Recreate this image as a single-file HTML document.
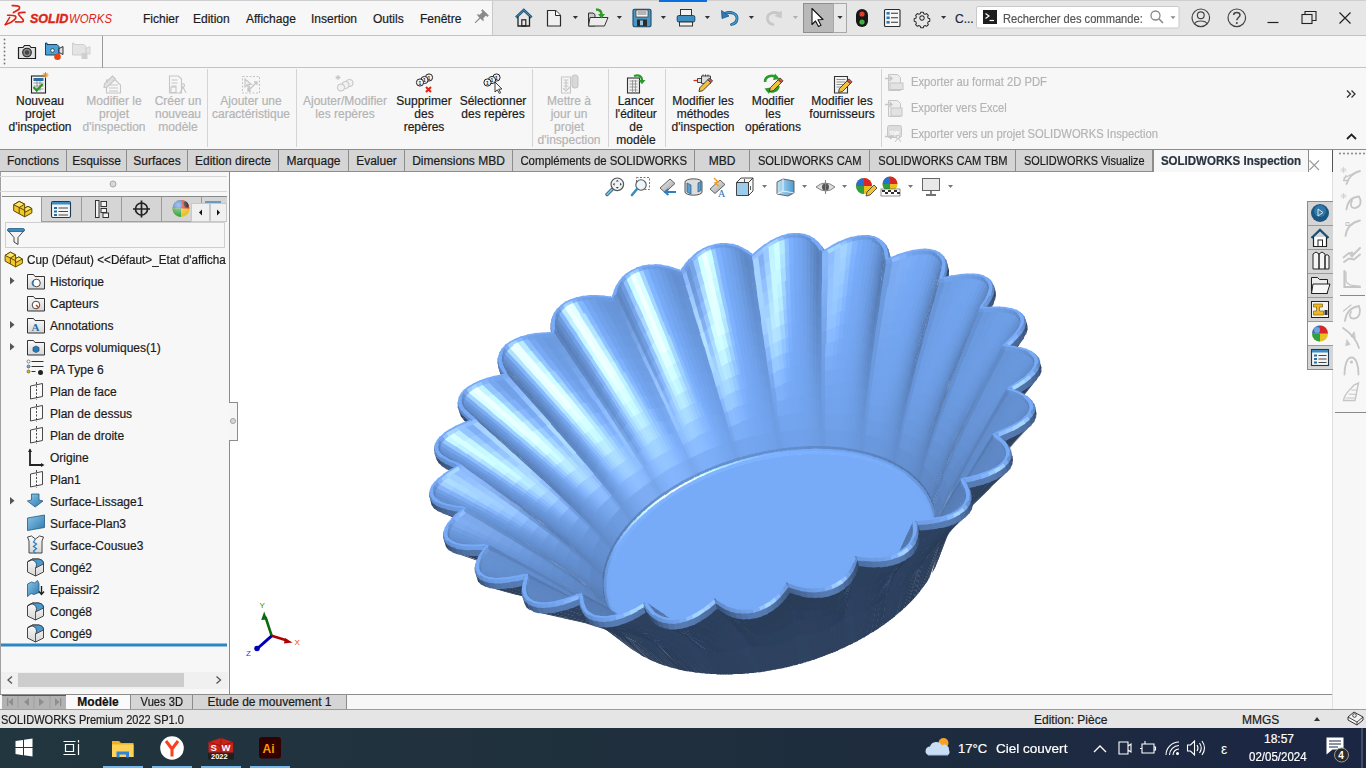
<!DOCTYPE html>
<html><head><meta charset="utf-8">
<style>
*{margin:0;padding:0;box-sizing:border-box}
html,body{width:1366px;height:768px;overflow:hidden;background:#fff;font-family:"Liberation Sans",sans-serif;font-size:12px;color:#1b1b1b;-webkit-text-stroke:0.2px}
.a{position:absolute}
.t{position:absolute;white-space:nowrap;line-height:14px;margin-top:1px}
.c{text-align:center}
.dis{color:#b4b4b4}
svg{position:absolute;overflow:visible}
</style></head><body>

<!-- TITLE BAR -->
<div class="a" style="left:0;top:0;width:1366px;height:36px;background:#f7f7f7;border-top:1px solid #cfcfcf;border-bottom:1px solid #c2c2c2"></div>
<div class="a" style="left:492px;top:1px;width:874px;height:34px;background:#e6e6e6;border-left:1px solid #c8c8c8"></div>


<!-- TITLE ICONS -->
<svg class="a" style="left:0;top:0" width="1366" height="36" viewBox="0 0 1366 36">
 <!-- 3DS logo -->
 <g fill="none" stroke="#dd2418" stroke-linecap="round" stroke-linejoin="round">
  <path d="M12.3 5.6 C15 5.5 17.5 5.6 19 6.4 C20 7.2 19.6 8.6 18.3 9.8 L13.4 12.6" stroke-width="1.7"/>
  <path d="M7.6 15.3 C10 15.2 13.5 15.3 15.2 15.9 C16.4 16.6 16 18.2 14.6 19.6 C12.5 21.8 8.5 23.8 5.3 24.6" stroke-width="1.6"/>
  <path d="M9.7 17.4 L5.3 24.6" stroke-width="1.5"/>
  <path d="M25 12.4 C22.5 12.3 20 12.4 18.9 12.9 C18.2 13.4 18.4 14.3 19.2 15.2 L22.8 19.3 C23.8 20.6 23.4 21.9 21.6 22 L15.6 21.9" stroke-width="1.7"/>
 </g>
 <text x="30" y="23" font-family="Liberation Sans" font-weight="bold" font-style="italic" font-size="12.5" fill="#dd2418" stroke="#dd2418" stroke-width="0.4">SOLID</text>
 <text x="69" y="23" font-family="Liberation Sans" font-style="italic" font-size="12.5" fill="#dd2418" textLength="43" lengthAdjust="spacingAndGlyphs">WORKS</text>
 <!-- pin -->
 <g transform="translate(480,18) rotate(45)" fill="#8a8a8a">
  <rect x="-2.5" y="-7" width="5" height="7"/>
  <rect x="-4.5" y="-8" width="9" height="2"/>
  <path d="M-5 0 L5 0 L3 -2 L-3 -2Z"/>
  <rect x="-0.6" y="0" width="1.2" height="7"/>
 </g>
 <!-- home -->
 <g>
  <path d="M516 17.5 L523.8 10 L531.6 17.5" fill="none" stroke="#1e5275" stroke-width="2.6" stroke-linejoin="miter"/>
  <path d="M516 17.5 L523.8 10 L531.6 17.5" fill="none" stroke="#5d9cc2" stroke-width="0.9"/>
  <path d="M518 16.5 V26 H529.5 V16.5" fill="none" stroke="#222" stroke-width="1.3"/>
  <rect x="521.8" y="19.8" width="4" height="6.2" fill="none" stroke="#222" stroke-width="1.2"/>
 </g>
 <!-- new doc -->
 <path d="M547.5 10.5 H555.5 L560.5 15.5 V26 H547.5 Z" fill="#f0f0f0" stroke="#2a2a2a" stroke-width="1.2" stroke-linejoin="round"/>
 <path d="M555.5 10.5 V15.5 H560.5" fill="#fff" stroke="#2a2a2a" stroke-width="1"/>
 <!-- arrows -->
 <g fill="#333">
  <path d="M572.8 16 h5.2 l-2.6 3z"/>
  <path d="M616.8 16 h5.2 l-2.6 3z"/>
  <path d="M660.8 16 h5.2 l-2.6 3z"/>
  <path d="M704.8 16 h5.2 l-2.6 3z"/>
  <path d="M748.8 16 h5.2 l-2.6 3z"/>
  <path d="M792.8 16 h5.2 l-2.6 3z" fill="#b0b0b0"/>
  <path d="M837.4 16 h5.2 l-2.6 3z"/>
  <path d="M941 16 h5.2 l-2.6 3z"/>
 </g>
 <!-- open folder -->
 <path d="M588.5 13 H593 L595 14.5 V26 H588.5 Z" fill="#c9c9c9" stroke="#333" stroke-width="1"/>
 <path d="M590 17.5 H608 L604.5 26 H588.5 Z" fill="#ececec" stroke="#333" stroke-width="1" stroke-linejoin="round"/>
 <path d="M596 9.5 C600 9.5 601.5 11 601.5 14.5" fill="none" stroke="#2e9a2a" stroke-width="2.4"/>
 <path d="M598 14 L605 14 L601.5 18.5Z" fill="#2e9a2a"/>
 <!-- save -->
 <rect x="633" y="9.3" width="18" height="17.5" rx="1.5" fill="#4a97c6" stroke="#1d4a6b" stroke-width="1.1"/>
 <rect x="636" y="10" width="12" height="7" fill="#f5f5f5" stroke="#333" stroke-width="0.7"/>
 <path d="M637.5 12 h9 M637.5 14 h9" stroke="#555" stroke-width="0.8"/>
 <rect x="637" y="19.5" width="10" height="6.8" fill="#2b2b2b"/>
 <rect x="640" y="20.5" width="3" height="4.8" fill="#9ac6e2"/>
 <!-- printer -->
 <rect x="680.5" y="9.5" width="11" height="6" fill="#f2f2f2" stroke="#333" stroke-width="1"/>
 <rect x="677.2" y="15.5" width="17.6" height="6.5" rx="1.5" fill="#3f8fc0" stroke="#1b4866" stroke-width="1"/>
 <rect x="679.5" y="22" width="13" height="4" fill="#f3f3f3" stroke="#333" stroke-width="1"/>
 <!-- undo -->
 <path d="M724.5 13.5 C731 11 737.5 13.5 737 19 C736.6 22.5 734 24 731.5 24.5" fill="none" stroke="#1c5a88" stroke-width="2.8" stroke-linecap="round"/>
 <path d="M724.5 13.5 C731 11 737.5 13.5 737 19 C736.6 22.5 734 24 731.5 24.5" fill="none" stroke="#4ea6dc" stroke-width="1.2" stroke-linecap="round"/>
 <path d="M721.5 10.5 L722 18.5 L729 16Z" fill="#2e7ab4" stroke="#1c5a88" stroke-width="0.8"/>
 <!-- redo (disabled) -->
 <path d="M779.5 13.5 C773 11 767 13.5 767.5 19 C768 22.5 770.5 24 773 24.5" fill="none" stroke="#c8c8c8" stroke-width="2.8" stroke-linecap="round"/>
 <path d="M782 10.5 L781.5 18.5 L774.5 16Z" fill="#c8c8c8"/>
 <!-- select btn -->
 <rect x="803.5" y="3.5" width="30" height="29" fill="#b9b9b9" stroke="#8e8e8e" stroke-width="1"/>
 <rect x="833.5" y="3.5" width="13" height="29" fill="#e8e8e8" stroke="#a8a8a8" stroke-width="1"/>
 <path d="M812 8.5 V24.5 L815.5 21 L818.5 26.5 L821 25.3 L818 19.8 L823 19.5 Z" fill="#fff" stroke="#111" stroke-width="1.1" stroke-linejoin="round"/>
 <path d="M837.4 16 h5.2 l-2.6 3z" fill="#333"/>
 <!-- traffic light -->
 <rect x="856" y="9" width="12" height="18" rx="6" fill="#161616"/>
 <circle cx="862" cy="14" r="2.6" fill="#e23d2a"/>
 <circle cx="862" cy="22" r="2.6" fill="#3fae3a"/>
 <!-- list -->
 <rect x="884.5" y="9.5" width="15.5" height="17" rx="1" fill="#f7f7f7" stroke="#2b2b2b" stroke-width="1.1"/>
 <g fill="#2a7ab8"><rect x="886.5" y="12" width="3.2" height="2.6"/><rect x="886.5" y="16.5" width="3.2" height="2.6"/><rect x="886.5" y="21" width="3.2" height="2.6"/></g>
 <path d="M891 13.3 h7 M891 17.8 h7 M891 22.3 h7" stroke="#333" stroke-width="1.1"/>
 <!-- gear -->
 <g transform="translate(922,18) scale(0.78)" fill="none" stroke="#2b2b2b" stroke-width="1.3">
  <path d="M-1.6 -7.5 h3.2 l0.6 2 l1.9 0.8 l1.8 -1 l2.3 2.3 l-1 1.8 l0.8 1.9 l2 0.6 v3.2 l-2 0.6 l-0.8 1.9 l1 1.8 l-2.3 2.3 l-1.8 -1 l-1.9 0.8 l-0.6 2 h-3.2 l-0.6 -2 l-1.9 -0.8 l-1.8 1 l-2.3 -2.3 l1 -1.8 l-0.8 -1.9 l-2 -0.6 v-3.2 l2 -0.6 l0.8 -1.9 l-1 -1.8 l2.3 -2.3 l1.8 1 l1.9 -0.8 z" stroke-linejoin="round"/>
  <circle r="2.8"/>
 </g>
 <!-- search box -->
 <rect x="976.5" y="6.5" width="202.5" height="21.5" rx="1.5" fill="#fff" stroke="#c9c9c9"/>
 <rect x="983" y="10" width="14" height="14" fill="#1e1e1e"/>
 <path d="M985.5 13.5 L989 16 L985.5 18.5" fill="none" stroke="#fff" stroke-width="1.2"/>
 <path d="M989.5 20.5 h4.5" stroke="#fff" stroke-width="1.2"/>
 <circle cx="1155.5" cy="15.5" r="4.5" fill="none" stroke="#888" stroke-width="1.3"/>
 <path d="M1158.8 18.8 L1163 23" stroke="#888" stroke-width="1.6"/>
 <path d="M1170.5 16.3 h5 l-2.5 2.8z" fill="#888"/>
 <!-- user -->
 <circle cx="1200.8" cy="17.8" r="8.8" fill="none" stroke="#444" stroke-width="1.2"/>
 <circle cx="1200.8" cy="15.3" r="3.4" fill="none" stroke="#444" stroke-width="1.2"/>
 <path d="M1194.5 24 C1196 20 1205.6 20 1207.1 24" fill="none" stroke="#444" stroke-width="1.2"/>
 <!-- help -->
 <circle cx="1236.8" cy="17.8" r="8.8" fill="none" stroke="#444" stroke-width="1.2"/>
 <path d="M1233.6 15 C1233.6 11.5 1240 11.5 1240 15 C1240 17.5 1236.8 17.5 1236.8 20.3" fill="none" stroke="#444" stroke-width="1.5"/>
 <circle cx="1236.8" cy="23" r="1" fill="#444"/>
 <!-- min / restore / close -->
 <path d="M1267.5 22.5 h11" stroke="#222" stroke-width="1.2"/>
 <rect x="1302" y="14.5" width="10" height="9" fill="none" stroke="#222" stroke-width="1.1"/>
 <path d="M1305 14.5 v-3 h11 v9 h-3.8" fill="none" stroke="#222" stroke-width="1.1"/>
 <path d="M1339.5 12.5 L1350.5 23.5 M1350.5 12.5 L1339.5 23.5" stroke="#222" stroke-width="1.2"/>
</svg>
<div class="t" style="left:955px;top:11px;color:#1c2540">C...</div>
<div class="t" style="left:1003px;top:11px;color:#555;font-size:12.5px;transform:scaleX(0.89);transform-origin:0 0">Rechercher des commande:</div>

<div class="a" style="left:659px;top:0;width:48px;height:2px;background:#0a6fdc"></div>
<div id="menu">
<div class="t" style="left:143px;top:11px">Fichier</div>
<div class="t" style="left:193px;top:11px">Edition</div>
<div class="t" style="left:246px;top:11px">Affichage</div>
<div class="t" style="left:311px;top:11px">Insertion</div>
<div class="t" style="left:373px;top:11px">Outils</div>
<div class="t" style="left:420px;top:11px">Fenêtre</div>
</div>

<!-- SECOND TOOLBAR ROW -->
<div class="a" style="left:0;top:36px;width:1366px;height:32px;background:#f7f7f7;border-bottom:1px solid #c4c4c4"></div>
<div class="a" style="left:102px;top:36px;width:1px;height:32px;background:#9a9a9a"></div>

<!-- COMMAND MANAGER -->
<div class="a" style="left:0;top:68px;width:1366px;height:81px;background:#f7f7f7"></div>
<div id="cmsep">
<div class="a" style="left:207px;top:69px;width:1px;height:78px;background:#d4d4d4"></div>
<div class="a" style="left:296px;top:69px;width:1px;height:78px;background:#d4d4d4"></div>
<div class="a" style="left:532px;top:69px;width:1px;height:78px;background:#d4d4d4"></div>
<div class="a" style="left:608px;top:69px;width:1px;height:78px;background:#d4d4d4"></div>
<div class="a" style="left:665px;top:69px;width:1px;height:78px;background:#d4d4d4"></div>
<div class="a" style="left:881px;top:69px;width:1px;height:78px;background:#d4d4d4"></div>
</div>


<!-- ROW2 ICONS -->
<svg class="a" style="left:0;top:36px" width="110" height="32" viewBox="0 36 110 32">
 <g fill="#777"><circle cx="4.5" cy="39.5" r="0.9"/><circle cx="4.5" cy="43.5" r="0.9"/><circle cx="4.5" cy="47.5" r="0.9"/><circle cx="4.5" cy="51.5" r="0.9"/><circle cx="4.5" cy="55.5" r="0.9"/><circle cx="4.5" cy="59.5" r="0.9"/><circle cx="4.5" cy="63.5" r="0.9"/></g>
 <path d="M18.5 47.5 h4.5 l1.5 -2 h5 l1.5 2 h4.5 v11 h-17 z" fill="#e2e2e2" stroke="#222" stroke-width="1.2" stroke-linejoin="round"/>
 <circle cx="27" cy="52.5" r="4.3" fill="#888" stroke="#222" stroke-width="1.1"/>
 <circle cx="27" cy="52.5" r="2.2" fill="#444"/>
 <path d="M45.5 43 h1.5 v1.5 h10 l2 2 v8.5 h-13.5z" fill="#4aa2d6" stroke="#1c3f5a" stroke-width="1"/>
 <path d="M59 48.5 l4 -2 v8 l-4 -2z" fill="#ddd" stroke="#222" stroke-width="0.9"/>
 <circle cx="52.5" cy="50.5" r="1.8" fill="#fff" stroke="#222" stroke-width="0.7"/>
 <circle cx="57.5" cy="56.8" r="3.3" fill="#e8420e"/>
 <path d="M72.5 43 h1.5 v1.5 h10 l2 2 v8.5 h-13.5z" fill="#e4e4e4" stroke="#cfcfcf" stroke-width="1"/>
 <path d="M86 48.5 l4 -2 v8 l-4 -2z" fill="#e4e4e4" stroke="#cfcfcf" stroke-width="0.9"/>
 <rect x="81.5" y="53" width="6" height="6" fill="#d0d0d0"/>
</svg>

<!-- CM ICONS -->
<svg class="a" style="left:0;top:68px" width="1366" height="82" viewBox="0 68 1366 82">
 <!-- 1 nouveau projet -->
 <rect x="31.5" y="76" width="14" height="17" fill="#f4f4f4" stroke="#222" stroke-width="1.1"/>
 <rect x="33.5" y="78" width="10" height="3" fill="#2f6ea3"/>
 <path d="M33.5 83 h10 M33.5 86 h10 M33.5 89 h10 M37 81 v10 M40 81 v10" stroke="#8a8a8a" stroke-width="0.8"/>
 <path d="M33.5 87 l3.2 3.5 l6 -6.5" fill="none" stroke="#2a9a2a" stroke-width="2.2"/>
 <g stroke="#e58a0a" stroke-width="1"><path d="M45.5 72 v6 M42.5 75 h6 M43.4 72.9 l4.2 4.2 M47.6 72.9 l-4.2 4.2"/></g>
 <!-- 2 modifier projet disabled -->
 <g stroke="#c6c6c6" fill="none" stroke-width="1.1">
  <path d="M106.5 80 h9 l5 5 v8 h-14z"/><path d="M109 85 h9 M109 88 h9 M109 91 h9"/>
  <path d="M104.5 84 l8 -8 l3 3 l-8 8 l-3.5 0.5z" fill="#e0e0e0"/>
 </g>
 <!-- 3 creer nouveau modele disabled -->
 <g stroke="#c6c6c6" fill="none" stroke-width="1.1">
  <path d="M169.5 76 h9 l3 3 v14 h-12z"/><path d="M171.5 80 h6 M171.5 83 h6 M171.5 86 h5"/>
  <rect x="171" y="87" width="5" height="5.5"/>
  <circle cx="183" cy="85.5" r="1.6"/><path d="M180 93 l3 -6 l3 6"/>
 </g>
 <!-- 4 ajouter caracteristique disabled -->
 <g stroke="#c6c6c6" fill="none" stroke-width="1.1">
  <rect x="242.5" y="76.5" width="17" height="16.5" stroke-dasharray="2 1.5"/>
  <path d="M245 79 v8 l2 -2 l2 4 l1.3 -0.6 l-2 -3.8 l3 -0.2z" fill="#eee"/>
  <path d="M248 91 l9 -9 M254 82 h3 v3 M248 88 v3 h3" stroke-width="1.3"/>
 </g>
 <!-- 5 ajouter modifier reperes disabled -->
 <g stroke="#c3c3c3" fill="#f2f2f2" stroke-width="1">
  <circle cx="349.5" cy="83" r="3.6"/><circle cx="345.5" cy="85" r="3.6"/><circle cx="341" cy="87.5" r="3.6"/>
  <path d="M338 75 v5 M335.5 77.5 h5 M336.3 75.8 l3.4 3.4 M339.7 75.8 l-3.4 3.4" fill="none"/>
 </g>
 <!-- 6 supprimer reperes -->
 <g stroke="#222" fill="#f4f4f4" stroke-width="1">
  <circle cx="429" cy="77.5" r="3.6"/><circle cx="424.5" cy="80" r="3.6"/><circle cx="420" cy="82.5" r="3.6"/>
 </g>
 <g font-family="Liberation Sans" font-size="5" font-weight="bold" fill="#222"><text x="418.5" y="84.5">1</text><text x="423" y="82">1</text><text x="427.5" y="79.5">1</text></g>
 <path d="M426 87 l5 5 M431 87 l-5 5" stroke="#e02010" stroke-width="2"/>
 <!-- 7 selectionner reperes -->
 <g stroke="#222" fill="#f4f4f4" stroke-width="1">
  <circle cx="496.5" cy="77.5" r="3.6"/><circle cx="492" cy="80" r="3.6"/><circle cx="487.5" cy="82.5" r="3.6"/>
 </g>
 <g font-family="Liberation Sans" font-size="5" font-weight="bold" fill="#222"><text x="486" y="84.5">1</text><text x="490.5" y="82">1</text><text x="495" y="79.5">1</text></g>
 <path d="M495 82 v10 l2.3 -2.2 l2 3.6 l1.4 -0.7 l-2 -3.5 l3.2 -0.2z" fill="#fff" stroke="#222" stroke-width="0.9"/>
 <!-- 8 mettre a jour disabled -->
 <g stroke="#c6c6c6" fill="none" stroke-width="1.1">
  <path d="M561.5 77 h9 v16 h-9z"/><path d="M563.5 80 h5 M563.5 83 h5 M563.5 86 h5 M566 80 v9"/>
  <rect x="572" y="75" width="6" height="13" rx="3" fill="#d8d8d8"/>
  <path d="M563 88 l3 3 l4 -4"/>
 </g>
 <!-- 9 lancer editeur -->
 <rect x="627.5" y="78" width="12" height="15" fill="#f0f0f0" stroke="#333" stroke-width="1.1"/>
 <path d="M629.5 81 h8 M629.5 84 h8 M629.5 87 h8 M629.5 90 h8 M632.5 80 v12 M635.5 80 v12" stroke="#8a8a8a" stroke-width="0.8"/>
 <path d="M634 76 C639 74.5 642 76 642 80.5" fill="none" stroke="#2a9a2a" stroke-width="2.2"/>
 <path d="M638.5 80 h7 l-3.5 4.2z" fill="#2a9a2a"/>
 <!-- 10 modifier methodes -->
 <g>
  <path d="M693.5 80.5 h4" stroke="#d42a1a" stroke-width="1.2"/>
  <path d="M697.5 78.5 h4 v4 h-4z M701.5 76 h9 v7.5 h-9z" fill="#ddd" stroke="#333" stroke-width="0.9"/>
  <path d="M703 76 v-1.5 M705.5 76 v-1.5 M708 76 v-1.5" stroke="#333"/>
  <path d="M699 91.5 l0.8 -3.8 l8 -8 l3 3 l-8 8z" fill="#f2c33a" stroke="#333" stroke-width="0.9"/>
  <path d="M707.8 79.7 l1.8 -1.8 l3 3 l-1.8 1.8z" fill="#e04a4a" stroke="#333" stroke-width="0.8"/>
 </g>
 <!-- 11 modifier operations -->
 <g>
  <path d="M765 82 C765 76 772 74 777 77.5" fill="none" stroke="#2a9a2a" stroke-width="2.6"/>
  <path d="M775 73.5 l4.5 5.5 l-6.5 1z" fill="#2a9a2a"/>
  <path d="M778.5 86 C778 91 771.5 93 767 90" fill="none" stroke="#2a9a2a" stroke-width="2.6"/>
  <path d="M769 94 l-4.5 -5.5 l6.5 -1z" fill="#2a9a2a"/>
  <path d="M769.5 91.5 l0.8 -3.8 l8 -8 l3 3 l-8 8z" fill="#f2c33a" stroke="#333" stroke-width="0.9"/>
  <path d="M778.3 79.7 l1.8 -1.8 l3 3 l-1.8 1.8z" fill="#e04a4a" stroke="#333" stroke-width="0.8"/>
 </g>
 <!-- 12 modifier fournisseurs -->
 <g>
  <path d="M834.5 76.5 h13 v16.5 h-13z" fill="#f4f4f4" stroke="#333" stroke-width="1.1"/>
  <path d="M836.5 79.5 h9 M836.5 82 h9 M836.5 84.5 h7 M836.5 87 h5" stroke="#777" stroke-width="0.8"/>
  <path d="M838.5 92.5 l0.8 -3.8 l8 -8 l3 3 l-8 8z" fill="#f2c33a" stroke="#333" stroke-width="0.9"/>
  <path d="M847.3 80.7 l1.8 -1.8 l3 3 l-1.8 1.8z" fill="#e04a4a" stroke="#333" stroke-width="0.8"/>
 </g>
 <!-- export icons disabled -->
 <g stroke="#c6c6c6" fill="#ededed" stroke-width="1">
  <path d="M888.5 74.5 h9 l3 3 v13 h-12z"/><rect x="890" y="83" width="13" height="6.5" fill="#e2e2e2"/>
  <path d="M885 78.5 h7 M889.5 76 l2.5 2.5 l-2.5 2.5" fill="none" stroke-width="1.4"/>
  <path d="M888.5 100.5 h9 l3 3 v13 h-12z"/><rect x="891" y="108" width="11" height="8" fill="#e2e2e2"/>
  <path d="M885 104.5 h7 M889.5 102 l2.5 2.5 l-2.5 2.5" fill="none" stroke-width="1.4"/>
  <rect x="887.5" y="125.5" width="14" height="12" rx="2" fill="#dcdcdc"/>
  <path d="M885 136.5 h8 M890 134 l3 2.5 l-3 2.5" fill="none" stroke-width="1.4"/>
  <circle cx="898" cy="137" r="1.8"/><path d="M895 142 l3 -4 l3 4" fill="none"/>
 </g>
 <text x="889.5" y="134.5" font-family="Liberation Sans" font-size="6" font-weight="bold" fill="#fff">SW</text>
 <!-- chevrons -->
 <path d="M1347 90.5 l3.5 3.5 l-3.5 3.5 M1351.5 90.5 l3.5 3.5 l-3.5 3.5" fill="none" stroke="#333" stroke-width="1.3"/>
 <path d="M1347 139 l4.5 -4.5 l4.5 4.5" fill="none" stroke="#222" stroke-width="1.8"/>
</svg>

<div id="cmtext">
<div class="t c" style="left:0px;top:94px;width:80px;line-height:13px">Nouveau<br>projet<br>d'inspection</div>
<div class="t c dis" style="left:74px;top:94px;width:80px;line-height:13px">Modifier le<br>projet<br>d'inspection</div>
<div class="t c dis" style="left:143px;top:94px;width:70px;line-height:13px">Créer un<br>nouveau<br>modèle</div>
<div class="t c dis" style="left:206px;top:94px;width:90px;line-height:13px">Ajouter une<br>caractéristique</div>
<div class="t c dis" style="left:300px;top:94px;width:90px;line-height:13px">Ajouter/Modifier<br>les repères</div>
<div class="t c" style="left:389px;top:94px;width:70px;line-height:13px">Supprimer<br>des<br>repères</div>
<div class="t c" style="left:458px;top:94px;width:70px;line-height:13px">Sélectionner<br>des repères</div>
<div class="t c dis" style="left:529px;top:94px;width:80px;line-height:13px">Mettre à<br>jour un<br>projet<br>d'inspection</div>
<div class="t c" style="left:606px;top:94px;width:60px;line-height:13px">Lancer<br>l'éditeur<br>de<br>modèle</div>
<div class="t c" style="left:663px;top:94px;width:80px;line-height:13px">Modifier les<br>méthodes<br>d'inspection</div>
<div class="t c" style="left:733px;top:94px;width:80px;line-height:13px">Modifier<br>les<br>opérations</div>
<div class="t c" style="left:802px;top:94px;width:80px;line-height:13px">Modifier les<br>fournisseurs</div>
<div class="t dis" style="left:911px;top:74px;transform:scaleX(0.935);transform-origin:0 0">Exporter au format 2D PDF</div>
<div class="t dis" style="left:911px;top:100px;transform:scaleX(0.92);transform-origin:0 0">Exporter vers Excel</div>
<div class="t dis" style="left:911px;top:126px;transform:scaleX(0.935);transform-origin:0 0">Exporter vers un projet SOLIDWORKS Inspection</div>
</div>

<!-- TAB BAR -->
<div class="a" style="left:0;top:149px;width:1366px;height:1px;background:#8c8c8c"></div>
<div class="a" style="left:0;top:150px;width:1153px;height:21px;background:#d5d5d5"></div>
<div class="a" style="left:0;top:171px;width:1153px;height:1px;background:#8c8c8c"></div>


<!-- TABS -->
<div class="a" style="left:0px;top:150px;width:67px;height:21px;border-right:1px solid #8c8c8c;text-align:center;line-height:22px;white-space:nowrap"><span style="display:inline-block;">Fonctions</span></div>
<div class="a" style="left:67px;top:150px;width:60px;height:21px;border-right:1px solid #8c8c8c;text-align:center;line-height:22px;white-space:nowrap"><span style="display:inline-block;">Esquisse</span></div>
<div class="a" style="left:127px;top:150px;width:61px;height:21px;border-right:1px solid #8c8c8c;text-align:center;line-height:22px;white-space:nowrap"><span style="display:inline-block;">Surfaces</span></div>
<div class="a" style="left:188px;top:150px;width:91px;height:21px;border-right:1px solid #8c8c8c;text-align:center;line-height:22px;white-space:nowrap"><span style="display:inline-block;">Edition directe</span></div>
<div class="a" style="left:279px;top:150px;width:70px;height:21px;border-right:1px solid #8c8c8c;text-align:center;line-height:22px;white-space:nowrap"><span style="display:inline-block;">Marquage</span></div>
<div class="a" style="left:349px;top:150px;width:56px;height:21px;border-right:1px solid #8c8c8c;text-align:center;line-height:22px;white-space:nowrap"><span style="display:inline-block;">Evaluer</span></div>
<div class="a" style="left:405px;top:150px;width:108px;height:21px;border-right:1px solid #8c8c8c;text-align:center;line-height:22px;white-space:nowrap"><span style="display:inline-block;">Dimensions MBD</span></div>
<div class="a" style="left:513px;top:150px;width:182px;height:21px;border-right:1px solid #8c8c8c;text-align:center;line-height:22px;white-space:nowrap"><span style="display:inline-block;transform:scaleX(0.95);">Compléments de SOLIDWORKS</span></div>
<div class="a" style="left:695px;top:150px;width:55px;height:21px;border-right:1px solid #8c8c8c;text-align:center;line-height:22px;white-space:nowrap"><span style="display:inline-block;">MBD</span></div>
<div class="a" style="left:750px;top:150px;width:120px;height:21px;border-right:1px solid #8c8c8c;text-align:center;line-height:22px;white-space:nowrap"><span style="display:inline-block;transform:scaleX(0.93);">SOLIDWORKS CAM</span></div>
<div class="a" style="left:870px;top:150px;width:146px;height:21px;border-right:1px solid #8c8c8c;text-align:center;line-height:22px;white-space:nowrap"><span style="display:inline-block;transform:scaleX(0.925);">SOLIDWORKS CAM TBM</span></div>
<div class="a" style="left:1016px;top:150px;width:137px;height:21px;border-right:1px solid #8c8c8c;text-align:center;line-height:22px;white-space:nowrap"><span style="display:inline-block;transform:scaleX(0.91);">SOLIDWORKS Visualize</span></div>
<div class="a" style="left:1153px;top:149px;width:156px;height:23px;background:#f7f7f7;border:1px solid #8c8c8c;border-bottom:none;text-align:center;line-height:22px;font-weight:bold;color:#2a3340;white-space:nowrap"><span style="display:inline-block;transform:scaleX(0.96)">SOLIDWORKS Inspection</span></div>
<div class="a" style="left:1309px;top:150px;width:23px;height:22px;background:#fff"></div>
<svg class="a" style="left:1305px;top:155px" width="20" height="20"><path d="M4.5 5.5 L14 15 M14 5.5 L4.5 15" stroke="#9a9a9a" stroke-width="1.1"/></svg>

<!-- LEFT PANEL -->
<div class="a" style="left:0;top:172px;width:230px;height:522px;background:#f7f7f7;border-right:1px solid #8c8c8c"></div>


<!-- LEFT PANEL CONTENT -->

<div class="a" style="left:0;top:172px;width:1px;height:522px;background:#a0a0a0"></div>
<div class="a" style="left:0;top:176px;width:227px;height:1px;background:#d6d6d6"></div>
<div class="a" style="left:0;top:191px;width:227px;height:1px;background:#d6d6d6"></div>
<svg class="a" style="left:108px;top:179px" width="10" height="10"><circle cx="5" cy="5" r="3" fill="#d8d8d8" stroke="#a8a8a8" stroke-width="1"/></svg>
<div class="a" style="left:2px;top:196px;width:225px;height:1px;background:#8a8a8a"></div>
<div class="a" style="left:41px;top:197px;width:186px;height:25px;background:#d5d5d5"></div>
<div class="a" style="left:41px;top:197px;width:1px;height:25px;background:#9a9a9a"></div>
<div class="a" style="left:81px;top:197px;width:1px;height:25px;background:#9a9a9a"></div>
<div class="a" style="left:121px;top:197px;width:1px;height:25px;background:#9a9a9a"></div>
<div class="a" style="left:161px;top:197px;width:1px;height:25px;background:#9a9a9a"></div>
<div class="a" style="left:201px;top:197px;width:1px;height:25px;background:#9a9a9a"></div>
<div class="a" style="left:2px;top:221px;width:225px;height:1px;background:#a0a0a0"></div>
<div class="a" style="left:2px;top:197px;width:39px;height:25px;background:#f7f7f7"></div>
<div class="a" style="left:5px;top:222px;width:220px;height:26px;background:#f7f7f7;border:1px solid #cfcfcf"></div>
<div class="t" style="left:27px;top:252px;transform:scaleX(0.975);transform-origin:0 0">Cup (Défaut) &lt;&lt;Défaut&gt;_Etat d'afficha</div>
<div class="t" style="left:50px;top:274px">Historique</div>
<div class="t" style="left:50px;top:296px">Capteurs</div>
<div class="t" style="left:50px;top:318px">Annotations</div>
<div class="t" style="left:50px;top:340px">Corps volumiques(1)</div>
<div class="t" style="left:50px;top:362px">PA Type 6</div>
<div class="t" style="left:50px;top:384px">Plan de face</div>
<div class="t" style="left:50px;top:406px">Plan de dessus</div>
<div class="t" style="left:50px;top:428px">Plan de droite</div>
<div class="t" style="left:50px;top:450px">Origine</div>
<div class="t" style="left:50px;top:472px">Plan1</div>
<div class="t" style="left:50px;top:494px">Surface-Lissage1</div>
<div class="t" style="left:50px;top:516px">Surface-Plan3</div>
<div class="t" style="left:50px;top:538px">Surface-Cousue3</div>
<div class="t" style="left:50px;top:560px">Congé2</div>
<div class="t" style="left:50px;top:582px">Epaissir2</div>
<div class="t" style="left:50px;top:604px">Congé8</div>
<div class="t" style="left:50px;top:626px">Congé9</div>
<div class="a" style="left:0;top:230px;width:229px;height:0"></div>


<!-- LEFT PANEL ICONS -->
<svg class="a" style="left:0;top:172px" width="230" height="522" viewBox="0 172 230 522">
 <defs>
  <linearGradient id="gy" x1="0" y1="0" x2="1" y2="1"><stop offset="0" stop-color="#ffe680"/><stop offset="1" stop-color="#e0b000"/></linearGradient>
  <linearGradient id="bl" x1="0" y1="0" x2="1" y2="1"><stop offset="0" stop-color="#8cc8ec"/><stop offset="1" stop-color="#2f78a8"/></linearGradient>
  <linearGradient id="fd" x1="0" y1="0" x2="0" y2="1"><stop offset="0" stop-color="#fafafa"/><stop offset="1" stop-color="#d6d6d6"/></linearGradient>
  <radialGradient id="ball" cx="0.35" cy="0.3" r="0.7"><stop offset="0" stop-color="#fff" stop-opacity="0.6"/><stop offset="1" stop-color="#fff" stop-opacity="0"/></radialGradient>
 </defs>
 <!-- part icon in tab -->
 <g stroke="#5a4600" stroke-width="0.9" stroke-linejoin="round" transform="translate(22.5,208) scale(1.1)">
  <path d="M-8 -3 L-3 -6 L2 -3.5 L2 0 L5 -1.5 L8.5 0.5 L8.5 4.5 L2 8 L-8 2.5 Z" fill="#f2c827"/>
  <path d="M-8 -3 L-3 -6 L2 -3.5 L-3 -0.5 Z" fill="#ffe56a"/>
  <path d="M2 0 L5 -1.5 L8.5 0.5 L2 4 Z" fill="#ffe56a"/>
  <path d="M-3 -0.5 V5 M2 4 V8 M-3 -0.5 L2 2.2 L2 4" fill="none"/>
 </g>
 <!-- property list icon -->
 <rect x="51.5" y="201.5" width="19" height="16" rx="1.5" fill="#f4f4f4" stroke="#1d3a55" stroke-width="1.1"/>
 <rect x="52" y="202" width="18" height="2.5" fill="#3f8cc0"/>
 <g fill="#2a6da0"><rect x="54" y="207" width="3" height="2"/><rect x="54" y="210.5" width="3" height="2"/><rect x="54" y="214" width="3" height="2"/></g>
 <path d="M58.5 208 h9.5 M58.5 211.5 h9.5 M58.5 215 h9.5" stroke="#333" stroke-width="0.9"/>
 <!-- config tree icon -->
 <g fill="#f4f4f4" stroke="#333" stroke-width="1">
  <rect x="95.5" y="200.5" width="3.5" height="17"/>
  <rect x="101" y="201.5" width="5.5" height="5"/><rect x="101" y="208.5" width="5.5" height="4"/><rect x="103" y="213" width="5.5" height="4.5"/>
 </g>
 <!-- crosshair icon -->
 <circle cx="141.5" cy="209" r="6" fill="none" stroke="#222" stroke-width="1.7"/>
 <path d="M141.5 200.5 v17 M133 209 h17" stroke="#222" stroke-width="1.7"/>
 <!-- colour ball -->
 <circle cx="181" cy="208.5" r="8.5" fill="#e8c020"/>
 <path d="M181 208.5 L172.5 208.5 A8.5 8.5 0 0 1 181 200 Z" fill="#2a6fd0"/>
 <path d="M181 208.5 L181 200 A8.5 8.5 0 0 1 189.5 208.5 Z" fill="#d8262a"/>
 <path d="M181 208.5 L172.5 208.5 A8.5 8.5 0 0 0 181 217 Z" fill="#2ea040"/>
 <ellipse cx="186" cy="204.5" rx="2.2" ry="3.2" fill="#222" transform="rotate(-30 186 204.5)"/>
 <circle cx="181" cy="208.5" r="8.5" fill="url(#ball)"/>
 <rect x="205" y="201" width="16" height="6" fill="#3d7fb8" opacity="0.7"/>
 <!-- scroll buttons -->
 <rect x="191.5" y="203.5" width="18" height="18" fill="#f0f0f0" stroke="#c8c8c8"/>
 <rect x="210.5" y="203.5" width="16" height="18" fill="#f0f0f0" stroke="#c8c8c8"/>
 <path d="M202 209.5 v6 l-3 -3z" fill="#111"/>
 <path d="M217 209.5 v6 l3 -3z" fill="#111"/>
 <!-- filter -->
 <path d="M8 230.5 h16 l-6 7 v7 l-4 -2.5 v-4.5z" fill="#f4f4f4" stroke="#333" stroke-width="0.9" stroke-linejoin="round"/>
 <rect x="7.5" y="228.5" width="17" height="3" rx="1.5" fill="#3a8cc4" stroke="#1d4f75" stroke-width="0.7"/>
 <!-- cup part icon -->
 <g stroke="#5a4600" stroke-width="0.9" stroke-linejoin="round" transform="translate(13.5,258.5) scale(1.05)">
  <path d="M-8 -3 L-3 -6 L2 -3.5 L2 0 L5 -1.5 L8.5 0.5 L8.5 4.5 L2 8 L-8 2.5 Z" fill="#f2c827"/>
  <path d="M-8 -3 L-3 -6 L2 -3.5 L-3 -0.5 Z" fill="#ffe56a"/>
  <path d="M2 0 L5 -1.5 L8.5 0.5 L2 4 Z" fill="#ffe56a"/>
  <path d="M-3 -0.5 V5 M2 4 V8 M-3 -0.5 L2 2.2 L2 4" fill="none"/>
 </g>
 <!-- expand arrows -->
 <g fill="#555"><path d="M10 277 l4.5 3.8 l-4.5 3.8z"/><path d="M10 321 l4.5 3.8 l-4.5 3.8z"/><path d="M10 343 l4.5 3.8 l-4.5 3.8z"/><path d="M10 497 l4.5 3.8 l-4.5 3.8z"/></g>
 <!-- folders -->
 <g stroke="#333" stroke-width="1" fill="url(#fd)">
  <path d="M27.5 274.5 h6 l1.5 2 h9.5 v12.5 h-17z"/>
  <path d="M27.5 296.5 h6 l1.5 2 h9.5 v12.5 h-17z"/>
  <path d="M27.5 318.5 h6 l1.5 2 h9.5 v12.5 h-17z"/>
  <path d="M27.5 340.5 h6 l1.5 2 h9.5 v12.5 h-17z"/>
 </g>
 <g><circle cx="36.5" cy="283" r="3.8" fill="#fff" stroke="#333" stroke-width="0.9"/><path d="M33 281 a4 4 0 0 0 1 5" fill="none" stroke="#2a7ab8" stroke-width="1.6"/></g>
 <g><circle cx="36" cy="305" r="3.8" fill="#fff" stroke="#333" stroke-width="0.9"/><path d="M36 305 l2.5 2.5" stroke="#e03010" stroke-width="1.5"/></g>
 <text x="31.5" y="331" font-family="Liberation Serif" font-weight="bold" font-size="11" fill="#2a6da0">A</text>
 <path d="M33 347.5 l3 -1.5 l3 1.5 v3.5 l-3 1.5 l-3 -1.5z" fill="#2a7ab8" stroke="#1a4a70" stroke-width="0.7"/>
 <!-- PA Type -->
 <g><circle cx="28.5" cy="361.5" r="1.5" fill="#fff" stroke="#555" stroke-width="0.7"/><circle cx="28.5" cy="366.5" r="1.5" fill="#5ab0e0" stroke="#555" stroke-width="0.7"/><circle cx="28.5" cy="371.5" r="1.5" fill="#f0b010" stroke="#555" stroke-width="0.7"/>
 <path d="M31.5 361.5 h12 M31.5 366.5 h12 M31.5 371.5 h4" stroke="#333" stroke-width="1.1"/>
 <circle cx="40.5" cy="372.5" r="2.5" fill="#222"/></g>
 <!-- planes -->
 <g fill="#fafafa" stroke="#333" stroke-width="0.9">
  <path d="M30.5 386 l12 -2.5 v13 l-12 2.5z"/><path d="M30.5 408 l12 -2.5 v13 l-12 2.5z"/><path d="M30.5 430 l12 -2.5 v13 l-12 2.5z"/><path d="M30.5 474 l12 -2.5 v13 l-12 2.5z"/>
 </g>
 <g stroke="#333" stroke-width="0.9" stroke-dasharray="2 1.5"><path d="M36.5 382 v18 M36.5 404 v18 M36.5 426 v18 M36.5 470 v18"/></g>
 <!-- origin -->
 <path d="M30 449.5 v15.5 h13" fill="none" stroke="#222" stroke-width="1.8"/>
 <path d="M28 452 l2 -3.5 l2 3.5z M41 463 l3.5 2 l-3.5 2z" fill="#222"/>
 <!-- loft -->
 <path d="M31.5 494 h7.5 v6 l4 1 l-7.8 6 l-7.8 -6 l4 -1z" fill="url(#bl)" stroke="#1f5a84" stroke-width="0.8"/>
 <!-- surface plane -->
 <path d="M27.5 518 l17 -3 v12.5 l-17 3z" fill="url(#bl)" stroke="#1f5a84" stroke-width="0.8"/>
 <!-- knit -->
 <path d="M27.5 537 l4 -1 l4 3 l4 -3 l4 1 l-1.5 4 v12 h-13 v-12z" fill="url(#fd)" stroke="#333" stroke-width="0.9"/>
 <path d="M35.5 539 l-2 3 l3 2 l-3 2.5 l3 2 l-3 2.5 l2 2.5" fill="none" stroke="#2a7ab8" stroke-width="1.2"/>
 <!-- fillets -->
 <g>
  <path d="M27.5 562 l5 -3 h6 a6 5 0 0 1 5 5 v8 l-8 4 l-8 -4z" fill="url(#fd)" stroke="#333" stroke-width="0.9"/>
  <path d="M32.5 559 h6 a6 5 0 0 1 5 5 l-8 4 a5 5 0 0 0 -8 -6z" fill="#4a9ad0" stroke="#333" stroke-width="0.8"/>
  <path d="M35.5 568 v8" stroke="#333" stroke-width="0.8"/>
 </g>
 <g transform="translate(0,44)">
  <path d="M27.5 562 l5 -3 h6 a6 5 0 0 1 5 5 v8 l-8 4 l-8 -4z" fill="url(#fd)" stroke="#333" stroke-width="0.9"/>
  <path d="M32.5 559 h6 a6 5 0 0 1 5 5 l-8 4 a5 5 0 0 0 -8 -6z" fill="#4a9ad0" stroke="#333" stroke-width="0.8"/>
  <path d="M35.5 568 v8" stroke="#333" stroke-width="0.8"/>
 </g>
 <g transform="translate(0,66)">
  <path d="M27.5 562 l5 -3 h6 a6 5 0 0 1 5 5 v8 l-8 4 l-8 -4z" fill="url(#fd)" stroke="#333" stroke-width="0.9"/>
  <path d="M32.5 559 h6 a6 5 0 0 1 5 5 l-8 4 a5 5 0 0 0 -8 -6z" fill="#4a9ad0" stroke="#333" stroke-width="0.8"/>
  <path d="M35.5 568 v8" stroke="#333" stroke-width="0.8"/>
 </g>
 <!-- thicken -->
 <path d="M27.5 584 l4 -2 l3 1 l3 -2.5 l1.5 3 v9 l-5 2 l-3 -1 l-3.5 3z" fill="url(#bl)" stroke="#1f5a84" stroke-width="0.8"/>
 <path d="M41.5 586 v8 M39 591.5 l2.5 3 l2.5 -3" fill="none" stroke="#222" stroke-width="1.4"/>
 <!-- blue line -->
 <rect x="1" y="643.5" width="226" height="3" fill="#2f86c4"/>
 <!-- h scrollbar -->
 <rect x="1" y="672" width="227" height="17" fill="#f0f0f0"/>
 <rect x="18" y="673" width="166" height="14" fill="#cdcdcd"/>
 <path d="M12 676.5 l-4 3.5 l4 3.5 M216.5 676.5 l4 3.5 l-4 3.5" fill="none" stroke="#555" stroke-width="1.3"/>
</svg>

<!-- GRAPHICS -->
<div class="a" style="left:230px;top:172px;width:1103px;height:522px;background:#fff"></div>

<div class="a" style="left:229px;top:402px;width:9px;height:39px;background:#f5f5f5;border:1px solid #8c8c8c;border-left:none"></div>
<svg class="a" style="left:229px;top:415px" width="9" height="12"><circle cx="4" cy="6" r="2.6" fill="#d4d4d4" stroke="#9a9a9a" stroke-width="0.8"/></svg>
<!--BOWL--><svg class="a" style="left:0;top:0" width="1366" height="768" viewBox="0 0 1366 768"><defs><filter id="bb" x="0" y="0" width="1366" height="768" filterUnits="userSpaceOnUse"><feGaussianBlur stdDeviation="0.5"/></filter></defs><g filter="url(#bb)"><g transform="scale(.5)"><path transform="scale(2)" d="M611.9 604.4 L612.4 605.9 L613.0 607.3 L613.6 608.8 L614.2 610.2 L614.9 611.7 L615.7 613.1 L616.5 614.5 L617.3 615.9 L618.1 617.3 L619.0 618.6 L620.0 620.0 L621.0 621.3 L622.0 622.6 L623.1 623.9 L624.2 625.1 L625.3 626.4 L626.5 627.6 L627.7 628.8 L629.0 630.0 L630.3 631.2 L631.6 632.4 L633.0 633.5 L634.4 634.6 L635.8 635.7 L637.3 636.8 L638.8 637.8 L640.4 638.9 L642.0 639.9 L643.6 640.8 L645.2 641.8 L646.9 642.7 L648.6 643.7 L650.4 644.6 L652.2 645.4 L654.0 646.3 L655.9 647.1 L657.7 647.9 L659.6 648.7 L661.6 649.4 L663.5 650.1 L665.5 650.8 L667.6 651.5 L669.6 652.1 L671.7 652.8 L673.8 653.4 L675.9 653.9 L678.1 654.5 L680.3 655.0 L682.5 655.5 L684.7 656.0 L687.0 656.4 L689.2 656.8 L691.5 657.2 L693.9 657.6 L696.2 657.9 L698.5 658.2 L700.9 658.5 L703.3 658.7 L705.7 658.9 L708.2 659.1 L710.6 659.3 L713.1 659.4 L715.6 659.6 L718.0 659.6 L720.6 659.7 L723.1 659.7 L725.6 659.7 L728.2 659.7 L730.7 659.6 L733.3 659.6 L735.9 659.5 L738.4 659.3 L741.0 659.2 L743.6 659.0 L746.3 658.8 L748.9 658.5 L751.5 658.2 L754.1 657.9 L756.7 657.6 L759.4 657.3 L762.0 656.9 L764.7 656.5 L767.3 656.0 L769.9 655.6 L772.6 655.1 L775.2 654.6 L777.9 654.0 L780.5 653.5 L783.2 652.9 L785.8 652.3 L788.4 651.6 L791.0 650.9 L793.7 650.3 L796.3 649.5 L798.9 648.8 L801.5 648.0 L804.1 647.2 L806.6 646.4 L809.2 645.6 L811.8 644.7 L814.3 643.8 L816.9 642.9 L819.4 642.0 L821.9 641.0 L824.4 640.0 L826.9 639.0 L829.3 638.0 L831.8 637.0 L834.2 635.9 L836.7 634.8 L839.1 633.7 L841.4 632.6 L843.8 631.4 L846.1 630.2 L848.5 629.0 L850.8 627.8 L853.1 626.6 L855.3 625.4 L857.6 624.1 L859.8 622.8 L862.0 621.5 L864.1 620.2 L866.3 618.8 L868.4 617.5 L870.5 616.1 L872.5 614.7 L874.6 613.3 L876.6 611.9 L878.5 610.5 L880.5 609.0 L882.4 607.6 L884.3 606.1 L886.2 604.6 L888.0 603.1 L889.8 601.6 L891.5 600.1 L893.3 598.6 L895.0 597.0 L896.6 595.5 L898.3 593.9 L899.9 592.3 L901.4 590.7 L903.0 589.1 L904.5 587.5 L905.9 585.9 L907.3 584.3 L908.7 582.7 L910.1 581.0 L911.4 579.4 L912.6 577.7 L913.9 576.1 L915.1 574.4 L916.2 572.8 L917.3 571.1 L918.4 569.4 L919.5 567.7 L920.5 566.1 L921.4 564.4 L922.3 562.7 L923.2 561.0 L924.0 559.3 L924.8 557.6 L925.6 556.0 L926.3 554.3 L927.0 552.6 L927.6 550.9 L928.2 549.2 L928.7 547.5 L929.2 545.9 L929.7 544.2 L930.1 542.5 L930.5 540.8 L930.8 539.2 L931.1 537.5 L931.3 535.9 L931.5 534.2 L931.7 532.6 L931.8 530.9 L931.9 529.3 L931.9 527.7 L931.9 526.1 L931.8 524.5 L931.7 522.9 L931.6 521.3 L931.4 519.7 L931.2 518.1 L930.9 516.6 L930.6 515.0 L930.2 513.5 L929.8 512.0 L929.4 510.4 L928.9 508.9 L928.4 507.5 L927.8 506.0 L927.2 504.5 L926.5 503.1 L925.8 501.6 L925.1 500.2 L924.3 498.8 L923.5 497.4 L922.6 496.1 L921.7 494.7 L920.8 493.4 L919.8 492.0 L918.8 490.7 L917.7 489.4 L916.6 488.2 L915.5 486.9 L914.3 485.7 L913.0 484.5 L911.8 483.3 L910.5 482.1 L909.2 481.0 L907.8 479.8 L906.4 478.7 L904.9 477.6 L903.5 476.5 L901.9 475.5 L900.4 474.5 L898.8 473.5 L897.2 472.5 L895.5 471.5 L893.8 470.6 L892.1 469.7 L890.4 468.8 L888.6 467.9 L886.8 467.1 L884.9 466.2 L883.0 465.4 L881.1 464.7 L879.2 463.9 L877.2 463.2 L875.2 462.5 L873.2 461.8 L871.1 461.2 L869.1 460.6 L867.0 460.0 L864.8 459.4 L862.7 458.8 L860.5 458.3 L858.3 457.8 L856.1 457.4 L853.8 456.9 L851.5 456.5 L849.2 456.1 L846.9 455.8 L844.6 455.4 L842.2 455.1 L839.8 454.9 L837.4 454.6 L835.0 454.4 L832.6 454.2 L830.2 454.0 L827.7 453.9 L825.2 453.8 L822.7 453.7 L820.2 453.6 L817.7 453.6 L815.2 453.6 L812.6 453.6 L810.1 453.7 L807.5 453.8 L804.9 453.9 L802.3 454.0 L799.7 454.2 L797.1 454.4 L794.5 454.6 L791.9 454.8 L789.3 455.1 L786.6 455.4 L784.0 455.7 L781.4 456.1 L778.7 456.4 L776.1 456.9 L773.5 457.3 L770.8 457.8 L768.2 458.2 L765.5 458.8 L762.9 459.3 L760.2 459.9 L757.6 460.4 L755.0 461.1 L752.4 461.7 L749.7 462.4 L747.1 463.1 L744.5 463.8 L741.9 464.5 L739.3 465.3 L736.7 466.1 L734.1 466.9 L731.6 467.8 L729.0 468.6 L726.4 469.5 L723.9 470.4 L721.4 471.4 L718.9 472.3 L716.4 473.3 L713.9 474.3 L711.4 475.3 L709.0 476.4 L706.5 477.4 L704.1 478.5 L701.7 479.6 L699.3 480.8 L697.0 481.9 L694.6 483.1 L692.3 484.3 L690.0 485.5 L687.7 486.7 L685.4 488.0 L683.2 489.2 L681.0 490.5 L678.8 491.8 L676.6 493.1 L674.5 494.5 L672.4 495.8 L670.3 497.2 L668.2 498.6 L666.2 500.0 L664.2 501.4 L662.2 502.8 L660.3 504.3 L658.4 505.7 L656.5 507.2 L654.6 508.7 L652.8 510.2 L651.0 511.7 L649.2 513.2 L647.5 514.8 L645.8 516.3 L644.1 517.9 L642.5 519.4 L640.9 521.0 L639.3 522.6 L637.8 524.2 L636.3 525.8 L634.9 527.4 L633.4 529.0 L632.1 530.7 L630.7 532.3 L629.4 533.9 L628.1 535.6 L626.9 537.2 L625.7 538.9 L624.5 540.6 L623.4 542.2 L622.3 543.9 L621.3 545.6 L620.3 547.3 L619.4 548.9 L618.4 550.6 L617.6 552.3 L616.7 554.0 L615.9 555.7 L615.2 557.4 L614.5 559.0 L613.8 560.7 L613.2 562.4 L612.6 564.1 L612.0 565.8 L611.5 567.5 L611.1 569.1 L610.7 570.8 L610.3 572.5 L610.0 574.1 L609.7 575.8 L609.4 577.5 L609.2 579.1 L609.1 580.7 L608.9 582.4 L608.9 584.0 L608.8 585.6 L608.9 587.3 L608.9 588.9 L609.0 590.5 L609.2 592.0 L609.4 593.6 L609.6 595.2 L609.9 596.8 L610.2 598.3 L610.5 599.8 L610.9 601.4 L611.4 602.9Z" fill="#77aaf7"/><path d="M1430 488l1 5-12 3-2-4" fill="#77aaf7"/><path d="M1443 486l-2 6-12 1 0-5" fill="#77aaf7"/><path d="M1418 491l3 5-12 5-4-4" fill="#77aaf7"/><path d="M1431 491l1 8-11 3-3-7" fill="#7babf3"/><path d="M1441 490l1 7-12 2-1-8" fill="#70a0e8"/><path d="M1420 494l3 7-11 5-4-7" fill="#95c6ff"/><path d="M1286 531l1 5-12 4-3-5" fill="#77aaf7"/><path d="M1454 486l-3 5-12 1 2-6" fill="#77aaf7"/><path d="M1438 526l-6-29-12 3 7 29" fill="#99cdff"/><path d="M1407 496l4 4-11 6-5-3" fill="#77aaf7"/><path d="M1298 529l-1 5-12 3-1-6" fill="#77aaf7"/><path d="M1448 524l-6-29-12 2 6 29" fill="#7eb2ff"/><path d="M1429 528l-7-29-11 5 7 29" fill="#ceffff"/><path d="M1274 535l3 4-11 5-5-3" fill="#77aaf7"/><path d="M1452 490l0 7-12 0-1-7" fill="#6d9de3"/><path d="M1286 534l2 8-11 3-3-7" fill="#7eaef6"/><path d="M1410 498l3 7-10 7-4-7" fill="#a9d8ff"/><path d="M1297 533l1 7-12 2-2-7" fill="#71a1e9"/><path d="M1311 529l-3 5-13 1 1-6" fill="#77aaf7"/><path d="M1276 537l3 8-11 5-3-7" fill="#9bcbff"/><path d="M1457 524l-5-29-12 0 6 29" fill="#76a9f5"/><path d="M1419 532l-6-29-11 7 7 28" fill="#edffff"/><path d="M1299 567l-11-27-12 4 11 27" fill="#a2d6ff"/><path d="M1308 566l-10-28-12 2 11 28" fill="#80b4ff"/><path d="M1444 553l-6-29-12 3 7 29" fill="#98ccff"/><path d="M1466 488l-4 5-13-2 3-5" fill="#77aaf7"/><path d="M1309 532l0 8-13 0-1-7" fill="#6e9ee5"/><path d="M1263 540l5 3-11 7-5-3" fill="#77aaf7"/><path d="M1289 570l-11-27-11 5 12 27" fill="#dbffff"/><path d="M1453 551l-6-29-11 2 6 29" fill="#7eb2ff"/><path d="M1434 555l-6-29-11 5 7 29" fill="#c9fcff"/><path d="M1396 502l6 3-11 8-6-2" fill="#77aaf7"/><path d="M1462 491l0 8-12-2 0-8" fill="#6b99de"/><path d="M1319 565l-10-27-13 0 10 28" fill="#75a8f4"/><path d="M1266 542l4 7-10 6-4-6" fill="#a8d7ff"/><path d="M1400 504l4 6-10 8-4-6" fill="#9fceff"/><path d="M1462 551l-5-29-12 0 6 30" fill="#76a9f5"/><path d="M1323 529l-3 6-14-1 3-6" fill="#77aaf7"/><path d="M1426 559l-7-29-11 6 7 29" fill="#ebffff"/><path d="M1467 525l-5-28-12-2 5 29" fill="#72a4ed"/><path d="M1309 593l-11-27-11 3 11 28" fill="#a3d7ff"/><path d="M1280 574l-11-27-10 6 12 27" fill="#f4ffff"/><path d="M1410 537l-7-28-10 8 7 27" fill="#d0ffff"/><path d="M1318 591l-10-27-12 2 11 28" fill="#81b5ff"/><path d="M1449 580l-6-29-11 3 7 29" fill="#96caff"/><path d="M1320 533l0 8-13-1 0-8" fill="#6c9be1"/><path d="M1440 583l-6-30-11 5 7 29" fill="#c4f7ff"/><path d="M1458 579l-6-29-11 1 6 30" fill="#7eb2ff"/><path d="M1300 596l-12-28-10 5 12 28" fill="#daffff"/><path d="M1328 591l-10-28-12 1 10 28" fill="#76a9f4"/><path d="M1253 546l6 3-9 7-7-1" fill="#77aaf7"/><path d="M1330 566l-10-27-13-1 10 27" fill="#71a2eb"/><path d="M1432 586l-7-29-10 6 7 28" fill="#e7ffff"/><path d="M1467 579l-5-30-12 1 6 29" fill="#76a9f5"/><path d="M1471 552l-5-29-11-1 5 29" fill="#72a4ee"/><path d="M1258 547l4 7-9 8-5-7" fill="#91bfff"/><path d="M1477 491l-6 5-11-4 4-5" fill="#77aaf7"/><path d="M1417 564l-7-29-10 7 7 28" fill="#d6ffff"/><path d="M1319 619l-11-28-11 4 11 28" fill="#a4d8ff"/><path d="M1291 600l-11-28-10 6 12 28" fill="#f4ffff"/><path d="M1328 617l-10-27-12 2 11 28" fill="#82b6ff"/><path d="M1455 608l-6-30-11 3 7 30" fill="#94c8ff"/><path d="M1387 510l6 2-10 9-7-1" fill="#77aaf7"/><path d="M1472 494l-1 7-11-3 0-7" fill="#6895d9"/><path d="M1272 579l-11-27-9 8 12 26" fill="#cafbff"/><path d="M1446 610l-6-29-10 4 6 29" fill="#bef2ff"/><path d="M1464 606l-6-29-11 2 6 29" fill="#7eb2ff"/><path d="M1310 622l-11-28-10 5 11 27" fill="#d8ffff"/><path d="M1391 511l5 6-10 9-5-6" fill="#89b6fb"/><path d="M1476 528l-5-29-11-3 5 29" fill="#6d9de4"/><path d="M1339 591l-10-27-13-1 10 28" fill="#71a3ec"/><path d="M1338 617l-10-28-12 1 10 28" fill="#77a9f5"/><path d="M1336 532l-4 5-14-3 3-5" fill="#77aaf7"/><path d="M1402 543l-7-28-10 10 7 27" fill="#9bcaff"/><path d="M1438 613l-7-29-10 5 7 29" fill="#e3ffff"/><path d="M1476 579l-5-29-11-1 5 30" fill="#73a4ef"/><path d="M1423 590l-7-28-9 7 7 28" fill="#dcffff"/><path d="M1472 606l-5-29-11 0 6 30" fill="#76a9f5"/><path d="M1332 535l0 8-14-3 0-7" fill="#6a98dd"/><path d="M1329 645l-11-28-10 4 11 28" fill="#a5d9ff"/><path d="M1302 625l-11-27-10 6 12 27" fill="#f4ffff"/><path d="M1338 643l-11-27-11 2 11 28" fill="#84b8ff"/><path d="M1341 567l-10-26-13-3 10 27" fill="#6d9ce2"/><path d="M1461 636l-6-30-11 3 7 29" fill="#93c6ff"/><path d="M1283 604l-11-27-9 8 12 26" fill="#d0ffff"/><path d="M1453 638l-7-30-10 4 7 29" fill="#b8ecff"/><path d="M1469 634l-6-30-10 2 6 30" fill="#7eb2ff"/><path d="M1321 648l-11-28-10 5 11 27" fill="#d6ffff"/><path d="M1480 554l-4-28-12-3 5 29" fill="#6e9ee5"/><path d="M1348 617l-10-28-12 0 10 28" fill="#72a4ed"/><path d="M1409 569l-8-28-9 9 7 27" fill="#a4d3ff"/><path d="M1347 643l-10-28-12 1 11 28" fill="#77aaf6"/><path d="M1245 553l6 2-7 9-7-1" fill="#77aaf7"/><path d="M1430 617l-7-29-10 7 8 28" fill="#e0ffff"/><path d="M1250 554l4 6-7 9-5-6" fill="#77a4e7"/><path d="M1444 641l-6-30-10 5 7 29" fill="#ddffff"/><path d="M1481 607l-5-30-11 0 5 29" fill="#73a5ef"/><path d="M1477 634l-5-30-11 1 6 29" fill="#77aaf6"/><path d="M1349 592l-9-26-13-2 10 27" fill="#6d9de4"/><path d="M1265 585l-12-27-7 9 12 27" fill="#91c0ff"/><path d="M1313 651l-12-27-9 5 12 28" fill="#f3ffff"/><path d="M1340 672l-11-29-11 4 12 28" fill="#a6d9ff"/><path d="M1348 670l-11-28-10 2 11 28" fill="#86b9ff"/><path d="M1467 664l-7-30-10 2 7 30" fill="#91c4ff"/><path d="M1295 630l-12-27-9 7 12 26" fill="#d7ffff"/><path d="M1485 581l-5-29-11-2 5 29" fill="#6f9fe7"/><path d="M1487 496l-6 4-11-5 5-5" fill="#77aaf7"/><path d="M1415 596l-7-29-9 8 7 28" fill="#aeddff"/><path d="M1459 666l-7-30-10 3 7 30" fill="#b2e6ff"/><path d="M1357 642l-10-27-12 0 10 28" fill="#73a4ee"/><path d="M1475 662l-6-30-11 2 7 30" fill="#7eb2ff"/><path d="M1332 674l-12-28-10 4 12 28" fill="#d4ffff"/><path d="M1482 498l-1 8-12-5 1-8" fill="#6592d3"/><path d="M1357 669l-10-28-12 1 11 28" fill="#78abf7"/><path d="M1378 518l6 2-9 10-7-1" fill="#77aaf7"/><path d="M1437 644l-7-29-10 6 7 29" fill="#e2ffff"/><path d="M1485 532l-4-28-12-5 5 28" fill="#6896d9"/><path d="M1451 668l-7-29-10 4 8 30" fill="#d5ffff"/><path d="M1358 618l-10-27-12-2 10 28" fill="#6e9ee5"/><path d="M1486 634l-6-29-10-1 5 30" fill="#73a5f0"/><path d="M1383 519l4 6-8 10-5-6" fill="#78a4e7"/><path d="M1348 535l-5 5-13-4 4-5" fill="#77aaf7"/><path d="M1483 662l-6-30-10 0 6 30" fill="#77aaf6"/><path d="M1276 610l-12-27-7 9 12 26" fill="#98c8ff"/><path d="M1394 550l-8-27-8 11 7 26" fill="#77a4e6"/><path d="M1422 622l-7-28-9 7 7 28" fill="#b8e8ff"/><path d="M1324 678l-12-28-9 5 12 28" fill="#f1ffff"/><path d="M1358 696l-11-28-10 2 11 29" fill="#88bcff"/><path d="M1350 698l-11-28-10 3 12 28" fill="#a7daff"/><path d="M1344 538l-1 8-13-4 0-7" fill="#6895d9"/><path d="M1489 608l-5-29-10-2 5 29" fill="#6fa0e8"/><path d="M1473 692l-7-30-10 2 7 30" fill="#8dc0ff"/><path d="M1366 668l-10-27-11 0 10 28" fill="#73a5ef"/><path d="M1306 656l-12-28-9 7 12 27" fill="#ddffff"/><path d="M1465 694l-7-30-9 3 7 30" fill="#a7daff"/><path d="M1577 467l1 5-13 4-2-5" fill="#77aaf7"/><path d="M1352 570l-9-26-14-4 10 27" fill="#6895d8"/><path d="M1480 691l-6-31-10 2 7 30" fill="#7eb1fe"/><path d="M1366 695l-10-28-11 1 11 29" fill="#7aadf9"/><path d="M1342 701l-11-29-10 5 12 28" fill="#d1ffff"/><path d="M1489 558l-4-28-11-5 4 29" fill="#6997db"/><path d="M1443 672l-7-30-9 6 7 29" fill="#e1ffff"/><path d="M1565 470l2 5-12 5-4-4" fill="#77aaf7"/><path d="M1366 643l-9-27-12-1 10 27" fill="#6f9fe7"/><path d="M1401 576l-8-28-8 10 7 27" fill="#7daaed"/><path d="M1457 696l-7-30-9 5 7 29" fill="#c5f8ff"/><path d="M1589 466l-1 5-12 2-1-6" fill="#77aaf7"/><path d="M1490 662l-5-30-10 0 6 30" fill="#73a6f0"/><path d="M1429 649l-7-29-9 7 7 28" fill="#c3f3ff"/><path d="M1488 690l-6-30-10 1 6 30" fill="#77aaf6"/><path d="M1288 635l-12-27-8 8 12 27" fill="#a1d0ff"/><path d="M1577 470l2 8-12 3-2-7" fill="#77a8f0"/><path d="M1360 595l-9-27-13-3 9 27" fill="#6996da"/><path d="M1375 695l-10-29-11 1 10 28" fill="#74a6f1"/><path d="M1494 635l-5-29-11-2 6 30" fill="#70a1e9"/><path d="M1368 723l-11-28-10 2 12 29" fill="#89bcff"/><path d="M1335 704l-12-28-9 5 12 28" fill="#eeffff"/><path d="M1566 473l3 8-12 4-3-7" fill="#8cbdff"/><path d="M1361 725l-12-29-9 4 11 28" fill="#a3d7ff"/><path d="M1479 720l-7-30-9 2 6 31" fill="#89bcff"/><path d="M1317 681l-12-27-8 6 12 27" fill="#e3ffff"/><path d="M1471 722l-6-30-10 3 7 30" fill="#9cd0ff"/><path d="M1238 562l7 1-7 10-7 0" fill="#77aaf7"/><path d="M1493 584l-4-28-11-4 5 29" fill="#6a98dd"/><path d="M1588 469l1 8-12 1-2-7" fill="#6f9fe7"/><path d="M1408 602l-8-28-8 9 7 27" fill="#85b2f6"/><path d="M1450 699l-7-29-9 5 7 29" fill="#d5ffff"/><path d="M1375 669l-9-28-12-1 10 28" fill="#70a0e9"/><path d="M1553 475l3 4-12 7-5-4" fill="#77aaf7"/><path d="M1376 722l-10-29-11 2 11 29" fill="#7baefa"/><path d="M1486 719l-6-30-10 1 7 31" fill="#7db0fd"/><path d="M1243 562l5 5-6 10-5-5" fill="#6a95d6"/><path d="M1580 506l-1-30-12 3 1 30" fill="#8fc3ff"/><path d="M1353 728l-11-29-10 4 12 28" fill="#c6faff"/><path d="M1259 592l-12-26-6 10 12 25" fill="#709de0"/><path d="M1464 725l-7-31-9 4 7 30" fill="#b4e7ff"/><path d="M1570 508l-1-29-13 4 2 30" fill="#b5e9ff"/><path d="M1436 676l-7-29-9 6 7 29" fill="#ccfdff"/><path d="M1495 690l-5-30-10 0 6 30" fill="#74a6f1"/><path d="M1368 620l-9-27-13-3 10 27" fill="#6a98dc"/><path d="M1601 466l-3 5-12 0 1-5" fill="#77aaf7"/><path d="M1589 505l0-30-12 1 1 30" fill="#7baffc"/><path d="M1299 661l-12-28-8 8 12 27" fill="#aadaff"/><path d="M1493 718l-6-30-9 1 6 30" fill="#77aaf6"/><path d="M1384 721l-10-28-10 1 10 28" fill="#75a7f2"/><path d="M1415 628l-8-28-8 8 7 28" fill="#8ebcff"/><path d="M1555 477l3 8-12 6-3-7" fill="#a3d3ff"/><path d="M1498 663l-5-30-10-1 5 30" fill="#70a1ea"/><path d="M1379 750l-11-29-10 3 11 29" fill="#89bcff"/><path d="M1384 695l-10-28-11 0 10 28" fill="#70a1ea"/><path d="M1497 611l-4-29-11-3 5 29" fill="#6b9adf"/><path d="M1485 749l-7-31-9 3 7 31" fill="#85b8ff"/><path d="M1457 727l-7-30-9 5 7 30" fill="#c4f7ff"/><path d="M1478 751l-7-31-9 3 7 31" fill="#93c6ff"/><path d="M1346 731l-12-29-8 5 12 28" fill="#e1ffff"/><path d="M1371 752l-11-29-9 3 11 29" fill="#9fd3ff"/><path d="M1328 708l-12-28-8 6 12 27" fill="#e7ffff"/><path d="M1386 749l-10-29-10 2 11 29" fill="#7caffb"/><path d="M1598 470l0 7-11 0-1-8" fill="#6d9ce2"/><path d="M1492 748l-6-31-10 2 7 31" fill="#7caffb"/><path d="M1443 703l-8-29-8 6 7 28" fill="#cbfcff"/><path d="M1376 645l-9-27-12-2 9 27" fill="#6b99df"/><path d="M1560 512l-2-29-12 6 2 29" fill="#d0ffff"/><path d="M1471 753l-7-30-9 3 7 30" fill="#a4d7ff"/><path d="M1270 616l-12-26-6 10 12 26" fill="#74a2e5"/><path d="M1364 755l-12-29-8 4 11 28" fill="#bbeeff"/><path d="M1581 534l-1-30-12 3 1 29" fill="#8cc0ff"/><path d="M1496 501l-6 4-11-6 6-4" fill="#77aaf7"/><path d="M1501 718l-6-30-10 0 6 31" fill="#74a6f1"/><path d="M1422 654l-8-28-8 8 7 27" fill="#9ac8ff"/><path d="M1491 504l-2 7-10-6 1-8" fill="#638ecf"/><path d="M1571 536l-1-30-12 5 2 29" fill="#afe2ff"/><path d="M1494 536l-4-27-11-6 4 28" fill="#638ece"/><path d="M1394 748l-10-29-10 1 10 29" fill="#76a8f3"/><path d="M1598 505l0-30-11 0 0 30" fill="#76a9f5"/><path d="M1310 686l-12-27-7 7 12 27" fill="#b5e5ff"/><path d="M1499 747l-6-31-9 1 6 31" fill="#77aaf6"/><path d="M1370 528l7 1-9 11-7-1" fill="#77aaf7"/><path d="M1393 721l-10-28-11 0 10 28" fill="#71a2ec"/><path d="M1503 690l-5-29-10-1 5 30" fill="#71a2ec"/><path d="M1464 756l-7-31-9 5 8 29" fill="#b3e5ff"/><path d="M1541 481l5 4-13 7-5-2" fill="#77aaf7"/><path d="M1502 637l-5-28-10-3 5 29" fill="#6c9be1"/><path d="M1590 533l-1-30-11 1 1 30" fill="#7baffc"/><path d="M1360 539l-5 5-14-5 5-4" fill="#77aaf7"/><path d="M1384 670l-9-27-11-2 9 28" fill="#6c9be1"/><path d="M1484 780l-7-31-9 3 8 31" fill="#8bbeff"/><path d="M1491 779l-7-32-9 3 7 31" fill="#81b4ff"/><path d="M1389 778l-11-29-9 2 11 29" fill="#89bcff"/><path d="M1386 559l-7-27-8 11 7 26" fill="#6994d5"/><path d="M1450 731l-7-30-9 5 8 29" fill="#c4f5ff"/><path d="M1375 528l5 6-8 11-5-6" fill="#709cde"/><path d="M1489 924l-2-8-7 2 2 8" fill="#99cdff"/><path d="M1494 922l-2-7-7 2 2 7" fill="#96caff"/><path d="M1382 780l-12-30-9 4 12 29" fill="#9bceff"/><path d="M1484 925l-3-7-7 2 2 7" fill="#9cd0ff"/><path d="M1500 921l-2-8-8 2 2 8" fill="#93c7ff"/><path d="M1396 776l-11-29-9 2 11 29" fill="#7db0fc"/><path d="M1357 758l-12-29-8 4 12 29" fill="#d1ffff"/><path d="M1339 734l-12-28-8 5 12 28" fill="#e0ffff"/><path d="M1478 927l-2-8-7 3 2 7" fill="#9fd4ff"/><path d="M1478 782l-8-31-8 4 7 30" fill="#96c9ff"/><path d="M1505 920l-2-8-7 2 2 7" fill="#90c4ff"/><path d="M1498 777l-7-31-9 2 7 31" fill="#7baefa"/><path d="M1429 680l-8-28-8 7 8 28" fill="#a7d6ff"/><path d="M1473 928l-2-7-7 2 2 8" fill="#a3d7ff"/><path d="M1281 641l-12-26-6 9 12 26" fill="#7aa7ec"/><path d="M1510 918l-1-7-8 1 2 8" fill="#8dc2ff"/><path d="M1356 542l-1 8-14-5 1-7" fill="#6794d6"/><path d="M1363 574l-8-26-14-5 9 27" fill="#6490d1"/><path d="M1487 918l-2-7-7 2 2 7" fill="#648fcf"/><path d="M1493 917l-2-8-8 2 2 8" fill="#648fcf"/><path d="M1482 920l-2-8-7 3 2 7" fill="#648fcf"/><path d="M1498 915l-2-7-7 2 2 7" fill="#648fcf"/><path d="M1468 930l-3-7-7 2 3 7" fill="#a7dbff"/><path d="M1561 539l-1-29-12 6 2 29" fill="#ccfeff"/><path d="M1516 917l-2-8-7 2 1 8" fill="#8bbfff"/><path d="M1477 921l-2-7-8 2 2 7" fill="#648fcf"/><path d="M1504 914l-2-7-8 1 2 8" fill="#648fcf"/><path d="M1498 562l-5-28-10-5 4 28" fill="#648fd0"/><path d="M1471 923l-2-7-7 2 2 7" fill="#648fd0"/><path d="M1506 747l-6-31-9 1 6 30" fill="#74a7f2"/><path d="M1375 782l-12-29-8 4 12 29" fill="#b0e3ff"/><path d="M1509 913l-2-8-7 2 2 7" fill="#638fcf"/><path d="M1463 932l-3-8-7 3 3 7" fill="#abdfff"/><path d="M1403 775l-10-29-10 1 11 30" fill="#77a9f4"/><path d="M1544 483l4 7-12 8-4-7" fill="#a9d8ff"/><path d="M1521 916l-2-8-7 2 2 8" fill="#89bdff"/><path d="M1401 748l-9-29-10 0 10 29" fill="#72a4ed"/><path d="M1393 584l-7-27-8 10 7 26" fill="#6d99da"/><path d="M1471 785l-7-31-9 4 8 30" fill="#a2d4ff"/><path d="M1466 925l-2-8-7 3 2 7" fill="#648fd0"/><path d="M1611 468l-4 5-11-2 3-5" fill="#77aaf7"/><path d="M1392 696l-8-28-12-1 10 28" fill="#6d9de3"/><path d="M1514 911l-1-7-8 2 2 7" fill="#638fcf"/><path d="M1504 777l-6-32-9 1 7 32" fill="#77aaf5"/><path d="M1457 759l-7-30-9 5 8 29" fill="#b8eaff"/><path d="M1457 934l-2-8-7 3 2 7" fill="#afe3ff"/><path d="M1508 719l-5-30-10-1 6 30" fill="#72a3ed"/><path d="M1526 915l-1-8-8 2 2 7" fill="#87bbff"/><path d="M1322 712l-13-28-7 7 12 27" fill="#c0f1ff"/><path d="M1582 562l-1-30-12 2 2 30" fill="#89bdff"/><path d="M1506 664l-5-29-10-2 5 29" fill="#6d9ce3"/><path d="M1461 926l-2-7-8 2 3 8" fill="#648fd0"/><path d="M1491 810l-7-32-9 3 8 31" fill="#83b6ff"/><path d="M1520 910l-2-7-7 1 1 8" fill="#638ecf"/><path d="M1497 809l-6-32-9 2 7 32" fill="#7eb0fc"/><path d="M1572 564l-1-30-12 4 2 29" fill="#a8dcff"/><path d="M1436 707l-8-28-8 6 8 28" fill="#aedeff"/><path d="M1550 517l-3-29-12 8 3 28" fill="#c1f2ff"/><path d="M1485 812l-8-32-8 3 8 32" fill="#8abdff"/><path d="M1452 935l-2-7-8 3 3 7" fill="#b3e7ff"/><path d="M1399 806l-11-30-9 3 12 29" fill="#88bbff"/><path d="M1455 928l-2-7-7 2 2 8" fill="#648fd0"/><path d="M1532 914l-2-8-7 1 1 8" fill="#85b9ff"/><path d="M1525 909l-2-7-7 1 2 8" fill="#638ecf"/><path d="M1406 804l-11-29-9 2 11 29" fill="#7eb1fd"/><path d="M1504 807l-7-31-8 1 6 32" fill="#79acf8"/><path d="M1599 533l-1-30-11 0 1 30" fill="#76a9f5"/><path d="M1490 928l-2-6-7 2 2 6" fill="#7db3ff"/><path d="M1495 927l-1-7-7 2 1 7" fill="#7db3ff"/><path d="M1393 808l-12-30-9 3 12 30" fill="#96c9ff"/><path d="M1485 930l-2-7-7 3 2 6" fill="#7db3ff"/><path d="M1501 925l-2-6-7 2 2 6" fill="#7db3ff"/><path d="M1401 609l-8-27-8 9 7 27" fill="#729ee0"/><path d="M1608 471l-1 8-11-2 0-8" fill="#6a98dc"/><path d="M1480 931l-2-6-7 2 2 6" fill="#7db3ff"/><path d="M1450 930l-2-7-7 2 2 7" fill="#6490d0"/><path d="M1447 937l-3-7-7 2 3 8" fill="#b7ecff"/><path d="M1506 924l-2-6-7 2 2 6" fill="#7db3ff"/><path d="M1369 785l-12-29-9 4 13 29" fill="#c2f5ff"/><path d="M1478 814l-7-31-9 3 8 31" fill="#92c4ff"/><path d="M1501 588l-4-28-10-5 4 28" fill="#6591d3"/><path d="M1351 761l-12-29-8 5 12 29" fill="#d5ffff"/><path d="M1531 908l-2-8-8 2 2 7" fill="#638ece"/><path d="M1537 913l-1-8-8 1 2 8" fill="#83b7ff"/><path d="M1497 910l-9-35-8 2 9 35" fill="#74a6ef"/><path d="M1293 666l-12-27-7 9 12 26" fill="#81aff4"/><path d="M1502 908l-9-35-7 3 9 34" fill="#74a6ef"/><path d="M1411 775l-10-29-10 0 10 30" fill="#73a5ef"/><path d="M1401 721l-9-27-11-1 10 28" fill="#6e9ee6"/><path d="M1475 933l-2-6-8 2 3 6" fill="#7db3ff"/><path d="M1465 787l-8-30-8 4 8 30" fill="#a9daff"/><path d="M1491 911l-9-34-8 2 10 34" fill="#74a5ee"/><path d="M1511 923l-1-7-7 2 1 7" fill="#7db2ff"/><path d="M1413 803l-10-30-10 2 11 30" fill="#78aaf6"/><path d="M1508 907l-9-35-8 2 9 35" fill="#74a5ef"/><path d="M1590 561l0-30-11 1 1 30" fill="#7aaefb"/><path d="M1154 594l1 5-12 4-3-4" fill="#77aaf7"/><path d="M1167 591l-1 6-13 3-1-5" fill="#77aaf7"/><path d="M1486 913l-10-34-7 2 10 34" fill="#74a5ed"/><path d="M1511 776l-6-31-9 0 6 32" fill="#74a7f2"/><path d="M1498 841l-7-33-9 3 8 32" fill="#7db0fb"/><path d="M1443 734l-7-29-9 6 8 29" fill="#b2e2ff"/><path d="M1470 934l-3-6-7 3 3 6" fill="#7db3ff"/><path d="M1513 906l-8-36-8 2 9 36" fill="#74a5ef"/><path d="M1516 922l-1-7-7 2 1 6" fill="#7db2ff"/><path d="M1378 622l-8-26-13-3 9 26" fill="#6693d6"/><path d="M1492 842l-8-32-8 3 8 32" fill="#81b3ff"/><path d="M1445 932l-2-8-7 3 2 7" fill="#6590d0"/><path d="M1442 939l-3-7-7 2 3 8" fill="#bcf0ff"/><path d="M1480 914l-9-34-8 3 10 33" fill="#72a2e9"/><path d="M1510 806l-6-31-9 1 7 32" fill="#77a9f5"/><path d="M1504 839l-7-32-8 2 7 32" fill="#7aadf8"/><path d="M1536 907l-2-8-7 2 2 7" fill="#638ece"/><path d="M1386 810l-12-30-8 4 12 29" fill="#a5d8ff"/><path d="M1542 912l-1-8-7 1 1 8" fill="#82b6ff"/><path d="M1563 567l-2-30-11 6 2 29" fill="#c6f9ff"/><path d="M1475 916l-10-34-7 2 10 34" fill="#71a1e8"/><path d="M1464 936l-2-6-7 2 2 6" fill="#7db3ff"/><path d="M1518 905l-7-36-8 2 8 35" fill="#73a5ef"/><path d="M1470 917l-11-33-7 2 11 34" fill="#73a4ec"/><path d="M1522 920l-1-6-8 2 1 6" fill="#7db2ff"/><path d="M1513 747l-6-30-9-1 6 31" fill="#72a4ee"/><path d="M1464 919l-10-34-8 2 11 35" fill="#74a5ee"/><path d="M1510 692l-4-30-10-2 5 30" fill="#6e9ee5"/><path d="M1486 844l-8-32-8 3 8 32" fill="#85b7ff"/><path d="M1607 507l0-30-11-2 0 30" fill="#73a4ef"/><path d="M1499 874l-8-34-7 3 8 33" fill="#7aacf6"/><path d="M1408 634l-8-27-8 9 8 27" fill="#79a6e8"/><path d="M1505 872l-7-33-8 2 8 33" fill="#78abf5"/><path d="M1494 875l-9-33-7 3 8 32" fill="#7badf7"/><path d="M1459 921l-11-34-8 2 12 34" fill="#76a7f0"/><path d="M1472 816l-8-31-8 4 8 30" fill="#98caff"/><path d="M1510 838l-7-33-8 2 7 33" fill="#78aaf6"/><path d="M1416 833l-11-31-8 3 11 30" fill="#7fb2fd"/><path d="M1440 934l-3-8-7 3 3 7" fill="#6590d0"/><path d="M1459 938l-2-6-7 2 2 6" fill="#7db3ff"/><path d="M1410 834l-11-30-9 3 12 30" fill="#87b9ff"/><path d="M1333 738l-12-28-8 6 13 28" fill="#c4f5ff"/><path d="M1524 904l-8-36-7 2 7 35" fill="#73a4ee"/><path d="M1527 919l-1-6-7 1 1 7" fill="#7db2ff"/><path d="M1542 906l-2-8-8 2 2 7" fill="#638ece"/><path d="M1437 941l-3-7-7 2 3 8" fill="#c0f4ff"/><path d="M1511 871l-7-34-8 2 7 34" fill="#77a9f4"/><path d="M1409 748l-9-29-10 0 9 29" fill="#6fa0e8"/><path d="M1488 877l-8-33-8 3 9 32" fill="#7caef8"/><path d="M1420 802l-10-29-9 1 10 29" fill="#74a6f0"/><path d="M1454 923l-12-34-7 2 12 34" fill="#77a8f2"/><path d="M1548 911l-1-8-8 1 1 8" fill="#81b5ff"/><path d="M1451 762l-8-30-8 6 8 29" fill="#b0e1ff"/><path d="M1423 831l-11-30-9 2 11 30" fill="#79acf7"/><path d="M1552 544l-3-29-11 7 2 29" fill="#c5f5ff"/><path d="M1480 846l-8-32-8 3 8 32" fill="#88baff"/><path d="M1386 647l-9-27-12-3 9 27" fill="#6895d8"/><path d="M1404 836l-12-30-8 3 12 30" fill="#90c3ff"/><path d="M1454 940l-2-6-8 2 3 6" fill="#7db3ff"/><path d="M1505 614l-4-28-10-5 5 29" fill="#6693d5"/><path d="M1532 918l-1-6-7 1 1 7" fill="#7cb2ff"/><path d="M1449 924l-12-34-8 3 12 34" fill="#79aaf3"/><path d="M1529 902l-7-35-8 1 8 36" fill="#73a4ed"/><path d="M1517 870l-7-34-8 2 7 34" fill="#76a8f3"/><path d="M1482 879l-8-33-8 3 9 32" fill="#7daef8"/><path d="M1435 936l-3-8-7 3 3 7" fill="#6590d0"/><path d="M1516 837l-6-32-9 1 7 33" fill="#76a8f3"/><path d="M1574 592l-2-30-11 3 2 30" fill="#a2d5ff"/><path d="M1517 806l-6-32-9 1 6 32" fill="#74a7f2"/><path d="M1583 590l-1-30-12 2 2 30" fill="#87baff"/><path d="M1547 905l-2-8-7 2 2 7" fill="#638ece"/><path d="M1415 660l-8-28-8 9 8 27" fill="#82aff3"/><path d="M1142 598l3 5-11 5-5-4" fill="#77aaf7"/><path d="M1432 943l-3-7-7 3 3 7" fill="#c5f9ff"/><path d="M1380 813l-12-30-8 4 12 29" fill="#b3e5ff"/><path d="M1304 691l-12-27-7 8 13 27" fill="#8ab8fd"/><path d="M1362 788l-12-29-8 5 13 28" fill="#c8fbff"/><path d="M1458 790l-8-30-8 5 9 29" fill="#a8d9ff"/><path d="M1155 597l2 8-12 4-3-7" fill="#82b3fb"/><path d="M1553 910l-1-8-7 1 1 8" fill="#7fb3ff"/><path d="M1449 941l-3-6-7 3 3 6" fill="#7db3ff"/><path d="M1427 862l-11-31-9 2 12 31" fill="#7fb1fc"/><path d="M1429 830l-10-30-9 1 11 31" fill="#75a7f2"/><path d="M1180 590l-2 6-14 1 1-5" fill="#77aaf7"/><path d="M1166 595l2 8-13 2-2-7" fill="#73a4ec"/><path d="M1443 926l-12-34-7 3 12 34" fill="#7aabf5"/><path d="M1433 860l-11-31-8 2 11 31" fill="#7aacf7"/><path d="M1537 917l0-6-8 1 1 7" fill="#7cb2ff"/><path d="M1418 774l-9-28-10 0 10 29" fill="#70a1ea"/><path d="M1449 889l-11-32-8 2 11 32" fill="#77a9f3"/><path d="M1443 890l-11-32-8 3 11 32" fill="#7aacf6"/><path d="M1518 776l-6-31-9 0 6 31" fill="#73a4ef"/><path d="M1535 901l-7-35-8 1 7 36" fill="#72a3ed"/><path d="M1421 864l-12-31-8 2 12 31" fill="#84b7ff"/><path d="M1522 869l-6-34-8 2 7 33" fill="#75a7f1"/><path d="M1477 880l-9-32-8 3 9 32" fill="#7daef7"/><path d="M1397 839l-12-31-8 4 13 30" fill="#9bcdff"/><path d="M1232 571l7 0-5 11-7 0" fill="#77aaf7"/><path d="M1474 848l-8-31-8 3 8 31" fill="#8abcff"/><path d="M1515 719l-5-29-9-2 5 30" fill="#6f9fe7"/><path d="M1254 600l-12-26-5 11 12 25" fill="#638ecd"/><path d="M1466 819l-8-31-8 4 8 30" fill="#9acbff"/><path d="M1238 570l5 6-5 11-5-5" fill="#638ecd"/><path d="M1454 887l-10-31-8 1 11 32" fill="#75a6f0"/><path d="M1437 892l-11-32-8 2 12 33" fill="#7daffa"/><path d="M1393 672l-8-27-12-3 9 28" fill="#6997db"/><path d="M1429 938l-2-8-7 3 2 7" fill="#6590d0"/><path d="M1439 859l-11-31-8 2 11 31" fill="#77a9f3"/><path d="M1552 904l-1-7-8 1 2 7" fill="#638ece"/><path d="M1599 561l0-30-11 0 0 30" fill="#76a9f5"/><path d="M1444 943l-3-6-7 3 3 6" fill="#7db3ff"/><path d="M1422 686l-8-28-8 8 8 27" fill="#8dbbff"/><path d="M1438 928l-13-34-7 3 13 34" fill="#7bacf6"/><path d="M1427 945l-3-7-7 3 3 7" fill="#c9fdff"/><path d="M1460 886l-10-32-8 2 10 32" fill="#73a4ee"/><path d="M1543 916l-1-6-7 1 0 7" fill="#7cb2ff"/><path d="M1415 866l-12-31-8 2 12 32" fill="#8abdff"/><path d="M1432 894l-12-32-8 2 12 33" fill="#80b2fd"/><path d="M1522 836l-6-32-8 1 6 32" fill="#74a6f1"/><path d="M1529 488l6 3-12 10-6-3" fill="#77aaf7"/><path d="M1427 801l-10-29-9 1 10 29" fill="#72a3ec"/><path d="M1559 909l-1-8-8 1 1 8" fill="#7eb2ff"/><path d="M1471 882l-9-31-8 3 10 31" fill="#77a7ee"/><path d="M1565 594l-2-29-11 5 2 29" fill="#bff2ff"/><path d="M1591 589l-1-30-10 1 1 30" fill="#7aadfa"/><path d="M1509 640l-4-28-10-4 5 29" fill="#6895d8"/><path d="M1345 765l-13-29-7 6 12 28" fill="#c3f5ff"/><path d="M1540 900l-6-35-8 1 7 36" fill="#71a3ec"/><path d="M1466 884l-10-31-8 2 10 31" fill="#71a1e9"/><path d="M1445 858l-10-31-8 1 10 31" fill="#74a6ef"/><path d="M1528 868l-6-34-8 1 7 34" fill="#74a6f0"/><path d="M1436 829l-10-30-9 1 10 30" fill="#73a4ee"/><path d="M1171 628l-15-25-12 4 16 25" fill="#abdfff"/><path d="M1182 626l-15-25-13 2 15 26" fill="#83b7ff"/><path d="M1401 697l-8-27-11-2 8 27" fill="#6a99de"/><path d="M1424 940l-2-8-7 3 2 8" fill="#6590d0"/><path d="M1439 945l-3-6-7 3 3 6" fill="#7db3ff"/><path d="M1426 896l-12-32-8 3 13 32" fill="#83b5ff"/><path d="M1430 712l-8-28-8 7 8 27" fill="#97c6ff"/><path d="M1433 930l-13-34-7 3 13 34" fill="#7cadf7"/><path d="M1558 903l-2-7-7 1 2 7" fill="#638ece"/><path d="M1523 805l-6-31-8 0 6 32" fill="#73a5ef"/><path d="M1548 915l0-6-8 1 1 7" fill="#7cb2ff"/><path d="M1363 537l7 1-8 8-1-5" fill="#77aaf7"/><path d="M1554 571l-3-29-11 7 3 28" fill="#c7f7ff"/><path d="M1468 850l-8-31-8 4 9 30" fill="#8abbff"/><path d="M1391 841l-12-30-8 4 13 30" fill="#a4d6ff"/><path d="M1362 541l2 5-11-2 5-5" fill="#77aaf7"/><path d="M1409 868l-12-31-8 3 12 31" fill="#90c3ff"/><path d="M1422 947l-3-7-7 3 3 7" fill="#ceffff"/><path d="M1144 601l3 7-11 5-3-7" fill="#9fcfff"/><path d="M1607 534l0-29-11-2 1 30" fill="#73a5ef"/><path d="M1520 747l-5-30-10-1 6 31" fill="#70a1e9"/><path d="M1374 816l-12-30-8 5 12 29" fill="#baecff"/><path d="M1564 908l-1-8-7 1 1 8" fill="#7db1ff"/><path d="M1316 717l-13-27-6 7 12 27" fill="#95c4ff"/><path d="M1546 899l-7-35-7 1 6 36" fill="#71a2eb"/><path d="M1179 594l0 7-13 2-2-8" fill="#6f9fe7"/><path d="M1437 739l-8-29-8 6 8 28" fill="#9fceff"/><path d="M1451 856l-9-30-9 1 10 31" fill="#72a3ed"/><path d="M1409 722l-8-27-11-2 9 28" fill="#6c9be1"/><path d="M1265 624l-12-26-5 10 12 26" fill="#6590d0"/><path d="M1434 947l-3-6-7 3 3 6" fill="#7eb3ff"/><path d="M1421 898l-13-32-7 3 12 32" fill="#86b8ff"/><path d="M1460 821l-8-30-8 5 9 29" fill="#98c9ff"/><path d="M1528 836l-5-33-9 1 6 33" fill="#73a5ef"/><path d="M1534 867l-6-33-8 1 6 33" fill="#73a4ee"/><path d="M1533 490l4 7-12 9-4-7" fill="#9fceff"/><path d="M1419 942l-2-7-7 3 2 7" fill="#6590d0"/><path d="M1553 915l0-7-7 1 0 7" fill="#7cb2ff"/><path d="M1428 932l-14-34-7 3 14 34" fill="#7daef8"/><path d="M1445 766l-9-29-7 5 8 29" fill="#a3d3ff"/><path d="M1575 620l-1-30-11 3 2 30" fill="#9bceff"/><path d="M1452 793l-8-29-8 5 9 29" fill="#a1d1ff"/><path d="M1563 902l-1-7-8 1 2 7" fill="#638ecd"/><path d="M1514 667l-5-29-10-3 5 29" fill="#6997db"/><path d="M1417 748l-8-28-11-1 9 29" fill="#6d9de4"/><path d="M1584 618l-1-30-11 2 1 30" fill="#84b8ff"/><path d="M1463 853l-9-31-8 4 9 30" fill="#7faff6"/><path d="M1539 523l-2-28-12 9 3 28" fill="#9ccaff"/><path d="M1417 949l-4-7-6 3 3 7" fill="#d2ffff"/><path d="M1442 828l-9-29-9 1 10 29" fill="#71a2eb"/><path d="M1380 568l-8-26-9 8 8 25" fill="#8ebafb"/><path d="M1403 870l-12-31-8 4 13 30" fill="#96c8ff"/><path d="M1457 855l-9-30-8 2 9 30" fill="#70a0e8"/><path d="M1356 791l-12-28-8 5 13 28" fill="#bff1ff"/><path d="M1569 908l-1-8-7 1 1 8" fill="#7cb0fe"/><path d="M1368 538l5 5-9 9-2-8" fill="#7daaed"/><path d="M1162 631l-16-25-11 5 16 26" fill="#e4ffff"/><path d="M1425 774l-8-28-10 0 9 28" fill="#6f9fe6"/><path d="M1524 776l-5-30-9-1 6 31" fill="#71a2eb"/><path d="M1193 625l-14-26-14 2 15 25" fill="#75a7f2"/><path d="M1373 575l-8-26-12-1 8 25" fill="#6591d2"/><path d="M1434 801l-9-29-10 0 10 29" fill="#70a0e9"/><path d="M1551 899l-6-35-8 1 7 35" fill="#70a1e9"/><path d="M1429 949l-3-6-7 3 3 6" fill="#7eb3ff"/><path d="M1363 544l2 7-12-2 1-7" fill="#6895d8"/><path d="M1558 914l0-7-7 1 0 7" fill="#7cb2ff"/><path d="M1415 900l-13-32-7 3 13 32" fill="#89bbff"/><path d="M1386 844l-13-30-7 4 12 29" fill="#aadcff"/><path d="M1414 944l-2-7-7 3 2 7" fill="#6590d0"/><path d="M1423 934l-14-33-7 3 14 33" fill="#7eaff8"/><path d="M1621 472l-6 4-10-3 5-5" fill="#77aaf7"/><path d="M1567 622l-2-30-11 5 2 30" fill="#b7e9ff"/><path d="M1387 592l-8-26-9 7 8 26" fill="#96c2ff"/><path d="M1569 902l-2-8-7 1 1 8" fill="#638dcd"/><path d="M1540 866l-6-33-8 1 6 33" fill="#72a3ed"/><path d="M1327 743l-12-28-7 7 12 27" fill="#9ecdff"/><path d="M1556 598l-2-29-12 6 3 29" fill="#c6f8ff"/><path d="M1599 589l0-30-11 0 1 30" fill="#76a9f5"/><path d="M1131 603l5 4-10 6-6-2" fill="#77aaf7"/><path d="M1380 599l-8-26-12-2 8 27" fill="#6692d4"/><path d="M1370 598l-8-26-13-4 9 26" fill="#6591d3"/><path d="M1529 805l-5-31-9 0 6 31" fill="#71a3ec"/><path d="M1518 694l-5-29-9-3 4 29" fill="#6b99de"/><path d="M1412 951l-4-7-6 3 3 7" fill="#d6ffff"/><path d="M1276 648l-12-26-5 10 12 25" fill="#6893d4"/><path d="M1454 824l-8-29-8 3 9 29" fill="#89b9ff"/><path d="M1194 590l-3 5-15 1 2-6" fill="#77aaf7"/><path d="M1534 835l-5-32-8 0 5 33" fill="#72a3ed"/><path d="M1592 617l-1-30-10 1 1 31" fill="#79adfa"/><path d="M1424 951l-3-6-7 3 4 6" fill="#7eb3ff"/><path d="M1575 907l-1-8-8 1 1 8" fill="#7baffd"/><path d="M1449 827l-9-29-9 1 9 29" fill="#6f9fe6"/><path d="M1195 650l-14-26-13 3 16 25" fill="#86b9ff"/><path d="M1394 617l-8-27-9 7 8 26" fill="#9ecaff"/><path d="M1616 475l-1 7-10-4 1-7" fill="#6693d6"/><path d="M1557 898l-6-35-8 1 6 35" fill="#6fa0e8"/><path d="M1564 913l0-7-8 1 1 7" fill="#7cb2ff"/><path d="M1398 873l-13-31-8 4 13 30" fill="#9accff"/><path d="M1185 652l-15-26-11 4 15 26" fill="#afe3ff"/><path d="M1387 623l-8-26-11-1 8 26" fill="#6794d6"/><path d="M1368 819l-13-29-7 4 13 29" fill="#b7e9ff"/><path d="M1542 549l-3-28-12 9 3 27" fill="#a3d2ff"/><path d="M1410 902l-13-31-7 3 13 32" fill="#8bbdff"/><path d="M1417 936l-13-33-7 3 14 33" fill="#7eaff8"/><path d="M1409 946l-2-7-7 3 2 7" fill="#6590d0"/><path d="M1502 542l-4-27-10-7 4 27" fill="#5f88c6"/><path d="M1401 641l-8-26-8 6 8 27" fill="#a6d3ff"/><path d="M1574 901l-1-7-8 0 2 8" fill="#628dcd"/><path d="M1446 797l-8-29-8 4 8 28" fill="#95c4ff"/><path d="M1607 562l0-30-10-1 0 30" fill="#73a5ef"/><path d="M1615 509l0-29-10-4 0 30" fill="#6e9ee6"/><path d="M1522 721l-5-29-9-3 5 30" fill="#6c9be1"/><path d="M1440 800l-8-29-9 1 9 29" fill="#6e9de4"/><path d="M1394 647l-8-26-11-1 9 27" fill="#6895d8"/><path d="M1505 508l-6 3-11-7 7-4" fill="#77aaf7"/><path d="M1500 510l-2 7-10-7 1-7" fill="#628ccc"/><path d="M1577 648l-2-30-10 3 2 30" fill="#94c7ff"/><path d="M1407 954l-4-8-6 4 3 7" fill="#daffff"/><path d="M1419 953l-3-6-7 3 4 6" fill="#7eb3ff"/><path d="M1408 666l-7-27-9 7 8 26" fill="#aedbff"/><path d="M1545 866l-5-33-8 0 6 33" fill="#71a2eb"/><path d="M1439 770l-9-29-8 5 9 28" fill="#a1d0ff"/><path d="M1339 769l-13-28-6 6 12 27" fill="#a5d5ff"/><path d="M1569 912l0-6-7 1 0 6" fill="#7cb2ff"/><path d="M1580 906l-1-8-7 1 1 8" fill="#7baffc"/><path d="M1134 605l4 7-9 7-4-7" fill="#a5d4ff"/><path d="M1402 672l-8-27-11 0 8 26" fill="#6996da"/><path d="M1416 692l-8-28-9 6 8 27" fill="#b4e2ff"/><path d="M1562 897l-5-35-8 1 6 35" fill="#6e9de4"/><path d="M1432 773l-8-28-9 1 8 28" fill="#6d9ce2"/><path d="M1585 647l-1-31-11 2 2 31" fill="#82b5ff"/><path d="M1287 673l-12-27-5 10 12 25" fill="#6b98d9"/><path d="M1431 743l-8-28-9 5 9 28" fill="#aad9ff"/><path d="M1423 717l-8-27-8 5 8 27" fill="#b1dfff"/><path d="M1380 846l-13-29-7 4 13 30" fill="#abddff"/><path d="M1206 648l-14-25-13 2 15 25" fill="#76a8f3"/><path d="M1409 696l-8-26-10 0 8 27" fill="#6a98dc"/><path d="M1558 626l-2-30-11 6 3 29" fill="#c4f5ff"/><path d="M1425 747l-9-27-9 0 8 28" fill="#6c9ae0"/><path d="M1569 651l-2-31-11 5 3 29" fill="#ade0ff"/><path d="M1526 748l-4-29-9-2 5 30" fill="#6d9de4"/><path d="M1417 722l-8-28-10 1 8 27" fill="#6b99de"/><path d="M1404 948l-2-7-7 3 2 7" fill="#6590d0"/><path d="M1412 939l-13-34-7 4 14 33" fill="#7eaff7"/><path d="M1506 567l-4-27-10-7 4 28" fill="#608ac8"/><path d="M1192 593l0 8-15 0 0-7" fill="#6d9de4"/><path d="M1405 905l-14-32-7 4 13 31" fill="#8cbeff"/><path d="M1580 900l-2-7-7 1 1 7" fill="#628dcd"/><path d="M1176 655l-16-25-10 5 16 25" fill="#e6ffff"/><path d="M1540 835l-5-32-8 0 5 32" fill="#70a1ea"/><path d="M1392 875l-13-30-7 4 13 30" fill="#9cceff"/><path d="M1544 576l-2-29-12 8 3 28" fill="#abdaff"/><path d="M1415 955l-4-5-7 3 4 5" fill="#7eb3ff"/><path d="M1531 777l-5-31-9-1 5 31" fill="#6f9fe6"/><path d="M1402 956l-4-7-6 3 3 7" fill="#deffff"/><path d="M1153 636l-16-26-9 7 16 25" fill="#f0ffff"/><path d="M1574 912l1-7-8 1 0 7" fill="#7cb2ff"/><path d="M1535 805l-5-30-8-1 5 31" fill="#70a0e9"/><path d="M1568 896l-6-35-7 2 5 34" fill="#6e9ee5"/><path d="M1205 624l-13-25-15 1 14 25" fill="#70a0e9"/><path d="M1351 795l-13-28-7 6 13 27" fill="#aadbff"/><path d="M1585 906l0-8-8 1 1 8" fill="#7aaefb"/><path d="M1600 617l-1-30-10 0 1 31" fill="#75a8f4"/><path d="M1551 865l-5-32-8 0 6 33" fill="#70a0e9"/><path d="M1593 646l-1-31-10 2 1 30" fill="#79acf9"/><path d="M1509 592l-4-27-10-6 5 28" fill="#618ccb"/><path d="M1299 697l-12-26-6 8 12 26" fill="#709de0"/><path d="M1209 673l-15-25-12 3 16 25" fill="#8abdff"/><path d="M1399 951l-2-8-7 4 3 7" fill="#6590d0"/><path d="M1407 941l-14-33-7 3 15 33" fill="#7daef6"/><path d="M1585 900l-1-8-8 1 2 8" fill="#628dcd"/><path d="M1200 676l-16-26-11 4 16 26" fill="#b4e7ff"/><path d="M1579 677l-2-31-10 3 2 31" fill="#8cbfff"/><path d="M1410 957l-4-5-7 3 4 6" fill="#7eb3ff"/><path d="M1560 654l-2-30-11 5 3 29" fill="#bef0ff"/><path d="M1573 896l-5-36-8 2 6 34" fill="#70a0e8"/><path d="M1362 822l-12-29-7 6 13 28" fill="#abdcff"/><path d="M1399 907l-13-31-7 4 13 31" fill="#8dbeff"/><path d="M1579 911l1-7-7 1-1 7" fill="#7cb1ff"/><path d="M1607 590l0-30-10-1 0 30" fill="#73a5ef"/><path d="M1547 603l-3-29-11 7 3 29" fill="#b1e1ff"/><path d="M1615 537l0-30-10-3 0 30" fill="#6f9fe6"/><path d="M1397 958l-3-7-7 3 4 7" fill="#e2ffff"/><path d="M1571 679l-2-30-11 3 3 30" fill="#9fd2ff"/><path d="M1513 618l-4-28-10-5 5 28" fill="#638ece"/><path d="M1591 905l-1-8-7 1 0 8" fill="#7aadfa"/><path d="M1586 676l-1-31-10 2 2 31" fill="#7eb2fe"/><path d="M1220 672l-15-26-12 2 14 26" fill="#78aaf5"/><path d="M1374 850l-12-30-7 5 13 29" fill="#a6d7ff"/><path d="M1310 722l-12-27-6 9 12 26" fill="#78a5e8"/><path d="M1387 878l-13-30-7 4 13 30" fill="#9bccff"/><path d="M1546 835l-5-31-8-1 5 32" fill="#6fa0e8"/><path d="M1394 953l-2-7-7 3 3 7" fill="#6690d0"/><path d="M1557 864l-5-32-8 1 5 32" fill="#6d9de4"/><path d="M1402 943l-14-33-7 4 15 32" fill="#7cadf4"/><path d="M1578 895l-4-36-8 2 5 35" fill="#70a1e9"/><path d="M1517 643l-4-27-10-5 5 28" fill="#6490d1"/><path d="M1518 497l6 2-12 10-6-2" fill="#77aaf7"/><path d="M1590 899l-1-7-7 1 1 7" fill="#628dcc"/><path d="M1218 648l-14-26-14 1 14 25" fill="#70a1ea"/><path d="M1405 960l-4-6-7 3 4 6" fill="#7eb3ff"/><path d="M1585 911l0-7-7 1-1 6" fill="#7cb1ff"/><path d="M1549 630l-2-29-11 7 3 28" fill="#b7e7ff"/><path d="M1563 682l-3-30-10 4 3 30" fill="#b0e2ff"/><path d="M1191 679l-16-26-10 5 16 26" fill="#e7ffff"/><path d="M1392 960l-3-7-7 4 4 7" fill="#e5ffff"/><path d="M1521 669l-4-28-10-4 5 29" fill="#6692d5"/><path d="M1322 748l-13-28-6 8 13 26" fill="#7fadf2"/><path d="M1601 646l-1-31-10 1 1 30" fill="#75a8f4"/><path d="M1596 905l0-8-8 1 1 7" fill="#79adfa"/><path d="M1542 806l-5-31-9-1 5 31" fill="#6e9ee5"/><path d="M1394 910l-13-31-7 4 13 30" fill="#8bbcff"/><path d="M1168 659l-16-25-9 6 16 25" fill="#f1ffff"/><path d="M1227 585l2-5-4 11-2 6" fill="#4f71a5"/><path d="M1507 514l-1-4-4-4 5 4" fill="#4b6c9d"/><path d="M1594 675l-1-31-10 1 1 31" fill="#78abf7"/><path d="M1580 706l-2-31-9 3 2 30" fill="#85b8ff"/><path d="M1122 610l6 2-8 8-7-2" fill="#77aaf7"/><path d="M1223 697l-15-25-11 3 15 25" fill="#8ec1ff"/><path d="M1573 708l-2-31-10 3 2 31" fill="#92c5ff"/><path d="M1563 863l-5-32-8 1 5 33" fill="#6f9fe6"/><path d="M1584 894l-4-35-8 1 4 35" fill="#70a1ea"/><path d="M1525 696l-5-29-9-3 5 29" fill="#6895d8"/><path d="M1389 955l-2-7-7 4 3 7" fill="#6690d0"/><path d="M1209 591l-4 5-16-1 3-5" fill="#77aaf7"/><path d="M1537 777l-4-29-9-2 5 30" fill="#6d9ce2"/><path d="M1529 530l-3-27-11 10 3 27" fill="#83b0f3"/><path d="M1523 498l4 7-12 10-4-7" fill="#95c3ff"/><path d="M1400 962l-4-6-6 4 4 5" fill="#7eb3ff"/><path d="M1529 722l-5-28-9-3 5 29" fill="#6997dc"/><path d="M1214 700l-15-26-11 4 16 26" fill="#b8ecff"/><path d="M1397 945l-14-32-7 4 15 32" fill="#7aa9f0"/><path d="M1596 899l-2-8-7 1 1 8" fill="#628ccc"/><path d="M1533 750l-5-30-8-2 4 30" fill="#6b9adf"/><path d="M1333 773l-12-27-6 7 12 26" fill="#89b7fd"/><path d="M1590 910l1-7-8 1 0 7" fill="#7cb1ff"/><path d="M1588 705l-2-31-10 2 2 31" fill="#7caffb"/><path d="M1552 657l-3-29-10 6 3 29" fill="#baeaff"/><path d="M1568 862l-4-33-8 2 5 33" fill="#73a4ed"/><path d="M1608 618l-1-30-10-1 1 30" fill="#73a5ef"/><path d="M1615 564l0-29-10-3 0 30" fill="#6f9fe7"/><path d="M1233 696l-14-26-13 2 15 26" fill="#7aacf7"/><path d="M1565 710l-2-30-10 4 3 30" fill="#a0d2ff"/><path d="M1552 834l-4-31-9 1 5 31" fill="#6d9ce2"/><path d="M1382 881l-14-30-6 5 13 29" fill="#97c8ff"/><path d="M1388 963l-4-7-7 3 4 7" fill="#e8ffff"/><path d="M1231 671l-14-25-14 1 15 25" fill="#71a2eb"/><path d="M1126 611l4 6-7 8-5-6" fill="#87b4f8"/><path d="M1345 799l-12-28-7 7 13 27" fill="#92c1ff"/><path d="M1601 904l0-7-7 0 0 8" fill="#79acf9"/><path d="M1574 861l-4-33-8 2 4 33" fill="#73a4ee"/><path d="M1532 556l-3-28-11 10 3 27" fill="#8ab7fb"/><path d="M1589 894l-4-36-7 1 4 36" fill="#71a1ea"/><path d="M1575 737l-2-31-10 3 3 31" fill="#87baff"/><path d="M1369 853l-13-29-6 5 12 28" fill="#9cccff"/><path d="M1357 826l-13-29-6 6 13 28" fill="#9ac9ff"/><path d="M1555 685l-3-30-10 6 3 29" fill="#b2e3ff"/><path d="M1582 736l-2-32-9 2 2 32" fill="#7fb2fe"/><path d="M1385 958l-3-7-7 3 3 7" fill="#6690d0"/><path d="M1389 912l-13-30-7 4 13 30" fill="#89b9ff"/><path d="M1395 964l-4-5-6 3 4 5" fill="#7eb3ff"/><path d="M1206 594l0 8-16-1 0-8" fill="#6c9be1"/><path d="M1392 948l-14-32-7 3 15 32" fill="#79a8ef"/><path d="M1146 640l-17-24-7 7 16 25" fill="#bdeeff"/><path d="M1568 739l-3-31-9 4 3 30" fill="#92c4ff"/><path d="M1601 899l-1-8-8 1 2 7" fill="#628ccc"/><path d="M1595 910l1-7-7 0-1 7" fill="#7cb1ff"/><path d="M1249 608l-11-25-4 12 11 24" fill="#5e86c3"/><path d="M1595 704l-1-31-10 1 2 31" fill="#77aaf6"/><path d="M1580 861l-4-34-8 1 4 34" fill="#73a5ef"/><path d="M1558 833l-4-31-8 2 4 30" fill="#71a1e8"/><path d="M1218 625l-13-25-15-1 13 25" fill="#6c9ae0"/><path d="M1601 675l-1-31-9 0 1 31" fill="#75a8f4"/><path d="M1206 703l-16-26-10 5 17 26" fill="#e8ffff"/><path d="M1535 582l-3-28-11 9 3 27" fill="#92c0ff"/><path d="M1237 722l-15-26-11 3 16 26" fill="#93c6ff"/><path d="M1564 831l-4-32-8 3 4 31" fill="#78a9f3"/><path d="M1558 713l-3-30-10 5 3 29" fill="#a7d8ff"/><path d="M1548 805l-5-30-8 0 5 31" fill="#6c9be1"/><path d="M1570 830l-3-32-9 2 4 32" fill="#78a9f3"/><path d="M1233 580l6 5-4 11-5-5" fill="#618bc9"/><path d="M1589 735l-1-32-10 2 2 31" fill="#79acf8"/><path d="M1383 965l-4-7-7 4 4 7" fill="#ebffff"/><path d="M1183 683l-16-26-9 6 17 26" fill="#f2ffff"/><path d="M1577 767l-2-32-9 3 3 31" fill="#7fb2fd"/><path d="M1228 581l7-1-4 12-7 0" fill="#77aaf7"/><path d="M1571 768l-3-31-9 3 3 31" fill="#85b8ff"/><path d="M1629 477l-6 4-10-6 6-4" fill="#77aaf7"/><path d="M1595 893l-4-36-8 1 4 36" fill="#71a1ea"/><path d="M1606 904l0-8-7 1 0 8" fill="#78acf9"/><path d="M1246 720l-14-26-12 2 15 26" fill="#7caffa"/><path d="M1243 695l-13-26-13 1 14 26" fill="#72a4ed"/><path d="M1576 829l-3-33-8 2 3 32" fill="#77a9f3"/><path d="M1624 479l-2 8-9-6 1-7" fill="#638ecf"/><path d="M1261 632l-12-25-5 11 12 24" fill="#5f89c6"/><path d="M1561 741l-4-30-9 4 4 30" fill="#99caff"/><path d="M1229 724l-16-26-10 4 16 26" fill="#bdf0ff"/><path d="M1538 608l-3-28-11 8 3 28" fill="#9ac8ff"/><path d="M1573 798l-3-32-8 3 3 31" fill="#7caff9"/><path d="M1586 860l-4-34-8 1 4 34" fill="#73a5ef"/><path d="M1567 800l-4-32-8 3 4 31" fill="#7fb1fb"/><path d="M1584 765l-2-31-9 2 2 31" fill="#7badf9"/><path d="M1388 950l-15-32-7 3 15 32" fill="#7babf3"/><path d="M1608 647l0-31-10-1 1 31" fill="#73a5ef"/><path d="M1615 592l0-30-10-2 0 30" fill="#6fa0e8"/><path d="M1622 514l0-29-9-6 0 30" fill="#6997db"/><path d="M1391 967l-4-6-7 4 4 5" fill="#7eb3ff"/><path d="M1564 770l-4-31-9 4 4 30" fill="#8bbcff"/><path d="M1380 960l-3-7-6 3 2 8" fill="#6690cf"/><path d="M1580 797l-3-32-9 2 3 32" fill="#7aacf7"/><path d="M1600 909l1-7-7 1-1 7" fill="#7cb1ff"/><path d="M1560 801l-3-31-9 4 4 30" fill="#80b2fb"/><path d="M1376 884l-13-30-6 5 13 29" fill="#91c1ff"/><path d="M1606 898l-1-7-7 0 1 8" fill="#628ccb"/><path d="M1544 777l-5-29-8-1 4 30" fill="#6b99df"/><path d="M1583 828l-3-33-9 2 4 32" fill="#76a8f3"/><path d="M1230 648l-13-25-15-1 14 26" fill="#6c9ce2"/><path d="M1384 915l-13-30-7 4 13 29" fill="#83b3f9"/><path d="M1541 635l-3-29-11 8 4 27" fill="#a2d1ff"/><path d="M1554 804l-4-31-9 2 5 31" fill="#74a4eb"/><path d="M1272 656l-12-26-5 10 12 25" fill="#618bc9"/><path d="M1506 509l0 6-9-5 6-4" fill="#77aaf7"/><path d="M1596 734l-1-32-9 1 1 32" fill="#76a9f5"/><path d="M1586 796l-2-33-9 2 3 32" fill="#77aaf5"/><path d="M1591 765l-2-32-9 1 2 32" fill="#77aaf6"/><path d="M1544 662l-3-29-11 6 4 29" fill="#aad9ff"/><path d="M1378 968l-4-7-6 3 4 7" fill="#eeffff"/><path d="M1557 772l-4-30-9 4 4 30" fill="#8cbdff"/><path d="M1600 893l-3-36-8 1 4 36" fill="#71a1ea"/><path d="M1591 859l-3-34-8 1 4 34" fill="#73a5ef"/><path d="M1602 704l-1-31-9 0 1 31" fill="#75a7f3"/><path d="M1540 750l-5-29-8-1 4 29" fill="#6a98dd"/><path d="M1612 904l0-8-8 0 0 8" fill="#78abf8"/><path d="M1510 545l-3-27-11-4 4 27" fill="#618bca"/><path d="M1383 952l-15-32-8 4 16 32" fill="#7daef6"/><path d="M1547 689l-3-29-10 6 3 28" fill="#a9d9ff"/><path d="M1256 719l-14-26-12 1 14 26" fill="#73a5ef"/><path d="M1283 680l-12-26-5 9 12 26" fill="#648ecd"/><path d="M1251 746l-15-26-10 3 15 26" fill="#99ccff"/><path d="M1553 744l-3-30-9 5 4 29" fill="#98c9ff"/><path d="M1161 664l-17-25-7 7 16 25" fill="#c1f3ff"/><path d="M1589 827l-3-33-8 1 3 33" fill="#75a7f2"/><path d="M1550 716l-3-29-10 5 4 29" fill="#a3d3ff"/><path d="M1364 856l-13-28-6 5 13 28" fill="#92c2ff"/><path d="M1508 506l6 2-10 7 1-6" fill="#77aaf7"/><path d="M1386 969l-4-5-7 3 5 5" fill="#7eb3ff"/><path d="M1260 744l-15-26-11 2 15 27" fill="#80b3fe"/><path d="M1221 727l-16-26-10 5 17 26" fill="#e8ffff"/><path d="M1506 513l1 7-11-4 2-7" fill="#638ecf"/><path d="M1550 775l-4-30-9 3 5 29" fill="#7aa9f0"/><path d="M1514 569l-4-26-10-4 4 27" fill="#628dcc"/><path d="M1375 963l-3-7-6 3 3 7" fill="#6690cf"/><path d="M1536 723l-4-28-9-2 4 29" fill="#6996da"/><path d="M1605 909l2-7-8 1-1 6" fill="#7cb1ff"/><path d="M1242 671l-13-25-14 0 14 25" fill="#6d9de4"/><path d="M1379 918l-13-30-8 3 14 30" fill="#7dacf3"/><path d="M1294 704l-12-26-5 9 12 25" fill="#6792d2"/><path d="M1612 898l-1-8-8 1 1 7" fill="#618ccb"/><path d="M1517 594l-3-27-10-3 3 28" fill="#638ecf"/><path d="M1198 707l-16-26-9 6 17 25" fill="#f2ffff"/><path d="M1593 795l-2-32-9 1 2 32" fill="#76a8f4"/><path d="M1532 697l-4-28-9-2 4 28" fill="#6895d8"/><path d="M1243 749l-15-27-10 4 16 27" fill="#c2f5ff"/><path d="M1608 676l0-31-10-1 1 31" fill="#73a5f0"/><path d="M1521 619l-4-27-10-2 4 27" fill="#6490d1"/><path d="M1352 830l-13-28-6 6 13 27" fill="#8cbbff"/><path d="M1622 541l0-29-9-5 0 29" fill="#6a98dc"/><path d="M1615 620l0-30-10-2 1 30" fill="#70a0e9"/><path d="M1528 671l-4-28-9-2 4 28" fill="#6793d6"/><path d="M1524 645l-3-28-10-2 4 28" fill="#6591d3"/><path d="M1305 728l-12-26-5 8 12 26" fill="#6c97d9"/><path d="M1597 764l-1-32-9 1 2 32" fill="#75a8f4"/><path d="M1597 859l-2-35-8 1 2 34" fill="#73a4ee"/><path d="M1546 747l-3-29-10 3 5 29" fill="#81b0f7"/><path d="M1605 893l-2-37-8 1 3 36" fill="#70a1ea"/><path d="M1340 804l-12-28-6 7 12 26" fill="#82b1f5"/><path d="M1374 970l-4-7-7 4 4 7" fill="#f0ffff"/><path d="M1317 753l-12-27-6 8 12 26" fill="#719ee1"/><path d="M1595 826l-2-33-9 1 3 33" fill="#74a6f1"/><path d="M1378 955l-16-32-7 3 16 32" fill="#7fb0f8"/><path d="M1329 778l-13-27-6 7 13 27" fill="#79a7ea"/><path d="M1371 887l-13-29-6 4 13 29" fill="#8dbcff"/><path d="M1269 743l-14-26-11 1 14 27" fill="#75a7f1"/><path d="M1374 920l-14-30-8 3 15 30" fill="#7eaff8"/><path d="M1617 904l0-8-7 0 0 8" fill="#77abf8"/><path d="M1520 539l-4-27-11 6 4 27" fill="#a5d2ff"/><path d="M1603 734l-1-32-9 0 1 32" fill="#74a7f2"/><path d="M1254 694l-13-25-13 0 13 26" fill="#6e9ee5"/><path d="M1382 971l-5-5-6 4 4 5" fill="#7eb3ff"/><path d="M1543 720l-4-29-9 4 4 28" fill="#8ab9ff"/><path d="M1513 507l4 6-12 7-1-7" fill="#93c2ff"/><path d="M1274 769l-15-27-11 3 16 27" fill="#83b6ff"/><path d="M1265 771l-15-27-10 4 16 26" fill="#9ccfff"/><path d="M1523 564l-4-27-11 6 4 27" fill="#a7d4ff"/><path d="M1611 909l1-7-7 0-2 7" fill="#7bb1ff"/><path d="M1370 965l-2-7-7 4 3 7" fill="#6690cf"/><path d="M1539 693l-3-28-10 4 4 28" fill="#95c4ff"/><path d="M1526 589l-4-27-10 6 3 26" fill="#a8d5ff"/><path d="M1599 795l-2-33-8 1 2 32" fill="#75a7f2"/><path d="M1617 898l-1-8-7 1 1 7" fill="#618ccb"/><path d="M1536 667l-4-28-10 4 4 28" fill="#9fceff"/><path d="M1529 615l-3-28-11 6 4 27" fill="#a7d5ff"/><path d="M1368 922l-14-30-8 3 15 30" fill="#82b3fd"/><path d="M1532 641l-3-28-10 5 4 27" fill="#a4d2ff"/><path d="M1176 687l-16-25-8 7 17 25" fill="#c6f7ff"/><path d="M1236 752l-16-27-9 5 16 26" fill="#e9ffff"/><path d="M1222 593l-3 5-16-2 4-5" fill="#77aaf7"/><path d="M1282 767l-14-26-11 2 15 26" fill="#77a9f4"/><path d="M1603 858l-2-34-8 1 2 34" fill="#72a4ee"/><path d="M1266 718l-13-25-13 0 14 26" fill="#6f9fe7"/><path d="M1609 705l-1-31-9-1 1 31" fill="#73a5ef"/><path d="M1373 957l-16-32-7 4 17 32" fill="#81b2fa"/><path d="M1601 826l-2-33-8 0 2 34" fill="#74a6f0"/><path d="M1114 617l7 1-6 9-8 0" fill="#77aaf7"/><path d="M1223 595l3-6-1 5 0 5" fill="#4d6ea0"/><path d="M1366 890l-13-29-8 3 14 29" fill="#7dadf4"/><path d="M1611 892l-3-36-7 1 2 36" fill="#70a1ea"/><path d="M1258 773l-16-26-9 4 16 26" fill="#c0f3ff"/><path d="M1615 648l0-30-9-2 0 31" fill="#70a1ea"/><path d="M1622 568l0-29-9-5 0 30" fill="#6a99de"/><path d="M1369 973l-4-7-7 4 5 6" fill="#f2ffff"/><path d="M1359 860l-13-28-6 5 12 27" fill="#95c4ff"/><path d="M1604 764l-1-32-9 0 1 32" fill="#74a6f2"/><path d="M1213 731l-16-26-8 6 16 25" fill="#f2ffff"/><path d="M1622 904l0-8-7 0 0 8" fill="#77abf7"/><path d="M1287 794l-14-27-10 3 15 27" fill="#87baff"/><path d="M1377 974l-5-5-6 3 5 5" fill="#7eb3ff"/><path d="M1119 617l5 6-6 9-5-6" fill="#6e9adb"/><path d="M1361 892l-14-28-8 2 14 29" fill="#7cadf7"/><path d="M1363 925l-15-30-7 3 15 30" fill="#87b8ff"/><path d="M1279 742l-14-26-12 1 14 26" fill="#70a1e9"/><path d="M1280 796l-16-27-9 3 16 27" fill="#9ed1ff"/><path d="M1616 908l1-6-7 0-1 7" fill="#7bb1ff"/><path d="M1295 792l-14-26-10 2 14 26" fill="#7aacf7"/><path d="M1366 968l-3-7-6 3 2 7" fill="#6690cf"/><path d="M1139 646l-16-24-6 8 16 24" fill="#86b6fd"/><path d="M1355 894l-14-28-8 2 14 29" fill="#81b3fd"/><path d="M1231 626l-12-24-16-2 13 25" fill="#6896da"/><path d="M1622 898l-1-8-7 0 1 8" fill="#618bca"/><path d="M1219 596l0 8-15-2 0-8" fill="#6b9adf"/><path d="M1605 795l-1-33-9 0 2 33" fill="#74a6f1"/><path d="M1291 766l-13-26-12 1 14 27" fill="#72a3ec"/><path d="M1609 734l0-31-9-1 1 32" fill="#73a5ef"/><path d="M1347 834l-12-28-7 5 13 27" fill="#99c8ff"/><path d="M1608 858l-2-34-7 0 2 35" fill="#72a3ed"/><path d="M1368 960l-16-32-7 3 17 32" fill="#82b3fc"/><path d="M1301 819l-15-27-9 3 15 27" fill="#8bbeff"/><path d="M1308 817l-14-27-10 3 15 27" fill="#7db0fa"/><path d="M1354 863l-13-27-8 2 13 28" fill="#7cacf3"/><path d="M1349 896l-15-28-8 2 16 30" fill="#88baff"/><path d="M1616 892l-2-36-8 0 3 37" fill="#70a0e9"/><path d="M1607 826l-2-33-8 0 2 33" fill="#73a5ef"/><path d="M1251 776l-16-26-9 5 16 26" fill="#dfffff"/><path d="M1272 799l-15-27-9 4 16 26" fill="#bcefff"/><path d="M1342 867l-14-28-9 3 14 28" fill="#7daff9"/><path d="M1348 865l-13-27-9 2 14 28" fill="#78a9f3"/><path d="M1242 649l-12-25-15-1 13 25" fill="#6997dc"/><path d="M1364 975l-4-6-6 3 4 7" fill="#f3ffff"/><path d="M1615 677l0-31-9-1 0 30" fill="#70a1ea"/><path d="M1358 927l-16-30-7 3 16 31" fill="#8bbdff"/><path d="M1303 791l-13-27-11 2 14 27" fill="#73a5ee"/><path d="M1622 595l0-29-9-4 0 30" fill="#6b9adf"/><path d="M1191 711l-16-25-7 6 16 26" fill="#cbfcff"/><path d="M1322 843l-15-27-9 2 15 28" fill="#82b4ff"/><path d="M1335 869l-14-28-9 3 15 28" fill="#86b8ff"/><path d="M1294 822l-15-28-9 4 15 27" fill="#a0d3ff"/><path d="M1372 976l-4-5-7 4 5 5" fill="#7eb3ff"/><path d="M1627 903l1-8-8 1 0 8" fill="#77aaf7"/><path d="M1329 841l-14-27-9 2 14 28" fill="#79abf5"/><path d="M1316 816l-14-27-10 2 14 27" fill="#76a7f1"/><path d="M1315 845l-15-27-9 2 16 28" fill="#8fc1ff"/><path d="M1621 908l1-6-7 0-1 7" fill="#7bb1ff"/><path d="M1336 808l-13-27-7 6 13 26" fill="#9ac8ff"/><path d="M1229 755l-17-26-8 6 17 25" fill="#f2ffff"/><path d="M1254 672l-13-25-14-1 13 25" fill="#6a99de"/><path d="M1361 970l-3-7-6 4 3 7" fill="#6590cf"/><path d="M1640 487l-5-3-9-8 5 4" fill="#4f72a5"/><path d="M1343 899l-15-29-8 3 16 29" fill="#90c2ff"/><path d="M1610 764l-1-32-8 0 1 32" fill="#73a5ef"/><path d="M1336 840l-13-27-10 1 14 28" fill="#74a6ef"/><path d="M1329 872l-15-29-8 3 15 29" fill="#91c3ff"/><path d="M1628 897l-2-7-7 0 1 8" fill="#618bca"/><path d="M1265 695l-12-25-14-1 13 25" fill="#6b9ae0"/><path d="M1342 837l-12-26-9 2 13 27" fill="#79a9f0"/><path d="M1324 783l-12-26-7 6 12 26" fill="#97c4ff"/><path d="M1308 847l-15-27-9 3 16 28" fill="#9fd2ff"/><path d="M1155 669l-17-24-6 8 17 24" fill="#8bbbff"/><path d="M1364 962l-17-32-7 4 17 32" fill="#83b4fd"/><path d="M1324 814l-13-26-11 1 14 27" fill="#72a3ec"/><path d="M1287 824l-16-27-8 4 16 27" fill="#b7eaff"/><path d="M1353 930l-16-31-7 4 16 30" fill="#8fc0ff"/><path d="M1277 718l-13-25-13 0 13 25" fill="#6d9ce2"/><path d="M1614 858l-2-34-8 0 2 34" fill="#71a3ec"/><path d="M1615 706l0-31-9-2 1 32" fill="#71a2eb"/><path d="M1611 795l-1-33-8 0 1 33" fill="#73a4ef"/><path d="M1621 892l-2-36-7 0 2 36" fill="#6fa0e8"/><path d="M1266 802l-16-27-9 4 17 27" fill="#d4ffff"/><path d="M1312 790l-13-26-11 1 13 26" fill="#70a1e9"/><path d="M1288 742l-12-26-13 0 14 26" fill="#6e9de4"/><path d="M1360 978l-4-7-7 4 5 7" fill="#f4ffff"/><path d="M1622 623l0-30-9-3 0 30" fill="#6c9be1"/><path d="M1224 590l8 0-5 8-3-4" fill="#77aaf7"/><path d="M1313 759l-13-26-6 6 12 26" fill="#92beff"/><path d="M1300 765l-13-25-11 0 13 26" fill="#6f9fe7"/><path d="M1323 874l-16-28-8 3 16 28" fill="#9dcfff"/><path d="M1612 826l-1-33-8 0 2 33" fill="#72a4ee"/><path d="M1368 979l-5-5-6 3 5 5" fill="#7eb3ff"/><path d="M1338 901l-16-29-8 4 17 29" fill="#98caff"/><path d="M1632 903l1-8-7 1-1 7" fill="#77aaf6"/><path d="M1246 618l-11-25-6 9 11 24" fill="#6993d1"/><path d="M1331 812l-13-26-9 2 13 27" fill="#76a5ec"/><path d="M1301 734l-12-25-6 7 12 25" fill="#8bb7f9"/><path d="M1207 735l-17-26-7 7 17 25" fill="#cfffff"/><path d="M1626 908l2-7-8 1-1 6" fill="#7bb1ff"/><path d="M1257 641l-12-25-6 8 12 25" fill="#6d98d6"/><path d="M1290 711l-12-26-6 7 12 25" fill="#81adee"/><path d="M1268 664l-12-25-6 8 12 24" fill="#739ddd"/><path d="M1279 687l-12-25-6 7 12 25" fill="#79a4e5"/><path d="M1244 780l-16-26-8 5 16 26" fill="#e7ffff"/><path d="M1357 973l-3-7-7 4 3 7" fill="#658fce"/><path d="M1302 850l-16-28-8 4 16 28" fill="#b0e3ff"/><path d="M1230 589l6 6-7 9-3-7" fill="#6690d0"/><path d="M1616 735l-1-31-8-1 1 31" fill="#71a2ec"/><path d="M1633 897l-1-7-8 0 2 7" fill="#618bca"/><path d="M1225 594l4 4-12 0 3-6" fill="#77aaf7"/><path d="M1319 788l-12-26-10 2 13 26" fill="#73a2e8"/><path d="M1629 519l0-28-8-7-1 29" fill="#638ece"/><path d="M1348 932l-17-30-7 4 17 30" fill="#92c3ff"/><path d="M1359 965l-17-32-7 4 18 32" fill="#84b5fd"/><path d="M1281 827l-16-27-8 4 16 27" fill="#c8fbff"/><path d="M1631 486l-2 7-8-7 1-8" fill="#608ac8"/><path d="M1622 651l0-30-9-3 0 30" fill="#6d9ce2"/><path d="M1317 877l-16-29-8 4 17 28" fill="#a8daff"/><path d="M1170 693l-16-25-6 8 16 24" fill="#90c0ff"/><path d="M1636 484l-7 3-8-7 7-4" fill="#77aaf7"/><path d="M1308 764l-12-26-11 2 13 26" fill="#709fe5"/><path d="M1619 858l-1-34-8 0 2 34" fill="#71a2eb"/><path d="M1332 904l-16-29-7 4 16 29" fill="#9ed0ff"/><path d="M1627 892l-2-36-8 0 2 36" fill="#6f9fe7"/><path d="M1355 980l-4-6-6 4 4 6" fill="#f5ffff"/><path d="M1616 765l0-32-9-1 1 32" fill="#71a3ec"/><path d="M1364 981l-5-5-6 4 4 5" fill="#7db3ff"/><path d="M1296 740l-12-25-10 1 12 26" fill="#6e9de2"/><path d="M1638 903l0-8-7 0-1 8" fill="#76aaf6"/><path d="M1631 908l2-7-7 0-2 7" fill="#7bb1ff"/><path d="M1222 759l-16-26-7 7 16 25" fill="#d4ffff"/><path d="M1259 805l-16-27-8 5 17 27" fill="#daffff"/><path d="M1242 625l-12-24-13 1 12 24" fill="#6895d8"/><path d="M1285 716l-12-25-11 2 13 25" fill="#6c9be0"/><path d="M1617 795l-1-32-8-1 1 33" fill="#71a3ec"/><path d="M1618 826l-1-33-8 0 1 33" fill="#71a2ec"/><path d="M1252 648l-11-25-13 1 12 25" fill="#6996da"/><path d="M1274 693l-12-24-11 1 12 25" fill="#6b99de"/><path d="M1296 853l-16-28-8 5 17 27" fill="#bceeff"/><path d="M1352 976l-3-7-6 3 3 7" fill="#658fce"/><path d="M1263 670l-11-24-13 1 13 25" fill="#6a97dc"/><path d="M1228 596l3 7-14 1 0-8" fill="#6b9adf"/><path d="M1628 546l1-29-9-6 0 29" fill="#6490d0"/><path d="M1622 679l0-30-9-3 0 31" fill="#6d9de4"/><path d="M1638 897l-1-7-7 0 1 7" fill="#618bc9"/><path d="M1343 935l-17-30-7 4 17 30" fill="#93c5ff"/><path d="M1355 968l-18-32-6 4 17 31" fill="#84b5fd"/><path d="M1311 879l-16-28-7 4 16 28" fill="#afe1ff"/><path d="M1186 716l-17-25-6 7 16 25" fill="#97c7ff"/><path d="M1327 907l-17-29-7 4 17 28" fill="#a2d4ff"/><path d="M1632 892l-2-36-7 0 2 36" fill="#6e9ee6"/><path d="M1359 984l-5-5-6 4 5 4" fill="#7db3ff"/><path d="M1351 983l-4-6-6 3 4 7" fill="#f5ffff"/><path d="M1275 830l-17-27-7 5 16 27" fill="#cdffff"/><path d="M1622 707l0-30-9-2 0 30" fill="#6e9ee5"/><path d="M1625 858l-1-34-8 0 1 34" fill="#70a1e9"/><path d="M1636 908l2-7-7 0-2 7" fill="#7bb1ff"/><path d="M1238 784l-17-26-7 5 17 26" fill="#d0ffff"/><path d="M1643 903l0-7-7-1 0 8" fill="#76a9f6"/><path d="M1628 572l0-28-8-6 0 29" fill="#6591d3"/><path d="M1348 978l-3-7-6 4 2 7" fill="#658fce"/><path d="M1622 736l0-31-9-2 1 32" fill="#6f9fe7"/><path d="M1290 856l-16-27-8 4 17 27" fill="#bff1ff"/><path d="M1643 898l-1-8-7 0 1 7" fill="#608ac9"/><path d="M1108 625l8 0-5 10-7 0" fill="#77aaf7"/><path d="M1338 938l-17-30-7 4 18 30" fill="#94c5ff"/><path d="M1134 653l-16-25-4 10 16 24" fill="#6c9add"/><path d="M1624 826l-1-32-8-1 1 33" fill="#70a1ea"/><path d="M1114 624l5 6-4 9-5-5" fill="#638ecd"/><path d="M1350 970l-18-31-6 4 18 31" fill="#84b4fc"/><path d="M1622 766l0-32-8-1 0 32" fill="#6fa0e8"/><path d="M1201 740l-17-26-6 8 17 25" fill="#9eceff"/><path d="M1623 796l-1-32-8-1 1 32" fill="#70a1e9"/><path d="M1628 599l0-29-8-5 0 29" fill="#6693d5"/><path d="M1306 882l-17-28-7 5 17 28" fill="#b1e3ff"/><path d="M1253 809l-16-27-7 6 17 26" fill="#c9fbff"/><path d="M1322 909l-17-28-7 4 17 29" fill="#a3d4ff"/><path d="M1355 986l-5-4-6 3 5 5" fill="#7db3ff"/><path d="M1347 986l-5-7-6 4 5 7" fill="#f4ffff"/><path d="M1637 892l-1-35-8-1 2 36" fill="#6e9de4"/><path d="M1641 908l2-6-7-1-2 7" fill="#7bb0ff"/><path d="M1648 904l0-8-7-1 0 8" fill="#76a9f5"/><path d="M1630 858l-1-33-7-1 1 34" fill="#6f9fe7"/><path d="M1628 626l0-29-8-5 0 30" fill="#6794d7"/><path d="M1343 981l-3-7-6 4 3 7" fill="#658fcd"/><path d="M1269 834l-17-27-7 5 17 27" fill="#c1f3ff"/><path d="M1150 675l-17-24-4 9 16 24" fill="#6f9ce0"/><path d="M1217 764l-17-26-6 7 16 25" fill="#a6d6ff"/><path d="M1648 898l-1-8-7 0 1 7" fill="#608ac8"/><path d="M1333 940l-17-29-7 4 18 29" fill="#93c4ff"/><path d="M1346 973l-18-31-7 4 18 31" fill="#83b3fb"/><path d="M1628 654l0-30-8-4 0 30" fill="#6996da"/><path d="M1285 859l-17-27-7 5 17 27" fill="#b8eaff"/><path d="M1351 989l-6-5-6 4 6 5" fill="#7db3ff"/><path d="M1342 989l-4-7-6 4 5 6" fill="#f4ffff"/><path d="M1629 827l0-32-8-2 1 33" fill="#6f9fe7"/><path d="M1646 908l2-6-7-1-2 7" fill="#7bb0ff"/><path d="M1317 912l-17-28-7 4 17 29" fill="#a1d2ff"/><path d="M1301 886l-17-28-7 4 17 28" fill="#addfff"/><path d="M1642 892l-1-35-7 0 1 35" fill="#6d9ce3"/><path d="M1653 904l1-8-8 0 0 8" fill="#76a9f5"/><path d="M1232 788l-16-26-7 7 17 25" fill="#a9daff"/><path d="M1628 682l0-30-8-4 0 30" fill="#6a98dc"/><path d="M1165 698l-16-24-5 9 16 24" fill="#72a0e4"/><path d="M1339 984l-3-7-6 4 3 7" fill="#658ecd"/><path d="M1629 797l-1-32-8-2 1 32" fill="#6e9ee5"/><path d="M1628 710l0-30-8-4 0 31" fill="#6b99df"/><path d="M1636 859l-1-33-8-1 1 33" fill="#6e9ee5"/><path d="M1654 898l-1-8-8 0 1 8" fill="#608ac8"/><path d="M1628 767l0-31-8-2 1 31" fill="#6d9de3"/><path d="M1628 738l0-30-8-3 0 31" fill="#6c9be1"/><path d="M1341 976l-18-31-6 4 18 31" fill="#81b1f9"/><path d="M1248 813l-17-27-6 6 17 26" fill="#abdcff"/><path d="M1329 943l-18-29-6 4 17 30" fill="#91c2ff"/><path d="M1346 992l-5-5-6 4 6 5" fill="#7db3ff"/><path d="M1181 722l-17-25-5 8 17 24" fill="#76a4e9"/><path d="M1338 991l-4-6-6 4 4 6" fill="#f2ffff"/><path d="M1651 909l2-7-7 0-2 6" fill="#7bb0ff"/><path d="M1264 838l-17-27-6 6 17 26" fill="#abdcff"/><path d="M1648 892l-2-35-7 0 1 35" fill="#6b9adf"/><path d="M1658 904l1-8-7 0-1 8" fill="#75a9f5"/><path d="M1646 495l-5-4-8-9 5 4" fill="#5276ab"/><path d="M1312 916l-17-29-6 5 17 28" fill="#9ccdff"/><path d="M1335 987l-3-7-6 4 3 7" fill="#648ecc"/><path d="M1280 863l-17-27-6 5 16 27" fill="#a9daff"/><path d="M1296 889l-17-28-7 5 18 28" fill="#a4d5ff"/><path d="M1635 828l-1-32-7-2 0 33" fill="#6d9de4"/><path d="M1659 898l-1-7-7-1 1 8" fill="#6089c8"/><path d="M1196 745l-16-25-5 8 16 24" fill="#7ba9ef"/><path d="M1634 526l1-28-7-9-1 29" fill="#5d86c2"/><path d="M1337 979l-18-31-6 4 18 31" fill="#80aff6"/><path d="M1641 859l-1-33-7-1 1 34" fill="#6d9ce3"/><path d="M1342 994l-5-4-6 4 5 4" fill="#7db3ff"/><path d="M1324 946l-18-29-6 5 18 29" fill="#8dbeff"/><path d="M1656 909l2-7-7 0-2 6" fill="#7bb0ff"/><path d="M1334 994l-5-6-6 4 5 6" fill="#f1ffff"/><path d="M1636 493l-2 7-7-9 2-7" fill="#5d86c3"/><path d="M1212 769l-17-26-5 8 17 25" fill="#81b0f6"/><path d="M1634 552l0-28-7-8 0 28" fill="#5e87c4"/><path d="M1634 798l0-31-8-2 1 31" fill="#6c9be1"/><path d="M1653 892l-1-35-8 0 2 35" fill="#6c9ae0"/><path d="M1663 904l1-8-7 0-1 8" fill="#75a8f4"/><path d="M1103 638l3-6-3 11-2 7" fill="#5174a8"/><path d="M1642 491l-7 3-7-8 7-4" fill="#77aaf7"/><path d="M1330 989l-3-6-6 4 3 7" fill="#648ecc"/><path d="M1634 578l0-28-7-8-1 29" fill="#6089c7"/><path d="M1227 793l-16-26-6 7 17 25" fill="#87b6fc"/><path d="M1664 898l-1-7-7-1 1 8" fill="#6089c7"/><path d="M1634 769l0-31-8-3 0 32" fill="#6b99de"/><path d="M1307 919l-17-28-6 5 17 27" fill="#95c5ff"/><path d="M1634 604l0-28-7-7-1 29" fill="#618bca"/><path d="M1338 997l-5-4-6 4 5 4" fill="#7db2ff"/><path d="M1243 817l-17-26-5 7 17 25" fill="#8dbcff"/><path d="M1332 982l-18-31-6 4 18 30" fill="#7dadf3"/><path d="M1634 740l-1-30-7-3 0 30" fill="#6997db"/><path d="M1633 631l1-29-8-6 0 29" fill="#638dcd"/><path d="M1291 892l-17-27-6 5 17 27" fill="#97c7ff"/><path d="M1131 660l-17-24-2 10 16 24" fill="#628dcc"/><path d="M1661 909l2-7-7 0-2 7" fill="#7bb0ff"/><path d="M1640 828l0-31-8-2 1 32" fill="#6c9be1"/><path d="M1646 859l0-32-8-1 1 33" fill="#6b99de"/><path d="M1633 712l0-29-7-4 0 30" fill="#6794d7"/><path d="M1633 658l0-29-7-6 0 30" fill="#6490d1"/><path d="M1259 842l-17-27-5 6 16 26" fill="#92c2ff"/><path d="M1330 997l-5-6-6 4 5 6" fill="#efffff"/><path d="M1633 685l0-29-7-5 0 30" fill="#6692d4"/><path d="M1275 867l-17-27-6 6 17 26" fill="#96c6ff"/><path d="M1658 893l0-36-8 0 1 35" fill="#6d9de4"/><path d="M1320 949l-18-29-6 5 18 29" fill="#89b9ff"/><path d="M1110 632l6 6-3 10-5-5" fill="#5f88c5"/><path d="M1668 905l1-8-7-1-1 8" fill="#75a8f4"/><path d="M1105 633l7 0-2 10-8 2" fill="#77aaf7"/><path d="M1326 992l-3-7-6 5 3 6" fill="#648dcb"/><path d="M1146 682l-16-24-3 10 16 24" fill="#648fcf"/><path d="M1669 899l-1-8-7 0 1 7" fill="#5f89c7"/><path d="M1334 1000l-6-4-5 4 5 4" fill="#7db2ff"/><path d="M1640 799l-1-30-7-3 0 31" fill="#6a99de"/><path d="M1161 705l-16-24-3 9 16 24" fill="#6591d1"/><path d="M1328 984l-18-30-6 4 18 30" fill="#7baaf0"/><path d="M1666 909l2-6-7-1-2 7" fill="#7bb0ff"/><path d="M1303 922l-17-28-6 6 17 27" fill="#8cbcff"/><path d="M1652 859l0-32-8 0 0 32" fill="#6c9be2"/><path d="M1663 893l0-36-7 0 0 35" fill="#6e9de4"/><path d="M1326 1000l-5-6-6 4 5 6" fill="#ecffff"/><path d="M1673 905l1-8-7 0-1 8" fill="#75a8f3"/><path d="M1177 728l-17-25-3 9 16 24" fill="#6793d5"/><path d="M1646 829l-1-31-7-1 0 31" fill="#6a98dc"/><path d="M1315 953l-17-29-6 5 17 28" fill="#84b3fa"/><path d="M1322 995l-3-7-6 5 3 6" fill="#638dca"/><path d="M1287 896l-17-27-6 6 17 26" fill="#89b9ff"/><path d="M1639 771l0-30-7-4 0 31" fill="#6896da"/><path d="M1674 899l-1-7-7-1 1 8" fill="#5f89c6"/><path d="M1192 751l-16-25-4 9 16 24" fill="#6a96d9"/><path d="M1658 859l0-33-8 1 0 32" fill="#6fa0e8"/><path d="M1330 1003l-6-5-5 5 5 4" fill="#7db2ff"/><path d="M1208 774l-17-25-4 8 16 25" fill="#6d9add"/><path d="M1271 871l-17-27-5 6 16 26" fill="#84b3f9"/><path d="M1671 910l2-7-7 0-2 6" fill="#7bb0ff"/><path d="M1668 893l1-36-8 0 0 36" fill="#6e9ee5"/><path d="M1324 987l-18-30-6 5 18 29" fill="#78a6eb"/><path d="M1223 798l-17-26-4 8 17 25" fill="#729fe3"/><path d="M1255 846l-17-26-5 6 17 26" fill="#7dacf1"/><path d="M1322 1003l-5-6-6 4 5 6" fill="#e9ffff"/><path d="M1239 822l-17-26-4 7 16 25" fill="#77a5ea"/><path d="M1639 743l0-30-7-4 0 30" fill="#6793d6"/><path d="M1678 906l1-8-7-1-1 8" fill="#75a7f3"/><path d="M1652 829l0-32-9 1 1 31" fill="#6d9ce3"/><path d="M1299 926l-18-28-5 5 17 27" fill="#83b2f8"/><path d="M1318 998l-3-7-6 5 3 6" fill="#638cca"/><path d="M1645 800l0-30-8-2 1 31" fill="#6996da"/><path d="M1663 859l1-33-8 0 0 33" fill="#70a1e9"/><path d="M1639 715l0-29-7-4 0 29" fill="#6590d1"/><path d="M1679 900l-1-8-7 0 1 7" fill="#5f88c6"/><path d="M1311 956l-17-29-6 5 17 28" fill="#7faef4"/><path d="M1326 1006l-6-5-5 5 6 4" fill="#7db2ff"/><path d="M1673 894l1-36-7-1-1 36" fill="#6e9ee5"/><path d="M1675 910l3-6-7-1-2 7" fill="#7ab0ff"/><path d="M1639 688l0-28-7-6 0 30" fill="#638dcd"/><path d="M1320 990l-18-30-6 5 18 29" fill="#79a8ed"/><path d="M1658 828l0-32-8 1 0 32" fill="#71a2eb"/><path d="M1318 1006l-5-7-6 5 5 6" fill="#e6ffff"/><path d="M1283 900l-17-27-5 6 16 26" fill="#7dabf1"/><path d="M1639 662l0-29-7-6 0 29" fill="#618bc9"/><path d="M1683 906l1-8-7-1-1 8" fill="#75a7f3"/><path d="M1669 859l1-33-8 0-1 33" fill="#70a1ea"/><path d="M1645 772l0-30-8-2 0 30" fill="#6895d8"/><path d="M1639 635l0-28-7-6 0 28" fill="#5f88c6"/><path d="M1314 1001l-3-7-6 5 3 6" fill="#638cc9"/><path d="M1652 799l0-31-9 1 0 31" fill="#6d9de4"/><path d="M1704 473l1 6-14 4-2-5" fill="#77aaf7"/><path d="M1717 471l-1 5-13 3-1-5" fill="#77aaf7"/><path d="M1639 609l0-27-7-8 0 29" fill="#5d86c2"/><path d="M1651 503l-5-4-7-9 6 4" fill="#5478ae"/><path d="M1664 828l1-33-9 1 0 32" fill="#72a3ec"/><path d="M1639 584l0-28-6-8-1 28" fill="#5c83bf"/><path d="M1684 900l-1-7-7-1 1 7" fill="#5f88c5"/><path d="M1639 533l1-27-7-10 0 28" fill="#597fb9"/><path d="M1639 558l0-27-6-9 0 28" fill="#5a81bc"/><path d="M1267 875l-17-26-5 6 17 26" fill="#76a4e8"/><path d="M1322 1009l-6-5-5 5 6 4" fill="#7db2ff"/><path d="M1307 959l-17-28-6 5 17 27" fill="#7dabf0"/><path d="M1295 929l-17-27-5 6 16 26" fill="#7caaef"/><path d="M1678 894l1-36-7 0-1 35" fill="#6e9ee5"/><path d="M1680 911l3-7-7-1-2 7" fill="#7ab0ff"/><path d="M1316 993l-19-30-6 5 19 29" fill="#7cacf2"/><path d="M1658 798l1-31-9 2 0 30" fill="#73a4ee"/><path d="M1314 1009l-5-7-6 5 5 6" fill="#e3ffff"/><path d="M1641 501l-2 7-6-10 2-7" fill="#5c84bf"/><path d="M1251 850l-17-25-4 7 16 25" fill="#6f9de0"/><path d="M1645 744l0-29-8-3 0 30" fill="#6693d5"/><path d="M1690 478l3 4-14 6-4-4" fill="#77aaf7"/><path d="M1674 860l2-34-8 0-1 33" fill="#70a1ea"/><path d="M1729 470l-2 5-13 1 1-5" fill="#77aaf7"/><path d="M1687 907l2-8-7-1-1 8" fill="#74a7f2"/><path d="M1670 828l1-33-8 1-1 32" fill="#72a3ed"/><path d="M1101 648l3-7-1 12-2 6" fill="#5378ae"/><path d="M1705 477l2 7-14 5-2-8" fill="#81b2fa"/><path d="M1716 474l2 8-13 3-2-8" fill="#74a4ec"/><path d="M1665 797l1-31-9 1-1 31" fill="#73a5ef"/><path d="M1652 770l0-30-9 2 0 29" fill="#6e9ee4"/><path d="M1128 668l-16-24 0 11 16 23" fill="#5c83bf"/><path d="M1235 826l-16-25-4 8 16 24" fill="#6b97d9"/><path d="M1703 511l4-29-14 5-3 28" fill="#95c8ff"/><path d="M1647 499l-7 3-6-9 7-3" fill="#77aaf7"/><path d="M1310 1004l-3-7-6 5 3 6" fill="#628bc8"/><path d="M1714 509l4-29-13 3-4 29" fill="#82b6ff"/><path d="M1143 690l-16-24-1 11 16 23" fill="#5d85c2"/><path d="M1220 803l-17-25-3 8 16 24" fill="#6793d4"/><path d="M1689 901l-1-8-7-1 1 8" fill="#5e87c5"/><path d="M1159 712l-17-24-1 10 16 23" fill="#5e87c4"/><path d="M1318 1011l-6-4-5 5 6 4" fill="#7db2ff"/><path d="M1204 780l-16-25-3 9 16 24" fill="#648fcf"/><path d="M1659 769l1-31-10 3 0 30" fill="#76a7f1"/><path d="M1174 734l-17-24-1 10 15 23" fill="#608ac8"/><path d="M1189 757l-16-24-3 9 16 23" fill="#628ccb"/><path d="M1645 717l0-29-8-3 0 29" fill="#6591d2"/><path d="M1108 641l6 5-1 11-5-5" fill="#5c84c0"/><path d="M1303 962l-17-27-7 4 18 27" fill="#84b3f9"/><path d="M1279 904l-17-27-5 6 17 26" fill="#75a3e7"/><path d="M1312 996l-19-30-6 5 19 29" fill="#7dadf3"/><path d="M1683 895l2-36-8-1-1 36" fill="#6e9ee5"/><path d="M1700 539l4-30-14 4-2 29" fill="#91c3ff"/><path d="M1685 911l3-6-7-1-3 7" fill="#7ab0ff"/><path d="M1671 797l2-32-9 1-1 32" fill="#73a5ef"/><path d="M1692 481l3 7-14 6-3-7" fill="#94c5ff"/><path d="M1727 473l1 8-12 1-2-8" fill="#6f9fe6"/><path d="M1692 515l3-29-14 6-2 28" fill="#a3d4ff"/><path d="M1666 768l1-31-9 2-1 30" fill="#76a8f2"/><path d="M1710 537l4-30-12 3-4 29" fill="#80b3ff"/><path d="M1675 828l2-33-8 0-1 33" fill="#72a3ed"/><path d="M1310 1012l-5-6-5 4 5 6" fill="#dfffff"/><path d="M1102 643l8-1 0 11-8 1" fill="#77aaf7"/><path d="M1724 508l4-29-12 1-4 30" fill="#79acf9"/><path d="M1679 860l2-34-7 0-2 34" fill="#70a1ea"/><path d="M1652 742l0-29-9 2 0 29" fill="#6f9fe5"/><path d="M1291 933l-17-27-5 5 16 27" fill="#7fadf1"/><path d="M1697 566l4-29-13 3-3 30" fill="#8cbeff"/><path d="M1692 907l2-8-7-1-2 8" fill="#74a7f2"/><path d="M1690 542l2-29-13 5-2 29" fill="#9fd0ff"/><path d="M1645 690l0-28-8-3 0 28" fill="#648fd0"/><path d="M1659 740l1-30-10 3 0 30" fill="#7bacf6"/><path d="M1673 767l2-32-10 2-1 31" fill="#75a7f2"/><path d="M1667 739l2-31-11 3 0 30" fill="#7aacf6"/><path d="M1677 483l4 5-15 7-4-4" fill="#77aaf7"/><path d="M1306 1007l-3-7-6 5 4 6" fill="#628bc8"/><path d="M1707 565l4-30-12 2-4 30" fill="#7eb1fd"/><path d="M1687 569l3-29-13 5-2 28" fill="#9accff"/><path d="M1695 594l3-30-12 4-3 29" fill="#87baff"/><path d="M1677 797l2-33-8 1-2 32" fill="#73a5ef"/><path d="M1740 470l-3 5-12 0 2-5" fill="#77aaf7"/><path d="M1263 879l-17-26-4 7 16 25" fill="#6e9bde"/><path d="M1298 965l-17-27-7 4 18 27" fill="#89b9ff"/><path d="M1693 901l0-7-7-1 1 7" fill="#5e87c4"/><path d="M1674 737l2-30-9 2-2 30" fill="#78aaf5"/><path d="M1720 536l4-30-12 2-4 29" fill="#78abf8"/><path d="M1315 1014l-6-4-6 5 6 4" fill="#7db2ff"/><path d="M1685 596l2-29-12 5-2 28" fill="#95c7ff"/><path d="M1668 710l2-30-11 3-1 30" fill="#81b2fc"/><path d="M1308 999l-20-30-6 5 20 29" fill="#7eadf4"/><path d="M1645 664l0-28-8-4 0 29" fill="#628dcd"/><path d="M1692 622l3-30-12 3-2 30" fill="#83b6ff"/><path d="M1676 709l2-31-10 3-2 30" fill="#7caef9"/><path d="M1652 715l1-29-10 2 0 29" fill="#71a0e7"/><path d="M1683 624l2-30-12 4-2 30" fill="#8fc1ff"/><path d="M1688 895l2-36-7-1-2 36" fill="#6e9de4"/><path d="M1690 912l3-7-7-1-3 7" fill="#7aafff"/><path d="M1660 712l1-29-10 3-1 29" fill="#82b3fc"/><path d="M1704 593l3-30-11 2-3 29" fill="#7caffb"/><path d="M1681 828l3-33-9 0-2 33" fill="#72a3ed"/><path d="M1679 766l3-31-9 1-2 31" fill="#74a6f1"/><path d="M1680 652l3-30-12 4-1 29" fill="#89bbff"/><path d="M1678 680l3-30-11 3-2 30" fill="#82b4ff"/><path d="M1670 682l2-30-12 4-1 29" fill="#89baff"/><path d="M1689 650l3-30-11 3-2 29" fill="#7fb2fd"/><path d="M1685 861l2-35-8 0-2 34" fill="#70a1e9"/><path d="M1680 519l2-28-14 8-1 27" fill="#9dcdff"/><path d="M1306 1015l-5-6-5 4 5 6" fill="#dbffff"/><path d="M1682 737l2-31-10 1-2 31" fill="#76a8f3"/><path d="M1687 679l2-31-10 2-3 30" fill="#7baef9"/><path d="M1680 486l3 7-15 8-3-7" fill="#a3d3ff"/><path d="M1671 654l2-29-11 4-2 29" fill="#91c2ff"/><path d="M1716 564l4-30-11 1-4 30" fill="#77abf7"/><path d="M1684 708l3-31-10 1-3 31" fill="#78aaf6"/><path d="M1679 546l2-29-14 7-2 28" fill="#9dcdff"/><path d="M1737 474l0 7-11 0-1-8" fill="#6c9be2"/><path d="M1287 936l-17-26-7 4 17 26" fill="#8dbcff"/><path d="M1701 621l3-30-11 1-3 30" fill="#7aadf9"/><path d="M1673 627l2-29-12 5-1 28" fill="#97c7ff"/><path d="M1697 908l1-8-6-1-2 8" fill="#74a6f2"/><path d="M1247 855l-16-25-4 7 16 25" fill="#6995d7"/><path d="M1645 638l0-27-8-5 0 28" fill="#618bca"/><path d="M1677 573l2-29-14 6-1 28" fill="#9dcdff"/><path d="M1675 600l2-29-13 5-1 29" fill="#9acbff"/><path d="M1661 685l1-29-11 4 0 28" fill="#8abaff"/><path d="M1733 509l4-30-11 0-4 29" fill="#75a8f4"/><path d="M1275 908l-16-26-6 5 17 26" fill="#7dabee"/><path d="M1683 797l3-33-8 0-3 33" fill="#73a4ef"/><path d="M1294 968l-18-27-7 4 19 27" fill="#8cbcff"/><path d="M1653 688l0-29-10 3 0 28" fill="#74a3e9"/><path d="M1302 1010l-3-7-5 5 3 7" fill="#618ac7"/><path d="M1697 649l4-30-11 1-3 31" fill="#79abf7"/><path d="M1649 505l-3-3-1-5 6 4" fill="#5276ab"/><path d="M1712 592l4-30-11 1-3 30" fill="#77aaf6"/><path d="M1698 902l0-7-7-1 0 7" fill="#5e87c4"/><path d="M1645 613l0-28-8-5 0 28" fill="#6089c7"/><path d="M1686 766l3-32-9 1-3 31" fill="#74a6f1"/><path d="M1662 658l1-29-11 5-1 28" fill="#91c1ff"/><path d="M1311 1017l-6-4-6 5 7 4" fill="#7cb2ff"/><path d="M1694 678l4-31-11 2-2 30" fill="#77aaf5"/><path d="M1304 1002l-20-29-6 4 20 29" fill="#7eadf4"/><path d="M1689 736l3-31-10 1-2 31" fill="#75a7f2"/><path d="M1691 707l4-31-10 1-3 31" fill="#76a8f4"/><path d="M1232 832l-16-25-3 8 16 24" fill="#6590d1"/><path d="M1687 828l3-33-8 0-3 33" fill="#71a2ec"/><path d="M1694 913l4-7-7-1-3 7" fill="#7aaffe"/><path d="M1693 896l2-36-7-1-2 36" fill="#6d9de4"/><path d="M1728 537l5-30-11-1-4 30" fill="#75a8f4"/><path d="M1282 939l-17-26-8 4 18 26" fill="#8fc0ff"/><path d="M1653 661l1-28-11 3 0 28" fill="#78a7ed"/><path d="M1663 631l2-29-13 6 0 28" fill="#94c4ff"/><path d="M1645 587l0-27-7-5-1 27" fill="#5e88c5"/><path d="M1709 621l4-31-11 1-3 30" fill="#76a9f5"/><path d="M1690 861l2-34-7-1-2 34" fill="#6fa0e8"/><path d="M1303 1018l-6-6-5 4 5 6" fill="#d7ffff"/><path d="M1663 491l5 3-15 9-4-4" fill="#77aaf7"/><path d="M1665 604l1-28-13 6-1 28" fill="#95c4ff"/><path d="M1217 809l-16-25-3 8 16 24" fill="#628ccb"/><path d="M1645 562l1-27-8-5 0 27" fill="#5d86c2"/><path d="M1702 909l1-8-7-1-1 8" fill="#74a6f1"/><path d="M1289 971l-19-27-6 4 19 27" fill="#8ebeff"/><path d="M1689 797l3-32-8-1-3 33" fill="#72a4ee"/><path d="M1705 649l4-30-10 0-4 30" fill="#76a8f4"/><path d="M1260 884l-16-26-6 6 16 25" fill="#7aa6e9"/><path d="M1724 565l5-30-11-1-4 30" fill="#75a8f3"/><path d="M1271 912l-16-26-8 4 17 26" fill="#93c2ff"/><path d="M1666 578l1-29-13 7-1 28" fill="#94c3ff"/><path d="M1654 635l0-28-11 3 0 28" fill="#7baaef"/><path d="M1298 1013l-3-6-5 4 3 7" fill="#618ac6"/><path d="M1702 678l3-31-9 0-4 31" fill="#75a8f3"/><path d="M1646 537l0-27-8-6 0 28" fill="#5c84c0"/><path d="M1692 767l4-32-9-1-3 32" fill="#73a5f0"/><path d="M1667 551l1-28-14 8 0 27" fill="#92c1ff"/><path d="M1277 942l-18-26-8 4 19 26" fill="#95c7ff"/><path d="M1750 473l-5 4-10-2 3-5" fill="#77aaf7"/><path d="M1698 707l4-31-9 0-4 31" fill="#74a7f2"/><path d="M1202 786l-16-24-2 8 15 24" fill="#6089c7"/><path d="M1695 737l4-32-9 0-3 31" fill="#74a6f1"/><path d="M1668 525l2-27-15 8-1 27" fill="#8fbeff"/><path d="M1703 903l-1-8-6-1 0 8" fill="#5e86c3"/><path d="M1307 1020l-6-4-5 5 6 4" fill="#7cb1ff"/><path d="M1300 1005l-21-29-5 4 21 30" fill="#7eadf4"/><path d="M1720 593l5-30-11-1-4 30" fill="#75a7f3"/><path d="M1648 502l-3 5-6-6 7-3" fill="#77aaf7"/><path d="M1654 609l1-28-12 4 0 27" fill="#7fadf2"/><path d="M1699 913l3-6-6-1-4 6" fill="#7aaffe"/><path d="M1667 493l3 7-14 8-4-7" fill="#a9d8ff"/><path d="M1692 829l3-33-7-1-3 33" fill="#71a2eb"/><path d="M1698 897l2-36-7-1-2 36" fill="#6d9ce3"/><path d="M1646 505l0 7-8-6 2-7" fill="#5e86c3"/><path d="M1266 915l-17-26-8 4 17 25" fill="#8ebfff"/><path d="M1187 763l-16-23-2 9 16 23" fill="#5e86c3"/><path d="M1746 476l-1 7-10-2 0-8" fill="#6997db"/><path d="M1741 511l4-30-10-2-4 30" fill="#73a5ef"/><path d="M1716 621l5-30-10-1-4 31" fill="#74a7f2"/><path d="M1299 1021l-5-6-6 4 6 6" fill="#d3ffff"/><path d="M1695 862l3-34-8-1-2 34" fill="#6f9fe7"/><path d="M1245 860l-16-25-5 7 16 24" fill="#75a1e2"/><path d="M1285 974l-20-27-6 4 20 28" fill="#8fbfff"/><path d="M1655 583l1-27-12 4-1 27" fill="#82b0f5"/><path d="M1172 741l-16-23-1 9 16 23" fill="#5c84bf"/><path d="M1706 909l2-7-7-1-1 7" fill="#74a6f1"/><path d="M1695 798l4-33-9-1-3 33" fill="#71a3ec"/><path d="M1272 945l-19-26-7 4 19 26" fill="#9bccff"/><path d="M1256 888l-16-25-8 4 16 25" fill="#94c4ff"/><path d="M1713 650l4-31-10 0-4 30" fill="#74a6f2"/><path d="M1650 498l5 4-11 4 2-5" fill="#77aaf7"/><path d="M1157 719l-16-23 0 10 15 23" fill="#5a81bc"/><path d="M1260 918l-18-26-8 4 18 25" fill="#97c9ff"/><path d="M1655 558l1-28-12 5 0 27" fill="#85b3f7"/><path d="M1736 538l5-29-10-2-5 29" fill="#73a4ef"/><path d="M1295 1016l-4-6-5 4 4 7" fill="#6089c6"/><path d="M1698 767l4-32-8-1-4 32" fill="#72a4ee"/><path d="M1709 679l4-31-10-1-3 31" fill="#74a6f1"/><path d="M1142 698l-15-23 0 10 15 23" fill="#597fb9"/><path d="M1304 1023l-7-4-5 5 7 4" fill="#7cb1ff"/><path d="M1708 904l-1-8-7-1 1 7" fill="#5d86c3"/><path d="M1705 708l4-31-9-1-4 31" fill="#73a5f0"/><path d="M1702 737l3-31-8-1-4 31" fill="#73a5ef"/><path d="M1296 1008l-21-29-5 4 21 30" fill="#7dacf3"/><path d="M1128 676l-16-23 1 11 15 23" fill="#577db6"/><path d="M1656 532l1-27-13 5 0 27" fill="#88b5f9"/><path d="M1704 914l3-6-7-2-3 7" fill="#7aaffe"/><path d="M1250 891l-16-25-10 3 18 25" fill="#87b9ff"/><path d="M1230 837l-16-24-5 6 16 24" fill="#709bdc"/><path d="M1698 830l3-33-8-2-3 34" fill="#70a1e9"/><path d="M1732 566l5-30-10-2-5 30" fill="#72a4ee"/><path d="M1702 897l3-35-7-2-2 36" fill="#6c9be2"/><path d="M1101 657l2-6 1 11-2 7" fill="#557ab1"/><path d="M1654 500l3 7-13 5 0-7" fill="#84b3f9"/><path d="M1254 920l-18-25-8 4 19 25" fill="#a3d4ff"/><path d="M1281 977l-20-27-7 4 21 28" fill="#8ebeff"/><path d="M1267 948l-20-26-7 4 20 27" fill="#9ecfff"/><path d="M1295 1024l-5-6-5 4 5 6" fill="#ceffff"/><path d="M1244 894l-18-25-9 3 18 25" fill="#93c4ff"/><path d="M1700 863l3-34-7-2-3 35" fill="#6e9ee6"/><path d="M1241 865l-16-25-9 4 17 25" fill="#93c2ff"/><path d="M1728 594l4-30-9-2-5 31" fill="#72a4ee"/><path d="M1108 650l5 5 1 11-5-5" fill="#5a82bc"/><path d="M1711 910l2-7-7-2-2 8" fill="#73a5f0"/><path d="M1701 799l3-33-7-1-4 32" fill="#71a1ea"/><path d="M1291 1020l-3-7-5 4 3 7" fill="#6088c5"/><path d="M1235 868l-17-25-10 3 17 25" fill="#80b1fa"/><path d="M1724 623l4-31-9-1-5 30" fill="#72a4ee"/><path d="M1215 814l-16-23-4 7 15 23" fill="#6b96d6"/><path d="M1102 652l8-1 0 11-7 1" fill="#77aaf7"/><path d="M1300 1026l-6-3-5 4 6 4" fill="#7cb1ff"/><path d="M1237 896l-18-25-9 4 19 25" fill="#a4d6ff"/><path d="M1712 904l0-7-7-1 1 7" fill="#5d86c2"/><path d="M1704 768l4-32-8-1-4 32" fill="#71a2eb"/><path d="M1227 870l-17-24-10 3 18 25" fill="#8cbdff"/><path d="M1292 1011l-21-29-5 5 21 29" fill="#7cabf1"/><path d="M1719 651l5-30-9-2-4 30" fill="#72a4ee"/><path d="M1708 915l4-7-7-1-3 7" fill="#7aaffe"/><path d="M1249 923l-19-25-8 4 20 26" fill="#abddff"/><path d="M1056 669l1 5-14 4-2-5" fill="#77aaf7"/><path d="M1715 680l5-31-9-2-4 31" fill="#72a3ed"/><path d="M1708 738l4-31-9-2-3 32" fill="#71a3ec"/><path d="M1712 709l4-31-9-2-4 31" fill="#72a3ed"/><path d="M1707 898l3-35-7-2-3 36" fill="#6c9ae0"/><path d="M1226 842l-15-24-10 4 17 24" fill="#8fbeff"/><path d="M1262 951l-20-26-7 5 21 26" fill="#9ecfff"/><path d="M1703 831l3-33-7-2-3 33" fill="#6f9fe7"/><path d="M1759 477l-6 4-10-4 5-5" fill="#77aaf7"/><path d="M1277 981l-21-28-6 5 21 27" fill="#8cbcff"/><path d="M1043 672l2 5-13 5-3-4" fill="#77aaf7"/><path d="M1220 873l-18-25-9 4 18 25" fill="#a1d3ff"/><path d="M1292 1027l-6-6-5 5 6 5" fill="#cafcff"/><path d="M1200 792l-16-23-4 7 16 23" fill="#6792d1"/><path d="M1219 845l-16-24-11 3 17 24" fill="#7aabf4"/><path d="M1748 514l4-29-9-4-4 29" fill="#6f9fe7"/><path d="M1071 666l-1 6-15 3-1-6" fill="#77aaf7"/><path d="M1211 847l-17-24-11 4 18 24" fill="#84b6ff"/><path d="M1754 479l-2 8-9-4 1-8" fill="#6591d3"/><path d="M1231 899l-19-25-8 5 19 25" fill="#b3e5ff"/><path d="M1716 911l1-8-6-1-2 8" fill="#73a5f0"/><path d="M1705 864l3-34-7-2-3 34" fill="#6d9de4"/><path d="M1203 850l-18-24-10 4 19 24" fill="#9accff"/><path d="M1287 1023l-3-7-5 5 3 6" fill="#5f88c4"/><path d="M1743 541l5-29-9-4-5 30" fill="#6f9fe7"/><path d="M1057 672l1 8-13 3-3-7" fill="#78a9f1"/><path d="M1076 700l-19-22-13 4 18 22" fill="#89bcff"/><path d="M1195 825l-17-24-11 3 18 24" fill="#7eaff9"/><path d="M1297 1029l-7-3-5 4 7 4" fill="#7cb1ff"/><path d="M1706 800l4-33-8-1-3 32" fill="#6fa0e8"/><path d="M1243 927l-19-26-7 5 20 25" fill="#aedfff"/><path d="M1213 876l-18-25-9 5 19 24" fill="#b7eaff"/><path d="M1186 770l-16-23-4 8 15 23" fill="#648dcb"/><path d="M1212 820l-16-24-10 4 16 23" fill="#89b8fe"/><path d="M1717 905l-1-7-6-1 0 7" fill="#5d85c1"/><path d="M1187 828l-18-24-11 3 19 24" fill="#93c5ff"/><path d="M1204 823l-16-24-12 3 17 24" fill="#75a6ef"/><path d="M1289 1015l-22-30-5 5 22 29" fill="#7aa9ef"/><path d="M1044 675l2 8-12 4-3-7" fill="#8bbbff"/><path d="M1713 916l3-7-6-1-4 7" fill="#7aaffe"/><path d="M1093 722l-19-23-13 4 19 22" fill="#8fc1ff"/><path d="M1064 704l-18-23-13 5 20 22" fill="#b8ebff"/><path d="M1739 569l4-30-8-3-5 30" fill="#6f9fe7"/><path d="M1088 698l-17-22-15 2 18 23" fill="#76a7f0"/><path d="M1170 805l-18-23-11 3 18 24" fill="#8cbeff"/><path d="M1070 670l2 7-16 3-1-7" fill="#71a2ea"/><path d="M1196 853l-19-24-9 4 19 24" fill="#b8eaff"/><path d="M1179 803l-16-23-13 2 18 24" fill="#79aaf4"/><path d="M1031 677l3 4-11 6-5-3" fill="#77aaf7"/><path d="M1104 719l-17-23-15 3 19 23" fill="#78a9f3"/><path d="M1110 743l-19-23-12 4 19 23" fill="#95c7ff"/><path d="M1257 955l-20-27-6 5 20 26" fill="#9bccff"/><path d="M1153 783l-17-23-12 3 18 24" fill="#84b6ff"/><path d="M1121 740l-18-23-14 4 19 22" fill="#7bacf6"/><path d="M1137 762l-18-23-13 3 19 23" fill="#7fb1fb"/><path d="M1712 899l3-35-7-2-3 36" fill="#6b99df"/><path d="M1710 769l4-31-8-2-4 32" fill="#6fa0e8"/><path d="M1178 830l-18-23-10 4 19 23" fill="#b5e7ff"/><path d="M1127 764l-19-23-11 4 18 23" fill="#9ccfff"/><path d="M1225 903l-19-25-8 4 20 25" fill="#bceeff"/><path d="M1734 597l5-30-9-3-4 30" fill="#6f9fe8"/><path d="M1272 984l-20-28-6 5 21 27" fill="#89b9ff"/><path d="M1082 725l-19-23-12 5 20 22" fill="#bef1ff"/><path d="M1086 665l-1 5-17 2 1-6" fill="#77aaf7"/><path d="M1161 808l-18-23-11 4 19 23" fill="#b0e2ff"/><path d="M1144 786l-19-23-11 4 19 23" fill="#a5d8ff"/><path d="M1164 781l-17-23-13 3 18 23" fill="#75a6ef"/><path d="M1171 749l-15-24-4 9 15 22" fill="#618ac7"/><path d="M1288 1030l-5-6-5 5 5 6" fill="#c5f7ff"/><path d="M1189 801l-16-23-12 2 16 23" fill="#72a3eb"/><path d="M1708 832l4-33-8-2-3 33" fill="#6e9ee5"/><path d="M1730 625l5-30-9-3-4 30" fill="#6fa0e8"/><path d="M1714 740l4-31-8-3-4 32" fill="#70a0e8"/><path d="M1197 798l-15-23-11 3 16 23" fill="#84b2f8"/><path d="M1720 912l2-8-7-1-1 8" fill="#73a5ef"/><path d="M1100 746l-19-23-12 5 20 23" fill="#c5f8ff"/><path d="M1148 760l-17-23-14 2 18 23" fill="#73a3ec"/><path d="M1207 879l-19-24-9 4 20 25" fill="#c7faff"/><path d="M1726 653l4-30-8-3-5 31" fill="#6fa0e8"/><path d="M1717 711l5-31-8-3-4 31" fill="#70a0e8"/><path d="M1710 865l3-34-7-2-3 34" fill="#6c9ce2"/><path d="M1722 682l4-31-8-2-5 30" fill="#6fa0e8"/><path d="M1133 738l-17-22-15 2 18 23" fill="#71a1e9"/><path d="M1117 768l-19-24-10 5 19 23" fill="#ccffff"/><path d="M1033 680l3 7-11 5-3-7" fill="#a4d4ff"/><path d="M1284 1026l-3-7-5 5 3 6" fill="#5f87c3"/><path d="M1117 717l-16-22-16 2 17 22" fill="#70a0e7"/><path d="M1238 930l-20-26-6 5 20 26" fill="#aadcff"/><path d="M1054 707l-19-22-11 6 20 22" fill="#ecffff"/><path d="M1189 856l-19-24-9 5 20 24" fill="#d1ffff"/><path d="M1157 727l-16-23-3 9 15 22" fill="#5f87c4"/><path d="M1174 779l-16-23-13 2 17 24" fill="#70a0e8"/><path d="M1293 1032l-6-3-5 4 6 4" fill="#7cb1ff"/><path d="M1102 696l-17-22-16 2 17 22" fill="#6f9ee6"/><path d="M1135 789l-19-23-10 5 19 23" fill="#d4ffff"/><path d="M1101 667l3-7 1 5-1 4" fill="#5378ae"/><path d="M1171 834l-19-24-9 4 19 24" fill="#d7ffff"/><path d="M1153 811l-19-23-10 4 20 24" fill="#daffff"/><path d="M1722 906l-1-7-7-1 1 7" fill="#5d85c1"/><path d="M1085 668l1 8-16 2-2-8" fill="#6f9fe7"/><path d="M1717 917l4-7-7-1-3 6" fill="#7aaffe"/><path d="M1285 1018l-21-29-5 5 21 28" fill="#78a7ed"/><path d="M1183 776l-15-23-12 4 16 23" fill="#7dabf1"/><path d="M1073 729l-20-23-10 5 20 23" fill="#eeffff"/><path d="M1711 801l4-32-7-2-4 32" fill="#6e9ee5"/><path d="M1160 758l-16-23-15 2 17 23" fill="#6e9ee5"/><path d="M1142 706l-15-23-3 9 15 22" fill="#5d85c1"/><path d="M1253 958l-21-26-6 5 21 26" fill="#95c6ff"/><path d="M1220 906l-20-25-7 5 20 25" fill="#baecff"/><path d="M1716 900l3-35-6-2-3 36" fill="#6a98dd"/><path d="M1091 750l-20-23-10 5 20 23" fill="#f0ffff"/><path d="M1269 987l-21-27-6 5 21 27" fill="#85b5fc"/><path d="M1285 1033l-6-6-4 5 5 6" fill="#c0f2ff"/><path d="M1145 737l-16-23-15 2 17 23" fill="#6d9de3"/><path d="M1201 883l-20-25-7 5 20 24" fill="#c9fbff"/><path d="M1020 683l5 3-10 7-6-3" fill="#77aaf7"/><path d="M1725 913l1-8-6-1-2 8" fill="#73a5ef"/><path d="M1109 771l-20-23-9 6 20 23" fill="#f1ffff"/><path d="M1128 685l-15-23-3 10 15 22" fill="#5b83be"/><path d="M1169 755l-16-23-11 4 16 22" fill="#77a6eb"/><path d="M1101 664l-1 5-17 1 1-5" fill="#77aaf7"/><path d="M1715 771l4-31-7-3-4 32" fill="#6e9de4"/><path d="M1127 793l-19-23-9 5 20 23" fill="#f2ffff"/><path d="M1182 860l-19-24-8 5 20 24" fill="#d8ffff"/><path d="M1713 833l4-32-7-2-4 32" fill="#6c9ce2"/><path d="M1146 815l-20-24-9 6 20 23" fill="#f2ffff"/><path d="M1164 837l-20-24-8 6 20 23" fill="#e6ffff"/><path d="M1281 1029l-4-7-5 5 4 7" fill="#5e87c2"/><path d="M1130 716l-15-22-16 1 16 23" fill="#6c9be1"/><path d="M1290 1036l-7-4-4 5 6 3" fill="#7cb1ff"/><path d="M1714 866l4-33-7-2-3 33" fill="#6b9ae0"/><path d="M1234 933l-21-25-6 5 21 25" fill="#a2d3ff"/><path d="M1753 518l5-29-7-5-5 29" fill="#6a98dc"/><path d="M1102 661l9-1-2 8-5-3" fill="#77aaf7"/><path d="M1726 907l0-7-7-1 1 7" fill="#5c84c0"/><path d="M1721 918l4-7-6-1-4 6" fill="#7aaffd"/><path d="M1719 742l4-31-7-3-4 31" fill="#6d9de4"/><path d="M1046 712l-20-22-9 6 20 22" fill="#eaffff"/><path d="M1109 659l5 5-3 9-3-6" fill="#5c84c0"/><path d="M1116 695l-16-22-17 1 17 23" fill="#6b9ae0"/><path d="M1023 684l4 7-9 7-4-7" fill="#a2d1ff"/><path d="M1155 734l-16-22-12 3 16 22" fill="#73a1e6"/><path d="M1282 1021l-22-29-5 5 22 28" fill="#76a5eb"/><path d="M1760 484l-2 7-8-5 2-8" fill="#618bcb"/><path d="M1765 482l-6 4-8-6 6-4" fill="#77aaf7"/><path d="M1749 546l5-30-8-5-5 29" fill="#6a98dd"/><path d="M1723 713l4-31-7-3-4 31" fill="#6d9ce3"/><path d="M1100 667l1 8-17 1-1-8" fill="#6e9ee5"/><path d="M1214 910l-20-25-6 5 20 25" fill="#afe0ff"/><path d="M1249 961l-21-26-6 6 21 25" fill="#8ebeff"/><path d="M1744 573l5-29-7-5-5 29" fill="#6b99de"/><path d="M1064 733l-20-23-8 7 20 22" fill="#e9ffff"/><path d="M1721 901l3-35-7-1-3 35" fill="#6997db"/><path d="M1727 684l5-30-8-4-4 31" fill="#6c9ce2"/><path d="M1282 1036l-6-5-5 4 6 6" fill="#bbedff"/><path d="M1740 600l5-29-8-5-5 30" fill="#6b9adf"/><path d="M1265 990l-21-27-5 5 21 27" fill="#81b0f7"/><path d="M1141 713l-15-22-13 3 15 22" fill="#709ee2"/><path d="M1731 656l5-30-8-4-4 30" fill="#6c9be1"/><path d="M1736 628l4-30-7-4-5 30" fill="#6b9ae0"/><path d="M1716 803l4-32-7-3-4 33" fill="#6c9be1"/><path d="M1083 754l-20-23-8 7 20 22" fill="#e8ffff"/><path d="M1729 914l2-7-7-2-1 8" fill="#72a4ee"/><path d="M1195 886l-20-24-6 5 20 25" fill="#bceeff"/><path d="M1105 664l5 3-12 2 1-5" fill="#77aaf7"/><path d="M1102 775l-20-22-8 6 20 22" fill="#e6ffff"/><path d="M1177 863l-21-23-7 5 21 24" fill="#c9fbff"/><path d="M1277 1032l-3-6-5 4 3 7" fill="#5e86c2"/><path d="M1287 1039l-7-4-5 5 7 3" fill="#7cb1ff"/><path d="M1120 797l-20-23-8 6 21 23" fill="#e4ffff"/><path d="M1127 693l-15-22-14 2 16 23" fill="#6e9bdf"/><path d="M1158 841l-20-24-8 6 21 24" fill="#d6ffff"/><path d="M1139 819l-20-23-8 5 21 24" fill="#e2ffff"/><path d="M1731 908l-1-7-6-1 0 7" fill="#5c84c0"/><path d="M1229 937l-20-25-6 5 21 25" fill="#97c7ff"/><path d="M1726 919l4-7-7-1-4 6" fill="#7aaefd"/><path d="M1718 835l3-32-6-3-4 33" fill="#6b99df"/><path d="M1719 867l3-33-6-2-4 33" fill="#6a98dd"/><path d="M1278 1024l-22-28-4 5 21 28" fill="#74a3e8"/><path d="M1720 773l4-31-7-3-4 31" fill="#6b9ae0"/><path d="M1109 666l4 6-14 3-1-8" fill="#6e9ee4"/><path d="M1278 1040l-5-6-5 5 6 5" fill="#b7e8ff"/><path d="M1245 965l-21-26-5 5 21 26" fill="#86b6fd"/><path d="M1726 902l2-34-6-2-3 34" fill="#6895d8"/><path d="M1011 689l6 2-7 8-7-1" fill="#77aaf7"/><path d="M1210 913l-21-24-6 5 21 25" fill="#9ecfff"/><path d="M1261 994l-21-27-5 5 21 27" fill="#7cabf2"/><path d="M1733 915l2-7-6-2-2 8" fill="#72a4ee"/><path d="M1724 744l4-30-7-4-4 31" fill="#6b99de"/><path d="M1039 717l-20-22-8 7 21 22" fill="#b0e2ff"/><path d="M1015 690l5 6-7 8-5-6" fill="#80adf1"/><path d="M1191 890l-21-24-6 6 21 24" fill="#a5d6ff"/><path d="M1283 1042l-6-4-5 5 7 3" fill="#7cb0ff"/><path d="M1274 1036l-4-7-4 5 3 6" fill="#5d85c1"/><path d="M1057 738l-20-23-7 8 21 22" fill="#b2e3ff"/><path d="M1721 805l4-31-7-4-4 32" fill="#6a98dd"/><path d="M1730 920l4-6-6-2-4 6" fill="#7aaefd"/><path d="M1735 910l0-8-7-1 1 7" fill="#5c83bf"/><path d="M1728 716l4-31-6-4-5 31" fill="#6a98dc"/><path d="M1171 868l-20-24-6 6 20 23" fill="#acddff"/><path d="M1076 759l-20-23-7 7 21 23" fill="#b3e5ff"/><path d="M1275 1027l-22-28-4 5 21 28" fill="#72a0e5"/><path d="M1225 941l-21-25-5 5 21 25" fill="#8abaff"/><path d="M1095 780l-20-23-7 7 21 23" fill="#b5e6ff"/><path d="M1152 845l-20-23-6 6 20 23" fill="#b2e3ff"/><path d="M1724 868l3-32-7-2-3 33" fill="#6996da"/><path d="M1114 802l-20-23-7 6 21 23" fill="#b6e7ff"/><path d="M1133 823l-20-23-7 6 21 23" fill="#b7e8ff"/><path d="M1732 687l4-29-6-5-5 30" fill="#6996da"/><path d="M1722 836l4-31-7-3-3 32" fill="#6997db"/><path d="M1275 1043l-6-6-4 5 6 5" fill="#b2e4ff"/><path d="M1730 903l3-34-6-2-3 35" fill="#6895d9"/><path d="M1736 660l5-30-7-5-4 30" fill="#6895d8"/><path d="M1774 493l-5-4-7-8 6 4" fill="#5275aa"/><path d="M1738 917l2-8-7-2-2 8" fill="#72a4ee"/><path d="M1241 969l-21-26-5 5 21 26" fill="#7eaef4"/><path d="M1740 632l5-29-6-6-5 30" fill="#6794d7"/><path d="M1258 997l-22-26-4 5 21 26" fill="#78a6ec"/><path d="M1725 776l4-31-7-4-4 31" fill="#6996da"/><path d="M1206 917l-21-24-5 6 20 24" fill="#8dbdff"/><path d="M1758 524l5-28-6-8-5 29" fill="#648fd0"/><path d="M1745 605l4-29-6-6-5 29" fill="#6693d5"/><path d="M1280 1045l-6-3-5 4 7 4" fill="#7bb0ff"/><path d="M1754 551l4-29-6-7-5 29" fill="#6490d1"/><path d="M1749 578l5-29-6-7-5 30" fill="#6591d3"/><path d="M1271 1039l-4-7-4 5 3 7" fill="#5d85c0"/><path d="M1734 921l4-6-6-2-4 6" fill="#79aefd"/><path d="M1740 911l-1-8-6-1 0 7" fill="#5b83be"/><path d="M1765 491l-2 6-6-7 1-7" fill="#5d86c3"/><path d="M1186 894l-21-24-5 6 21 24" fill="#8ebeff"/><path d="M1272 1031l-22-28-4 5 21 27" fill="#709de1"/><path d="M1771 489l-8 3-6-8 7-3" fill="#77aaf7"/><path d="M1728 747l5-30-7-4-4 30" fill="#6794d7"/><path d="M1728 870l3-32-6-2-3 32" fill="#6794d6"/><path d="M1725 807l4-31-6-3-4 31" fill="#6795d8"/><path d="M1735 904l3-35-7-1-3 35" fill="#6a98dd"/><path d="M1272 1046l-6-6-4 5 6 6" fill="#addfff"/><path d="M1221 945l-21-25-4 6 21 24" fill="#7faef4"/><path d="M1167 872l-21-24-5 7 21 23" fill="#8ebeff"/><path d="M1742 918l2-8-6-2-2 8" fill="#72a3ed"/><path d="M1727 838l3-31-6-3-4 32" fill="#6794d7"/><path d="M1147 850l-20-24-5 7 20 23" fill="#8ebeff"/><path d="M1033 723l-20-22-5 8 20 22" fill="#7faff6"/><path d="M1004 696l7 1-5 9-8 0" fill="#77aaf7"/><path d="M1277 1048l-7-3-4 5 7 3" fill="#7bb0ff"/><path d="M1052 743l-20-22-5 8 20 22" fill="#81b1f8"/><path d="M1254 1001l-21-27-4 6 21 26" fill="#73a1e6"/><path d="M1267 1042l-3-7-4 5 3 7" fill="#5c84bf"/><path d="M1128 828l-20-23-5 7 20 23" fill="#8dbdff"/><path d="M1238 972l-21-25-5 6 21 25" fill="#77a6ec"/><path d="M1009 696l5 6-5 8-5-5" fill="#6994d5"/><path d="M1732 719l5-30-6-5-5 31" fill="#6692d5"/><path d="M1071 764l-20-22-5 7 20 23" fill="#84b4fb"/><path d="M1109 806l-20-22-5 7 20 22" fill="#8abaff"/><path d="M1090 785l-20-22-5 7 20 22" fill="#87b7fe"/><path d="M1739 922l4-6-6-2-5 6" fill="#79aefd"/><path d="M1744 912l-1-7-6-2 1 7" fill="#5b83be"/><path d="M1202 921l-21-24-4 6 20 24" fill="#7dadf3"/><path d="M1268 1034l-21-28-4 5 21 28" fill="#6d9bde"/><path d="M1736 691l5-29-6-6-5 30" fill="#6590d2"/><path d="M1729 778l4-30-6-4-4 31" fill="#6692d4"/><path d="M1739 905l4-35-7-1-3 35" fill="#6a98dd"/><path d="M1733 871l4-33-8-1-3 32" fill="#6997db"/><path d="M1269 1049l-6-5-4 5 6 5" fill="#a9daff"/><path d="M1746 919l2-8-6-1-2 7" fill="#72a3ed"/><path d="M1182 899l-20-24-5 6 21 24" fill="#7baaf1"/><path d="M1740 664l5-29-6-6-4 29" fill="#638ecf"/><path d="M1274 1051l-7-3-4 5 7 3" fill="#7bb0fe"/><path d="M1218 948l-21-24-4 6 21 24" fill="#75a4e9"/><path d="M1264 1045l-3-6-4 5 3 6" fill="#5c83be"/><path d="M1730 809l3-30-6-4-3 31" fill="#6592d3"/><path d="M1743 923l4-6-6-2-4 7" fill="#79aefd"/><path d="M1731 840l4-31-7-3-3 32" fill="#6692d4"/><path d="M1251 1004l-21-26-4 6 21 25" fill="#6f9de1"/><path d="M1748 913l0-7-7-2 1 7" fill="#5b82bd"/><path d="M1163 876l-21-23-4 7 21 23" fill="#79a8ee"/><path d="M1744 637l5-29-5-7-5 30" fill="#628dcc"/><path d="M1234 976l-20-25-4 6 20 24" fill="#719fe4"/><path d="M1732 750l4-29-5-5-4 30" fill="#648fd0"/><path d="M1749 610l4-29-5-7-5 29" fill="#618bc9"/><path d="M1738 871l4-32-7-1-4 32" fill="#6c9ce2"/><path d="M1265 1037l-21-27-4 5 21 27" fill="#6b98da"/><path d="M1144 854l-21-23-4 7 20 23" fill="#77a5eb"/><path d="M1743 907l5-36-7-1-4 35" fill="#6a98dd"/><path d="M1266 1053l-6-6-4 5 6 5" fill="#a5d6ff"/><path d="M1753 583l5-28-5-8-5 29" fill="#5f89c7"/><path d="M1198 925l-20-24-4 7 20 23" fill="#72a0e5"/><path d="M998 709l2-6-3 10-2 6" fill="#4f72a5"/><path d="M1124 833l-20-23-4 7 20 23" fill="#74a3e8"/><path d="M1750 920l3-7-7-2-2 7" fill="#71a3ec"/><path d="M1757 557l5-28-5-9-5 29" fill="#5e87c5"/><path d="M1271 1054l-7-3-4 5 7 3" fill="#7bb0fe"/><path d="M1105 812l-20-23-4 8 20 22" fill="#72a0e5"/><path d="M1762 531l4-28-4-9-5 28" fill="#5d86c2"/><path d="M1736 723l4-29-5-6-4 30" fill="#628dcc"/><path d="M1261 1049l-3-7-4 5 3 7" fill="#5c83be"/><path d="M1747 925l4-6-6-2-4 6" fill="#79aefc"/><path d="M1086 791l-20-23-4 8 20 22" fill="#6f9ee2"/><path d="M1737 840l3-31-7 0-4 30" fill="#6a98dd"/><path d="M1067 770l-20-22-4 8 21 22" fill="#6e9ce0"/><path d="M1752 915l0-8-6-2 0 8" fill="#5a82bc"/><path d="M1733 781l4-29-6-5-4 30" fill="#638fcf"/><path d="M1029 729l-20-22-3 9 20 21" fill="#6b98dc"/><path d="M1048 749l-20-22-3 9 20 21" fill="#6c9ade"/><path d="M1778 501l-6-4-4-10 5 4" fill="#557ab2"/><path d="M1215 952l-21-24-3 6 20 24" fill="#6e9bdf"/><path d="M1248 1008l-21-26-3 6 20 25" fill="#6c99dc"/><path d="M1179 903l-21-24-3 7 20 23" fill="#6f9de1"/><path d="M1743 872l5-33-8 0-4 32" fill="#6d9ce3"/><path d="M1768 498l-2 7-5-9 3-7" fill="#5a81bc"/><path d="M1005 703l5 6-3 8-5-5" fill="#608ac8"/><path d="M1734 811l4-30-7-3-3 30" fill="#6490d1"/><path d="M1262 1040l-21-27-5 5 22 27" fill="#6d9add"/><path d="M1748 908l5-35-7-2-5 35" fill="#6a98dd"/><path d="M999 704l7 0-2 9-8 1" fill="#77aaf7"/><path d="M1231 980l-20-25-3 6 20 24" fill="#6c99dd"/><path d="M1263 1056l-6-6-4 5 6 6" fill="#a0d2ff"/><path d="M1740 696l4-29-5-7-4 30" fill="#608ac8"/><path d="M1774 497l-7 2-5-9 8-3" fill="#77aaf7"/><path d="M1754 922l3-8-6-2-3 8" fill="#71a2ec"/><path d="M1160 881l-21-23-3 7 20 23" fill="#6d9ade"/><path d="M1268 1058l-7-3-4 5 7 2" fill="#7baffe"/><path d="M1742 841l5-32-9 0-3 31" fill="#6e9ee6"/><path d="M1258 1052l-3-7-4 5 3 7" fill="#5b82bd"/><path d="M1751 926l4-6-6-2-4 6" fill="#79aefc"/><path d="M1736 754l4-29-5-6-4 30" fill="#618bca"/><path d="M1757 916l-1-7-6-2 0 7" fill="#5a81bc"/><path d="M1744 669l4-29-4-7-5 29" fill="#5e87c5"/><path d="M1195 930l-20-24-3 7 20 23" fill="#6b98db"/><path d="M1748 873l5-33-7-1-5 33" fill="#6d9ce3"/><path d="M1140 859l-20-22-3 7 20 22" fill="#6b98db"/><path d="M1245 1011l-20-25-4 5 20 25" fill="#6b98d9"/><path d="M1259 1044l-21-27-5 5 22 27" fill="#709de1"/><path d="M1752 909l5-35-6-2-5 35" fill="#6a98dd"/><path d="M1740 811l4-30-8 0-4 30" fill="#6b99de"/><path d="M1260 1059l-6-5-4 5 6 5" fill="#9ccdff"/><path d="M1748 642l4-28-4-8-5 29" fill="#5d85c1"/><path d="M1121 838l-20-22-2 7 20 22" fill="#6995d8"/><path d="M1738 783l3-29-6-4-4 30" fill="#638ece"/><path d="M1212 957l-20-24-3 6 20 23" fill="#6995d7"/><path d="M1758 923l3-7-6-3-2 8" fill="#71a2eb"/><path d="M1748 841l5-31-8-1-5 32" fill="#6f9fe7"/><path d="M1229 984l-21-25-2 6 19 24" fill="#6995d7"/><path d="M1266 1061l-7-3-4 5 7 3" fill="#7baffe"/><path d="M1176 908l-20-24-3 7 20 23" fill="#6894d7"/><path d="M1102 817l-20-22-2 8 20 22" fill="#6793d5"/><path d="M1740 727l3-29-4-6-4 29" fill="#5f88c6"/><path d="M1256 1055l-4-6-4 5 4 6" fill="#5b82bc"/><path d="M1755 928l4-7-6-2-4 6" fill="#79aefc"/><path d="M1752 616l4-28-4-8-4 28" fill="#5b83be"/><path d="M1761 918l-1-8-6-2 1 7" fill="#5a81bb"/><path d="M1783 522l-4-13-3-11 4 13" fill="#25364e"/><path d="M1753 875l6-34-8-1-5 33" fill="#6d9ce3"/><path d="M1083 796l-20-22-2 9 20 21" fill="#6691d3"/><path d="M1746 811l5-30-9 0-4 30" fill="#6fa0e8"/><path d="M1256 1047l-22-27-5 5 23 27" fill="#709de2"/><path d="M1064 776l-20-22-1 9 20 21" fill="#6490d1"/><path d="M1242 1015l-20-25-5 5 21 25" fill="#76a3e7"/><path d="M1756 911l6-36-6-2-6 36" fill="#6a98dc"/><path d="M1756 590l4-28-3-9-5 29" fill="#5a81bb"/><path d="M1258 1062l-6-5-4 5 6 5" fill="#98c9ff"/><path d="M1753 842l6-32-8 0-5 31" fill="#6f9fe7"/><path d="M1157 886l-20-23-2 7 20 23" fill="#6692d3"/><path d="M1045 756l-20-22-1 9 20 21" fill="#638fcf"/><path d="M1762 925l3-8-6-2-2 8" fill="#71a2eb"/><path d="M1193 934l-20-23-2 6 19 23" fill="#6691d2"/><path d="M1026 735l-20-21 0 9 20 21" fill="#638dcd"/><path d="M1744 783l4-29-9 0-3 29" fill="#6b9adf"/><path d="M1743 700l4-28-4-7-4 29" fill="#5d85c1"/><path d="M1741 756l4-29-7-4-3 29" fill="#628ccb"/><path d="M995 717l3-6-1 10-2 7" fill="#5378ae"/><path d="M1263 1064l-7-3-4 5 7 3" fill="#7aaffd"/><path d="M1760 564l4-27-3-10-5 28" fill="#587fb8"/><path d="M1752 812l6-31-9 0-5 30" fill="#70a1e9"/><path d="M1759 929l4-6-6-2-4 6" fill="#79adfc"/><path d="M1253 1059l-4-7-4 5 4 7" fill="#5a81bb"/><path d="M1226 988l-19-25-4 6 19 24" fill="#6a95d7"/><path d="M1765 919l-1-7-6-3 1 8" fill="#5980ba"/><path d="M1757 876l7-33-7-2-6 33" fill="#6d9ce2"/><path d="M1002 710l6 5-1 10-5-5" fill="#5c84c0"/><path d="M1210 961l-20-24-2 6 19 24" fill="#6591d2"/><path d="M1764 539l4-28-2-10-5 28" fill="#577db5"/><path d="M1138 865l-20-23-1 8 19 22" fill="#648fcf"/><path d="M1239 1018l-21-25-5 5 21 25" fill="#7dacf1"/><path d="M1253 1050l-22-26-5 5 23 26" fill="#6f9de1"/><path d="M996 712l8-1 0 10-8 1" fill="#77aaf7"/><path d="M1751 783l5-30-10 1-4 29" fill="#70a1ea"/><path d="M1760 912l6-35-6-2-6 35" fill="#6997dc"/><path d="M1758 843l6-32-7-1-6 32" fill="#6f9fe6"/><path d="M1747 674l4-28-4-7-4 28" fill="#5b82bd"/><path d="M1255 1066l-6-5-4 5 6 5" fill="#95c6ff"/><path d="M1174 912l-20-23-1 7 19 23" fill="#638ece"/><path d="M1119 844l-20-23-1 8 20 22" fill="#628dcc"/><path d="M1766 926l3-7-6-3-2 8" fill="#70a1ea"/><path d="M1770 507l-2 6-3-10 2-7" fill="#577db6"/><path d="M1758 812l6-31-8 0-6 30" fill="#70a1ea"/><path d="M1780 510l-5-4-3-11 5 4" fill="#587eb7"/><path d="M1744 729l4-28-6-4-4 28" fill="#608ac8"/><path d="M1260 1067l-7-2-4 5 8 2" fill="#7aaffd"/><path d="M1748 756l4-29-9 0-4 29" fill="#6b9adf"/><path d="M1763 930l4-6-5-2-5 6" fill="#79adfc"/><path d="M1250 1062l-3-6-4 5 3 6" fill="#5a80ba"/><path d="M1758 783l5-31-9 1-5 30" fill="#71a2eb"/><path d="M1224 991l-20-23-6 4 20 24" fill="#81aff3"/><path d="M1769 921l-1-8-6-2 1 7" fill="#5980ba"/><path d="M1762 877l6-33-6-2-7 33" fill="#6c9be1"/><path d="M1776 506l-7 2-3-11 8-2" fill="#77aaf7"/><path d="M1100 823l-20-22 0 8 20 22" fill="#618bc9"/><path d="M1750 648l4-28-3-8-4 28" fill="#597fb9"/><path d="M1235 1022l-21-25-5 5 22 25" fill="#7dacf2"/><path d="M1191 939l-20-24-1 7 19 23" fill="#628dcd"/><path d="M1250 1054l-23-27-4 5 23 27" fill="#6f9ce1"/><path d="M1763 845l7-33-7-1-7 32" fill="#6e9ee6"/><path d="M1755 755l5-30-10 2-4 29" fill="#71a2eb"/><path d="M1155 891l-20-23 0 8 19 22" fill="#618bca"/><path d="M1764 914l7-35-6-3-7 35" fill="#6997db"/><path d="M1208 965l-20-23-3 6 19 23" fill="#6792d3"/><path d="M1252 1069l-6-5-4 5 7 5" fill="#91c2ff"/><path d="M1082 802l-21-21 1 9 19 21" fill="#5f89c7"/><path d="M1764 813l7-31-9-1-6 31" fill="#70a1e9"/><path d="M1770 928l3-8-6-2-2 7" fill="#70a1ea"/><path d="M1748 703l3-28-5-5-4 29" fill="#5f88c5"/><path d="M1764 783l6-31-9 0-5 31" fill="#71a2ec"/><path d="M1258 1071l-7-3-4 5 7 3" fill="#7aaffd"/><path d="M1754 622l4-27-3-9-4 28" fill="#577db5"/><path d="M1752 729l4-29-10 1-4 28" fill="#6b9ae0"/><path d="M1766 932l5-6-6-2-4 6" fill="#79adfb"/><path d="M1063 782l-20-21 1 9 19 21" fill="#5e87c4"/><path d="M1247 1065l-3-6-4 5 4 6" fill="#5980b9"/><path d="M1220 995l-20-24-7 5 21 24" fill="#8dbcff"/><path d="M1763 754l5-30-10 2-5 29" fill="#72a3ec"/><path d="M1773 922l-1-7-6-3 1 8" fill="#597fb9"/><path d="M1766 879l7-33-7-3-6 34" fill="#6c9ae0"/><path d="M1232 1025l-22-25-5 5 22 25" fill="#7baaf0"/><path d="M1137 870l-20-22 0 8 19 21" fill="#5f88c6"/><path d="M1044 762l-20-21 2 9 19 21" fill="#5d85c2"/><path d="M1248 1057l-24-26-4 5 24 26" fill="#6e9ce0"/><path d="M1758 597l4-27-3-10-4 28" fill="#557ab2"/><path d="M1173 917l-20-23-1 8 19 22" fill="#608ac8"/><path d="M1760 727l5-29-11 2-4 29" fill="#72a3eb"/><path d="M1768 846l7-32-7-2-7 32" fill="#6e9de4"/><path d="M1768 915l7-35-6-2-7 35" fill="#6996da"/><path d="M1770 814l7-31-8-2-7 32" fill="#70a0e8"/><path d="M1770 784l7-31-9-1-6 31" fill="#71a2eb"/><path d="M1250 1072l-6-5-4 5 6 5" fill="#8ebeff"/><path d="M1026 743l-20-22 2 10 19 21" fill="#5c84bf"/><path d="M1205 969l-19-23-6 5 19 23" fill="#8ebcff"/><path d="M1751 677l4-27-6-6-4 28" fill="#5d86c2"/><path d="M1770 754l6-30-10 1-5 29" fill="#72a3ed"/><path d="M1774 929l3-7-6-3-3 8" fill="#70a1e9"/><path d="M1255 1074l-7-3-4 5 8 3" fill="#7aaffd"/><path d="M1784 531l-4-13-1-11 3 13" fill="#293b55"/><path d="M1216 998l-21-23-7 5 22 23" fill="#8ebeff"/><path d="M1190 943l-20-23-3 7 19 22" fill="#648fce"/><path d="M1768 726l6-29-11 2-5 29" fill="#72a4ed"/><path d="M1756 702l4-28-10 1-4 28" fill="#6c9ae0"/><path d="M1118 849l-20-22 1 9 19 21" fill="#5d85c2"/><path d="M1770 934l5-6-6-3-4 6" fill="#79adfb"/><path d="M1761 572l4-27-1-10-5 27" fill="#5478ae"/><path d="M1245 1069l-4-7-3 5 3 7" fill="#597fb9"/><path d="M995 726l2-7 2 10-2 7" fill="#577cb5"/><path d="M1002 718l5 5 2 10-5-5" fill="#597fb8"/><path d="M1776 924l0-8-6-2 1 7" fill="#587fb8"/><path d="M1229 1029l-23-25-5 5 23 25" fill="#79a8ee"/><path d="M1770 881l7-34-6-2-7 33" fill="#6b99df"/><path d="M1765 700l5-28-12 2-4 28" fill="#73a4ed"/><path d="M1245 1061l-24-27-4 5 24 27" fill="#6d9bdf"/><path d="M1777 755l7-31-10 0-6 30" fill="#72a3ed"/><path d="M1201 973l-20-23-7 4 20 23" fill="#9acaff"/><path d="M1154 896l-19-22 0 7 18 22" fill="#5e86c3"/><path d="M1776 726l6-30-10 1-6 30" fill="#73a4ee"/><path d="M1755 652l4-27-6-6-4 27" fill="#5c84bf"/><path d="M1776 785l7-31-8-1-7 30" fill="#71a2ea"/><path d="M996 720l7-1 3 9-8 3" fill="#77aaf7"/><path d="M1765 547l4-27-1-11-5 28" fill="#5276ab"/><path d="M1773 848l7-33-7-2-7 32" fill="#6d9ce3"/><path d="M1775 816l7-32-7-2-7 32" fill="#6f9fe7"/><path d="M1100 829l-20-22 1 9 19 21" fill="#5b83be"/><path d="M1772 917l7-35-6-2-7 34" fill="#6895d8"/><path d="M1247 1076l-6-5-3 5 6 5" fill="#8bbbff"/><path d="M1773 699l6-29-11 2-5 29" fill="#74a5ee"/><path d="M1211 1002l-21-24-6 5 22 24" fill="#8cbbff"/><path d="M1778 931l3-7-6-3-3 8" fill="#70a0e8"/><path d="M1253 1077l-7-2-4 5 7 2" fill="#7aaefc"/><path d="M1760 676l4-28-11 1-4 28" fill="#6c9ae0"/><path d="M1774 935l5-6-6-2-5 6" fill="#79adfb"/><path d="M1188 948l-19-23-7 5 19 23" fill="#9ac8ff"/><path d="M1242 1072l-3-6-4 5 4 6" fill="#587fb8"/><path d="M1172 922l-19-22-3 6 19 22" fill="#628cca"/><path d="M1081 809l-19-21 2 8 19 21" fill="#5a81bb"/><path d="M1783 726l7-30-10 0-6 30" fill="#72a4ee"/><path d="M1782 698l6-29-11 1-6 29" fill="#73a5ef"/><path d="M1769 674l6-29-13 3-4 28" fill="#75a6ee"/><path d="M1780 926l0-8-6-2 1 7" fill="#587eb7"/><path d="M1771 516l-2 6-2-11 3-6" fill="#567bb2"/><path d="M1226 1032l-23-24-5 5 23 24" fill="#77a6eb"/><path d="M1196 976l-20-23-8 5 22 23" fill="#9ecfff"/><path d="M1758 627l4-27-5-7-4 28" fill="#5a82bc"/><path d="M1783 756l7-31-8-1-7 31" fill="#71a3ec"/><path d="M1774 882l8-33-6-2-8 33" fill="#6a98dd"/><path d="M1781 519l-5-4-2-11 6 4" fill="#5a81bb"/><path d="M1136 875l-19-21 1 7 18 22" fill="#5b83be"/><path d="M1779 672l6-29-12 3-6 28" fill="#75a7f0"/><path d="M1242 1064l-24-26-3 5 24 26" fill="#6c99dd"/><path d="M1782 786l7-31-8-2-7 31" fill="#70a0e9"/><path d="M1245 1079l-6-5-4 5 7 5" fill="#88b8ff"/><path d="M1776 918l7-34-6-3-7 35" fill="#6794d7"/><path d="M1777 849l8-32-7-2-7 32" fill="#6c9be1"/><path d="M1780 817l7-31-7-2-7 31" fill="#6e9ee5"/><path d="M1777 515l-7 2-2-11 8-2" fill="#77aaf7"/><path d="M1208 1005l-23-23-5 5 23 24" fill="#87b7fe"/><path d="M1063 789l-20-21 3 9 19 21" fill="#587eb8"/><path d="M1764 650l4-28-11 2-4 27" fill="#6c9ae0"/><path d="M1183 951l-20-22-8 5 20 22" fill="#a0d1ff"/><path d="M1781 933l3-8-5-2-3 7" fill="#6fa0e8"/><path d="M1251 1081l-8-3-3 5 7 3" fill="#7aaefc"/><path d="M1788 671l7-29-12 1-6 29" fill="#74a6f0"/><path d="M1790 698l7-29-11 0-6 29" fill="#73a5ef"/><path d="M1777 937l6-6-6-2-5 5" fill="#78adfb"/><path d="M1000 746l-4-14 5 11 4 13" fill="#283a54"/><path d="M1774 647l6-28-14 4-4 27" fill="#77a7ef"/><path d="M1762 602l4-27-5-7-4 27" fill="#5980ba"/><path d="M1790 727l8-30-10-1-7 30" fill="#72a4ee"/><path d="M1191 980l-21-23-7 5 22 23" fill="#9eceff"/><path d="M1240 1076l-4-7-3 5 4 7" fill="#587eb7"/><path d="M1785 645l6-29-13 4-6 28" fill="#77a8f1"/><path d="M1045 769l-20-20 4 9 19 21" fill="#577cb5"/><path d="M1784 927l0-7-6-3 0 8" fill="#587eb7"/><path d="M1154 901l-19-22-2 7 18 22" fill="#6089c7"/><path d="M1118 855l-19-21 1 8 19 21" fill="#5980ba"/><path d="M1223 1036l-24-25-4 6 24 24" fill="#74a3e8"/><path d="M1170 927l-19-22-7 5 19 22" fill="#a4d3ff"/><path d="M1789 757l8-31-9-1-7 30" fill="#71a1ea"/><path d="M1794 644l7-29-12 2-6 28" fill="#76a7f1"/><path d="M1177 955l-20-22-8 4 21 23" fill="#a9daff"/><path d="M1796 671l8-30-11 1-7 29" fill="#74a6f0"/><path d="M1778 884l8-33-6-3-7 33" fill="#6997db"/><path d="M1240 1067l-24-26-4 6 24 26" fill="#6b98dc"/><path d="M1768 624l4-27-11 2-4 27" fill="#6c9bdf"/><path d="M1787 788l8-31-8-2-7 30" fill="#6f9fe6"/><path d="M1243 1083l-7-5-3 5 6 5" fill="#85b5fd"/><path d="M1204 1009l-23-23-5 5 23 23" fill="#82b2f8"/><path d="M1797 699l8-30-10 0-7 29" fill="#73a5ef"/><path d="M1027 750l-20-21 4 10 19 20" fill="#557bb2"/><path d="M1780 920l6-34-5-3-7 35" fill="#6693d5"/><path d="M1779 621l5-28-14 5-4 27" fill="#79a9f0"/><path d="M1790 618l6-28-13 4-6 28" fill="#79aaf2"/><path d="M1765 577l4-26-4-8-4 27" fill="#587eb7"/><path d="M1781 851l8-32-6-3-8 33" fill="#6b99de"/><path d="M1248 1084l-7-2-3 5 7 2" fill="#7aaefc"/><path d="M1784 819l8-31-7-3-7 32" fill="#6d9ce2"/><path d="M1785 935l3-8-6-2-2 7" fill="#6f9fe7"/><path d="M1165 931l-20-22-9 4 20 22" fill="#9fcfff"/><path d="M1187 983l-22-22-6 5 22 23" fill="#98c8ff"/><path d="M1781 939l5-6-5-3-5 6" fill="#78adfb"/><path d="M1801 617l6-29-13 3-6 28" fill="#77a9f3"/><path d="M1803 643l8-29-12 1-7 29" fill="#74a6f1"/><path d="M1100 835l-19-21 2 8 19 21" fill="#577db6"/><path d="M1796 728l8-30-8-1-8 30" fill="#71a2ec"/><path d="M1238 1079l-4-6-3 5 3 6" fill="#587eb6"/><path d="M1171 958l-21-22-7 5 22 22" fill="#aedfff"/><path d="M1788 929l-1-7-5-3 0 7" fill="#577db6"/><path d="M1804 671l8-30-10 0-8 30" fill="#73a5f0"/><path d="M1220 1039l-24-24-4 6 24 24" fill="#72a0e5"/><path d="M1136 881l-18-22-2 8 18 21" fill="#5e87c3"/><path d="M1796 592l6-28-14 4-6 28" fill="#7babf4"/><path d="M1003 726l6 5 4 9-5-4" fill="#567bb3"/><path d="M1772 599l5-27-13 3-4 26" fill="#6d9be0"/><path d="M1153 906l-19-21-8 5 19 21" fill="#abdaff"/><path d="M1784 595l5-27-14 5-5 27" fill="#7aaaf1"/><path d="M1769 553l4-27-4-7-5 26" fill="#577cb4"/><path d="M1779 521l-4-3 1-5 6 5" fill="#587fb8"/><path d="M1794 759l8-31-7-2-8 30" fill="#6fa0e8"/><path d="M1807 590l7-28-14 3-6 28" fill="#78aaf4"/><path d="M1810 616l8-29-13 1-6 29" fill="#75a7f2"/><path d="M996 734l3-6 4 10-2 7" fill="#5a80bb"/><path d="M1238 1071l-25-26-3 5 24 26" fill="#6a97da"/><path d="M1158 934l-20-22-9 5 21 22" fill="#aedfff"/><path d="M1782 886l8-32-6-4-7 33" fill="#6895d8"/><path d="M1241 1086l-7-5-3 5 6 5" fill="#82b2fa"/><path d="M1804 700l8-30-9-1-8 30" fill="#72a3ed"/><path d="M1201 1013l-24-23-4 5 23 23" fill="#7cacf2"/><path d="M1784 922l6-34-5-3-7 34" fill="#6591d3"/><path d="M1812 643l7-29-10 0-8 29" fill="#74a6f1"/><path d="M997 729l8-2 4 10-7 2" fill="#77aaf7"/><path d="M1246 1087l-7-2-3 5 7 2" fill="#79aefc"/><path d="M1082 815l-19-21 3 9 19 21" fill="#557bb2"/><path d="M1792 790l8-31-7-3-8 31" fill="#6d9ce3"/><path d="M1789 936l3-7-6-3-3 8" fill="#6f9fe7"/><path d="M1802 566l6-28-15 5-6 27" fill="#7cadf5"/><path d="M1817 589l8-29-13 2-7 28" fill="#76a8f3"/><path d="M1183 987l-23-22-6 5 23 22" fill="#8fbfff"/><path d="M1813 563l7-28-14 4-6 27" fill="#7aabf5"/><path d="M1785 853l8-31-6-4-8 32" fill="#6997db"/><path d="M1784 941l6-6-6-3-5 6" fill="#78adfa"/><path d="M1789 821l8-31-7-3-8 31" fill="#6b9adf"/><path d="M1147 910l-19-21-11 4 20 22" fill="#98c9ff"/><path d="M1166 962l-22-22-7 5 23 22" fill="#aadbff"/><path d="M1773 521l0 7-5-8 3-6" fill="#577eb6"/><path d="M1789 570l5-28-15 6-5 27" fill="#7baaf1"/><path d="M1776 574l5-27-13 3-4 26" fill="#6d9be0"/><path d="M1825 500l0 5-15 4-1-5" fill="#77aaf7"/><path d="M1235 1083l-3-7-3 5 3 7" fill="#577db5"/><path d="M1777 518l-4 5-4-8 8-2" fill="#77aaf7"/><path d="M1810 504l2 5-16 5-3-5" fill="#77aaf7"/><path d="M1802 730l8-30-8-2-8 30" fill="#70a0e9"/><path d="M1152 938l-21-22-9 5 22 22" fill="#bbecff"/><path d="M1819 616l8-29-11 0-8 29" fill="#74a6f1"/><path d="M1791 931l0-7-5-3 0 7" fill="#577db5"/><path d="M1811 672l9-29-10-2-8 30" fill="#72a4ee"/><path d="M1119 861l-19-21-1 7 18 21" fill="#5c84c0"/><path d="M1824 562l8-28-14 2-7 28" fill="#77a9f4"/><path d="M1820 537l7-28-15 4-7 28" fill="#7cadf7"/><path d="M1217 1043l-24-24-4 5 25 24" fill="#6f9de2"/><path d="M1807 540l7-28-16 6-6 27" fill="#7eaef6"/><path d="M1839 498l-1 5-15 3 0-6" fill="#77aaf7"/><path d="M1135 886l-18-21-9 5 19 21" fill="#afddff"/><path d="M1065 796l-19-21 4 9 18 21" fill="#5478af"/><path d="M1139 914l-20-22-10 5 21 21" fill="#abdcff"/><path d="M1795 509l3 4-16 7-3-5" fill="#77aaf7"/><path d="M1235 1074l-24-25-3 5 24 25" fill="#6995d8"/><path d="M1825 503l2 8-15 4-2-8" fill="#77a7f0"/><path d="M1826 589l8-29-11 0-8 29" fill="#74a7f2"/><path d="M1831 536l8-29-14 3-7 28" fill="#78aaf5"/><path d="M1238 1089l-6-4-3 5 6 4" fill="#80b0f8"/><path d="M1799 761l9-30-7-3-9 30" fill="#6d9de4"/><path d="M1794 544l6-27-17 6-4 27" fill="#7babf1"/><path d="M1812 507l2 7-16 6-3-8" fill="#81b2fa"/><path d="M1786 888l7-32-5-3-8 32" fill="#6793d6"/><path d="M1197 1017l-23-24-4 6 23 23" fill="#77a6ec"/><path d="M1819 645l8-30-10-1-7 29" fill="#73a5ef"/><path d="M1244 1091l-7-3-3 6 7 2" fill="#79aefb"/><path d="M1780 549l5-26-13 3-4 26" fill="#6e9ce0"/><path d="M1787 924l6-34-5-3-6 34" fill="#6490d1"/><path d="M1792 938l3-7-5-3-3 8" fill="#6f9fe6"/><path d="M1781 514l2 5-12 3 5-5" fill="#77aaf7"/><path d="M1810 702l8-30-8-2-8 30" fill="#70a1ea"/><path d="M1838 501l1 8-14 2-2-7" fill="#71a1e9"/><path d="M1788 942l5-5-5-3-5 6" fill="#78acfa"/><path d="M1179 991l-23-22-5 5 23 22" fill="#85b5fc"/><path d="M1834 562l8-29-12 1-8 28" fill="#75a7f3"/><path d="M1161 966l-22-22-6 6 23 21" fill="#9fcfff"/><path d="M1129 890l-19-21-11 5 20 21" fill="#90c0ff"/><path d="M1146 941l-22-21-8 5 23 22" fill="#bcedff"/><path d="M1796 792l8-30-6-4-8 31" fill="#6b9adf"/><path d="M1797 512l3 7-17 6-2-7" fill="#8abaff"/><path d="M1851 497l-2 6-13 1 1-6" fill="#77aaf7"/><path d="M1233 1086l-3-6-3 5 3 6" fill="#577cb5"/><path d="M1789 856l8-32-6-3-7 31" fill="#6895d8"/><path d="M1132 917l-21-21-9 5 22 21" fill="#c3f4ff"/><path d="M1047 777l-19-21 5 10 18 20" fill="#5276ab"/><path d="M1827 617l8-29-10-1-8 29" fill="#73a5f0"/><path d="M1102 841l-19-21 0 8 18 21" fill="#5b82bd"/><path d="M1793 824l8-31-6-4-8 31" fill="#6997db"/><path d="M1783 517l2 8-14 3 1-8" fill="#71a0e7"/><path d="M1795 933l0-7-6-3 0 7" fill="#577cb4"/><path d="M1842 535l8-28-13 0-8 29" fill="#75a8f3"/><path d="M1004 754l-4-13 6 10 4 13" fill="#2c3f5b"/><path d="M1215 1046l-24-23-4 5 24 24" fill="#6d9ade"/><path d="M1121 894l-20-21-11 4 21 21" fill="#a5d6ff"/><path d="M1818 674l8-29-8-3-9 30" fill="#71a2eb"/><path d="M1807 732l9-29-8-4-8 30" fill="#6e9de5"/><path d="M1118 867l-18-21-9 5 18 21" fill="#aedcff"/><path d="M1849 501l0 8-12 0-1-7" fill="#6e9ee5"/><path d="M1233 1078l-24-26-3 6 24 25" fill="#6794d6"/><path d="M1835 590l8-29-11-1-8 29" fill="#73a6f0"/><path d="M1236 1093l-6-5-3 5 6 5" fill="#7eaef5"/><path d="M1242 1094l-7-2-3 5 7 2" fill="#79adfb"/><path d="M1029 758l-18-21 5 10 18 20" fill="#5174a8"/><path d="M1796 940l3-7-6-3-3 7" fill="#6e9ee6"/><path d="M1790 890l6-31-5-4-7 32" fill="#6591d3"/><path d="M1791 926l6-33-5-4-7 34" fill="#638ece"/><path d="M1195 1020l-24-23-4 6 24 23" fill="#72a1e6"/><path d="M1791 944l6-5-6-3-5 5" fill="#78acfa"/><path d="M1125 921l-21-21-8 5 22 22" fill="#ccfeff"/><path d="M1111 871l-19-21-12 4 20 21" fill="#87b8ff"/><path d="M1140 945l-22-21-7 6 23 21" fill="#b0e1ff"/><path d="M1826 646l8-29-9-2-8 29" fill="#71a2eb"/><path d="M1804 763l8-30-6-3-8 30" fill="#6b9adf"/><path d="M1843 563l8-29-11-1-8 29" fill="#74a6f1"/><path d="M1112 898l-20-21-10 5 21 20" fill="#c5f6ff"/><path d="M1175 995l-23-22-5 5 24 22" fill="#7cacf2"/><path d="M1157 970l-23-22-5 6 23 22" fill="#90c0ff"/><path d="M1231 1089l-3-6-3 5 3 7" fill="#567cb4"/><path d="M1085 822l-19-21 0 8 18 21" fill="#5980ba"/><path d="M1815 704l9-29-8-4-8 30" fill="#6e9ee5"/><path d="M1862 498l-3 5-12 0 2-6" fill="#77aaf7"/><path d="M1798 935l0-7-5-3 0 7" fill="#567cb4"/><path d="M1102 874l-20-21-11 5 20 21" fill="#9ccdff"/><path d="M1851 536l8-29-11 0-8 28" fill="#74a7f2"/><path d="M1800 795l8-30-5-5-9 31" fill="#6997db"/><path d="M1793 858l7-31-5-4-8 32" fill="#6692d4"/><path d="M1834 619l8-29-9-2-8 29" fill="#71a3ec"/><path d="M1102 847l-18-20-11 5 19 20" fill="#a6d4ff"/><path d="M1796 826l8-30-5-4-8 31" fill="#6794d7"/><path d="M1212 1050l-24-23-3 5 24 24" fill="#6a98db"/><path d="M1007 734l5 5 6 9-6-4" fill="#5479af"/><path d="M1859 502l0 7-12 0 0-8" fill="#6c9be1"/><path d="M1231 1081l-24-25-3 5 24 25" fill="#6692d4"/><path d="M1234 1096l-6-5-3 6 7 4" fill="#7babf3"/><path d="M1105 901l-21-20-9 5 22 21" fill="#d9ffff"/><path d="M1240 1097l-7-2-3 5 7 2" fill="#79adfb"/><path d="M1823 677l9-30-8-3-8 29" fill="#6e9ee5"/><path d="M1000 743l2-7 6 10-2 7" fill="#5b83be"/><path d="M1093 878l-21-21-10 5 21 21" fill="#c2f3ff"/><path d="M1812 735l8-29-6-4-9 30" fill="#6b9adf"/><path d="M1799 942l3-7-5-3-3 7" fill="#6e9ee5"/><path d="M1120 925l-23-21-7 6 23 21" fill="#c2f3ff"/><path d="M1094 851l-19-20-13 4 20 21" fill="#7faff7"/><path d="M1794 928l7-34-6-2-6 33" fill="#638fcf"/><path d="M1842 592l9-29-10-2-8 29" fill="#72a3ed"/><path d="M1795 946l5-5-5-3-6 5" fill="#78acfa"/><path d="M1067 803l-18-21 0 9 18 20" fill="#587eb7"/><path d="M1793 892l7-31-5-4-7 32" fill="#648fd0"/><path d="M1192 1024l-24-23-3 6 24 23" fill="#6e9ce0"/><path d="M1136 950l-23-22-6 6 23 21" fill="#9cccff"/><path d="M1001 737l7-2 6 10-7 2" fill="#77aaf7"/><path d="M1084 855l-20-21-13 5 21 20" fill="#91c2ff"/><path d="M1229 1093l-3-6-3 5 3 6" fill="#567bb3"/><path d="M1153 974l-23-22-5 6 24 22" fill="#82b1f8"/><path d="M1172 999l-23-22-4 6 24 22" fill="#74a3e9"/><path d="M1850 565l9-29-10-2-8 28" fill="#72a3ed"/><path d="M1802 937l0-7-6-3 1 7" fill="#567bb3"/><path d="M1831 649l9-29-8-4-8 30" fill="#6e9ee6"/><path d="M1808 766l8-29-5-5-9 30" fill="#6996da"/><path d="M1085 828l-18-20-11 5 19 20" fill="#9dcbff"/><path d="M1085 882l-21-21-10 6 22 20" fill="#e2ffff"/><path d="M1074 859l-21-21-11 5 21 21" fill="#b6e8ff"/><path d="M1820 707l8-29-6-4-9 29" fill="#6b9adf"/><path d="M1796 861l7-31-4-4-8 31" fill="#648fd0"/><path d="M1858 538l9-28-10-3-8 29" fill="#72a4ee"/><path d="M1210 1054l-24-24-2 6 23 23" fill="#6895d8"/><path d="M1099 906l-23-21-7 6 23 20" fill="#d3ffff"/><path d="M1872 501l-5 5-10-3 4-5" fill="#77aaf7"/><path d="M1229 1085l-24-25-3 5 24 25" fill="#6590d1"/><path d="M1232 1100l-6-5-3 5 7 5" fill="#7aa9f1"/><path d="M1076 832l-18-20-14 4 19 21" fill="#79a9f0"/><path d="M1804 798l8-30-5-5-9 31" fill="#6693d5"/><path d="M1238 1101l-7-2-3 5 8 2" fill="#79adfb"/><path d="M1051 784l-19-20 1 8 18 20" fill="#567cb4"/><path d="M1800 829l7-30-4-4-8 30" fill="#6591d2"/><path d="M1802 944l3-7-5-3-3 7" fill="#6e9de5"/><path d="M1065 836l-19-20-14 4 21 20" fill="#88b8ff"/><path d="M1798 930l7-34-6-3-6 34" fill="#6591d3"/><path d="M1114 930l-22-21-7 6 24 20" fill="#a9d9ff"/><path d="M1839 622l9-29-7-4-9 29" fill="#6e9fe6"/><path d="M1798 948l5-5-5-3-5 5" fill="#78acfa"/><path d="M1868 504l-1 7-10-2 0-8" fill="#6996da"/><path d="M1797 895l6-31-5-4-7 31" fill="#628ccc"/><path d="M1227 1096l-3-6-3 5 4 7" fill="#567bb2"/><path d="M1132 954l-24-21-5 6 24 21" fill="#88b8ff"/><path d="M1190 1028l-24-23-3 6 24 23" fill="#6b98db"/><path d="M1065 863l-21-21-11 6 23 20" fill="#deffff"/><path d="M1055 840l-21-21-12 5 21 21" fill="#abddff"/><path d="M1068 809l-18-20-11 5 18 20" fill="#95c3ff"/><path d="M1828 680l9-29-7-5-9 30" fill="#6b99df"/><path d="M1816 739l8-30-5-5-9 30" fill="#6895d9"/><path d="M1805 939l0-7-5-3 0 7" fill="#557bb2"/><path d="M1150 978l-23-21-4 6 23 21" fill="#77a6ec"/><path d="M1170 1003l-24-22-3 6 23 22" fill="#6f9de1"/><path d="M1848 595l9-29-8-4-9 29" fill="#6f9fe6"/><path d="M1078 886l-22-20-8 6 22 20" fill="#e4ffff"/><path d="M1059 814l-18-20-15 4 19 20" fill="#75a4ec"/><path d="M1047 817l-20-20-14 5 21 20" fill="#81b1fa"/><path d="M1034 765l-18-20 1 9 17 20" fill="#557ab2"/><path d="M1093 910l-23-21-6 6 23 21" fill="#b6e7ff"/><path d="M1231 1103l-7-5-2 6 6 4" fill="#78a7ee"/><path d="M1227 1088l-24-25-2 6 23 24" fill="#648fcf"/><path d="M1237 1104l-8-2-3 5 8 2" fill="#79adfa"/><path d="M1208 1057l-24-23-2 6 23 23" fill="#6692d4"/><path d="M1004 752l3-8 3 4-1 5" fill="#5a81bb"/><path d="M1856 568l9-28-8-4-9 28" fill="#6f9fe7"/><path d="M1045 844l-21-20-11 5 22 20" fill="#d8ffff"/><path d="M1811 770l8-30-4-5-9 30" fill="#6592d3"/><path d="M1805 946l4-7-5-3-3 7" fill="#6d9de4"/><path d="M1799 863l7-30-4-4-8 30" fill="#628dcc"/><path d="M1801 932l8-34-6-3-7 34" fill="#6591d3"/><path d="M1035 821l-20-20-13 5 21 20" fill="#a1d3ff"/><path d="M1801 950l6-5-5-3-6 5" fill="#78acf9"/><path d="M1836 653l9-29-7-5-8 29" fill="#6b99df"/><path d="M1110 934l-23-21-5 6 23 21" fill="#8ebeff"/><path d="M1057 867l-22-20-9 6 23 20" fill="#e9ffff"/><path d="M1052 791l-18-20-12 5 18 20" fill="#8dbbff"/><path d="M1823 711l9-29-5-5-9 29" fill="#6895d8"/><path d="M1807 801l7-29-4-6-8 30" fill="#638fcf"/><path d="M1226 1100l-4-6-3 5 4 6" fill="#557ab1"/><path d="M1801 896l7-31-7-2-6 31" fill="#6591d2"/><path d="M1803 832l7-29-4-5-8 30" fill="#628dcc"/><path d="M1865 541l9-28-9-4-9 28" fill="#6f9fe7"/><path d="M1012 742l5 5 1 9-5-7" fill="#567bb3"/><path d="M1029 798l-20-19-15 4 21 20" fill="#7cacf4"/><path d="M1042 795l-18-20-17 4 20 20" fill="#72a1e8"/><path d="M1808 941l0-7-5-3 0 7" fill="#557ab1"/><path d="M1188 1032l-24-22-2 6 23 21" fill="#6894d7"/><path d="M1128 958l-23-21-4 6 23 21" fill="#78a7ee"/><path d="M1006 746l7-3 2 8-6-2" fill="#77aaf7"/><path d="M1072 891l-23-21-7 7 23 20" fill="#c4f6ff"/><path d="M1025 825l-21-20-12 6 22 20" fill="#d1ffff"/><path d="M1016 802l-20-20-14 6 21 19" fill="#99caff"/><path d="M1880 505l-6 4-9-4 5-5" fill="#77aaf7"/><path d="M1844 626l9-29-6-5-9 29" fill="#6b99de"/><path d="M1147 982l-23-21-3 6 23 21" fill="#6f9de2"/><path d="M1167 1007l-23-22-3 6 24 22" fill="#6a97db"/><path d="M1875 508l-2 7-8-4 1-8" fill="#6490d1"/><path d="M1037 848l-22-20-10 6 23 20" fill="#ecffff"/><path d="M1229 1106l-7-4-2 5 7 5" fill="#76a6ed"/><path d="M1235 1107l-8-1-2 5 7 1" fill="#78adfa"/><path d="M990 751l1 5-17 5-1-5" fill="#77aaf7"/><path d="M1225 1092l-23-25-3 6 23 24" fill="#628ccc"/><path d="M1819 742l8-29-4-5-9 29" fill="#6490d1"/><path d="M1809 948l3-7-5-3-3 7" fill="#6d9de3"/><path d="M1088 914l-23-20-5 6 23 21" fill="#94c5ff"/><path d="M1805 934l8-34-6-3-7 33" fill="#6592d3"/><path d="M1206 1061l-23-23-2 6 23 23" fill="#6490d0"/><path d="M975 755l1 5-14 5-3-4" fill="#77aaf7"/><path d="M1011 780l-20-20-16 5 21 19" fill="#78a8f0"/><path d="M1804 952l6-5-5-3-6 5" fill="#78acf9"/><path d="M1831 684l9-29-5-5-9 29" fill="#6794d7"/><path d="M1005 748l1 5-17 4-1-5" fill="#77aaf7"/><path d="M1035 772l-17-19-13 5 18 19" fill="#86b4f8"/><path d="M1005 806l-21-19-12 5 22 20" fill="#cafcff"/><path d="M1025 777l-18-20-18 4 20 20" fill="#709fe5"/><path d="M997 784l-20-20-15 5 22 20" fill="#91c3ff"/><path d="M1853 599l9-29-7-5-9 29" fill="#6a99de"/><path d="M1009 748l7 1-12 5-1-6" fill="#77aaf7"/><path d="M1803 866l6-30-5-4-6 30" fill="#618bc9"/><path d="M1051 872l-23-20-7 6 23 20" fill="#cbfcff"/><path d="M1805 898l7-31-6-2-7 30" fill="#6896d9"/><path d="M1224 1103l-4-6-2 5 3 7" fill="#557ab1"/><path d="M1016 830l-22-20-10 6 23 20" fill="#eeffff"/><path d="M990 755l2 7-16 4-2-7" fill="#78a9f1"/><path d="M1106 938l-23-20-4 6 23 21" fill="#7aa9f0"/><path d="M1811 943l0-7-5-3 1 7" fill="#5579b0"/><path d="M961 760l2 5-13 5-4-3" fill="#77aaf7"/><path d="M1814 774l8-29-4-6-8 29" fill="#628dcc"/><path d="M976 758l2 8-15 5-2-7" fill="#84b4fc"/><path d="M1006 751l2 8-18 4-1-8" fill="#74a5ed"/><path d="M1014 748l5 6-13 5-2-7" fill="#7cabf1"/><path d="M985 788l-21-19-13 5 22 20" fill="#c2f4ff"/><path d="M1805 835l7-29-3-5-8 30" fill="#608ac8"/><path d="M1186 1036l-24-22-1 6 23 21" fill="#6591d2"/><path d="M1861 572l9-28-6-6-9 29" fill="#6a99dd"/><path d="M1809 805l8-29-4-6-8 30" fill="#608ac8"/><path d="M1067 895l-23-20-6 7 23 20" fill="#9acbff"/><path d="M1840 657l8-29-5-6-9 29" fill="#6693d6"/><path d="M1125 962l-23-20-3 6 23 21" fill="#6f9de2"/><path d="M1227 1110l-6-5-3 6 7 4" fill="#75a4eb"/><path d="M1029 853l-22-20-8 7 23 19" fill="#d1ffff"/><path d="M1233 1111l-7-2-3 5 8 2" fill="#78acfa"/><path d="M996 811l-22-20-11 7 23 19" fill="#eeffff"/><path d="M1826 715l9-28-4-7-9 30" fill="#638fcf"/><path d="M1223 1095l-23-24-3 5 23 24" fill="#638ecd"/><path d="M963 763l2 7-13 6-3-7" fill="#97c8ff"/><path d="M1165 1011l-23-22-2 7 23 21" fill="#6793d5"/><path d="M1145 987l-24-21-2 6 24 21" fill="#6997da"/><path d="M1812 951l3-8-5-3-3 7" fill="#6d9ce3"/><path d="M1808 936l9-34-6-3-8 34" fill="#6591d3"/><path d="M1807 954l6-5-5-3-6 5" fill="#78acf9"/><path d="M1890 515l-6-4-7-7 5 4" fill="#4f72a5"/><path d="M1870 546l9-28-7-6-9 28" fill="#6a98dd"/><path d="M1205 1065l-23-23-2 6 22 22" fill="#638dcd"/><path d="M1809 900l8-32-6-2-8 31" fill="#6996da"/><path d="M1807 867l7-30-7-2-6 30" fill="#6693d5"/><path d="M1222 1107l-4-7-2 6 4 6" fill="#5479b0"/><path d="M1084 919l-23-20-4 7 23 20" fill="#7babf1"/><path d="M948 766l4 4-11 6-5-3" fill="#77aaf7"/><path d="M975 793l-22-20-11 7 23 19" fill="#edffff"/><path d="M1008 834l-22-19-8 6 23 20" fill="#d6ffff"/><path d="M1848 630l9-28-5-6-9 28" fill="#6692d4"/><path d="M1045 876l-23-19-6 6 23 20" fill="#9dceff"/><path d="M1815 945l-1-7-4-3 0 7" fill="#5479b0"/><path d="M1821 747l8-29-3-6-8 29" fill="#608ac9"/><path d="M1880 513l-2 7-6-6 1-7" fill="#6089c8"/><path d="M1886 511l-7 3-7-6 7-4" fill="#77aaf7"/><path d="M951 768l3 7-11 6-3-6" fill="#a8d8ff"/><path d="M1834 688l9-28-4-6-9 28" fill="#638dcd"/><path d="M1103 943l-23-20-3 6 23 20" fill="#6e9ce1"/><path d="M1226 1113l-7-4-2 5 7 4" fill="#73a3e9"/><path d="M1232 1114l-8-2-2 6 8 1" fill="#78acfa"/><path d="M1184 1040l-23-22-1 6 22 21" fill="#638ecd"/><path d="M1221 1099l-23-25-3 6 24 24" fill="#6590d1"/><path d="M987 816l-22-19-9 6 23 20" fill="#dbffff"/><path d="M1809 838l6-29-4-4-7 29" fill="#5f89c7"/><path d="M1815 953l3-7-5-4-3 7" fill="#6d9ce2"/><path d="M1810 956l6-5-5-3-6 5" fill="#77abf9"/><path d="M1811 938l9-34-5-3-9 34" fill="#6591d3"/><path d="M1856 604l9-28-5-7-9 29" fill="#6592d3"/><path d="M1816 778l8-29-3-6-8 29" fill="#5e87c4"/><path d="M1024 858l-23-20-6 7 23 20" fill="#9fd0ff"/><path d="M1062 900l-23-20-4 7 23 20" fill="#7cacf3"/><path d="M1123 967l-24-21-1 7 23 20" fill="#6996d9"/><path d="M1812 902l9-32-6-2-8 31" fill="#6996da"/><path d="M1812 808l7-28-3-6-8 29" fill="#5e86c3"/><path d="M1812 869l8-31-8-1-7 29" fill="#6b99de"/><path d="M1203 1068l-22-22-2 6 22 22" fill="#618bca"/><path d="M1164 1015l-23-21-1 6 22 21" fill="#648fcf"/><path d="M1221 1110l-4-6-2 5 3 6" fill="#5478af"/><path d="M1143 991l-23-21-1 7 23 20" fill="#6692d3"/><path d="M966 798l-22-19-9 7 23 19" fill="#dfffff"/><path d="M1818 948l0-8-5-3 0 7" fill="#5478af"/><path d="M937 772l6 3-10 7-6-2" fill="#77aaf7"/><path d="M1842 662l9-28-4-7-9 28" fill="#628ccb"/><path d="M1864 578l9-28-4-7-9 28" fill="#6591d2"/><path d="M1829 720l8-28-3-7-9 29" fill="#5f88c6"/><path d="M1002 840l-23-20-6 7 23 19" fill="#a1d3ff"/><path d="M1081 924l-23-20-3 7 23 20" fill="#6e9ce1"/><path d="M941 773l4 7-9 7-4-6" fill="#9dcbff"/><path d="M1230 1117l-7-1-3 5 8 2" fill="#78acf9"/><path d="M1224 1117l-6-5-2 6 6 4" fill="#72a1e8"/><path d="M1041 881l-24-19-4 7 24 19" fill="#7cacf2"/><path d="M1220 1102l-24-24-3 5 24 24" fill="#6591d1"/><path d="M1813 959l6-6-5-3-6 5" fill="#77abf9"/><path d="M1818 955l3-7-5-4-3 8" fill="#6c9be2"/><path d="M1814 940l10-34-5-3-10 34" fill="#6591d2"/><path d="M1814 839l7-29-7-2-7 29" fill="#6794d7"/><path d="M1183 1043l-23-21 0 6 22 21" fill="#618bc9"/><path d="M1817 870l8-30-7-2-8 30" fill="#6b99df"/><path d="M1873 552l9-28-4-8-10 28" fill="#6490d1"/><path d="M1816 904l10-32-6-3-9 32" fill="#6896d9"/><path d="M1101 948l-24-21-1 7 23 20" fill="#6895d7"/><path d="M981 821l-23-19-7 7 23 20" fill="#a4d5ff"/><path d="M1823 751l8-28-3-7-8 29" fill="#5c84c0"/><path d="M1202 1072l-22-22-4 5 22 23" fill="#6692d2"/><path d="M1219 1114l-4-7-2 6 4 6" fill="#5478ae"/><path d="M1850 636l9-28-3-8-9 29" fill="#618bc9"/><path d="M1821 950l0-7-5-4 0 7" fill="#5378ae"/><path d="M1893 522l-5-4-5-9 5 4" fill="#5478af"/><path d="M1019 863l-23-19-5 7 24 19" fill="#7cabf2"/><path d="M1059 905l-23-20-3 8 24 19" fill="#6d9be0"/><path d="M1121 971l-23-20-1 7 23 20" fill="#6490d1"/><path d="M1163 1019l-23-21 0 6 22 21" fill="#618bca"/><path d="M1815 811l7-28-5-5-7 29" fill="#5e87c3"/><path d="M1836 694l8-28-2-8-9 29" fill="#5e86c3"/><path d="M1818 782l7-28-2-7-8 29" fill="#5b83be"/><path d="M1142 995l-23-20 0 6 22 20" fill="#628dcc"/><path d="M1884 519l-3 7-4-8 2-7" fill="#5b83be"/><path d="M959 803l-23-19-6 8 23 19" fill="#a5d7ff"/><path d="M1229 1121l-8-2-2 6 8 1" fill="#78acf9"/><path d="M1223 1120l-7-4-2 5 7 4" fill="#71a0e6"/><path d="M1218 1106l-24-24-3 5 25 24" fill="#6590d1"/><path d="M1890 518l-8 2-4-7 7-4" fill="#77aaf7"/><path d="M1816 961l6-5-5-4-6 5" fill="#77abf8"/><path d="M928 779l7 2-7 7-7-1" fill="#77aaf7"/><path d="M1820 957l4-7-5-3-3 7" fill="#6c9be1"/><path d="M1819 840l8-29-8-1-7 29" fill="#6c9be1"/><path d="M1817 942l10-33-5-4-9 34" fill="#6490d1"/><path d="M1858 610l9-28-3-8-9 28" fill="#6089c7"/><path d="M1821 872l9-30-7-3-8 31" fill="#6b99de"/><path d="M997 845l-23-19-4 7 23 19" fill="#7babf2"/><path d="M933 779l5 7-7 7-5-6" fill="#7ba8eb"/><path d="M1079 929l-23-20-1 7 23 20" fill="#6794d6"/><path d="M1820 906l10-32-6-3-10 32" fill="#6895d9"/><path d="M1199 1076l-22-22-4 5 23 22" fill="#6b98db"/><path d="M1218 1117l-4-6-2 5 4 6" fill="#5377ad"/><path d="M1182 1047l-22-21-1 6 21 21" fill="#6089c7"/><path d="M1037 887l-23-20-2 8 23 19" fill="#6d9bdf"/><path d="M1830 725l8-28-2-7-8 28" fill="#5a81bc"/><path d="M1823 952l0-7-4-4 0 8" fill="#5377ad"/><path d="M1844 668l8-28-2-8-9 28" fill="#5c84c0"/><path d="M1099 952l-23-20 0 7 23 20" fill="#638ecf"/><path d="M1821 812l7-28-8-2-7 28" fill="#6895d8"/><path d="M1898 542l-4-14-2-10 3 14" fill="#25364e"/><path d="M1866 584l9-28-2-8-9 28" fill="#5f88c6"/><path d="M976 827l-24-19-4 8 23 18" fill="#7babf2"/><path d="M1228 1124l-8-1-2 5 8 1" fill="#78acf9"/><path d="M1222 1123l-7-4-2 6 7 4" fill="#709fe5"/><path d="M1825 842l9-30-9-1-8 29" fill="#6d9ce2"/><path d="M1162 1023l-22-21 0 7 21 20" fill="#5e88c5"/><path d="M1217 1109l-25-24-3 6 25 23" fill="#6590d1"/><path d="M1818 963l6-5-4-4-6 6" fill="#77abf8"/><path d="M1823 960l4-7-5-4-3 7" fill="#6c9be0"/><path d="M1825 756l7-28-2-7-8 28" fill="#597fb9"/><path d="M1120 976l-23-20 1 7 22 19" fill="#618bc9"/><path d="M1820 944l10-33-5-3-9 33" fill="#648fd0"/><path d="M1825 874l10-31-7-2-9 30" fill="#6a99de"/><path d="M1016 868l-24-19-2 8 23 19" fill="#6c9ade"/><path d="M1141 999l-22-20 0 7 22 20" fill="#5f88c5"/><path d="M1057 910l-23-19-1 7 23 19" fill="#6693d5"/><path d="M1821 785l7-27-4-6-7 28" fill="#5c84c0"/><path d="M1823 908l10-31-5-4-10 32" fill="#6794d8"/><path d="M1197 1079l-23-21-4 5 24 22" fill="#6b98db"/><path d="M1216 1121l-3-7-2 6 4 6" fill="#5377ac"/><path d="M954 809l-23-19-5 8 24 19" fill="#7baaf1"/><path d="M1181 1051l-21-21-5 6 22 21" fill="#6b97d8"/><path d="M1875 558l8-27-2-9-9 28" fill="#5e87c4"/><path d="M1851 642l9-28-2-8-8 28" fill="#5b82bd"/><path d="M1826 954l0-7-4-3 0 7" fill="#5377ac"/><path d="M1837 699l8-27-1-8-8 28" fill="#587fb8"/><path d="M1827 813l8-29-9 0-7 28" fill="#6d9de4"/><path d="M922 786l7 1-5 8-7 0" fill="#77aaf7"/><path d="M1226 1127l-7-1-2 5 8 2" fill="#78abf9"/><path d="M1830 843l9-29-7-2-9 29" fill="#6c9ce2"/><path d="M927 786l5 6-4 8-5-6" fill="#6691d2"/><path d="M994 850l-23-19-3 8 24 19" fill="#6b99de"/><path d="M1078 934l-23-20 0 7 23 20" fill="#628dcd"/><path d="M1220 1127l-6-4-2 5 7 4" fill="#6f9ee4"/><path d="M1821 966l6-6-4-3-6 5" fill="#77abf8"/><path d="M1215 1112l-25-23-2 6 25 23" fill="#6490d1"/><path d="M1826 962l3-7-4-4-3 7" fill="#6b9ae0"/><path d="M1035 892l-23-19 0 7 23 19" fill="#6692d3"/><path d="M1885 526l-2 7-2-9 2-7" fill="#577db6"/><path d="M1823 947l10-33-5-4-9 33" fill="#638fcf"/><path d="M1895 530l-5-5-3-9 6 4" fill="#587eb7"/><path d="M1829 876l10-30-6-3-10 30" fill="#6a98dd"/><path d="M1162 1027l-22-20-1 6 21 20" fill="#5e87c4"/><path d="M1859 616l9-27-1-9-9 28" fill="#5a81bb"/><path d="M1195 1083l-24-22-3 6 24 22" fill="#6a97da"/><path d="M1831 730l7-27-1-8-7 28" fill="#577cb4"/><path d="M1826 911l11-32-5-3-11 31" fill="#6793d6"/><path d="M1215 1124l-4-6-1 5 3 6" fill="#5276ac"/><path d="M1828 786l7-28-9-1-6 27" fill="#6895d9"/><path d="M1099 957l-23-20 1 7 22 20" fill="#5f88c6"/><path d="M1179 1055l-22-21-5 6 22 21" fill="#74a2e7"/><path d="M1891 526l-7 1-2-9 7-2" fill="#77aaf7"/><path d="M1829 957l0-7-4-4 0 7" fill="#5276ab"/><path d="M1833 814l9-29-9-1-8 29" fill="#6e9de5"/><path d="M972 833l-23-19-2 8 23 19" fill="#6b99dd"/><path d="M1141 1004l-22-20 1 6 21 20" fill="#5c84c0"/><path d="M1120 980l-22-19 1 6 22 20" fill="#5d85c1"/><path d="M1844 674l8-27 0-9-9 28" fill="#577cb4"/><path d="M1827 760l7-27-3-6-7 27" fill="#5b82bd"/><path d="M1225 1131l-8-1-1 5 8 1" fill="#77abf8"/><path d="M1834 845l10-30-7-2-9 30" fill="#6c9be1"/><path d="M1219 1130l-6-4-2 5 7 5" fill="#6e9de2"/><path d="M1056 915l-23-19 1 8 23 19" fill="#618ccb"/><path d="M1014 874l-24-19 0 8 23 19" fill="#6591d2"/><path d="M1824 968l6-5-4-4-7 5" fill="#77abf8"/><path d="M1214 1116l-26-23-2 5 26 23" fill="#648fd0"/><path d="M1828 964l4-7-4-3-4 7" fill="#6b9adf"/><path d="M1867 591l8-27 0-10-9 28" fill="#587fb8"/><path d="M950 815l-23-19-2 9 23 18" fill="#6a98dc"/><path d="M1826 949l10-33-5-4-9 34" fill="#638ece"/><path d="M1835 786l8-28-10 0-7 28" fill="#6e9ee5"/><path d="M1833 879l10-31-5-3-11 30" fill="#6997db"/><path d="M917 798l2-6-2 10-2 6" fill="#5174a8"/><path d="M1193 1087l-24-22-3 6 25 21" fill="#6996d9"/><path d="M1161 1032l-21-21-5 6 22 20" fill="#719ee0"/><path d="M1176 1059l-23-21-5 6 24 20" fill="#73a1e6"/><path d="M1214 1127l-4-6-1 6 3 6" fill="#5276ab"/><path d="M1829 913l11-31-5-4-10 31" fill="#6692d4"/><path d="M1839 816l9-30-8-1-9 29" fill="#6e9de5"/><path d="M1832 959l0-7-5-4 0 8" fill="#5275ab"/><path d="M1078 939l-23-20 2 8 22 19" fill="#5e86c3"/><path d="M1838 705l7-27 0-8-8 27" fill="#5479b0"/><path d="M1898 551l-4-14 0-11 4 14" fill="#2c405d"/><path d="M1852 649l7-27 1-10-9 28" fill="#557ab1"/><path d="M992 856l-23-19 0 9 23 18" fill="#6490d1"/><path d="M923 792l6 6-2 8-5-5" fill="#5f88c5"/><path d="M1224 1134l-8-1-1 5 8 1" fill="#77abf8"/><path d="M918 793l7 0-2 9-7 1" fill="#77aaf7"/><path d="M1834 760l8-27-9-1-7 27" fill="#6896da"/><path d="M1875 566l8-27 0-10-9 27" fill="#577db6"/><path d="M1035 897l-23-19 1 8 23 19" fill="#608ac9"/><path d="M1218 1134l-6-4-2 5 7 4" fill="#6e9ce1"/><path d="M1839 847l10-29-6-3-11 30" fill="#6b9ae0"/><path d="M1826 970l6-5-4-4-6 6" fill="#77aaf7"/><path d="M1142 1008l-22-20 0 6 21 20" fill="#5d85c1"/><path d="M1099 962l-22-20 2 7 22 20" fill="#5b82bd"/><path d="M1213 1119l-26-23-2 6 26 23" fill="#638fcf"/><path d="M1841 787l10-28-10-1-8 28" fill="#6e9fe6"/><path d="M1831 967l4-7-4-4-4 7" fill="#6b99df"/><path d="M1834 734l7-26-3-7-8 28" fill="#5980ba"/><path d="M1121 985l-22-20 2 7 21 19" fill="#5a81bb"/><path d="M1829 952l9-33-4-4-10 33" fill="#628ccc"/><path d="M1158 1036l-22-21-6 6 23 20" fill="#82b1f6"/><path d="M1836 881l11-31-5-3-11 30" fill="#6896d9"/><path d="M1191 1090l-25-21-2 6 25 21" fill="#6895d7"/><path d="M1173 1063l-24-21-4 6 24 20" fill="#719fe4"/><path d="M1213 1131l-4-6-1 5 4 6" fill="#5275aa"/><path d="M1844 817l10-29-8-2-9 29" fill="#6d9de4"/><path d="M970 839l-23-19 1 8 23 19" fill="#648fd0"/><path d="M1832 916l11-32-5-4-10 32" fill="#6591d2"/><path d="M1834 962l0-7-4-4 0 7" fill="#5175aa"/><path d="M1859 624l8-27 1-10-9 27" fill="#5378ae"/><path d="M1885 535l-2 6 0-10 2-7" fill="#5478af"/><path d="M1842 760l9-28-11 0-8 28" fill="#6e9ee6"/><path d="M1056 921l-22-19 2 7 22 19" fill="#5c84c0"/><path d="M1844 680l7-26 1-9-8 27" fill="#5376ac"/><path d="M1223 1137l-8-1-1 6 8 1" fill="#77abf8"/><path d="M1013 880l-23-19 2 8 23 18" fill="#5f89c7"/><path d="M1217 1137l-6-4-2 5 7 4" fill="#6d9be0"/><path d="M1895 539l-5-5-1-11 6 5" fill="#5b83be"/><path d="M1848 788l10-28-9-2-10 29" fill="#6f9fe7"/><path d="M1828 973l7-5-4-4-6 5" fill="#77aaf7"/><path d="M1843 850l11-30-7-3-10 30" fill="#6a99de"/><path d="M1833 969l4-7-4-4-3 7" fill="#6b99de"/><path d="M1212 1123l-26-23-2 6 26 22" fill="#638ece"/><path d="M1891 535l-7 1 0-10 7-2" fill="#77aaf7"/><path d="M1141 1013l-20-20-6 5 22 20" fill="#7ba7ea"/><path d="M949 821l-24-18 1 8 23 19" fill="#638ecf"/><path d="M1154 1039l-22-20-6 6 24 20" fill="#80aff5"/><path d="M1831 954l10-32-4-4-10 32" fill="#618bca"/><path d="M1841 735l8-27-10-1-7 26" fill="#6996da"/><path d="M1078 944l-22-19 3 7 22 19" fill="#597fb9"/><path d="M1170 1067l-24-21-4 6 25 20" fill="#6e9ce1"/><path d="M1212 1134l-4-6-1 6 4 6" fill="#5174a9"/><path d="M1190 1094l-26-21-2 6 26 21" fill="#6794d6"/><path d="M1840 710l7-27-3-7-7 27" fill="#587eb7"/><path d="M1839 884l11-31-5-4-10 31" fill="#6794d7"/><path d="M1850 760l9-28-10 0-9 28" fill="#6f9fe7"/><path d="M1849 819l10-29-7-3-10 30" fill="#6d9ce2"/><path d="M1866 599l8-27 1-10-8 27" fill="#5276ab"/><path d="M1837 964l0-7-4-4 0 7" fill="#5174a9"/><path d="M1835 918l11-31-4-4-11 31" fill="#648fd0"/><path d="M915 806l2-6 1 9-2 7" fill="#557bb2"/><path d="M1122 989l-21-19 0 7 20 19" fill="#5b82bd"/><path d="M992 862l-23-18 2 8 23 18" fill="#5e87c5"/><path d="M1100 967l-22-20 4 7 21 19" fill="#577db6"/><path d="M1035 903l-23-19 4 8 22 18" fill="#5b82bd"/><path d="M1223 1141l-8-1-2 5 8 1" fill="#77abf7"/><path d="M922 799l5 5 1 9-5-5" fill="#5a81bb"/><path d="M1216 1140l-6-4-1 6 6 4" fill="#6c9adf"/><path d="M1853 790l11-29-8-2-10 29" fill="#6e9ee6"/><path d="M1851 656l7-27 1-9-7 27" fill="#5174a8"/><path d="M1831 975l6-5-4-4-6 5" fill="#77aaf7"/><path d="M1836 972l4-7-4-4-4 7" fill="#6a98dd"/><path d="M1850 734l9-27-12 0-8 27" fill="#6e9ee6"/><path d="M1846 852l12-29-6-4-11 30" fill="#6997db"/><path d="M1210 1126l-26-22-1 5 26 23" fill="#628dcc"/><path d="M1138 1017l-21-20-7 6 22 19" fill="#91c0ff"/><path d="M916 801l7-1 1 9-7 2" fill="#77aaf7"/><path d="M1151 1043l-23-19-6 5 25 20" fill="#7baaf0"/><path d="M1834 957l9-32-4-5-9 33" fill="#6089c8"/><path d="M1857 762l10-29-10-1-9 28" fill="#6fa0e8"/><path d="M1211 1138l-4-6-1 5 4 6" fill="#5174a8"/><path d="M1168 1070l-25-20-3 6 25 20" fill="#6c9ade"/><path d="M1873 574l8-26 2-11-8 27" fill="#5174a8"/><path d="M1188 1098l-25-21-2 6 25 20" fill="#6692d4"/><path d="M1896 560l-4-13 2-12 4 14" fill="#324868"/><path d="M970 845l-23-19 3 9 23 18" fill="#5d86c3"/><path d="M1842 886l11-30-4-4-11 30" fill="#6692d4"/><path d="M1839 967l0-7-4-4 0 7" fill="#5174a8"/><path d="M1853 822l11-29-6-4-11 30" fill="#6c9ae0"/><path d="M1058 926l-23-19 5 7 21 19" fill="#577db5"/><path d="M1848 709l8-26-10-1-7 27" fill="#6996da"/><path d="M1838 921l10-31-4-4-10 31" fill="#638dcd"/><path d="M1847 685l6-26-2-7-7 26" fill="#567cb3"/><path d="M1222 1144l-8-1-1 6 8 0" fill="#77aaf7"/><path d="M1859 734l9-27-11 0-9 27" fill="#6fa0e8"/><path d="M1014 885l-23-18 4 8 22 18" fill="#5980ba"/><path d="M1122 994l-20-19-7 6 22 19" fill="#86b3f5"/><path d="M1216 1144l-7-4-1 5 7 4" fill="#6c9ade"/><path d="M1833 978l6-5-3-4-7 5" fill="#76aaf7"/><path d="M919 825l-4-13 4 10 4 13" fill="#283a54"/><path d="M1859 792l11-29-8-2-10 28" fill="#6e9de4"/><path d="M1858 631l7-26 2-10-8 27" fill="#4f71a5"/><path d="M1133 1021l-22-20-6 6 23 19" fill="#90c0ff"/><path d="M1838 974l4-6-4-4-4 6" fill="#6a98dd"/><path d="M1080 949l-22-19 5 7 20 18" fill="#557ab1"/><path d="M1209 1130l-25-23-2 6 26 22" fill="#618ccb"/><path d="M1850 855l11-29-5-5-11 30" fill="#6895d8"/><path d="M1148 1047l-24-19-5 6 25 19" fill="#76a4ea"/><path d="M1863 763l11-28-9-2-10 28" fill="#6fa0e8"/><path d="M1102 971l-21-19 1 7 20 19" fill="#5980ba"/><path d="M1883 544l-2 6 2-11 2-6" fill="#5174a9"/><path d="M1836 959l9-31-3-5-9 32" fill="#5f88c5"/><path d="M949 828l-23-19 4 9 22 18" fill="#5d85c1"/><path d="M1210 1141l-3-6-2 6 4 6" fill="#5073a7"/><path d="M1858 709l9-27-13 1-8 26" fill="#6e9ee6"/><path d="M1166 1074l-25-20-3 6 26 20" fill="#6a97db"/><path d="M1187 1101l-26-20-1 5 25 21" fill="#6591d2"/><path d="M1841 969l1-7-4-4 0 7" fill="#5073a7"/><path d="M1866 735l10-28-10 0-9 27" fill="#70a1e9"/><path d="M1845 889l11-30-4-4-11 30" fill="#6490d1"/><path d="M1857 824l11-29-6-3-11 29" fill="#6a98dd"/><path d="M1893 549l-5-5 2-12 5 5" fill="#5e87c4"/><path d="M1221 1147l-8 0-1 5 8 1" fill="#77aaf7"/><path d="M1037 908l-22-18 5 7 21 19" fill="#557ab1"/><path d="M1118 998l-21-19-8 6 22 19" fill="#9fceff"/><path d="M1840 924l10-30-3-5-11 30" fill="#618bca"/><path d="M993 868l-23-18 5 8 22 18" fill="#587fb8"/><path d="M1889 544l-7 1 2-11 7-1" fill="#77aaf7"/><path d="M1215 1147l-7-4-1 6 7 4" fill="#6b99dd"/><path d="M1835 980l7-4-4-5-6 5" fill="#76aaf7"/><path d="M1853 661l7-26-2-7-7 26" fill="#557ab1"/><path d="M1129 1025l-23-19-6 6 24 19" fill="#89b9ff"/><path d="M1855 685l8-27-11 0-7 26" fill="#6996da"/><path d="M1840 977l4-7-3-4-4 7" fill="#6a98dc"/><path d="M1863 794l12-28-7-4-11 29" fill="#6c9ce2"/><path d="M1864 607l8-26 2-11-8 27" fill="#4d6fa1"/><path d="M1867 709l10-28-12 1-9 27" fill="#6fa0e8"/><path d="M922 806l6 5 3 8-5-4" fill="#567bb3"/><path d="M1209 1133l-26-22-1 6 25 22" fill="#608ac9"/><path d="M915 814l3-6 4 9-3 7" fill="#5980ba"/><path d="M1145 1051l-25-19-3 6 25 19" fill="#719fe4"/><path d="M1869 765l11-29-8-2-11 28" fill="#6e9fe6"/><path d="M1839 962l9-32-4-4-9 32" fill="#5d86c2"/><path d="M1210 1145l-4-6-1 5 4 6" fill="#5073a6"/><path d="M1853 858l11-29-4-5-12 30" fill="#6692d5"/><path d="M1060 931l-21-18 5 6 20 19" fill="#5377ad"/><path d="M1103 976l-20-19-7 6 21 19" fill="#92bfff"/><path d="M916 809l8-2 4 8-8 3" fill="#77aaf7"/><path d="M1873 736l11-28-10-1-10 28" fill="#70a1e9"/><path d="M1844 972l0-7-4-4 0 7" fill="#5073a6"/><path d="M1164 1078l-25-20-2 6 25 20" fill="#6895d8"/><path d="M1186 1105l-26-20-1 5 26 21" fill="#648fd0"/><path d="M1113 1003l-22-19-8 6 23 18" fill="#a1d1ff"/><path d="M1866 684l9-27-14 1-8 27" fill="#6e9ee6"/><path d="M1220 1151l-7-1-1 5 8 1" fill="#77aaf7"/><path d="M972 851l-22-18 5 8 22 18" fill="#577db5"/><path d="M1083 954l-21-19 1 7 21 18" fill="#587eb7"/><path d="M1847 892l11-29-3-5-11 30" fill="#628dcd"/><path d="M1876 709l10-28-11 0-10 28" fill="#70a1ea"/><path d="M1214 1151l-6-4-1 5 7 4" fill="#6a98dd"/><path d="M1837 983l7-5-4-4-6 5" fill="#76aaf6"/><path d="M1842 927l10-30-3-5-10 30" fill="#5f89c7"/><path d="M1016 891l-22-18 6 7 21 18" fill="#5478ae"/><path d="M1860 827l12-29-5-4-12 29" fill="#6896d9"/><path d="M1125 1029l-23-19-6 6 25 19" fill="#80aff5"/><path d="M1843 980l3-7-3-4-4 6" fill="#6997db"/><path d="M1871 583l7-25 4-12-8 26" fill="#4c6d9e"/><path d="M1859 637l7-26-1-8-8 26" fill="#5378ae"/><path d="M1208 1137l-26-22 0 5 25 22" fill="#5f89c7"/><path d="M1868 797l11-29-6-3-11 28" fill="#6b99de"/><path d="M1863 660l7-26-11 0-7 26" fill="#6896da"/><path d="M1876 683l9-27-12 1-9 27" fill="#70a0e8"/><path d="M1893 570l-4-13 3-12 4 13" fill="#354d6f"/><path d="M1098 981l-21-19-8 6 22 18" fill="#a7d7ff"/><path d="M1143 1055l-25-19-3 6 25 19" fill="#6d9bdf"/><path d="M1841 964l9-31-4-4-8 31" fill="#5e87c4"/><path d="M1209 1148l-4-6-1 5 4 6" fill="#4f72a6"/><path d="M1874 767l12-28-8-3-11 28" fill="#6d9de4"/><path d="M1108 1007l-23-19-7 6 24 19" fill="#9acaff"/><path d="M1846 975l0-7-3-5-1 8" fill="#4f72a5"/><path d="M922 833l-4-13 7 9 4 13" fill="#304463"/><path d="M1880 738l11-28-9-2-11 28" fill="#6fa0e8"/><path d="M1855 861l11-29-3-5-12 30" fill="#648fd0"/><path d="M951 834l-22-18 6 8 22 18" fill="#567bb3"/><path d="M1163 1082l-26-20-1 6 25 20" fill="#6693d5"/><path d="M1185 1109l-26-21 0 6 25 20" fill="#638dcd"/><path d="M1220 1154l-8-1-1 6 8 0" fill="#76aaf6"/><path d="M1040 914l-21-18 6 7 20 18" fill="#5174a9"/><path d="M1883 710l11-28-10-1-10 28" fill="#70a1ea"/><path d="M1839 985l7-4-3-4-7 4" fill="#76a9f6"/><path d="M1214 1154l-7-4-1 6 7 3" fill="#6a98dc"/><path d="M1874 659l9-27-15 2-7 26" fill="#6e9ee5"/><path d="M1880 554l-2 6 3-12 3-6" fill="#5072a6"/><path d="M996 874l-22-18 7 8 21 18" fill="#5276ab"/><path d="M1845 929l9-29-3-5-10 30" fill="#5e87c4"/><path d="M1084 959l-20-19-8 6 21 18" fill="#9eccff"/><path d="M1122 1033l-24-18-5 6 25 18" fill="#77a6eb"/><path d="M1849 895l11-29-3-5-11 30" fill="#608ac9"/><path d="M1845 982l3-6-3-5-4 7" fill="#6997db"/><path d="M1885 683l11-27-13 0-9 27" fill="#70a1ea"/><path d="M1863 831l12-29-5-5-11 29" fill="#6693d5"/><path d="M1092 985l-22-18-8 5 23 19" fill="#afdfff"/><path d="M1207 1140l-25-22 0 6 24 22" fill="#5e87c5"/><path d="M1063 936l-20-18 2 7 20 18" fill="#567cb4"/><path d="M1866 613l7-25-1-9-8 26" fill="#5276ab"/><path d="M1843 967l10-32-4-4-9 32" fill="#6089c7"/><path d="M1209 1151l-4-6-1 6 4 6" fill="#4f71a5"/><path d="M1871 800l12-28-5-5-12 29" fill="#6996da"/><path d="M925 813l5 4 6 9-5-4" fill="#5276ac"/><path d="M1870 636l7-26-12 1-7 25" fill="#6896d9"/><path d="M1885 658l9-27-13 1-9 27" fill="#70a0e8"/><path d="M1141 1060l-26-19-2 6 25 18" fill="#6a97da"/><path d="M1890 559l-5-6 3-11 5 5" fill="#608ac8"/><path d="M1103 1011l-24-18-5 6 24 18" fill="#8cbcff"/><path d="M1848 977l0-7-3-4 0 7" fill="#4f71a5"/><path d="M1886 554l-7 1 3-12 8-1" fill="#77aaf7"/><path d="M1878 770l12-28-6-4-12 28" fill="#6b9ae0"/><path d="M1220 1157l-8 0-1 5 8 1" fill="#76aaf6"/><path d="M1885 741l12-28-8-3-11 28" fill="#6e9ee5"/><path d="M1184 1112l-25-20 0 6 25 20" fill="#618ccb"/><path d="M1162 1086l-26-20-1 6 26 20" fill="#6590d1"/><path d="M918 822l3-7 6 9-2 7" fill="#5d85c2"/><path d="M1857 865l11-29-3-5-11 29" fill="#628ccb"/><path d="M1841 988l7-4-3-5-7 5" fill="#76a9f6"/><path d="M1890 712l11-28-9-2-11 28" fill="#70a0e9"/><path d="M1079 963l-21-18-10 6 22 18" fill="#aadaff"/><path d="M1213 1157l-6-3-1 5 7 4" fill="#6997db"/><path d="M1893 684l11-27-10-1-11 27" fill="#71a2eb"/><path d="M919 816l8-2 6 8-7 3" fill="#77aaf7"/><path d="M1847 985l3-7-3-4-4 7" fill="#6996da"/><path d="M1020 897l-21-18 7 7 20 18" fill="#4f72a5"/><path d="M976 857l-22-18 7 8 21 18" fill="#5174a8"/><path d="M1847 932l9-29-3-5-10 30" fill="#5c84c0"/><path d="M1086 990l-23-19-7 6 24 19" fill="#abdcff"/><path d="M1882 634l9-26-16 2-7 26" fill="#6e9ee5"/><path d="M1119 1038l-25-19-3 6 25 19" fill="#709ee3"/><path d="M1851 899l10-29-2-5-11 29" fill="#5e87c4"/><path d="M1895 658l10-27-13 0-9 27" fill="#71a2eb"/><path d="M1206 1144l-24-22 0 5 24 22" fill="#5d86c2"/><path d="M1866 834l11-28-4-6-11 29" fill="#648fd0"/><path d="M1846 970l10-32-4-4-10 31" fill="#608ac8"/><path d="M1208 1155l-4-6 0 5 4 6" fill="#4f71a4"/><path d="M1872 590l7-25 0-9-8 25" fill="#5174a8"/><path d="M1065 941l-20-18-8 6 21 18" fill="#a9d6ff"/><path d="M1850 980l0-7-3-4 0 7" fill="#4f71a4"/><path d="M1044 919l-20-18 2 7 20 18" fill="#557ab1"/><path d="M1894 633l9-27-14 2-9 26" fill="#70a0e8"/><path d="M1099 1016l-24-18-5 6 25 18" fill="#7faef4"/><path d="M1139 1064l-25-19-2 6 25 19" fill="#6794d6"/><path d="M1072 968l-22-18-9 6 22 18" fill="#b8e8ff"/><path d="M1219 1161l-8-1 0 5 8 1" fill="#76a9f6"/><path d="M1877 612l7-26-12 1-7 25" fill="#6895d9"/><path d="M1874 804l12-28-5-6-11 29" fill="#6693d5"/><path d="M1843 991l7-5-3-4-7 4" fill="#76a9f6"/><path d="M1184 1116l-25-20 0 6 24 19" fill="#6089c7"/><path d="M1213 1161l-7-4 0 5 7 4" fill="#6996da"/><path d="M1882 774l12-29-5-4-12 28" fill="#6997db"/><path d="M1161 1090l-25-20-1 6 25 19" fill="#638ece"/><path d="M1890 744l11-28-6-4-12 28" fill="#6c9be1"/><path d="M1896 715l12-28-8-3-12 27" fill="#6e9fe6"/><path d="M1848 988l4-7-3-4-4 6" fill="#6896d9"/><path d="M1901 686l11-28-10-2-11 28" fill="#70a1ea"/><path d="M1859 868l10-28-2-6-11 29" fill="#5f88c6"/><path d="M955 841l-21-18 8 8 21 17" fill="#4f72a5"/><path d="M1081 994l-24-18-6 6 24 18" fill="#9cccff"/><path d="M1904 659l11-28-12 0-10 27" fill="#71a2ec"/><path d="M1887 560l-4-3 2-5 6 5" fill="#6089c6"/><path d="M1850 935l9-30-5-3-8 29" fill="#6089c7"/><path d="M1001 880l-22-18 8 7 21 18" fill="#4e6fa2"/><path d="M1890 610l9-26-17 3-7 25" fill="#6e9ee4"/><path d="M1206 1147l-24-22-1 6 24 21" fill="#5c84bf"/><path d="M1117 1042l-25-19-3 7 26 18" fill="#6b99dd"/><path d="M1880 559l-1 8-1-9 2-6" fill="#5174a9"/><path d="M1060 946l-21-18-11 6 22 18" fill="#a8d7ff"/><path d="M1904 632l11-26-14 0-9 27" fill="#71a2eb"/><path d="M928 841l-4-14 9 9 4 13" fill="#354c6f"/><path d="M1853 902l9-28-2-6-10 29" fill="#5c84c0"/><path d="M1208 1158l-4-6-1 6 4 6" fill="#4e70a3"/><path d="M1848 972l11-31-4-4-11 31" fill="#608ac8"/><path d="M1885 557l-6 4 0-8 8-1" fill="#77aaf7"/><path d="M1065 973l-23-18-8 6 23 18" fill="#bcedff"/><path d="M1852 983l0-7-3-5 0 8" fill="#4e70a3"/><path d="M1219 1164l-8-1 0 6 8 0" fill="#76a9f6"/><path d="M1867 838l11-28-2-6-12 28" fill="#618bca"/><path d="M1903 608l9-26-15 2-9 26" fill="#70a0e8"/><path d="M1096 1020l-25-18-3 7 25 17" fill="#74a2e8"/><path d="M1845 994l7-5-3-4-7 4" fill="#76a9f5"/><path d="M1138 1068l-26-19 0 6 25 19" fill="#6591d2"/><path d="M1884 588l8-25-14 1-7 25" fill="#6895d8"/><path d="M1213 1164l-7-4 0 6 7 3" fill="#6996d9"/><path d="M1047 925l-20-19-9 7 21 18" fill="#acd9ff"/><path d="M1183 1119l-24-19 0 5 24 20" fill="#5e87c4"/><path d="M1025 902l-20-18 3 8 20 17" fill="#5378ae"/><path d="M930 820l5 4 9 8-6-4" fill="#5072a6"/><path d="M1850 990l4-6-3-5-4 7" fill="#6895d9"/><path d="M1876 808l12-28-3-6-12 28" fill="#638ecf"/><path d="M1160 1093l-25-19 1 6 24 19" fill="#618bca"/><path d="M1051 951l-21-18-11 6 23 18" fill="#bcecff"/><path d="M1853 937l10-29-5-4-10 29" fill="#638ecf"/><path d="M1911 660l12-27-10-2-11 27" fill="#71a2eb"/><path d="M1077 999l-25-18-5 6 25 18" fill="#88b8ff"/><path d="M1914 633l11-27-12 0-11 26" fill="#71a3ec"/><path d="M1907 689l12-28-9-3-11 27" fill="#6f9fe7"/><path d="M1885 777l12-28-4-5-12 28" fill="#6693d5"/><path d="M1890 554l0 5-12 1 6-4" fill="#77aaf7"/><path d="M1901 718l12-28-7-4-12 28" fill="#6c9ce2"/><path d="M1205 1150l-23-21-1 5 24 22" fill="#5d85c1"/><path d="M1893 747l12-28-5-4-12 28" fill="#6997db"/><path d="M1860 872l10-28-1-6-11 28" fill="#5c84c0"/><path d="M1898 585l9-25-17 3-8 26" fill="#6e9de4"/><path d="M1914 607l11-26-15 1-9 26" fill="#71a2eb"/><path d="M1207 1162l-3-6-1 5 4 6" fill="#4e70a2"/><path d="M1850 975l11-32-4-4-10 32" fill="#6089c7"/><path d="M981 863l-21-17 9 7 20 18" fill="#4c6d9e"/><path d="M1115 1046l-25-18-2 6 26 18" fill="#6895d8"/><path d="M924 829l2-7 9 9-2 7" fill="#6089c7"/><path d="M1855 905l9-28-3-5-9 28" fill="#5b83be"/><path d="M1890 557l1 8-13 1 1-8" fill="#6c9be1"/><path d="M1905 550l0 6-17 3 0-5" fill="#77aaf7"/><path d="M1059 977l-24-18-7 7 25 17" fill="#adddff"/><path d="M1854 986l0-7-3-5 0 7" fill="#4e70a2"/><path d="M925 824l7-4 8 8-6 4" fill="#77aaf7"/><path d="M1219 1167l-8 0 0 5 8 0" fill="#76a9f5"/><path d="M1040 929l-20-17-12 6 22 17" fill="#9eceff"/><path d="M1847 996l6-4-2-5-7 5" fill="#76a9f5"/><path d="M1912 583l9-26-16 3-9 26" fill="#70a0e7"/><path d="M1213 1167l-7-3 0 5 7 4" fill="#6895d9"/><path d="M1044 956l-23-18-9 6 24 18" fill="#cafaff"/><path d="M1093 1025l-25-18-2 6 25 18" fill="#6d9bdf"/><path d="M1921 548l-1 5-17 3 0-5" fill="#77aaf7"/><path d="M1852 993l4-6-3-5-4 7" fill="#6895d8"/><path d="M1869 842l10-28-1-6-11 28" fill="#5e86c3"/><path d="M1905 554l2 7-17 4-2-7" fill="#73a3ec"/><path d="M1137 1072l-25-19 0 6 25 19" fill="#638ece"/><path d="M1183 1123l-24-20 1 6 23 20" fill="#5c85c1"/><path d="M1855 940l11-30-5-3-10 29" fill="#638fcf"/><path d="M1160 1097l-25-19 1 6 24 19" fill="#5f88c6"/><path d="M1924 608l12-27-13 0-11 26" fill="#72a3ed"/><path d="M1922 635l12-28-11-1-11 27" fill="#71a2ec"/><path d="M1205 1154l-24-22-1 6 25 21" fill="#5e87c4"/><path d="M1006 886l-20-18 4 7 20 18" fill="#5276ab"/><path d="M1028 908l-19-18-10 6 21 18" fill="#addaff"/><path d="M1073 1003l-25-17-4 6 25 18" fill="#78a7ed"/><path d="M1918 663l12-28-9-3-11 28" fill="#6fa0e8"/><path d="M1207 1165l-4-6 0 5 4 6" fill="#4d6fa1"/><path d="M1920 551l1 8-16 3-2-8" fill="#71a1e9"/><path d="M1878 812l11-28-2-6-12 28" fill="#608ac8"/><path d="M1852 978l11-32-3-4-11 31" fill="#6089c7"/><path d="M1924 583l10-27-15 1-9 27" fill="#71a2eb"/><path d="M1031 934l-21-17-12 6 23 17" fill="#b6e6ff"/><path d="M1912 692l12-28-7-4-12 28" fill="#6d9ce3"/><path d="M1855 989l1-7-3-5 0 7" fill="#4d6fa1"/><path d="M1862 876l9-28-1-6-10 28" fill="#5a81bb"/><path d="M1219 1170l-8 0 0 5 8 1" fill="#76a9f5"/><path d="M1935 547l-2 5-15 2 1-6" fill="#77aaf7"/><path d="M1859 907l9-28-5-3-9 28" fill="#618bca"/><path d="M1054 982l-24-18-6 7 25 17" fill="#93c3ff"/><path d="M1887 781l12-27-3-6-12 28" fill="#638ece"/><path d="M1904 721l13-27-6-5-12 27" fill="#6997dc"/><path d="M1114 1050l-25-18-1 7 25 17" fill="#6591d2"/><path d="M1896 751l12-27-4-6-12 28" fill="#6692d5"/><path d="M1848 999l7-4-3-5-6 5" fill="#76a9f5"/><path d="M1213 1171l-7-4 0 5 7 4" fill="#6895d8"/><path d="M1037 961l-23-18-8 7 24 17" fill="#beeeff"/><path d="M1854 996l4-6-3-5-4 7" fill="#6794d8"/><path d="M1933 550l1 8-15 1-1-7" fill="#6f9fe6"/><path d="M935 848l-4-13 10 7 4 13" fill="#385175"/><path d="M1021 913l-20-18-13 6 21 18" fill="#95c4ff"/><path d="M1183 1127l-23-20 0 5 23 20" fill="#5b82bd"/><path d="M1092 1029l-26-18-1 7 25 17" fill="#6895d9"/><path d="M1858 943l11-30-4-4-11 29" fill="#638ecf"/><path d="M1137 1076l-25-19 1 6 24 18" fill="#608ac9"/><path d="M1935 583l11-27-14 0-10 27" fill="#72a3ed"/><path d="M1205 1157l-25-21-1 6 26 21" fill="#5e88c5"/><path d="M1023 939l-23-17-10 6 24 18" fill="#ccfdff"/><path d="M1933 609l12-27-11-1-12 27" fill="#72a3ed"/><path d="M1870 846l10-27-1-7-11 28" fill="#5a82bc"/><path d="M1207 1168l-4-6 0 6 4 6" fill="#4d6ea0"/><path d="M1160 1101l-24-19 2 6 23 19" fill="#5d85c1"/><path d="M1854 981l11-32-3-4-11 31" fill="#5f89c6"/><path d="M1929 637l12-27-9-3-12 27" fill="#70a1e9"/><path d="M1948 547l-3 5-14 0 2-5" fill="#77aaf7"/><path d="M1857 991l0-7-2-4-1 7" fill="#4d6ea0"/><path d="M1070 1008l-25-18-3 7 25 17" fill="#6e9de1"/><path d="M1219 1174l-8-1 0 6 8 0" fill="#76a9f5"/><path d="M937 827l5 4 10 7-5-3" fill="#4e70a3"/><path d="M988 869l-20-17 4 7 20 18" fill="#5174a8"/><path d="M1862 910l11-29-7-3-9 28" fill="#6692d4"/><path d="M1010 891l-20-17-10 6 21 18" fill="#acd9ff"/><path d="M1923 666l13-27-8-4-12 27" fill="#6d9de3"/><path d="M1850 1002l7-4-3-5-7 4" fill="#75a8f5"/><path d="M1011 918l-21-17-13 6 23 17" fill="#addeff"/><path d="M1213 1174l-7-4 0 6 7 3" fill="#6794d7"/><path d="M1863 879l9-27-2-6-9 28" fill="#5a81bb"/><path d="M1879 816l10-27-1-7-11 28" fill="#5c84c0"/><path d="M1050 987l-25-17-4 6 25 17" fill="#7dadf3"/><path d="M1946 550l0 8-14 0-1-8" fill="#6d9de3"/><path d="M1916 696l12-28-5-5-13 28" fill="#6a98dc"/><path d="M1113 1054l-25-17 1 6 25 18" fill="#628dcd"/><path d="M1855 999l4-6-2-5-4 6" fill="#6794d7"/><path d="M1031 966l-24-18-6 7 25 17" fill="#a0d0ff"/><path d="M1888 786l11-27-1-7-12 28" fill="#5f88c6"/><path d="M1907 726l12-28-4-6-12 28" fill="#6692d4"/><path d="M1898 756l12-28-3-6-12 28" fill="#628dcd"/><path d="M931 836l2-7 10 8-2 7" fill="#618bca"/><path d="M1183 1130l-23-19-1 5 23 20" fill="#5e88c5"/><path d="M932 831l7-4 9 8-6 3" fill="#77aaf7"/><path d="M1860 945l12-29-4-4-11 29" fill="#638ece"/><path d="M1015 944l-23-17-9 7 25 17" fill="#c7f8ff"/><path d="M1205 1161l-25-21-1 5 26 21" fill="#5e88c5"/><path d="M1944 584l12-27-12-1-11 27" fill="#72a3ed"/><path d="M1207 1172l-4-6 1 5 3 6" fill="#4c6e9f"/><path d="M1002 897l-20-18-14 6 21 18" fill="#8dbcff"/><path d="M1137 1079l-25-18 2 6 24 18" fill="#5e86c3"/><path d="M1855 983l12-31-3-4-12 31" fill="#5f88c5"/><path d="M1090 1033l-25-17 0 7 25 17" fill="#6591d2"/><path d="M1219 1177l-8 0 0 5 8 0" fill="#76a9f5"/><path d="M1859 994l0-7-3-4 0 7" fill="#4c6e9f"/><path d="M1940 612l13-27-10-3-12 27" fill="#70a1ea"/><path d="M1161 1105l-24-19 2 5 23 19" fill="#5b82bd"/><path d="M1002 923l-23-17-11 7 24 17" fill="#cbfcff"/><path d="M1960 548l-5 5-12-1 3-5" fill="#77aaf7"/><path d="M1866 912l11-28-6-4-10 29" fill="#6692d5"/><path d="M1870 850l9-27 0-6-10 27" fill="#587eb6"/><path d="M1851 1005l7-4-2-5-7 4" fill="#75a8f4"/><path d="M1213 1177l-7-3 0 5 7 3" fill="#6794d7"/><path d="M1068 1013l-25-18-2 7 26 17" fill="#6996d9"/><path d="M1935 641l12-28-8-4-12 27" fill="#6d9de4"/><path d="M969 853l-20-17 5 7 19 17" fill="#4f72a6"/><path d="M1868 881l9-27-6-3-9 27" fill="#628dcd"/><path d="M1956 552l-1 7-11-1 0-8" fill="#6b99df"/><path d="M1857 1002l4-7-3-4-4 6" fill="#6794d6"/><path d="M992 875l-20-17-11 6 21 17" fill="#a9d6ff"/><path d="M991 902l-21-17-13 6 22 17" fill="#a5d5ff"/><path d="M1047 992l-25-17-3 6 25 17" fill="#709ee4"/><path d="M1927 670l13-27-6-5-12 27" fill="#6a98dc"/><path d="M1183 1134l-24-20-2 6 24 19" fill="#628dcc"/><path d="M1113 1059l-24-18 1 6 24 18" fill="#5f89c7"/><path d="M1879 821l10-27 0-7-11 27" fill="#587fb8"/><path d="M1027 971l-25-17-4 7 25 16" fill="#83b2f9"/><path d="M1863 948l12-29-4-5-12 30" fill="#638dcd"/><path d="M1205 1164l-26-21 0 6 26 20" fill="#5e87c5"/><path d="M1207 1175l-4-6 1 5 4 6" fill="#4c6d9e"/><path d="M1009 950l-24-17-7 7 25 16" fill="#a9d9ff"/><path d="M1918 700l13-27-4-6-12 27" fill="#6692d4"/><path d="M1857 986l12-31-3-4-12 31" fill="#5e87c4"/><path d="M1219 1180l-8 0 0 5 8 0" fill="#75a8f4"/><path d="M1860 997l0-7-2-4 0 7" fill="#4c6d9e"/><path d="M1889 791l10-27 0-7-11 27" fill="#5b82bd"/><path d="M993 928l-23-17-9 7 24 17" fill="#cfffff"/><path d="M1952 587l12-27-10-3-12 27" fill="#71a2eb"/><path d="M1909 730l12-27-3-7-12 28" fill="#628ccb"/><path d="M1853 1008l6-5-2-4-7 4" fill="#75a8f4"/><path d="M1899 761l11-27-1-7-12 27" fill="#5e87c4"/><path d="M1138 1083l-25-18 3 6 23 18" fill="#5b82bd"/><path d="M984 881l-21-18-15 7 22 17" fill="#86b5fb"/><path d="M1161 1108l-23-18 1 5 23 19" fill="#5a81bb"/><path d="M1869 915l12-29-6-3-11 28" fill="#6692d4"/><path d="M940 843l1-7 5 2-2 6" fill="#5f89c7"/><path d="M1213 1180l-7-3 0 5 7 4" fill="#6793d6"/><path d="M945 833l6 4 4 8-5-6" fill="#5072a6"/><path d="M1090 1038l-25-17 1 6 25 17" fill="#628dcc"/><path d="M981 907l-23-17-11 7 23 17" fill="#c8f9ff"/><path d="M1858 1005l4-7-2-4-4 6" fill="#6693d6"/><path d="M1946 615l13-27-8-4-12 27" fill="#6e9ee5"/><path d="M1872 883l11-27-8-3-9 27" fill="#6895d8"/><path d="M1872 854l9-27-2-6-9 27" fill="#587eb8"/><path d="M1969 551l-5 5-11-3 5-5" fill="#77aaf7"/><path d="M940 837l7-4 5 7-7-1" fill="#77aaf7"/><path d="M1067 1017l-25-17 0 7 25 17" fill="#6591d2"/><path d="M1182 1137l-24-19-2 6 25 19" fill="#628dcc"/><path d="M1965 554l-1 8-10-3 0-8" fill="#6895d8"/><path d="M974 859l-20-17-11 6 20 18" fill="#a5d2ff"/><path d="M971 886l-21-17-14 6 22 17" fill="#9dcdff"/><path d="M1865 951l12-29-3-5-13 30" fill="#628dcc"/><path d="M1205 1167l-26-20 0 5 26 21" fill="#5e87c4"/><path d="M1939 645l12-27-5-6-13 27" fill="#6a98dd"/><path d="M1207 1178l-3-6 0 6 4 6" fill="#4c6d9e"/><path d="M1045 996l-26-16-1 7 25 16" fill="#6996da"/><path d="M1219 1183l-8 0 1 5 8 0" fill="#75a8f4"/><path d="M1859 989l11-30-2-5-12 31" fill="#5e86c3"/><path d="M1862 1000l0-7-2-5-1 8" fill="#4c6c9d"/><path d="M1114 1063l-25-18 3 6 24 18" fill="#5c84c0"/><path d="M1023 976l-24-17-4 7 26 17" fill="#72a0e6"/><path d="M1004 955l-25-17-5 7 25 17" fill="#87b7fe"/><path d="M1854 1010l7-4-2-4-7 4" fill="#75a8f4"/><path d="M1879 825l9-26 1-7-10 27" fill="#557ab1"/><path d="M987 934l-24-17-8 7 25 17" fill="#b1e2ff"/><path d="M1930 675l12-27-4-7-12 28" fill="#6692d4"/><path d="M1213 1184l-7-4 1 6 7 3" fill="#6693d5"/><path d="M1872 918l12-29-5-4-12 29" fill="#6591d3"/><path d="M1162 1112l-22-19-3 6 23 19" fill="#608ac8"/><path d="M945 839l7 0-10 6-3-5" fill="#77aaf7"/><path d="M972 913l-24-17-9 7 24 16" fill="#d4ffff"/><path d="M1138 1087l-23-18 3 6 22 18" fill="#587fb8"/><path d="M1859 1008l5-7-3-4-4 6" fill="#6693d5"/><path d="M965 865l-20-17-17 6 22 17" fill="#80aff5"/><path d="M1876 886l11-28-6-3-11 27" fill="#6895d9"/><path d="M1920 705l12-27-2-7-12 27" fill="#618bca"/><path d="M1958 590l12-27-8-4-12 27" fill="#6e9ee5"/><path d="M951 838l5 5-12 7-3-7" fill="#92c0ff"/><path d="M1888 796l10-27 2-7-12 27" fill="#567cb4"/><path d="M960 891l-22-16-13 7 23 16" fill="#c3f4ff"/><path d="M1877 856l9-27-6-3-9 26" fill="#638ecf"/><path d="M1090 1042l-25-17 3 6 24 17" fill="#5f88c5"/><path d="M941 839l3 5-16 6-4-4" fill="#77aaf7"/><path d="M1909 736l12-27-1-8-12 27" fill="#5d85c2"/><path d="M1899 766l11-27 0-7-12 27" fill="#5980ba"/><path d="M1181 1141l-24-19-2 6 25 19" fill="#628dcc"/><path d="M1205 1171l-26-21 0 6 26 20" fill="#5e87c3"/><path d="M1208 1182l-4-6 0 5 4 6" fill="#4b6c9d"/><path d="M1866 954l13-29-3-5-13 30" fill="#618ccb"/><path d="M1220 1186l-8 0 0 6 8-1" fill="#75a8f4"/><path d="M1950 620l13-27-6-6-12 27" fill="#6a98dd"/><path d="M1863 1003l0-7-2-5 0 7" fill="#4b6c9d"/><path d="M1860 992l12-30-2-5-12 31" fill="#5d85c1"/><path d="M952 870l-22-17-15 7 22 17" fill="#95c5ff"/><path d="M1066 1022l-25-17 2 6 25 17" fill="#618ccb"/><path d="M1855 1013l7-4-2-4-7 4" fill="#75a8f4"/><path d="M943 842l3 7-16 7-3-8" fill="#8ebeff"/><path d="M1977 556l-7 4-8-5 5-4" fill="#77aaf7"/><path d="M1214 1187l-7-3 0 5 7 3" fill="#6692d4"/><path d="M1971 558l-1 7-8-4 1-8" fill="#648fd0"/><path d="M926 845l3 4-15 7-4-4" fill="#77aaf7"/><path d="M1043 1001l-25-16 0 6 25 17" fill="#6591d2"/><path d="M1115 1067l-24-18 4 6 23 17" fill="#5980b9"/><path d="M1161 1116l-23-19-3 6 24 18" fill="#6691d3"/><path d="M1874 921l13-29-5-4-12 28" fill="#6591d2"/><path d="M1861 1011l4-7-2-4-4 6" fill="#6692d4"/><path d="M1021 981l-25-17-1 7 25 17" fill="#6997da"/><path d="M981 939l-24-16-6 7 25 16" fill="#8bbbff"/><path d="M1000 960l-25-17-3 8 25 16" fill="#73a1e7"/><path d="M964 918l-24-16-8 7 25 16" fill="#b9eaff"/><path d="M1941 650l13-27-4-7-12 27" fill="#6592d3"/><path d="M1880 829l9-26-1-6-9 26" fill="#577cb4"/><path d="M1880 888l12-27-6-4-12 28" fill="#6895d8"/><path d="M950 897l-23-17-11 8 24 16" fill="#d8ffff"/><path d="M1140 1091l-23-18 2 6 22 18" fill="#587fb8"/><path d="M1882 858l10-27-8-2-9 26" fill="#6997db"/><path d="M929 848l2 7-15 7-3-8" fill="#98c8ff"/><path d="M939 876l-22-17-13 7 23 17" fill="#bdeeff"/><path d="M1181 1145l-25-19-2 6 26 18" fill="#628ccc"/><path d="M1208 1185l-4-6 1 5 4 6" fill="#4b6b9c"/><path d="M1205 1174l-26-20 0 5 26 20" fill="#5d86c3"/><path d="M1931 680l12-26-2-8-12 27" fill="#618bc9"/><path d="M1220 1189l-8 1 1 5 8-1" fill="#75a8f4"/><path d="M1868 957l13-29-3-5-13 29" fill="#608ac9"/><path d="M1864 1006l0-7-2-5 0 7" fill="#4b6b9c"/><path d="M1091 1046l-24-17 3 6 24 17" fill="#5b82bd"/><path d="M1861 995l12-30-2-5-12 30" fill="#5c84c0"/><path d="M1856 1016l7-4-2-4-7 4" fill="#75a8f3"/><path d="M912 851l4 4-13 7-5-3" fill="#77aaf7"/><path d="M1888 801l9-26 2-8-11 27" fill="#5377ad"/><path d="M1962 595l13-27-6-6-13 27" fill="#6a98dd"/><path d="M1920 711l12-27 0-8-13 27" fill="#5c84c0"/><path d="M1214 1190l-7-3 1 5 7 3" fill="#6692d4"/><path d="M1898 771l10-26 2-8-11 27" fill="#5479b0"/><path d="M1909 741l11-26 1-8-12 27" fill="#587eb7"/><path d="M1862 1014l4-6-2-5-4 6" fill="#6692d4"/><path d="M1159 1120l-23-18-3 6 25 17" fill="#6692d3"/><path d="M1876 924l14-29-4-4-13 28" fill="#648fd0"/><path d="M1986 565l-6-4-6-6 5 3" fill="#5073a7"/><path d="M915 854l3 7-13 7-4-7" fill="#a5d5ff"/><path d="M1067 1026l-25-16 3 6 24 16" fill="#5e86c3"/><path d="M1883 891l13-28-6-3-12 27" fill="#6794d7"/><path d="M1117 1071l-23-18 4 6 22 17" fill="#567cb3"/><path d="M1953 625l12-26-3-8-13 27" fill="#6591d3"/><path d="M942 903l-24-17-8 8 24 16" fill="#c1f2ff"/><path d="M1887 860l11-27-7-3-11 27" fill="#6a97dc"/><path d="M1886 831l9-26-7-3-9 26" fill="#648fd0"/><path d="M1043 1006l-25-16 2 6 25 17" fill="#618bca"/><path d="M958 924l-24-17-6 8 25 16" fill="#8fbfff"/><path d="M928 882l-23-17-11 8 24 16" fill="#daffff"/><path d="M1141 1095l-22-18-3 6 23 18" fill="#628ccb"/><path d="M977 945l-25-17-3 8 25 16" fill="#74a3e9"/><path d="M1209 1188l-4-6 1 5 3 6" fill="#4a6b9b"/><path d="M1180 1148l-25-18-1 6 26 18" fill="#618ccb"/><path d="M1020 986l-25-17 0 7 25 17" fill="#6591d2"/><path d="M1205 1177l-26-20 1 6 26 19" fill="#5d85c1"/><path d="M1221 1192l-8 1 1 5 8 0" fill="#75a8f3"/><path d="M998 965l-25-16-2 7 25 16" fill="#6a97db"/><path d="M1976 563l-2 7-6-6 2-7" fill="#5f88c5"/><path d="M1865 1009l1-7-2-5-1 7" fill="#4a6b9b"/><path d="M1982 562l-7 3-6-7 6-3" fill="#77aaf7"/><path d="M1870 960l12-28-2-6-13 29" fill="#5f89c7"/><path d="M1857 1019l7-4-2-4-6 3" fill="#75a7f3"/><path d="M1863 998l11-30-2-5-11 30" fill="#5b82bd"/><path d="M899 858l5 3-11 8-6-3" fill="#77aaf7"/><path d="M1214 1193l-6-3 1 5 7 3" fill="#6591d3"/><path d="M1942 656l12-27-1-8-12 27" fill="#608ac8"/><path d="M1863 1017l4-6-2-5-4 6" fill="#6591d3"/><path d="M1093 1051l-24-17 5 5 22 17" fill="#577db5"/><path d="M903 860l4 7-11 7-5-7" fill="#a8d7ff"/><path d="M1158 1123l-24-17-2 6 25 17" fill="#6591d2"/><path d="M1889 805l9-25-1-7-9 26" fill="#557ab1"/><path d="M1878 927l14-28-4-5-13 28" fill="#638ece"/><path d="M1931 686l12-26 0-8-12 26" fill="#5b83be"/><path d="M1886 894l13-28-5-4-12 28" fill="#6693d5"/><path d="M1891 862l12-27-7-3-11 27" fill="#6997db"/><path d="M1892 833l11-27-9-2-10 26" fill="#6a98dd"/><path d="M1209 1191l-4-6 1 6 4 5" fill="#4a6a9a"/><path d="M1140 1099l-23-18-4 6 24 18" fill="#6b97da"/><path d="M1221 1196l-8 0 1 5 8 0" fill="#75a7f3"/><path d="M1964 600l13-26-3-7-13 26" fill="#6591d3"/><path d="M1206 1180l-27-19 1 5 26 20" fill="#5c84c0"/><path d="M920 888l-24-17-9 8 24 16" fill="#c7f9ff"/><path d="M1180 1152l-26-18 0 5 26 18" fill="#618bc9"/><path d="M1919 717l11-26 2-9-12 27" fill="#567cb4"/><path d="M1068 1031l-24-17 4 6 24 17" fill="#5980ba"/><path d="M1896 777l10-26 3-8-11 26" fill="#5174a8"/><path d="M1119 1074l-22-17 2 6 22 17" fill="#577cb5"/><path d="M1866 1012l1-7-2-5 0 7" fill="#4a6a9a"/><path d="M1858 1022l7-3-1-5-7 3" fill="#75a7f3"/><path d="M935 909l-24-17-6 8 25 16" fill="#93c4ff"/><path d="M1907 747l11-26 2-8-11 26" fill="#5276ac"/><path d="M1864 1001l11-29-2-6-11 30" fill="#5a81bb"/><path d="M1871 964l13-29-2-5-13 29" fill="#5e87c4"/><path d="M954 929l-25-16-4 8 25 16" fill="#75a4ea"/><path d="M1215 1196l-7-3 1 5 7 3" fill="#6591d2"/><path d="M1044 1011l-25-17 4 7 24 16" fill="#5d85c1"/><path d="M974 950l-25-16-1 7 25 16" fill="#6a97db"/><path d="M889 865l5 3-9 7-6-1" fill="#77aaf7"/><path d="M1864 1020l4-6-2-5-4 6" fill="#6591d2"/><path d="M1020 991l-25-17 2 7 25 16" fill="#608ac9"/><path d="M996 970l-25-16 1 8 25 15" fill="#6590d1"/><path d="M1954 631l12-26-1-8-13 26" fill="#6089c7"/><path d="M1157 1127l-25-17-1 6 25 17" fill="#6490d1"/><path d="M1988 573l-5-5-4-8 5 4" fill="#557bb2"/><path d="M893 866l4 7-9 7-4-6" fill="#94c2ff"/><path d="M1880 930l13-28-2-5-14 28" fill="#628ccb"/><path d="M1979 569l-3 7-3-7 2-7" fill="#5a81bb"/><path d="M1895 807l10-26-8-2-9 25" fill="#6490d1"/><path d="M1095 1055l-23-17 5 5 22 17" fill="#5478ae"/><path d="M1210 1194l-4-5 1 5 4 6" fill="#496999"/><path d="M1222 1199l-8 0 1 5 8 0" fill="#75a7f3"/><path d="M1897 835l12-27-8-2-11 26" fill="#6b99de"/><path d="M1889 897l13-27-4-5-13 28" fill="#6591d3"/><path d="M1138 1103l-24-17-3 6 24 17" fill="#6a97d9"/><path d="M1895 865l13-27-6-4-13 27" fill="#6996da"/><path d="M1206 1184l-26-20 1 6 26 19" fill="#5b83be"/><path d="M1859 1025l7-3-1-5-7 3" fill="#74a7f3"/><path d="M1867 1016l1-7-2-5 0 7" fill="#496999"/><path d="M1180 1155l-26-18 1 6 26 18" fill="#608ac8"/><path d="M1985 569l-8 2-3-8 7-3" fill="#77aaf7"/><path d="M1942 662l12-26 0-9-12 27" fill="#5a81bc"/><path d="M1865 1004l11-29-2-5-11 29" fill="#597fb9"/><path d="M1121 1078l-22-17-3 6 22 17" fill="#658fcf"/><path d="M1872 967l12-28-1-6-13 29" fill="#5d85c1"/><path d="M1216 1199l-7-3 1 5 7 3" fill="#6590d2"/><path d="M913 894l-25-16-6 8 25 15" fill="#97c8ff"/><path d="M1865 1023l4-6-2-5-4 6" fill="#6590d2"/><path d="M1071 1035l-24-17 6 6 22 16" fill="#557ab1"/><path d="M1929 693l12-26 2-9-12 26" fill="#557ab1"/><path d="M931 914l-25-15-4 7 25 16" fill="#75a5eb"/><path d="M1897 782l9-25 0-7-9 25" fill="#5378ae"/><path d="M1156 1131l-25-17-1 6 26 17" fill="#648fcf"/><path d="M1992 592l-4-13-1-10 4 13" fill="#2a3c57"/><path d="M951 935l-25-16-1 8 25 16" fill="#6a97db"/><path d="M1917 723l10-25 4-9-12 26" fill="#5174a8"/><path d="M1905 753l10-25 3-8-10 25" fill="#4f71a4"/><path d="M1965 607l12-26-1-9-12 26" fill="#5f88c6"/><path d="M1046 1015l-24-16 5 6 23 16" fill="#587eb7"/><path d="M1223 1202l-8 0 1 5 8 0" fill="#74a7f3"/><path d="M1882 933l13-27-2-6-14 28" fill="#608ac8"/><path d="M1210 1198l-3-6 1 5 4 6" fill="#496998"/><path d="M880 872l7 2-7 8-7-1" fill="#77aaf7"/><path d="M1902 808l11-26-10-1-10 25" fill="#6b99df"/><path d="M973 955l-25-16 1 8 25 16" fill="#6490d1"/><path d="M1903 837l12-26-8-3-11 26" fill="#6b99de"/><path d="M1207 1187l-26-19 1 5 26 19" fill="#5a82bc"/><path d="M1860 1028l7-3-1-5-7 3" fill="#74a7f2"/><path d="M1868 1019l1-7-2-5 0 7" fill="#496998"/><path d="M1021 995l-25-16 5 7 24 16" fill="#5c83bf"/><path d="M1136 1107l-24-17-3 6 24 17" fill="#6895d8"/><path d="M997 976l-25-16 3 7 24 15" fill="#6089c8"/><path d="M885 873l5 6-7 8-5-6" fill="#76a2e5"/><path d="M1891 900l13-27-3-5-14 28" fill="#648fd0"/><path d="M1898 868l14-27-6-4-13 27" fill="#6895d8"/><path d="M1180 1159l-26-18 1 6 26 17" fill="#5f88c6"/><path d="M1866 1007l10-29-1-5-10 29" fill="#577db5"/><path d="M1217 1203l-7-3 1 5 7 3" fill="#6490d1"/><path d="M1098 1058l-22-16 3 5 22 17" fill="#557ab1"/><path d="M1119 1082l-22-16-5 6 23 17" fill="#729fe2"/><path d="M1873 970l12-28-1-5-12 28" fill="#5b83be"/><path d="M1865 1026l5-6-2-5-4 6" fill="#6490d1"/><path d="M1953 638l12-26 1-9-12 26" fill="#5980ba"/><path d="M1979 576l-3 7 0-9 2-7" fill="#557ab1"/><path d="M1156 1135l-26-17 0 6 26 17" fill="#638ecd"/><path d="M908 900l-25-16-4 8 25 15" fill="#76a6ec"/><path d="M1223 1205l-7 0 1 5 8 0" fill="#74a7f2"/><path d="M1904 783l10-25-9-3-9 25" fill="#6591d2"/><path d="M1211 1201l-4-6 2 5 4 6" fill="#496897"/><path d="M1989 581l-6-5 0-10 5 5" fill="#5a81bc"/><path d="M1908 810l12-26-9-2-11 26" fill="#6b9ae0"/><path d="M1074 1039l-23-16 6 5 22 16" fill="#5175aa"/><path d="M1861 1031l7-3-2-5-7 3" fill="#74a7f2"/><path d="M1883 937l13-28-2-5-13 28" fill="#5e88c5"/><path d="M1869 1022l0-7-1-5 0 7" fill="#496897"/><path d="M1207 1190l-26-19 2 5 25 19" fill="#5980ba"/><path d="M928 920l-25-15-1 7 25 16" fill="#6a98dc"/><path d="M1907 840l13-27-7-3-12 26" fill="#6a98dd"/><path d="M1134 1111l-25-16-2 6 25 16" fill="#6793d5"/><path d="M1867 1011l11-30-2-5-10 30" fill="#587eb7"/><path d="M1985 576l-7 1-1-8 7-2" fill="#77aaf7"/><path d="M1181 1162l-26-17 1 5 26 17" fill="#5e87c4"/><path d="M1217 1206l-6-3 1 5 7 3" fill="#6490d0"/><path d="M1893 904l13-27-3-6-13 28" fill="#628dcd"/><path d="M1901 871l14-26-5-5-13 27" fill="#6793d6"/><path d="M1116 1087l-23-17-5 7 24 16" fill="#709de1"/><path d="M1866 1029l4-6-1-5-4 6" fill="#648fd0"/><path d="M1874 973l11-27 0-6-12 28" fill="#5980ba"/><path d="M950 941l-25-16 1 8 25 15" fill="#6490d1"/><path d="M1049 1020l-24-16 7 5 22 16" fill="#5377ad"/><path d="M1906 759l9-25 0-8-9 25" fill="#5276ab"/><path d="M1101 1062l-22-16-4 6 22 16" fill="#6893d3"/><path d="M874 880l7 0-4 9-8 0" fill="#77aaf7"/><path d="M973 961l-24-16 3 7 24 16" fill="#5f89c7"/><path d="M879 880l5 5-3 8-6-5" fill="#658fcf"/><path d="M1023 1000l-24-16 6 6 23 16" fill="#567cb4"/><path d="M998 981l-24-16 4 6 24 16" fill="#5b82bd"/><path d="M1224 1208l-7 0 1 5 8 0" fill="#74a7f2"/><path d="M1964 614l12-26 1-9-12 26" fill="#587fb8"/><path d="M1212 1204l-4-6 2 5 4 6" fill="#486896"/><path d="M1912 784l11-25-11-1-10 25" fill="#6b9adf"/><path d="M1156 1139l-26-17 0 6 26 16" fill="#628ccb"/><path d="M1861 1035l7-4-1-5-7 4" fill="#74a7f2"/><path d="M1870 1025l0-7-1-5 0 7" fill="#486796"/><path d="M1208 1193l-25-19 2 5 24 19" fill="#587fb8"/><path d="M1914 812l13-26-9-2-12 26" fill="#6b9ae0"/><path d="M1884 940l12-27-1-5-13 27" fill="#5d85c1"/><path d="M1990 601l-4-13 2-11 4 13" fill="#324868"/><path d="M1218 1209l-6-3 1 5 7 3" fill="#648fd0"/><path d="M1868 1014l11-29-2-5-10 29" fill="#5a81bb"/><path d="M1181 1165l-26-17 2 6 26 17" fill="#5d85c1"/><path d="M1133 1115l-25-16-2 6 26 16" fill="#6692d3"/><path d="M1911 843l13-27-6-4-13 27" fill="#6997db"/><path d="M1867 1032l4-6-1-5-4 6" fill="#648fd0"/><path d="M1078 1043l-22-17 4 6 21 17" fill="#5478ae"/><path d="M904 906l-24-16-2 8 25 16" fill="#6a98dc"/><path d="M1894 908l13-27-2-6-13 27" fill="#618ac9"/><path d="M1875 977l10-27 0-6-11 28" fill="#587eb7"/><path d="M1113 1091l-24-16-3 7 24 15" fill="#6d9ade"/><path d="M1904 875l13-27-3-5-14 27" fill="#6591d2"/><path d="M1098 1067l-22-17-6 7 23 16" fill="#7ba9ed"/><path d="M1225 1211l-7 0 1 5 8 0" fill="#74a7f2"/><path d="M1913 760l10-25-9-3-9 25" fill="#6591d3"/><path d="M927 926l-25-15 1 7 25 16" fill="#6490d0"/><path d="M1213 1207l-4-6 2 5 4 6" fill="#486795"/><path d="M1977 584l-2 6 2-9 2-7" fill="#5174a9"/><path d="M1862 1038l7-4-1-5-7 4" fill="#74a6f2"/><path d="M1919 786l12-26-10-1-11 25" fill="#6c9be1"/><path d="M869 892l2-6-1 10-2 6" fill="#5275aa"/><path d="M1053 1024l-23-16 7 5 22 16" fill="#4f72a5"/><path d="M1156 1142l-26-16 1 6 26 16" fill="#608ac9"/><path d="M1209 1196l-25-19 2 5 24 20" fill="#577db6"/><path d="M950 946l-24-15 3 7 25 15" fill="#5f88c5"/><path d="M1219 1212l-6-3 2 5 6 3" fill="#638fcf"/><path d="M1869 1017l12-29-2-5-11 29" fill="#5a81bb"/><path d="M1919 815l13-26-7-3-13 26" fill="#6b9adf"/><path d="M1884 944l12-27 0-6-13 27" fill="#5a82bc"/><path d="M1914 736l9-25 1-8-9 25" fill="#5073a8"/><path d="M1987 589l-5-5 2-10 5 5" fill="#5e87c4"/><path d="M1027 1005l-23-16 7 5 22 16" fill="#5174a9"/><path d="M1867 1035l5-5-1-6-5 6" fill="#638fcf"/><path d="M1182 1169l-25-17 2 5 25 17" fill="#5b83be"/><path d="M975 966l-24-16 5 7 24 15" fill="#5a81bb"/><path d="M876 886l5 5-1 8-5-4" fill="#5d86c3"/><path d="M1983 585l-7 0 2-10 7-1" fill="#77aaf7"/><path d="M1001 985l-24-15 7 6 23 15" fill="#557ab1"/><path d="M1132 1119l-25-16-1 6 26 16" fill="#6490d1"/><path d="M870 887l8 0-2 8-7 2" fill="#77aaf7"/><path d="M1876 980l10-27-1-5-11 27" fill="#567cb4"/><path d="M1914 846l14-26-5-5-14 27" fill="#6895d8"/><path d="M1111 1096l-25-16-2 6 25 16" fill="#6a97da"/><path d="M1081 1047l-21-17-5 7 22 16" fill="#6d98d8"/><path d="M1095 1072l-23-17-6 7 24 16" fill="#79a6eb"/><path d="M1895 911l13-26-1-6-14 27" fill="#5e87c5"/><path d="M1227 1214l-8 0 2 5 8-1" fill="#74a6f2"/><path d="M1905 879l14-27-3-6-14 27" fill="#638ece"/><path d="M1214 1210l-4-6 2 5 4 6" fill="#476695"/><path d="M1922 761l11-26-12 0-10 24" fill="#6b9ae0"/><path d="M1862 1041l7-4-1-5-7 4" fill="#74a6f1"/><path d="M1961 622l11-25 4-11-12 26" fill="#5275aa"/><path d="M1871 1031l0-6-1-6 0 7" fill="#476694"/><path d="M1210 1200l-25-19 3 5 23 19" fill="#567bb2"/><path d="M1926 788l12-26-9-2-12 25" fill="#6c9be1"/><path d="M1221 1215l-7-3 2 5 7 3" fill="#638ece"/><path d="M1156 1146l-25-16 1 5 26 16" fill="#5f88c5"/><path d="M903 912l-25-16 2 8 25 15" fill="#648fd0"/><path d="M1870 1020l12-29-2-5-12 29" fill="#5a81bb"/><path d="M1868 1039l4-6-1-5-4 6" fill="#638ece"/><path d="M1954 671l26-53 7-12-27 55" fill="#283953"/><path d="M1884 948l12-27 0-6-12 27" fill="#587fb8"/><path d="M1183 1172l-25-17 3 5 24 17" fill="#5a81bb"/><path d="M1923 818l14-26-6-4-14 26" fill="#6a98dd"/><path d="M1058 1028l-22-16 4 5 21 16" fill="#5276ab"/><path d="M1986 610l-4-13 5-11 3 13" fill="#395276"/><path d="M1877 983l11-27-3-5-10 27" fill="#5a81bb"/><path d="M1132 1123l-26-16 0 6 26 16" fill="#638ece"/><path d="M927 932l-25-16 5 8 24 15" fill="#5e87c4"/><path d="M1922 737l10-25-10-2-9 24" fill="#6591d3"/><path d="M1228 1217l-8 0 2 5 8-1" fill="#74a6f1"/><path d="M1078 1052l-22-16-7 6 23 16" fill="#86b4f8"/><path d="M1916 850l14-26-4-6-13 27" fill="#6692d4"/><path d="M1109 1100l-25-16-2 7 26 15" fill="#6794d7"/><path d="M1091 1076l-24-16-4 7 24 16" fill="#73a1e5"/><path d="M1215 1213l-4-6 2 5 4 6" fill="#476694"/><path d="M1895 915l13-26 0-6-14 26" fill="#5c84c0"/><path d="M1930 762l12-25-11-2-11 25" fill="#6c9be2"/><path d="M1906 882l14-26-2-6-14 27" fill="#618bc9"/><path d="M1211 1203l-24-19 1 5 24 19" fill="#567cb4"/><path d="M1923 713l9-24 1-8-9 24" fill="#4f71a5"/><path d="M1222 1218l-7-3 2 5 7 2" fill="#638ece"/><path d="M868 900l2-6 2 9-2 6" fill="#577db5"/><path d="M875 893l5 4 2 8-6-4" fill="#587fb8"/><path d="M1870 1023l13-29-2-5-12 29" fill="#5a81bb"/><path d="M1931 791l14-26-8-3-13 25" fill="#6c9be1"/><path d="M1868 1042l4-6 0-5-5 6" fill="#638ece"/><path d="M1157 1149l-26-16 3 6 25 16" fill="#5d86c2"/><path d="M1184 1175l-24-16 3 4 23 18" fill="#587eb7"/><path d="M869 895l7-2 2 8-7 3" fill="#77aaf7"/><path d="M1885 951l10-26 1-6-12 27" fill="#567cb3"/><path d="M1229 1219l-8 1 3 5 7-1" fill="#74a6f1"/><path d="M1879 986l11-27-3-4-11 26" fill="#5d86c2"/><path d="M1983 599l-5-6 4-11 6 5" fill="#638dcc"/><path d="M1980 594l-8 0 4-11 8 0" fill="#77aaf7"/><path d="M1927 822l14-26-5-5-14 26" fill="#6896da"/><path d="M1932 737l11-25-13 0-10 24" fill="#6b9ae0"/><path d="M1061 1032l-21-16-5 7 21 15" fill="#739edf"/><path d="M1132 1127l-26-16 1 6 26 16" fill="#618bca"/><path d="M1217 1216l-4-6 2 5 4 6" fill="#466593"/><path d="M1073 1057l-22-16-7 7 24 15" fill="#83b2f7"/><path d="M1872 1038l0-7-1-5 0 7" fill="#466593"/><path d="M1088 1081l-24-16-4 7 25 15" fill="#6d9bdf"/><path d="M1108 1104l-25-15-1 6 26 15" fill="#6692d3"/><path d="M1938 764l12-25-10-3-12 26" fill="#6d9ce3"/><path d="M1895 919l13-26 0-6-13 26" fill="#5980ba"/><path d="M1918 854l14-26-3-6-14 26" fill="#638fcf"/><path d="M904 917l-25-15 5 8 24 15" fill="#5e86c3"/><path d="M1212 1206l-24-19 1 5 25 19" fill="#587eb8"/><path d="M1907 886l13-26 0-6-14 27" fill="#5e87c4"/><path d="M873 919l-4-13 5 8 4 13" fill="#2d405e"/><path d="M1871 1026l13-28-2-6-12 29" fill="#5a81bb"/><path d="M1158 1153l-25-16 3 5 24 16" fill="#5b83be"/><path d="M1932 714l10-24-11-2-9 24" fill="#6591d3"/><path d="M1936 794l14-26-7-4-13 26" fill="#6b99df"/><path d="M1037 1013l-21-16 5 6 21 16" fill="#5174a8"/><path d="M1186 1179l-25-17 4 4 23 18" fill="#567cb4"/><path d="M1230 1222l-7 1 2 5 8-1" fill="#74a6f1"/><path d="M1885 955l10-26 0-6-11 26" fill="#557ab2"/><path d="M1880 990l12-27-3-5-11 27" fill="#5e86c3"/><path d="M1941 738l12-25-12-1-11 25" fill="#6c9ce2"/><path d="M1931 691l9-24 3-9-10 24" fill="#4e70a2"/><path d="M1058 1037l-22-16-8 7 23 15" fill="#90bfff"/><path d="M1132 1131l-26-16 2 6 26 15" fill="#5f89c6"/><path d="M1980 620l-4-13 7-12 4 13" fill="#3e5981"/><path d="M1929 825l15-26-4-5-14 26" fill="#6693d5"/><path d="M1069 1062l-24-16-5 7 24 15" fill="#7ba9ee"/><path d="M1213 1209l-24-19 1 6 25 18" fill="#587fb8"/><path d="M876 899l5 5 5 7-6-4" fill="#5478ae"/><path d="M1086 1085l-25-15-2 7 25 15" fill="#6a97da"/><path d="M1108 1108l-26-15 0 7 26 14" fill="#648fd0"/><path d="M1895 923l12-25 1-7-13 26" fill="#567cb4"/><path d="M1944 767l13-26-9-3-12 25" fill="#6d9ce2"/><path d="M1871 1030l13-29-1-5-13 28" fill="#5980ba"/><path d="M1919 858l14-26-1-6-15 26" fill="#618bca"/><path d="M869 907l2-6 5 8-2 7" fill="#5c83bf"/><path d="M1907 891l13-26 0-7-13 26" fill="#5b83be"/><path d="M1160 1156l-25-15 3 4 24 16" fill="#5980ba"/><path d="M1942 714l11-24-13-1-10 25" fill="#6b9ae0"/><path d="M870 902l7-2 5 7-7 3" fill="#77aaf7"/><path d="M1187 1182l-23-17 3 5 22 17" fill="#557ab1"/><path d="M1887 958l11-26-3-5-10 26" fill="#5c83bf"/><path d="M1881 993l13-27-3-5-12 27" fill="#5d86c3"/><path d="M1940 797l14-25-6-5-13 26" fill="#6997db"/><path d="M1042 1017l-21-16-6 7 21 16" fill="#7aa5e6"/><path d="M1949 740l13-25-11-2-12 25" fill="#6d9de3"/><path d="M1974 604l-7-1 6-11 7 0" fill="#77aaf7"/><path d="M907 923l-24-15 7 7 24 15" fill="#577db5"/><path d="M1052 1042l-22-15-8 7 24 15" fill="#8fbeff"/><path d="M1977 609l-5-6 7-12 5 6" fill="#6894d4"/><path d="M1214 1212l-25-18 2 5 25 18" fill="#587fb8"/><path d="M1133 1134l-25-15 2 6 25 15" fill="#5d86c2"/><path d="M1065 1066l-24-14-4 6 25 15" fill="#72a0e5"/><path d="M1872 1033l13-28-1-6-13 29" fill="#597fb9"/><path d="M1941 691l10-24-11-2-10 24" fill="#6591d3"/><path d="M1931 829l14-25-2-6-15 26" fill="#648fd0"/><path d="M1894 927l11-25 2-6-12 25" fill="#5479af"/><path d="M1108 1112l-26-14 1 6 26 14" fill="#628ccb"/><path d="M1085 1090l-26-15-1 7 26 14" fill="#6793d6"/><path d="M1949 770l14-26-8-4-13 26" fill="#6c9ae0"/><path d="M1017 998l-21-15 6 5 20 16" fill="#4f72a5"/><path d="M877 926l-4-13 8 7 4 13" fill="#354c6f"/><path d="M1940 668l9-23 3-9-10 24" fill="#4c6e9f"/><path d="M1952 715l12-25-13-1-11 25" fill="#6d9ce2"/><path d="M1189 1185l-23-17 1 5 23 17" fill="#587fb8"/><path d="M1161 1160l-24-16 4 5 23 16" fill="#577db5"/><path d="M1920 862l13-25 0-7-14 26" fill="#5e86c3"/><path d="M1907 895l12-25 1-7-13 26" fill="#587eb7"/><path d="M1890 961l11-26-4-4-11 25" fill="#608ac9"/><path d="M1882 996l13-27-2-5-13 27" fill="#5d86c2"/><path d="M1038 1022l-22-15-9 7 23 15" fill="#99c7ff"/><path d="M1215 1215l-25-18 2 5 26 18" fill="#587fb8"/><path d="M1943 801l14-25-4-6-14 26" fill="#6794d6"/><path d="M1956 743l14-25-10-3-13 25" fill="#6d9de3"/><path d="M879 905l5 4 8 7-5-4" fill="#5072a6"/><path d="M1047 1047l-23-15-7 7 25 15" fill="#85b4f9"/><path d="M1872 1036l13-28-1-5-13 28" fill="#587fb8"/><path d="M1973 630l-4-14 8-11 4 13" fill="#415d87"/><path d="M1135 1138l-26-15 4 5 24 15" fill="#5b82bd"/><path d="M1953 691l11-24-15 0-10 24" fill="#6b9adf"/><path d="M1063 1071l-25-14-3 7 25 14" fill="#6c9add"/><path d="M1895 931l10-25 1-6-11 25" fill="#5478af"/><path d="M1108 1116l-25-14 2 6 25 14" fill="#5f89c7"/><path d="M1932 834l14-26-1-6-14 26" fill="#618bca"/><path d="M873 914l2-7 8 8-2 7" fill="#6089c7"/><path d="M1084 1094l-26-14 0 6 26 15" fill="#6590d1"/><path d="M1189 1188l-22-17 0 6 24 17" fill="#5c84bf"/><path d="M874 909l7-3 7 7-6 3" fill="#77aaf7"/><path d="M1163 1163l-23-16 4 5 22 16" fill="#557ab1"/><path d="M1961 717l13-25-12-2-12 25" fill="#6d9de4"/><path d="M1953 773l14-25-6-5-14 26" fill="#6a98dd"/><path d="M1883 1000l13-27-1-6-14 27" fill="#5d85c1"/><path d="M1022 1002l-20-15-7 7 21 15" fill="#7fabec"/><path d="M1891 964l13-25-4-5-12 26" fill="#608ac9"/><path d="M1906 899l11-25 3-6-13 25" fill="#5579b0"/><path d="M1919 867l13-26 1-6-14 25" fill="#5a82bc"/><path d="M1950 669l10-24-12-1-9 23" fill="#6591d3"/><path d="M1217 1218l-26-18 3 5 25 18" fill="#587eb8"/><path d="M1031 1028l-22-15-9 7 24 15" fill="#9bc9ff"/><path d="M1967 613l-7 0 8-12 7 1" fill="#77aaf7"/><path d="M1872 1040l13-28 0-6-13 28" fill="#587eb7"/><path d="M1948 646l10-23 3-9-10 24" fill="#4b6c9d"/><path d="M943 967l-52-31 13 6 50 31" fill="#283a54"/><path d="M1970 618l-5-6 8-11 5 6" fill="#6d99db"/><path d="M1964 692l12-25-14 0-11 24" fill="#6d9ce2"/><path d="M1962 746l14-25-8-4-14 25" fill="#6c9be1"/><path d="M1043 1053l-24-15-5 7 25 14" fill="#78a7ec"/><path d="M998 984l-22-15 7 5 20 16" fill="#4e70a2"/><path d="M1136 1142l-24-15 4 4 24 16" fill="#587eb7"/><path d="M1944 806l15-26-3-6-14 26" fill="#6490d1"/><path d="M1898 934l11-25-4-5-11 25" fill="#5d85c2"/><path d="M1190 1192l-23-17 0 6 25 16" fill="#5c84c0"/><path d="M1061 1076l-25-14-2 6 26 15" fill="#6895d8"/><path d="M1165 1166l-22-16 3 5 22 16" fill="#5478af"/><path d="M883 932l-3-13 10 7 4 13" fill="#3c567c"/><path d="M1109 1120l-25-14 3 5 25 15" fill="#5d85c1"/><path d="M1084 1099l-26-15 1 6 26 15" fill="#628dcc"/><path d="M1883 1003l14-27-1-5-14 27" fill="#5c84c0"/><path d="M1932 838l14-25 0-7-14 26" fill="#5d86c2"/><path d="M1969 719l13-25-10-3-13 25" fill="#6e9de4"/><path d="M1893 968l13-26-3-5-13 26" fill="#608ac9"/><path d="M1018 1008l-22-15-10 7 23 15" fill="#9ac9ff"/><path d="M1963 669l11-24-16 0-10 24" fill="#6b9adf"/><path d="M1904 904l11-25 3-7-12 25" fill="#5275aa"/><path d="M1956 777l15-25-5-6-14 26" fill="#6794d8"/><path d="M1918 871l13-25 2-7-14 26" fill="#577cb4"/><path d="M1872 1043l13-28 0-5-13 28" fill="#577db5"/><path d="M1025 1033l-23-14-7 7 24 15" fill="#90bfff"/><path d="M1973 694l13-25-12-2-12 25" fill="#6e9de4"/><path d="M1139 1145l-25-15 5 4 24 16" fill="#557ab1"/><path d="M1968 619l-5-4 4-4 5 6" fill="#6e99d9"/><path d="M1040 1058l-25-15-3 7 25 15" fill="#6f9de1"/><path d="M1191 1195l-24-16 1 5 25 16" fill="#5c84c0"/><path d="M1959 647l10-24-12-1-9 23" fill="#6591d3"/><path d="M1966 750l15-26-7-4-14 25" fill="#6a99de"/><path d="M1901 937l12-25-6-4-11 25" fill="#628dcd"/><path d="M1003 988l-20-15-8 7 22 15" fill="#84b0f1"/><path d="M1945 810l14-25-1-7-14 26" fill="#618bc9"/><path d="M1964 616l-6 3 3-8 7 1" fill="#77aaf7"/><path d="M880 915l7-4 10 6-6 5" fill="#77aaf7"/><path d="M1168 1169l-23-16 1 6 22 16" fill="#5a81bc"/><path d="M880 921l1-7 11 6-2 7" fill="#638ece"/><path d="M1884 1006l14-26-1-6-14 27" fill="#5c83bf"/><path d="M1060 1081l-26-14 0 6 26 14" fill="#6591d3"/><path d="M1111 1124l-25-14 4 5 25 14" fill="#5a81bb"/><path d="M1894 971l14-26-3-5-13 26" fill="#6089c8"/><path d="M1010 1014l-22-15-9 8 23 14" fill="#a0cfff"/><path d="M1975 669l12-24-15 0-11 24" fill="#6c9ce2"/><path d="M1084 1103l-25-14 2 5 25 15" fill="#5f89c7"/><path d="M1872 1046l12-27 1-6-13 28" fill="#567bb3"/><path d="M1975 722l14-25-8-3-14 25" fill="#6d9ce3"/><path d="M1904 908l11-24 1-7-11 25" fill="#5276ac"/><path d="M1931 843l14-25 1-7-14 25" fill="#5980ba"/><path d="M978 970l-21-15 7 6 20 15" fill="#4c6e9f"/><path d="M1917 876l11-24 3-7-12 24" fill="#5376ac"/><path d="M1020 1039l-24-14-5 7 25 14" fill="#80aef4"/><path d="M1958 782l14-25-3-7-14 26" fill="#6490d1"/><path d="M1970 614l-2 5-11-1 7-3" fill="#77aaf7"/><path d="M1141 1148l-23-15 5 4 23 16" fill="#5377ac"/><path d="M1968 617l1 8-13-1 2-7" fill="#6997db"/><path d="M1981 696l14-25-11-3-13 25" fill="#6e9ee5"/><path d="M1192 1198l-25-15 2 5 25 15" fill="#5c84bf"/><path d="M1973 646l11-24-17 1-10 24" fill="#6b99df"/><path d="M1903 940l13-25-5-4-12 25" fill="#638ece"/><path d="M1168 1173l-22-16-1 6 23 15" fill="#5f88c6"/><path d="M1884 1010l14-26-1-6-13 26" fill="#5b82bd"/><path d="M998 994l-21-15-11 8 22 14" fill="#9ac8ff"/><path d="M1037 1063l-25-14-2 7 26 13" fill="#6997da"/><path d="M892 938l-4-13 13 5 4 14" fill="#415d87"/><path d="M1872 1050l12-28 1-5-13 27" fill="#557ab1"/><path d="M1970 754l14-25-5-6-14 25" fill="#6895d9"/><path d="M1895 975l15-26-3-5-13 25" fill="#5f89c6"/><path d="M1945 815l14-25 0-7-14 25" fill="#5d85c1"/><path d="M1113 1128l-24-15 5 5 24 14" fill="#577cb4"/><path d="M1985 671l13-25-13-1-12 24" fill="#6e9ee5"/><path d="M1060 1085l-26-14 2 7 25 13" fill="#638dcd"/><path d="M1004 1020l-24-15-8 8 25 14" fill="#99c8ff"/><path d="M1985 613l-2 5-17 1 2-5" fill="#77aaf7"/><path d="M1086 1107l-26-14 4 5 25 14" fill="#5c85c1"/><path d="M1908 911l11-24-5-5-10 24" fill="#5e87c4"/><path d="M1930 848l12-24 3-8-13 25" fill="#557ab1"/><path d="M1980 726l14-25-7-5-14 25" fill="#6b9adf"/><path d="M1914 881l11-24 4-7-12 24" fill="#4f72a6"/><path d="M1983 616l1 8-17 1-1-8" fill="#6e9ee5"/><path d="M984 974l-20-15-8 8 21 15" fill="#89b5f6"/><path d="M1144 1151l-22-15 4 5 22 15" fill="#5276ac"/><path d="M1193 1201l-25-15 2 5 25 15" fill="#5b83bf"/><path d="M1017 1044l-25-14-4 8 25 13" fill="#72a1e6"/><path d="M1986 647l12-25-16 0-11 24" fill="#6c9ce2"/><path d="M1958 787l15-25-1-7-15 25" fill="#618bc9"/><path d="M1884 1013l14-26 0-5-14 26" fill="#5a81bb"/><path d="M889 921l6-4 12 5-6 4" fill="#77aaf7"/><path d="M1905 944l14-25-4-5-13 25" fill="#628dcd"/><path d="M1168 1176l-23-15 0 6 24 15" fill="#5f88c6"/><path d="M1872 1053l11-27 1-6-12 28" fill="#5478ae"/><path d="M990 1000l-23-14-10 8 23 14" fill="#a3d2ff"/><path d="M1988 699l14-25-9-4-13 25" fill="#6d9de4"/><path d="M889 927l1-8 12 6-1 7" fill="#6591d3"/><path d="M958 956l-21-15 8 6 20 15" fill="#4b6c9d"/><path d="M1896 978l14-25-1-6-14 26" fill="#5e87c4"/><path d="M1036 1067l-25-13 0 7 25 13" fill="#6692d4"/><path d="M1116 1131l-24-14 6 4 23 14" fill="#5377ad"/><path d="M2000 613l-3 5-16 0 2-5" fill="#77aaf7"/><path d="M1994 673l14-25-12-2-13 24" fill="#6e9ee6"/><path d="M998 1026l-24-14-6 7 25 14" fill="#86b5fb"/><path d="M1912 914l12-25-7-4-11 25" fill="#6490d1"/><path d="M1971 758l15-24-3-7-14 25" fill="#6590d2"/><path d="M1060 1090l-25-14 3 6 25 13" fill="#5f89c7"/><path d="M1944 820l13-24 2-8-14 25" fill="#587fb8"/><path d="M1088 1111l-25-14 5 5 24 14" fill="#5980b9"/><path d="M1998 616l0 8-16 0-1-7" fill="#6d9de3"/><path d="M1195 1205l-26-15 3 5 25 15" fill="#5b82bd"/><path d="M978 980l-21-14-12 8 22 14" fill="#97c6ff"/><path d="M1147 1154l-22-15 0 6 22 15" fill="#5c83bf"/><path d="M1914 886l11-24 1-7-11 24" fill="#5174a9"/><path d="M1997 648l13-25-14-1-12 24" fill="#6e9ee5"/><path d="M1884 1017l13-26 1-6-14 26" fill="#587fb8"/><path d="M1983 730l15-24-5-6-15 25" fill="#6896d9"/><path d="M1169 1180l-24-15 0 6 25 15" fill="#5f88c6"/><path d="M1014 1050l-25-14-2 7 25 14" fill="#6b98dc"/><path d="M1907 947l14-25-3-5-14 25" fill="#628ccc"/><path d="M903 943l-4-13 14 5 3 13" fill="#43618c"/><path d="M982 1006l-23-14-9 8 24 14" fill="#a0d0ff"/><path d="M1897 982l14-25-1-6-14 25" fill="#5d86c2"/><path d="M1958 792l14-25 1-7-15 25" fill="#5c84c0"/><path d="M1993 703l15-25-7-5-15 25" fill="#6c9ae0"/><path d="M1120 1134l-23-14 6 4 22 14" fill="#5073a8"/><path d="M965 960l-20-14-9 7 21 15" fill="#8db8f9"/><path d="M2013 614l-3 5-15-1 3-5" fill="#77aaf7"/><path d="M1036 1072l-26-13 2 6 25 14" fill="#638ece"/><path d="M1915 917l13-24-6-5-12 25" fill="#6490d1"/><path d="M2001 676l15-25-10-3-14 24" fill="#6e9de5"/><path d="M1091 1114l-25-14 6 5 24 14" fill="#557ab2"/><path d="M994 1031l-25-14-4 8 25 14" fill="#75a4ea"/><path d="M1062 1094l-25-14 4 6 25 13" fill="#5c84c0"/><path d="M2010 618l0 7-14-1 0-8" fill="#6c9be0"/><path d="M939 942l-21-14 8 5 20 15" fill="#4a6a9a"/><path d="M1884 1021l12-26 1-6-13 26" fill="#577db5"/><path d="M969 987l-22-15-11 9 23 14" fill="#a4d3ff"/><path d="M1147 1158l-22-15-2 7 24 14" fill="#618ccb"/><path d="M1972 764l14-25-1-7-14 25" fill="#608ac9"/><path d="M900 926l5-5 13 5-5 5" fill="#77aaf7"/><path d="M1918 888l11-23-5-5-11 24" fill="#5f88c6"/><path d="M1169 1184l-24-15 1 6 25 14" fill="#5e87c5"/><path d="M2007 650l14-25-13-2-13 24" fill="#6e9fe6"/><path d="M899 932l2-8 13 5-1 7" fill="#6693d5"/><path d="M1909 951l14-25-3-6-14 25" fill="#618bca"/><path d="M1897 985l14-25 0-5-15 25" fill="#5c84c0"/><path d="M1012 1055l-25-14 0 7 25 13" fill="#6793d5"/><path d="M1985 735l15-24-3-7-15 25" fill="#6591d2"/><path d="M976 1013l-25-14-6 8 25 13" fill="#8dbdff"/><path d="M1123 1137l-22-15 5 5 22 15" fill="#5174a9"/><path d="M959 967l-21-15-14 8 23 15" fill="#94c2ff"/><path d="M1918 920l14-24-6-5-12 25" fill="#6490d1"/><path d="M1037 1077l-26-14 3 6 26 14" fill="#5f89c7"/><path d="M2025 617l-5 4-12-2 3-5" fill="#77aaf7"/><path d="M1883 1024l12-25 2-6-13 26" fill="#557ab2"/><path d="M1997 707l15-24-6-6-14 25" fill="#6996da"/><path d="M1094 1118l-24-14 7 4 23 14" fill="#5175a9"/><path d="M1147 1162l-23-14-1 6 23 14" fill="#618ccb"/><path d="M1065 1098l-25-14 5 5 24 14" fill="#587eb7"/><path d="M2021 620l-1 7-12-2 0-8" fill="#6a98dc"/><path d="M960 993l-23-14-9 8 24 14" fill="#a6d6ff"/><path d="M991 1037l-26-14-2 8 25 13" fill="#6c9ade"/><path d="M1170 1187l-25-14 2 6 25 13" fill="#5e87c3"/><path d="M1923 891l12-24-7-4-11 24" fill="#6592d3"/><path d="M2007 680l15-25-8-5-14 25" fill="#6c9be1"/><path d="M1909 954l15-24-2-6-14 25" fill="#608ac8"/><path d="M946 947l-20-15-9 8 21 14" fill="#8fbbfc"/><path d="M1897 989l14-25 0-6-14 25" fill="#5a82bc"/><path d="M911 936l1-8 6 2-3 6" fill="#648fd0"/><path d="M1924 864l10-24 3-7-12 24" fill="#4f72a5"/><path d="M911 930l5-5 8 5-7 1" fill="#77aaf7"/><path d="M2015 653l14-25-10-3-14 24" fill="#6e9ee5"/><path d="M1127 1140l-21-15-2 7 23 14" fill="#5d85c1"/><path d="M1012 1060l-25-14 1 7 26 13" fill="#638ece"/><path d="M948 973l-22-14-12 9 23 14" fill="#a4d3ff"/><path d="M971 1018l-25-13-5 8 25 13" fill="#79a8ee"/><path d="M1882 1028l12-25 2-6-13 25" fill="#5478ae"/><path d="M1920 924l14-24-4-6-13 25" fill="#638fcf"/><path d="M1146 1166l-23-14-1 6 25 14" fill="#618bca"/><path d="M1038 1081l-25-13 5 5 25 14" fill="#5b83bf"/><path d="M1171 1191l-25-14 2 5 25 14" fill="#5d85c2"/><path d="M916 930l8-1-8 7-5-3" fill="#77aaf7"/><path d="M2034 620l-5 4-11-3 5-5" fill="#77aaf7"/><path d="M1896 993l14-25 1-6-14 25" fill="#597fb9"/><path d="M1927 894l13-24-7-4-12 24" fill="#6692d4"/><path d="M922 929l6 4-10 8-4-6" fill="#88b5f9"/><path d="M1998 712l15-24-3-7-14 25" fill="#6591d2"/><path d="M1910 958l15-24-1-6-15 24" fill="#5e88c5"/><path d="M953 1000l-24-14-7 8 25 13" fill="#94c4ff"/><path d="M939 953l-21-14-14 8 22 14" fill="#90beff"/><path d="M2030 623l-2 7-10-3 1-8" fill="#6793d6"/><path d="M989 1042l-26-13 0 7 26 13" fill="#6794d6"/><path d="M1929 866l11-23-6-4-11 23" fill="#6089c7"/><path d="M2010 684l15-24-5-6-15 24" fill="#6997db"/><path d="M1882 1031l11-24 2-6-12 25" fill="#5276ab"/><path d="M1127 1144l-22-14-3 7 23 14" fill="#648fcf"/><path d="M2020 657l15-24-8-5-14 24" fill="#6c9ce2"/><path d="M939 980l-23-14-10 9 24 13" fill="#abdaff"/><path d="M912 932l5 3-14 9-5-4" fill="#77aaf7"/><path d="M1922 928l15-25-4-5-14 24" fill="#628dcd"/><path d="M1013 1064l-25-13 3 6 25 13" fill="#5f89c7"/><path d="M967 1024l-25-13-3 8 26 13" fill="#6d9be0"/><path d="M1173 1194l-26-14 3 5 25 14" fill="#5c84bf"/><path d="M1147 1170l-25-14 1 7 24 13" fill="#608ac9"/><path d="M1103 1124l-22-15 5 5 22 14" fill="#5072a6"/><path d="M1895 997l14-25 1-6-14 25" fill="#577db5"/><path d="M916 933l4 7-15 9-3-7" fill="#a9d9ff"/><path d="M1910 962l15-24-1-6-14 24" fill="#5d85c1"/><path d="M1931 898l13-24-5-5-13 24" fill="#6692d4"/><path d="M928 960l-22-14-13 9 23 14" fill="#a2d1ff"/><path d="M1881 1035l11-25 1-5-11 24" fill="#5074a8"/><path d="M948 1006l-25-13-5 8 25 13" fill="#7dacf2"/><path d="M1934 869l12-24-8-3-11 23" fill="#6693d5"/><path d="M1933 842l11-23 3-7-11 23" fill="#4e70a2"/><path d="M988 1047l-25-13 2 7 25 13" fill="#638fcf"/><path d="M2042 625l-7 4-8-5 6-5" fill="#77aaf7"/><path d="M1126 1149l-23-14-2 7 23 13" fill="#648fcf"/><path d="M2036 627l-2 7-7-5 1-7" fill="#638ece"/><path d="M900 939l5 3-14 9-5-3" fill="#77aaf7"/><path d="M2012 690l15-24-3-8-15 25" fill="#6591d3"/><path d="M1923 931l15-24-2-5-15 24" fill="#618bca"/><path d="M1174 1197l-25-13 4 5 24 13" fill="#5b82bd"/><path d="M931 987l-24-13-8 8 25 13" fill="#9bcaff"/><path d="M1894 1001l13-24 2-6-13 24" fill="#557ab1"/><path d="M1147 1174l-25-13 2 5 25 14" fill="#6089c7"/><path d="M1107 1126l-21-14-2 7 22 14" fill="#5e87c3"/><path d="M2024 662l15-25-5-6-15 25" fill="#6997dc"/><path d="M1910 966l14-24 1-6-15 24" fill="#5b83be"/><path d="M903 941l4 7-13 8-4-6" fill="#a8d7ff"/><path d="M965 1030l-25-13-1 7 26 13" fill="#6894d7"/><path d="M1933 901l15-24-5-5-14 24" fill="#6591d2"/><path d="M917 968l-23-14-11 9 24 13" fill="#aedeff"/><path d="M1939 872l13-24-7-3-13 23" fill="#6793d6"/><path d="M1939 845l11-23-6-5-11 23" fill="#608ac8"/><path d="M1125 1153l-24-13-1 6 24 13" fill="#638ece"/><path d="M944 1012l-25-13-3 8 25 13" fill="#6e9de2"/><path d="M2050 635l-5-4-7-7 6 3" fill="#5174a9"/><path d="M1893 1005l12-24 3-6-13 24" fill="#5276ac"/><path d="M1924 935l15-23-2-6-14 24" fill="#5f89c7"/><path d="M1148 1178l-25-13 2 5 25 13" fill="#5e88c5"/><path d="M888 947l5 3-11 9-6-2" fill="#77aaf7"/><path d="M2041 632l-3 7-5-6 2-7" fill="#5e87c4"/><path d="M1909 970l14-24 1-6-14 24" fill="#597fb9"/><path d="M1107 1131l-22-14-4 7 23 14" fill="#6692d3"/><path d="M925 993l-25-13-5 9 25 13" fill="#81b0f6"/><path d="M2047 631l-8 3-5-7 6-3" fill="#77aaf7"/><path d="M892 949l4 6-11 9-5-6" fill="#9ccbff"/><path d="M2012 696l15-24 0-8-15 24" fill="#608ac8"/><path d="M1935 905l15-24-3-5-15 24" fill="#648fd0"/><path d="M1083 1110l-22-13 6 4 21 14" fill="#4e70a3"/><path d="M965 1035l-26-13 2 7 25 13" fill="#648fcf"/><path d="M2026 667l15-24-3-7-15 24" fill="#6591d3"/><path d="M909 975l-24-14-9 9 25 13" fill="#a1d1ff"/><path d="M1943 875l14-23-6-5-13 24" fill="#6793d6"/><path d="M1943 821l11-23 3-8-11 23" fill="#4c6e9f"/><path d="M1945 847l13-23-10-3-11 23" fill="#6794d6"/><path d="M1124 1157l-24-13 0 7 25 12" fill="#628dcd"/><path d="M1924 940l14-24 0-6-15 23" fill="#5d86c3"/><path d="M1149 1181l-25-13 3 6 25 12" fill="#5d86c2"/><path d="M942 1018l-26-13 0 8 25 12" fill="#6895d8"/><path d="M1908 974l13-23 3-7-15 24" fill="#567cb4"/><path d="M1105 1136l-23-14-3 7 24 14" fill="#6692d3"/><path d="M877 955l6 2-8 9-7-1" fill="#77aaf7"/><path d="M921 1000l-25-13-4 8 26 13" fill="#709ee3"/><path d="M1937 909l15-23-3-6-14 23" fill="#628dcd"/><path d="M1088 1113l-21-13-3 6 22 14" fill="#5f88c5"/><path d="M882 956l4 7-8 8-5-6" fill="#85b3f7"/><path d="M2052 642l-5-5-3-8 5 4" fill="#567cb4"/><path d="M1891 1012l10-23 3-6-12 24" fill="#5072a6"/><path d="M2042 638l-2 7-3-7 3-7" fill="#597fb9"/><path d="M1947 879l14-23-5-5-14 23" fill="#6692d4"/><path d="M1124 1161l-24-12 1 6 24 12" fill="#618bca"/><path d="M1949 823l12-22-8-4-10 22" fill="#608ac9"/><path d="M2049 638l-8 2-3-8 8-3" fill="#77aaf7"/><path d="M1951 850l14-23-9-4-12 23" fill="#6795d8"/><path d="M902 981l-24-13-7 9 25 13" fill="#85b4fb"/><path d="M1151 1185l-25-13 4 5 24 13" fill="#5c83bf"/><path d="M1923 944l15-24 1-6-15 24" fill="#5b83be"/><path d="M1906 978l13-23 3-6-14 23" fill="#5478af"/><path d="M2026 673l15-23 0-9-15 24" fill="#608ac8"/><path d="M1103 1141l-23-13-2 7 24 12" fill="#6590d1"/><path d="M2055 661l-4-13 0-10 4 14" fill="#2d405e"/><path d="M1891 1016l12-23-1-6-11 23" fill="#567bb3"/><path d="M1937 913l16-23-2-6-15 23" fill="#608ac9"/><path d="M1087 1118l-22-13-5 7 23 13" fill="#6995d7"/><path d="M869 963l7 2-6 8-8 0" fill="#77aaf7"/><path d="M1063 1098l-22-14 7 5 21 13" fill="#4d6ea0"/><path d="M1125 1165l-25-12 2 6 25 12" fill="#6089c8"/><path d="M918 1006l-25-13-1 8 26 12" fill="#6896d9"/><path d="M874 964l5 6-6 8-5-5" fill="#6f9bdd"/><path d="M1904 982l12-23 4-6-13 23" fill="#5174a9"/><path d="M1153 1188l-25-12 5 4 24 13" fill="#5a81bb"/><path d="M1949 883l15-23-4-6-15 24" fill="#6591d2"/><path d="M1957 826l12-23-10-3-11 23" fill="#6794d7"/><path d="M1922 948l14-23 2-7-15 24" fill="#597fb9"/><path d="M1956 854l14-24-7-4-13 23" fill="#6795d8"/><path d="M2042 645l-2 6 0-8 2-6" fill="#5478ae"/><path d="M897 988l-25-13-3 9 25 12" fill="#71a0e5"/><path d="M2052 650l-5-5 0-10 5 5" fill="#5c83bf"/><path d="M1102 1145l-24-12-1 6 25 13" fill="#648fd0"/><path d="M2024 680l14-24 3-8-15 23" fill="#5a81bb"/><path d="M2048 645l-7 1 0-8 7-2" fill="#77aaf7"/><path d="M1937 918l15-24 0-6-15 23" fill="#5e87c4"/><path d="M1084 1123l-23-13-3 8 23 12" fill="#6995d7"/><path d="M1156 1191l-25-12 5 4 24 12" fill="#587eb6"/><path d="M1126 1169l-25-12 3 6 25 12" fill="#5e87c4"/><path d="M1068 1101l-21-14-3 7 22 14" fill="#6089c7"/><path d="M1960 802l11-22-8-4-11 22" fill="#618bca"/><path d="M1951 887l15-23-3-6-15 23" fill="#638ecf"/><path d="M1964 829l13-23-10-4-12 23" fill="#6895d9"/><path d="M1960 857l15-23-6-5-14 23" fill="#6794d6"/><path d="M2052 670l-4-14 3-10 4 13" fill="#364e71"/><path d="M917 1011l-25-12 2 8 25 12" fill="#648fd0"/><path d="M863 971l8 1-4 8-8 1" fill="#77aaf7"/><path d="M869 971l5 5-4 9-5-5" fill="#638dcc"/><path d="M1102 1150l-25-13 1 7 24 12" fill="#628dcd"/><path d="M895 994l-26-12 0 8 25 12" fill="#6996da"/><path d="M1901 991l10-23 3-6-11 23" fill="#4e70a3"/><path d="M1876 1121l32-83 3-6-34 84" fill="#273952"/><path d="M2039 652l-2 6 3-9 2-6" fill="#4f71a5"/><path d="M2008 735l31-49 9-11-33 50" fill="#293a55"/><path d="M1128 1173l-25-12 4 5 24 12" fill="#5c84c0"/><path d="M1082 1129l-24-13-2 7 24 13" fill="#6793d5"/><path d="M1067 1106l-22-13-5 7 22 13" fill="#6d9adc"/><path d="M1968 805l13-23-12-3-11 23" fill="#6895d8"/><path d="M1951 892l16-23-2-7-15 23" fill="#618bca"/><path d="M2049 658l-5-5 3-10 5 5" fill="#618bc9"/><path d="M2045 653l-7 0 3-9 8-1" fill="#77aaf7"/><path d="M1969 832l14-23-8-4-13 23" fill="#6896d9"/><path d="M1963 861l15-23-5-5-14 23" fill="#6692d4"/><path d="M859 984l2-6-1 9-2 7" fill="#5376ac"/><path d="M1874 1125l31-82 4-6-33 82" fill="#283a54"/><path d="M1902 995l11-23-2-6-10 23" fill="#577db6"/><path d="M1102 1154l-25-12 2 6 25 12" fill="#618bca"/><path d="M919 1017l-26-12 5 6 25 12" fill="#5f88c5"/><path d="M866 978l5 5-1 8-5-5" fill="#5d85c1"/><path d="M860 979l7-1 0 9-8 1" fill="#77aaf7"/><path d="M1080 1134l-24-13-1 8 24 11" fill="#6591d2"/><path d="M2046 678l-3-13 6-10 3 13" fill="#3e5981"/><path d="M894 1000l-26-12 3 7 25 12" fill="#648fd0"/><path d="M1970 782l12-22-9-4-11 22" fill="#618bca"/><path d="M1063 1111l-22-12-5 7 23 13" fill="#6c99db"/><path d="M1049 1088l-21-13-3 7 21 13" fill="#628bc9"/><path d="M862 1003l-4-13 3 9 3 13" fill="#25354e"/><path d="M1873 1128l28-81 5-6-31 82" fill="#293b55"/><path d="M1976 808l13-23-10-3-13 22" fill="#6896da"/><path d="M2001 743l29-48 11-11-31 49" fill="#2a3d58"/><path d="M1974 836l14-23-6-5-14 23" fill="#6895d8"/><path d="M1965 866l15-23-3-6-15 23" fill="#6490d0"/><path d="M1903 998l12-22-3-6-11 23" fill="#5d85c1"/><path d="M1103 1158l-25-12 3 6 25 12" fill="#5f88c6"/><path d="M2040 662l-7-1 6-9 7 0" fill="#77aaf7"/><path d="M2044 667l-5-6 6-10 5 5" fill="#6893d4"/><path d="M1263 1298l-71-54 6 4 70 53" fill="#273952"/><path d="M1871 1132l26-81 6-6-29 81" fill="#293b56"/><path d="M1079 1138l-24-11 0 6 24 12" fill="#648fcf"/><path d="M865 984l5 5 2 7-5-4" fill="#577db6"/><path d="M858 992l2-7 3 9-2 7" fill="#587eb7"/><path d="M1980 784l12-22-12-3-12 22" fill="#6895d8"/><path d="M1060 1117l-23-12-3 7 23 12" fill="#6996d8"/><path d="M1047 1094l-21-13-7 8 23 12" fill="#729fe1"/><path d="M859 986l7-1 3 8-8 2" fill="#77aaf7"/><path d="M895 1006l-25-12 5 6 25 12" fill="#5f88c5"/><path d="M1982 811l14-23-9-4-13 23" fill="#6996da"/><path d="M1966 870l15-22-1-7-16 23" fill="#628ccc"/><path d="M1977 840l15-23-5-5-15 23" fill="#6793d6"/><path d="M2039 687l-4-13 9-11 4 14" fill="#44618d"/><path d="M1870 1135l23-80 6-5-27 80" fill="#2a3c58"/><path d="M1266 1300l-70-53 6 3 69 53" fill="#283a54"/><path d="M863 1010l-3-13 6 8 3 13" fill="#304564"/><path d="M1981 761l11-22-9-4-11 22" fill="#618bca"/><path d="M1079 1143l-24-12 1 7 25 11" fill="#628ccc"/><path d="M1030 1076l-21-13-4 8 22 12" fill="#638dcb"/><path d="M1868 1139l21-80 5-5-23 80" fill="#2a3d58"/><path d="M2033 671l-7-2 8-9 7 0" fill="#77aaf7"/><path d="M1988 787l14-23-12-3-12 22" fill="#6996da"/><path d="M1912 974l12-22-3-6-10 22" fill="#587fb8"/><path d="M1058 1122l-24-11-2 7 24 11" fill="#6793d5"/><path d="M1043 1100l-23-13-5 8 23 12" fill="#709de0"/><path d="M1269 1302l-69-52 7 2 67 53" fill="#293b55"/><path d="M2036 676l-5-6 9-11 5 6" fill="#75a1e4"/><path d="M866 991l6 4 5 6-5-3" fill="#5276ab"/><path d="M1987 815l15-23-7-5-14 23" fill="#6896da"/><path d="M1979 844l16-22-4-6-15 22" fill="#6591d2"/><path d="M899 1011l-25-12 7 6 25 11" fill="#597fb8"/><path d="M860 999l2-7 6 8-2 7" fill="#5d86c2"/><path d="M861 993l7-2 5 7-7 3" fill="#77aaf7"/><path d="M1866 1142l21-80 3-4-21 79" fill="#293b56"/><path d="M1273 1304l-67-52 7 2 65 53" fill="#293b56"/><path d="M1991 763l13-22-14-2-11 22" fill="#6895d8"/><path d="M2030 697l-4-14 11-10 3 13" fill="#486796"/><path d="M1915 978l12-22-4-6-12 22" fill="#5e88c5"/><path d="M1028 1082l-22-13-7 9 22 12" fill="#76a2e5"/><path d="M1057 1127l-24-11-1 7 25 11" fill="#6590d2"/><path d="M1995 790l15-22-10-4-14 22" fill="#6997db"/><path d="M1039 1106l-23-12-4 8 23 11" fill="#6c99dc"/><path d="M1864 1146l22-81 2-5-21 81" fill="#283953"/><path d="M868 1017l-4-14 9 7 4 13" fill="#395277"/><path d="M1991 819l15-23-5-5-15 22" fill="#6794d7"/><path d="M2024 680l-7-2 11-10 6 1" fill="#77aaf7"/><path d="M1276 1306l-65-53 8 2 62 54" fill="#2a3c58"/><path d="M937 1049l-53-24 13 4 52 25" fill="#293b56"/><path d="M1991 741l12-22-10-3-11 21" fill="#618bca"/><path d="M2027 685l-5-6 11-11 4 6" fill="#85b3f7"/><path d="M2001 766l13-22-12-3-13 22" fill="#6996da"/><path d="M1916 981l13-21-3-6-12 22" fill="#5f88c5"/><path d="M1011 1064l-20-13-5 8 21 13" fill="#658ecc"/><path d="M864 1005l2-7 9 7-2 7" fill="#618ccb"/><path d="M865 1000l7-4 8 6-6 4" fill="#77aaf7"/><path d="M1279 1308l-62-53 8 1 59 56" fill="#2b3d59"/><path d="M1056 1132l-24-11 1 7 25 11" fill="#638ece"/><path d="M1022 1088l-22-12-6 9 23 11" fill="#74a1e4"/><path d="M2019 706l-3-14 11-10 4 13" fill="#4a6b9b"/><path d="M1036 1111l-24-11-2 8 24 11" fill="#6895d7"/><path d="M2001 794l15-23-8-4-14 22" fill="#6997db"/><path d="M1993 824l16-23-4-6-15 22" fill="#6592d3"/><path d="M2003 743l12-22-14-2-12 22" fill="#6895d8"/><path d="M1923 954l11-22-3-5-11 21" fill="#5980ba"/><path d="M1283 1311l-60-55 8 1 57 56" fill="#2b3e5a"/><path d="M875 1022l-3-13 11 5 4 13" fill="#415d87"/><path d="M2014 689l-6-2 11-10 6 2" fill="#77aaf7"/><path d="M947 1053l-52-24 16 3 49 24" fill="#2b3d59"/><path d="M2017 694l-5-6 12-10 4 6" fill="#91bfff"/><path d="M2009 769l14-22-11-4-13 22" fill="#6997dc"/><path d="M1008 1070l-21-12-8 9 22 12" fill="#79a5e8"/><path d="M1286 1313l-57-56 5 1 58 57" fill="#2a3c57"/><path d="M2002 721l11-22-11-3-10 21" fill="#618bca"/><path d="M1160 1194l-21-12 2 6 21 12" fill="#577db5"/><path d="M1018 1095l-23-12-5 8 23 12" fill="#6f9cdf"/><path d="M1034 1117l-24-11-1 7 25 11" fill="#6692d4"/><path d="M2005 798l16-22-7-6-14 23" fill="#6895d9"/><path d="M872 1005l6-4 10 5-5 4" fill="#77aaf7"/><path d="M872 1011l1-7 11 5-1 7" fill="#6591d3"/><path d="M1926 957l12-21-5-5-11 21" fill="#608ac8"/><path d="M2014 695l-6-4 6-4 4 6" fill="#75a1e4"/><path d="M2010 691l-7 2 6-7 6 2" fill="#77aaf7"/><path d="M1290 1314l-58-56 4 3 59 56" fill="#293a55"/><path d="M2013 746l14-22-14-3-12 22" fill="#6997db"/><path d="M992 1052l-20-12-5 8 21 12" fill="#6690ce"/><path d="M1856 1160l29-78 1-6-27 79" fill="#273852"/><path d="M885 1027l-4-14 14 4 3 14" fill="#466592"/><path d="M1161 1198l-20-12 0 6 21 12" fill="#5d86c2"/><path d="M1002 1077l-22-12-8 9 23 12" fill="#78a5e8"/><path d="M2015 773l15-22-9-5-14 22" fill="#6997dc"/><path d="M2016 690l-4 5-9-3 7-2" fill="#77aaf7"/><path d="M2013 694l0 7-11-3 2-7" fill="#6591d2"/><path d="M1294 1316l-59-57 3 5 61 55" fill="#273851"/><path d="M2014 723l13-22-16-2-11 22" fill="#6895d8"/><path d="M1014 1101l-23-11-4 8 25 10" fill="#6a97da"/><path d="M1928 961l14-21-5-5-12 21" fill="#608ac8"/><path d="M881 1010l6-5 12 4-4 5" fill="#77aaf7"/><path d="M1854 1164l29-78 3-6-29 78" fill="#283953"/><path d="M881 1015l1-7 13 4 0 7" fill="#6895d8"/><path d="M2022 749l14-22-11-4-14 22" fill="#6a98dc"/><path d="M989 1059l-21-13-10 10 22 12" fill="#7ba8ea"/><path d="M1933 934l12-21-4-6-11 21" fill="#5a81bc"/><path d="M1297 1318l-60-55 4 5 62 53" fill="#273852"/><path d="M1162 1202l-21-12 0 7 22 11" fill="#5d86c3"/><path d="M2030 692l-4 5-16-2 4-5" fill="#77aaf7"/><path d="M996 1084l-22-12-6 9 24 11" fill="#729fe3"/><path d="M2026 695l0 8-15-2 0-8" fill="#6b99de"/><path d="M2020 778l15-22-7-6-15 22" fill="#6896da"/><path d="M1851 1167l30-76 3-6-29 77" fill="#283a54"/><path d="M896 1030l-3-13 15 3 4 13" fill="#4a6a9b"/><path d="M1012 1107l-24-11-1 7 24 11" fill="#6793d5"/><path d="M1930 966l14-21-4-6-13 21" fill="#608ac8"/><path d="M2026 725l13-22-14-2-13 21" fill="#6997db"/><path d="M974 1041l-21-13-6 9 21 12" fill="#6892d0"/><path d="M1301 1320l-61-54 4 5 63 51" fill="#283953"/><path d="M1141 1183l-20-13 1 7 21 12" fill="#587eb7"/><path d="M893 1013l4-5 15 3-4 5" fill="#77aaf7"/><path d="M1937 938l13-21-6-5-12 21" fill="#618bca"/><path d="M2029 753l15-22-10-5-14 22" fill="#6a98dd"/><path d="M982 1066l-22-12-9 10 23 11" fill="#7ba8ec"/><path d="M1849 1170l29-75 4-6-29 76" fill="#293b55"/><path d="M893 1019l0-8 16 3-1 8" fill="#6a98dc"/><path d="M2043 695l-5 4-14-2 4-5" fill="#77aaf7"/><path d="M992 1090l-23-11-4 9 24 10" fill="#6c99dc"/><path d="M1305 1322l-62-52 5 4 63 50" fill="#283953"/><path d="M2039 698l-1 7-14-2 0-8" fill="#6a98dc"/><path d="M2022 782l16-21-4-7-16 22" fill="#6793d6"/><path d="M910 1033l-4-13 16 2 3 13" fill="#4c6e9f"/><path d="M2035 728l15-21-13-4-13 22" fill="#6a98dd"/><path d="M1846 1174l29-74 4-6-29 75" fill="#2a3c57"/><path d="M1142 1187l-20-12-1 7 22 11" fill="#5f88c5"/><path d="M970 1047l-21-12-11 10 22 12" fill="#7ca9ec"/><path d="M1940 942l14-21-6-5-12 20" fill="#618ccb"/><path d="M1309 1323l-63-50 6 3 63 50" fill="#293a54"/><path d="M906 1016l4-5 15 2-3 5" fill="#77aaf7"/><path d="M2034 757l15-22-7-5-15 22" fill="#6997db"/><path d="M975 1073l-22-11-7 9 24 11" fill="#75a3e6"/><path d="M1844 1177l27-73 5-6-28 74" fill="#2a3c58"/><path d="M906 1022l1-8 15 2 0 8" fill="#6b99de"/><path d="M1944 915l12-21-5-5-11 20" fill="#5b82bd"/><path d="M955 1029l-20-12-7 9 21 12" fill="#6a94d2"/><path d="M2054 698l-5 5-13-4 5-5" fill="#77aaf7"/><path d="M990 1097l-24-11-2 8 25 10" fill="#6894d7"/><path d="M2024 788l15-22-2-7-15 22" fill="#648fd0"/><path d="M2050 701l-1 7-12-3 0-8" fill="#6895d8"/><path d="M1142 1191l-21-11 0 7 22 11" fill="#5f88c6"/><path d="M1313 1325l-63-50 7 4 62 48" fill="#293b55"/><path d="M2043 732l15-21-10-5-15 22" fill="#6a98dd"/><path d="M1841 1181l25-73 6-6-27 74" fill="#2b3d59"/><path d="M961 1055l-21-11-10 10 23 11" fill="#7eabee"/><path d="M920 1018l3-6 10 3-7 2" fill="#77aaf7"/><path d="M920 1024l0-8 7 0-2 6" fill="#6794d6"/><path d="M1943 946l14-20-4-6-14 20" fill="#618bca"/><path d="M1123 1172l-20-12 1 7 20 11" fill="#597fb9"/><path d="M1949 919l12-21-7-5-11 20" fill="#628ccb"/><path d="M1317 1327l-62-49 7 3 61 48" fill="#2a3c57"/><path d="M2037 762l16-22-5-6-15 22" fill="#6794d7"/><path d="M971 1080l-24-11-4 9 24 11" fill="#6e9bdf"/><path d="M1838 1184l23-72 7-6-26 73" fill="#2b3e5a"/><path d="M931 1014l5 4-6 9-5-6" fill="#6c97d8"/><path d="M925 1017l8-3-6 8-7-2" fill="#77aaf7"/><path d="M950 1036l-20-12-12 11 22 11" fill="#7daaec"/><path d="M2064 703l-6 4-11-5 5-5" fill="#77aaf7"/><path d="M2059 705l-2 7-10-4 1-8" fill="#6591d3"/><path d="M1836 1188l20-73 7-5-23 73" fill="#2c3f5b"/><path d="M1321 1328l-61-48 7 2 60 48" fill="#2a3c58"/><path d="M2048 737l16-22-8-5-15 21" fill="#6997dc"/><path d="M954 1063l-22-11-7 9 23 11" fill="#79a6ea"/><path d="M1124 1176l-20-11-2 7 21 11" fill="#6089c7"/><path d="M1833 1191l17-72 8-5-21 72" fill="#2c405c"/><path d="M1953 923l13-21-6-5-13 20" fill="#628dcd"/><path d="M922 1019l6 2-11 10-7-2" fill="#77aaf7"/><path d="M1325 1330l-60-48 8 2 59 48" fill="#2b3d59"/><path d="M2038 768l16-22-2-7-16 21" fill="#6490d0"/><path d="M968 1087l-24-11-2 9 24 10" fill="#6996d8"/><path d="M1955 896l11-20-5-6-11 20" fill="#5b83be"/><path d="M927 1020l4 6-11 10-5-6" fill="#91bfff"/><path d="M941 1045l-21-12-11 10 23 11" fill="#80adf1"/><path d="M1830 1195l15-73 7-4-18 72" fill="#2d405d"/><path d="M1330 1331l-59-48 8 1 57 49" fill="#2b3e5a"/><path d="M2065 710l-2 7-8-6 2-7" fill="#618ccb"/><path d="M2071 708l-7 3-8-5 6-5" fill="#77aaf7"/><path d="M2052 742l16-21-6-7-15 22" fill="#6895d8"/><path d="M1827 1198l15-73 4-4-15 72" fill="#2c3f5b"/><path d="M1123 1181l-21-11-1 8 22 10" fill="#608ac8"/><path d="M949 1070l-23-10-5 9 24 10" fill="#709de1"/><path d="M1956 927l14-20-5-6-14 20" fill="#628dcc"/><path d="M1334 1332l-57-48 8 1 55 49" fill="#2c3f5b"/><path d="M2038 773l15-21 1-8-16 22" fill="#608ac8"/><path d="M1960 900l13-20-8-5-12 20" fill="#628dcd"/><path d="M912 1027l6 2-10 11-7-2" fill="#77aaf7"/><path d="M966 1093l-24-10 0 7 25 10" fill="#6592d3"/><path d="M1105 1161l-20-12 0 7 20 11" fill="#5980ba"/><path d="M1824 1201l16-73 3-5-15 74" fill="#2b3d59"/><path d="M917 1028l4 7-10 10-5-6" fill="#85b3f7"/><path d="M1338 1334l-55-49 9 0 53 51" fill="#2c405c"/><path d="M933 1053l-22-11-8 10 23 10" fill="#7ca9ed"/><path d="M2079 718l-6-4-6-8 6 4" fill="#5276ab"/><path d="M1820 1205l19-73 2-6-16 74" fill="#293b56"/><path d="M2069 716l-2 6-5-6 2-7" fill="#5d86c2"/><path d="M2053 748l16-22-2-7-16 21" fill="#6490d1"/><path d="M1343 1335l-53-50 9 0 50 52" fill="#2d405d"/><path d="M2075 714l-7 3-6-7 7-3" fill="#77aaf7"/><path d="M945 1077l-23-10-3 9 24 9" fill="#6a97da"/><path d="M1105 1166l-20-12-2 9 21 10" fill="#618bc9"/><path d="M1965 904l14-20-8-6-12 21" fill="#638ece"/><path d="M1965 878l12-20-6-6-11 20" fill="#5c83bf"/><path d="M1347 1336l-50-51 8 0 49 53" fill="#2d415e"/><path d="M1817 1208l20-71 3-7-18 73" fill="#293b56"/><path d="M903 1037l6 1-8 10-7-1" fill="#77aaf7"/><path d="M908 1037l4 6-7 10-5-6" fill="#75a1e4"/><path d="M1352 1337l-49-53 6 1 49 54" fill="#2c3f5c"/><path d="M927 1061l-23-11-5 10 24 10" fill="#72a0e4"/><path d="M1814 1211l21-70 3-6-20 72" fill="#2a3c57"/><path d="M2081 725l-6-4-3-9 6 4" fill="#577db6"/><path d="M2071 722l-3 6-2-7 2-7" fill="#587eb7"/><path d="M2052 754l16-21 1-9-16 22" fill="#608ac8"/><path d="M1356 1339l-49-54 6 2 50 53" fill="#2b3e5a"/><path d="M944 1083l-25-9 0 8 25 9" fill="#6692d4"/><path d="M1104 1171l-21-10-2 8 22 10" fill="#618bca"/><path d="M2077 721l-8 2-2-8 7-3" fill="#77aaf7"/><path d="M1972 881l13-20-10-5-11 20" fill="#638dcd"/><path d="M1087 1150l-20-11 0 8 20 10" fill="#5a81bb"/><path d="M1810 1215l22-70 4-6-21 71" fill="#2a3c58"/><path d="M1361 1340l-50-54 5 4 52 51" fill="#2a3c57"/><path d="M2082 745l-4-14 1-9 4 13" fill="#2f4362"/><path d="M895 1046l7 0-5 10-8 0" fill="#77aaf7"/><path d="M901 1046l5 5-6 10-5-6" fill="#6893d4"/><path d="M923 1068l-24-10-2 9 24 9" fill="#6b98dc"/><path d="M1807 1218l21-68 5-6-21 69" fill="#2a3d58"/><path d="M2049 760l16-21 4-8-16 21" fill="#5b82bd"/><path d="M1366 1341l-51-53 6 4 51 50" fill="#2a3c58"/><path d="M2070 728l-3 6 1-8 2-6" fill="#5376ac"/><path d="M944 1089l-25-9 3 7 24 9" fill="#638ece"/><path d="M1976 859l12-20-7-5-11 19" fill="#5c84bf"/><path d="M2079 733l-5-5 1-9 5 4" fill="#5d85c1"/><path d="M1977 886l14-20-8-6-13 20" fill="#638ecf"/><path d="M1087 1155l-20-10-3 8 20 11" fill="#628ccb"/><path d="M2076 729l-8 0 1-8 8-2" fill="#77aaf7"/><path d="M1803 1221l22-67 5-6-22 68" fill="#2b3e59"/><path d="M889 1059l3-6-4 10-2 6" fill="#4f71a5"/><path d="M2031 811l33-44 10-9-35 44" fill="#293b56"/><path d="M1370 1342l-51-51 6 3 52 49" fill="#2a3d58"/><path d="M896 1053l5 6-3 9-5-5" fill="#618bc9"/><path d="M890 1054l8 0-3 9-8 1" fill="#77aaf7"/><path d="M2079 753l-4-14 4-9 4 13" fill="#395277"/><path d="M1799 1224l21-66 6-5-21 67" fill="#2b3e5a"/><path d="M921 1074l-24-9 0 8 24 9" fill="#6793d5"/><path d="M1375 1342l-52-48 7 2 52 48" fill="#2b3d59"/><path d="M945 1095l-24-10 5 6 24 10" fill="#5f88c5"/><path d="M1983 863l13-20-10-5-12 20" fill="#638ece"/><path d="M1796 1227l19-65 7-5-21 66" fill="#2c3f5b"/><path d="M1085 1162l-21-11-2 9 21 10" fill="#628ccc"/><path d="M2022 818l32-43 12-9-34 43" fill="#2b3d59"/><path d="M1069 1140l-20-11-1 8 20 11" fill="#5a82bc"/><path d="M2072 736l-7 0 4-9 7 0" fill="#77aaf7"/><path d="M2076 741l-5-5 4-10 5 5" fill="#638dcc"/><path d="M1380 1343l-52-47 8 2 51 46" fill="#2b3e5a"/><path d="M1792 1231l18-65 7-5-20 65" fill="#2c3f5c"/><path d="M886 1067l3-6 0 10-3 6" fill="#5478ae"/><path d="M893 1061l6 5-1 8-5-5" fill="#5c83bf"/><path d="M921 1080l-25-9 3 7 25 10" fill="#638ecf"/><path d="M1385 1344l-51-46 7 1 51 46" fill="#2b3e5a"/><path d="M2072 761l-3-13 7-10 3 13" fill="#425e89"/><path d="M887 1062l8-1 0 9-8 2" fill="#77aaf7"/><path d="M1788 1234l16-65 8-5-19 65" fill="#2d405d"/><path d="M1987 841l11-19-7-6-11 19" fill="#5c84c0"/><path d="M2012 825l30-42 14-9-32 43" fill="#2c3f5c"/><path d="M890 1086l-4-13 3 9 4 13" fill="#273851"/><path d="M1990 867l13-19-9-6-12 20" fill="#648fd0"/><path d="M1784 1237l14-65 8-4-16 65" fill="#2d415e"/><path d="M1390 1345l-51-46 9 1 49 46" fill="#2c3f5b"/><path d="M1069 1146l-20-11-4 9 20 10" fill="#638dcc"/><path d="M2066 744l-6-1 6-9 7 1" fill="#77aaf7"/><path d="M2070 749l-5-6 7-9 5 5" fill="#6f9bdd"/><path d="M1780 1240l12-65 8-4-14 65" fill="#2e415f"/><path d="M1395 1345l-49-45 8 1 48 45" fill="#2c3f5c"/><path d="M1776 1243l9-65 9-4-12 65" fill="#2e4260"/><path d="M923 1086l-25-9 6 6 24 9" fill="#5f88c6"/><path d="M893 1068l5 4 3 7-5-4" fill="#567cb4"/><path d="M886 1075l2-6 3 8-2 7" fill="#597fb9"/><path d="M2064 769l-4-13 10-10 4 13" fill="#486796"/><path d="M1400 1346l-48-45 9 0 46 46" fill="#2d405d"/><path d="M1772 1246l7-66 8-3-9 65" fill="#2e4260"/><path d="M1995 845l13-19-11-5-12 19" fill="#638ece"/><path d="M887 1070l7-2 3 8-7 2" fill="#77aaf7"/><path d="M1768 1249l7-66 6-3-7 65" fill="#2e425f"/><path d="M1995 872l14-19-7-6-14 19" fill="#6490d0"/><path d="M1051 1130l-19-11-2 9 20 10" fill="#5b82bd"/><path d="M1405 1346l-46-45 8-1 45 47" fill="#2d415e"/><path d="M1066 1152l-21-10-3 9 22 10" fill="#638ecd"/><path d="M2058 752l-6-2 9-9 7 2" fill="#77aaf7"/><path d="M892 1094l-4-14 7 8 3 13" fill="#324868"/><path d="M1764 1252l9-66 4-4-7 66" fill="#2d405e"/><path d="M2061 757l-4-6 9-9 5 6" fill="#85b3f6"/><path d="M1410 1347l-45-46 9-1 43 48" fill="#2d415f"/><path d="M926 1091l-24-9 8 5 24 9" fill="#5a81bb"/><path d="M1874 1101l35-50 6-7-37 51" fill="#283a54"/><path d="M1415 1347l-43-47 9-1 41 49" fill="#2e4260"/><path d="M1997 823l12-19-8-6-11 20" fill="#5c84c0"/><path d="M1760 1255l9-65 5-6-9 67" fill="#2c3f5b"/><path d="M2054 777l-4-13 12-10 4 14" fill="#4d6ea0"/><path d="M895 1074l5 4 5 6-5-4" fill="#5174a9"/><path d="M1420 1348l-41-49 9-2 39 51" fill="#2e4260"/><path d="M965 1125l-52-18 14 3 50 18" fill="#2a3c57"/><path d="M888 1082l2-7 7 7-2 8" fill="#5e87c4"/><path d="M2002 849l14-19-10-5-13 19" fill="#648fd0"/><path d="M889 1077l7-3 6 6-7 4" fill="#77aaf7"/><path d="M1425 1348l-39-50 9-2 37 52" fill="#2f4361"/><path d="M1998 877l15-19-5-7-15 20" fill="#648fd0"/><path d="M2048 760l-5-2 11-9 6 2" fill="#77aaf7"/><path d="M1755 1258l11-64 5-6-10 66" fill="#2c3f5b"/><path d="M1051 1136l-20-10-5 9 20 10" fill="#648ecd"/><path d="M1870 1105l34-49 6-7-35 51" fill="#293b56"/><path d="M1430 1348l-37-52 6 0 38 53" fill="#2e4260"/><path d="M2051 766l-4-7 11-9 5 6" fill="#9ccbff"/><path d="M897 1100l-4-14 10 6 3 13" fill="#3c567d"/><path d="M1435 1349l-38-53 6 1 40 52" fill="#2d415f"/><path d="M1751 1261l11-63 5-5-10 64" fill="#2c3f5c"/><path d="M2041 785l-3-13 13-9 4 13" fill="#5073a6"/><path d="M1865 1109l32-49 8-6-34 50" fill="#2a3d58"/><path d="M975 1127l-50-18 16 1 48 19" fill="#2b3e5a"/><path d="M2007 827l12-19-12-5-11 19" fill="#638ece"/><path d="M1441 1349l-40-53 8 3 39 50" fill="#2c405c"/><path d="M1746 1264l12-62 5-5-11 63" fill="#2c3f5c"/><path d="M2036 768l-5-3 13-9 6 3" fill="#77aaf7"/><path d="M1034 1120l-20-10-2 8 20 11" fill="#5b82bd"/><path d="M2008 854l14-19-8-6-13 19" fill="#6490d1"/><path d="M894 1083l6-4 9 5-6 4" fill="#77aaf7"/><path d="M893 1088l2-7 9 6-1 7" fill="#638ece"/><path d="M2038 774l-3-7 13-9 4 7" fill="#a8d7ff"/><path d="M1860 1113l31-49 8-5-32 49" fill="#2b3e5a"/><path d="M1256 1279l-56-25 8 4 55 24" fill="#283953"/><path d="M1047 1143l-20-9-4 9 21 9" fill="#648fce"/><path d="M1446 1349l-39-51 7 2 39 49" fill="#2c405c"/><path d="M2029 793l-4-13 14-9 4 13" fill="#5175aa"/><path d="M1742 1266l11-60 6-5-11 62" fill="#2c405d"/><path d="M2008 806l12-20-9-5-11 19" fill="#5c84c0"/><path d="M987 1129l-48-19 17 0 46 19" fill="#2d405d"/><path d="M1855 1117l28-49 9-5-30 49" fill="#2c3f5c"/><path d="M905 1105l-4-14 12 5 3 13" fill="#44628e"/><path d="M1451 1349l-39-49 8 1 39 48" fill="#2c405d"/><path d="M1737 1269l11-59 6-5-11 60" fill="#2d405d"/><path d="M2023 776l-5-3 15-9 5 3" fill="#77aaf7"/><path d="M1261 1281l-55-24 9 3 54 23" fill="#293b55"/><path d="M1850 1121l25-49 10-4-28 48" fill="#2d415e"/><path d="M2026 781l-4-6 14-9 4 7" fill="#a9d9ff"/><path d="M2015 832l14-19-11-6-13 19" fill="#6490d1"/><path d="M1733 1272l9-58 7-5-10 59" fill="#2d415e"/><path d="M1457 1349l-39-48 8 1 38 47" fill="#2d405d"/><path d="M901 1087l6-4 10 4-4 5" fill="#77aaf7"/><path d="M1844 1124l22-49 10-4-25 49" fill="#2d415f"/><path d="M1000 1129l-46-19 17-1 44 20" fill="#2d415f"/><path d="M1033 1127l-20-10-6 10 21 9" fill="#648fce"/><path d="M2019 777l-7 2 8-7 5 3" fill="#77aaf7"/><path d="M2012 859l15-19-6-6-14 19" fill="#6490d1"/><path d="M1728 1275l8-58 8-4-10 58" fill="#2d415e"/><path d="M901 1093l1-7 12 4-1 7" fill="#6793d6"/><path d="M2023 781l-6-4 7-3 3 7" fill="#6d9bde"/><path d="M1462 1349l-38-47 8 1 38 45" fill="#2d405d"/><path d="M1044 1150l-21-9-2 9 22 9" fill="#638ece"/><path d="M1267 1283l-54-24 9 2 53 24" fill="#2a3c57"/><path d="M1723 1277l7-57 8-4-8 58" fill="#2e415f"/><path d="M2020 781l-1 7-8-6 2-6" fill="#6089c7"/><path d="M914 1108l-3-13 13 3 4 13" fill="#4a6a9b"/><path d="M1468 1348l-38-45 9 0 36 45" fill="#2d415e"/><path d="M2018 810l13-20-13-4-12 19" fill="#638ecf"/><path d="M1719 1280l4-58 8-3-6 57" fill="#2e4260"/><path d="M2025 778l-6 4-7-5 7 0" fill="#77aaf7"/><path d="M1714 1282l2-57 9-3-5 57" fill="#2e4260"/><path d="M1273 1284l-53-24 10 1 51 24" fill="#2b3d59"/><path d="M1473 1348l-36-45 9 0 34 45" fill="#2d415e"/><path d="M1709 1285l1-58 8-3-2 58" fill="#2f4361"/><path d="M1016 1111l-19-11-3 9 20 10" fill="#5b83be"/><path d="M1704 1287l-1-59 8-2 0 58" fill="#2f4362"/><path d="M911 1091l5-5 12 3-4 5" fill="#77aaf7"/><path d="M2021 837l15-19-9-6-14 19" fill="#6591d2"/><path d="M1699 1290l-3-60 9-2 1 59" fill="#2f4462"/><path d="M1478 1348l-34-45 8-1 34 46" fill="#2e415f"/><path d="M911 1097l1-8 13 3 0 8" fill="#6a98dc"/><path d="M1694 1292l-2-60 6-3 3 60" fill="#2f4362"/><path d="M1279 1285l-51-24 11 0 48 25" fill="#2c3f5b"/><path d="M2014 865l16-19-4-7-15 19" fill="#638ecf"/><path d="M1028 1134l-20-9-5 10 21 9" fill="#6590d0"/><path d="M1484 1348l-34-46 9-1 32 46" fill="#2e4260"/><path d="M1689 1295l-1-61 5-3 3 60" fill="#2e4361"/><path d="M1043 1157l-22-9 0 9 22 8" fill="#638dcd"/><path d="M1489 1347l-32-46 9-1 31 47" fill="#2e4260"/><path d="M926 1111l-4-14 16 2 4 13" fill="#4e71a3"/><path d="M1285 1286l-48-25 10-1 47 26" fill="#2c405d"/><path d="M2036 782l-5 4-14-4 6-5" fill="#77aaf7"/><path d="M1684 1297l-1-59 7-5 1 61" fill="#2e425f"/><path d="M1495 1347l-31-47 9-2 29 48" fill="#2e4361"/><path d="M2031 785l-1 7-13-5 1-7" fill="#6693d5"/><path d="M1500 1346l-29-48 9-2 28 50" fill="#2f4361"/><path d="M1506 1346l-28-50 9-3 26 52" fill="#2f4362"/><path d="M1511 1345l-26-51 8-3 26 53" fill="#2f4462"/><path d="M1517 1345l-26-54 7-1 26 54" fill="#2f4362"/><path d="M1292 1286l-47-26 11-2 44 28" fill="#2d415e"/><path d="M2027 814l14-19-12-5-13 19" fill="#6490d1"/><path d="M1679 1299l-1-57 7-5 1 59" fill="#2e415f"/><path d="M922 1093l4-5 14 1-2 6" fill="#77aaf7"/><path d="M1522 1344l-26-54 6 0 28 53" fill="#2f4361"/><path d="M1929 973l10-18-2-7-10 18" fill="#557bb2"/><path d="M1298 1286l-44-27 11-2 42 29" fill="#2e415f"/><path d="M923 1099l0-7 15 1 0 8" fill="#6c9be0"/><path d="M1015 1117l-20-9-7 10 21 10" fill="#6590cf"/><path d="M1674 1302l-1-56 7-5 1 57" fill="#2e425f"/><path d="M1528 1343l-28-53 8 1 27 51" fill="#2e4260"/><path d="M2026 842l15-19-7-7-14 19" fill="#6591d2"/><path d="M2015 870l15-18-1-8-15 19" fill="#618ccb"/><path d="M940 1112l-4-14 17 0 4 14" fill="#5175a9"/><path d="M1305 1286l-42-29 5 0 43 29" fill="#2c3f5c"/><path d="M1669 1304l-1-55 7-4 1 56" fill="#2e425f"/><path d="M1533 1342l-27-51 9 0 26 50" fill="#2e4260"/><path d="M1025 1142l-21-9-3 10 22 8" fill="#648fcf"/><path d="M1664 1306l-2-54 7-4 2 55" fill="#2e425f"/><path d="M936 1095l2-6 17 0-2 6" fill="#77aaf7"/><path d="M1539 1341l-26-50 8 0 25 49" fill="#2e4260"/><path d="M1979 939l42-46 9-8-44 46" fill="#293b55"/><path d="M1658 1308l-3-53 8-4 3 54" fill="#2e4260"/><path d="M936 1100l0-7 17 0 0 7" fill="#6d9de3"/><path d="M2047 787l-6 4-12-5 5-5" fill="#77aaf7"/><path d="M1544 1340l-25-49 9 0 24 48" fill="#2e4260"/><path d="M1610 1325l-14-57 7-1 15 55" fill="#2f4462"/><path d="M1605 1326l-13-56 6-2 14 56" fill="#2f4462"/><path d="M955 1112l-4-14 17 0 4 13" fill="#5377ac"/><path d="M2042 790l-2 7-11-5 1-8" fill="#6591d3"/><path d="M999 1101l-19-10-3 9 19 10" fill="#5c83be"/><path d="M1616 1323l-15-56 8 0 14 54" fill="#2f4362"/><path d="M1653 1310l-4-52 8-3 3 52" fill="#2e4260"/><path d="M1600 1328l-14-54 8-5 13 57" fill="#2f4362"/><path d="M1621 1321l-14-54 9-1 13 53" fill="#2f4362"/><path d="M1550 1339l-24-48 9-1 22 48" fill="#2e4260"/><path d="M1648 1312l-6-52 9-3 4 52" fill="#2e4260"/><path d="M2035 819l14-19-10-6-13 19" fill="#6591d2"/><path d="M1627 1320l-13-54 9-1 11 52" fill="#2f4361"/><path d="M1643 1314l-8-52 9-2 6 51" fill="#2e4260"/><path d="M1594 1329l-14-52 8-4 13 54" fill="#2f4361"/><path d="M1632 1318l-11-53 9-1 9 51" fill="#2f4361"/><path d="M1637 1316l-9-52 9-2 8 51" fill="#2e4361"/><path d="M1555 1338l-22-47 9-2 21 48" fill="#2e4260"/><path d="M1589 1331l-15-51 8-4 14 53" fill="#2f4361"/><path d="M951 1095l2-6 16-1-1 6" fill="#77aaf7"/><path d="M1561 1337l-21-47 9-2 20 48" fill="#2e4260"/><path d="M1583 1332l-16-50 9-3 14 51" fill="#2e4361"/><path d="M2028 847l16-18-4-8-15 19" fill="#648fd0"/><path d="M1567 1336l-20-48 9-2 18 48" fill="#2e4260"/><path d="M1578 1333l-17-48 8-3 16 50" fill="#2e4361"/><path d="M1010 1126l-21-9-5 10 21 9" fill="#6590d1"/><path d="M1572 1335l-18-48 9-3 17 49" fill="#2e4260"/><path d="M951 1100l0-7 17-1 0 8" fill="#6e9ee5"/><path d="M1023 1149l-22-8-1 8 23 8" fill="#638ece"/><path d="M966 1094l1-6 12 2-7 3" fill="#77aaf7"/><path d="M967 1100l-1-8 7-1-2 7" fill="#6996da"/><path d="M976 1088l5 4-3 10-5-6" fill="#5f88c5"/><path d="M997 1108l-20-9-7 11 20 9" fill="#6690d0"/><path d="M2055 793l-6 3-10-6 6-4" fill="#77aaf7"/><path d="M971 1092l7-3-3 8-8-1" fill="#77aaf7"/><path d="M2050 795l-2 7-9-6 1-7" fill="#638ece"/><path d="M1828 1152l29-45 4-7-29 46" fill="#283953"/><path d="M2040 825l15-19-8-7-14 19" fill="#6591d3"/><path d="M1938 957l11-18-2-7-11 18" fill="#567bb3"/><path d="M2029 853l16-18-2-8-15 19" fill="#628ccc"/><path d="M1006 1134l-21-9-4 10 22 8" fill="#6590d0"/><path d="M1023 1155l-23-8 2 8 22 8" fill="#628dcc"/><path d="M1152 1199l-17-9 2 6 18 10" fill="#5479af"/><path d="M1824 1156l28-44 6-6-29 44" fill="#293a55"/><path d="M2065 803l-5-4-8-8 5 4" fill="#5072a6"/><path d="M969 1094l7 1-8 11-7 0" fill="#77aaf7"/><path d="M974 1094l5 6-8 11-5-6" fill="#6d99db"/><path d="M2028 859l16-18 1-8-16 18" fill="#5f88c6"/><path d="M991 1117l-20-9-7 11 22 9" fill="#6691d1"/><path d="M1943 962l11-17-6-7-11 17" fill="#5d85c1"/><path d="M2043 830l15-18-4-8-16 19" fill="#6490d1"/><path d="M2056 801l-2 7-7-7 1-7" fill="#6089c7"/><path d="M2062 799l-7 3-8-7 7-4" fill="#77aaf7"/><path d="M1819 1160l28-43 7-6-29 43" fill="#293c56"/><path d="M1023 1161l-22-8 4 7 22 8" fill="#608ac8"/><path d="M1003 1141l-22-8-1 9 22 8" fill="#648fcf"/><path d="M1083 1203l-59-16 13 2 57 16" fill="#293b56"/><path d="M1814 1164l27-42 8-6-28 42" fill="#2a3d58"/><path d="M1330 1297l-45-23 8 3 44 22" fill="#283a54"/><path d="M1809 1167l25-41 9-5-27 41" fill="#2b3e5a"/><path d="M2069 810l-5-5-5-8 5 4" fill="#5478ae"/><path d="M962 1104l7 1-6 11-8-1" fill="#77aaf7"/><path d="M2043 836l16-18-2-8-15 18" fill="#628dcd"/><path d="M1092 1205l-57-16 13 0 55 17" fill="#2b3d59"/><path d="M1946 967l12-17-5-7-11 17" fill="#5e86c3"/><path d="M967 1104l5 5-6 11-5-5" fill="#6894d4"/><path d="M2059 807l-2 6-4-7 2-7" fill="#5c83bf"/><path d="M1948 941l11-17-3-7-10 17" fill="#567cb4"/><path d="M1335 1299l-44-23 8 3 44 21" fill="#293b56"/><path d="M986 1126l-21-9-4 11 22 8" fill="#6591d1"/><path d="M2066 806l-8 2-5-8 7-3" fill="#77aaf7"/><path d="M1803 1171l24-41 9-5-25 41" fill="#2c3f5b"/><path d="M1002 1148l-22-8 1 9 23 7" fill="#638dcd"/><path d="M1798 1174l21-41 10-4-24 41" fill="#2c405d"/><path d="M2073 829l-3-14-3-9 4 13" fill="#26374f"/><path d="M1137 1191l-18-10 2 7 18 9" fill="#5479b0"/><path d="M1341 1300l-44-22 9 2 43 21" fill="#2a3c57"/><path d="M1791 1177l19-41 11-4-22 41" fill="#2d415e"/><path d="M1785 1180l16-42 11-3-19 41" fill="#2e425f"/><path d="M1779 1182l14-41 10-3-16 41" fill="#2e4260"/><path d="M1775 1185l14-43 6-2-15 42" fill="#2d415e"/><path d="M2042 842l16-18 1-8-16 18" fill="#5f89c7"/><path d="M1347 1301l-43-21 10 1 42 21" fill="#2b3d59"/><path d="M1772 1187l16-42 3-4-14 43" fill="#2a3d58"/><path d="M1953 946l12-17-7-7-11 17" fill="#5d86c2"/><path d="M2061 813l-3 7-2-8 3-7" fill="#577db5"/><path d="M2071 817l-6-5-2-9 6 5" fill="#587fb8"/><path d="M962 1113l5 6-4 10-6-5" fill="#638dcc"/><path d="M956 1114l7 0-4 10-7 1" fill="#77aaf7"/><path d="M983 1134l-21-8-2 9 22 8" fill="#6490d0"/><path d="M1003 1154l-22-7 3 7 23 7" fill="#618bc9"/><path d="M2067 813l-8 1-2-8 8-2" fill="#77aaf7"/><path d="M1354 1302l-42-21 10-1 40 22" fill="#2b3e5a"/><path d="M1139 1195l-18-9 0 10 18 8" fill="#5b83be"/><path d="M1769 1192l17-42 3-7-16 43" fill="#283953"/><path d="M1360 1302l-40-22 11-1 38 23" fill="#2c3f5c"/><path d="M2072 836l-4-13 2-10 3 14" fill="#314665"/><path d="M2039 848l16-18 4-8-16 18" fill="#5b83be"/><path d="M1208 1258l-53-16 10 3 52 15" fill="#283a54"/><path d="M2019 895l34-37 10-9-35 37" fill="#293b56"/><path d="M1367 1302l-38-23 10-2 37 24" fill="#2d405d"/><path d="M1374 1301l-37-23 11-3 35 25" fill="#2d415e"/><path d="M1381 1300l-35-24 11-4 32 27" fill="#2e425f"/><path d="M1388 1299l-33-26 10-4 31 29" fill="#2e4260"/><path d="M2059 820l-2 6 1-8 3-7" fill="#5275aa"/><path d="M951 1128l3-6-2 10-3 6" fill="#5174a9"/><path d="M1394 1298l-31-28 6-1 32 28" fill="#2d415e"/><path d="M1005 1159l-22-7 6 6 22 7" fill="#5e87c3"/><path d="M1958 925l11-17-4-7-10 17" fill="#567cb4"/><path d="M1765 1196l18-40 4-7-17 41" fill="#283a54"/><path d="M1957 952l13-17-6-7-12 17" fill="#5e87c4"/><path d="M982 1141l-22-8 1 9 22 7" fill="#638ece"/><path d="M2069 825l-5-5 1-10 6 5" fill="#5d86c3"/><path d="M1399 1297l-32-28 5 1 33 28" fill="#2b3d59"/><path d="M958 1122l5 5-1 9-6-4" fill="#5e87c4"/><path d="M2066 820l-8 1 1-9 8-1" fill="#77aaf7"/><path d="M1215 1260l-52-16 11 1 50 16" fill="#2a3c57"/><path d="M952 1123l8-1-2 10-8 1" fill="#77aaf7"/><path d="M2010 901l32-36 12-9-33 37" fill="#2b3d59"/><path d="M1139 1202l-18-8 0 8 19 8" fill="#5c84c0"/><path d="M1121 1182l-17-9 2 8 17 8" fill="#557ab1"/><path d="M1403 1298l-33-29 7 5 33 26" fill="#293a55"/><path d="M2068 844l-4-13 5-10 3 14" fill="#3b557b"/><path d="M1761 1200l19-38 4-8-17 41" fill="#293b55"/><path d="M1222 1261l-50-16 12 0 48 17" fill="#2b3d59"/><path d="M1999 907l30-35 15-8-32 36" fill="#2c3f5c"/><path d="M1230 1262l-48-17 12-1 46 17" fill="#2c3f5b"/><path d="M1964 931l12-17-8-7-11 17" fill="#5d86c2"/><path d="M1959 958l14-17-4-7-13 16" fill="#5e87c4"/><path d="M983 1147l-23-7 4 8 22 6" fill="#618bca"/><path d="M2062 828l-7-1 4-8 7-1" fill="#77aaf7"/><path d="M1408 1299l-33-26 7 4 33 25" fill="#293b55"/><path d="M949 1136l3-6 1 10-3 6" fill="#557ab1"/><path d="M2065 833l-5-6 4-9 6 5" fill="#658fcf"/><path d="M1757 1204l19-37 5-7-18 39" fill="#293b56"/><path d="M956 1130l6 4 1 9-6-4" fill="#5a81bc"/><path d="M1987 913l28-35 16-7-30 35" fill="#2d415f"/><path d="M950 1131l8-1 1 9-8 2" fill="#77aaf7"/><path d="M1123 1187l-17-8-2 9 18 8" fill="#5c84bf"/><path d="M2061 852l-4-13 8-10 4 14" fill="#44628e"/><path d="M1974 919l26-35 16-7-27 35" fill="#2e4260"/><path d="M1752 1208l19-36 6-7-18 38" fill="#2a3c57"/><path d="M954 1156l-4-13 4 8 4 14" fill="#293b56"/><path d="M1414 1301l-33-25 8 3 32 24" fill="#293b56"/><path d="M1968 910l11-17-5-7-10 17" fill="#577cb4"/><path d="M985 1153l-22-7 5 6 23 7" fill="#5e87c4"/><path d="M1960 963l14-16-2-8-13 17" fill="#5e87c4"/><path d="M2055 835l-6-1 7-8 7 0" fill="#77aaf7"/><path d="M1747 1212l18-35 7-6-18 36" fill="#2b3d59"/><path d="M2058 840l-4-6 7-9 5 6" fill="#76a2e5"/><path d="M1968 937l13-17-7-7-11 16" fill="#5e87c4"/><path d="M957 1137l5 4 3 7-5-4" fill="#557bb2"/><path d="M1419 1302l-32-23 8 2 32 23" fill="#2a3c57"/><path d="M950 1144l2-6 4 8-2 7" fill="#5a81bb"/><path d="M2052 859l-3-13 10-9 4 14" fill="#4b6c9c"/><path d="M951 1139l7-2 4 8-7 3" fill="#77aaf7"/><path d="M1741 1215l17-34 8-6-17 36" fill="#2b3e5a"/><path d="M1122 1194l-18-8 0 10 19 7" fill="#5c85c1"/><path d="M1106 1174l-18-9 2 8 17 9" fill="#557ab1"/><path d="M1026 1188l-47-13 13 2 47 13" fill="#2a3c57"/><path d="M1425 1303l-32-22 10 2 31 21" fill="#2a3d58"/><path d="M1735 1219l16-34 9-5-17 34" fill="#2c3f5b"/><path d="M2047 843l-6-3 9-8 7 2" fill="#77aaf7"/><path d="M989 1157l-22-6 8 4 22 7" fill="#5a82bc"/><path d="M956 1163l-3-13 7 7 3 13" fill="#344a6c"/><path d="M1692 1234l4-37 5-2-3 36" fill="#2e425f"/><path d="M2049 848l-4-7 10-8 5 6" fill="#94c2ff"/><path d="M1696 1232l3-36 11-1-6 35" fill="#2e425f"/><path d="M1688 1236l6-37 3-3-4 37" fill="#2c3f5c"/><path d="M1729 1222l14-34 9-4-15 34" fill="#2c3f5c"/><path d="M1975 916l11-17-9-7-10 17" fill="#5d86c3"/><path d="M1702 1230l6-35 11-1-8 34" fill="#2e415f"/><path d="M1873 1048l9-15 1-8-8 16" fill="#5073a6"/><path d="M2041 866l-3-13 12-8 4 13" fill="#5072a6"/><path d="M1723 1224l11-34 10-3-13 34" fill="#2d405d"/><path d="M1432 1304l-31-22 9 1 30 21" fill="#2b3e59"/><path d="M1709 1229l8-35 11-2-10 34" fill="#2d415e"/><path d="M1716 1227l10-35 10-2-11 34" fill="#2d415e"/><path d="M959 1143l5 4 6 6-5-4" fill="#5073a7"/><path d="M1971 943l14-16-5-8-13 16" fill="#5f88c5"/><path d="M1037 1190l-47-13 16 0 44 13" fill="#2b3e5a"/><path d="M1683 1240l6-35 6-7-6 37" fill="#2b3d59"/><path d="M2036 850l-5-4 12-7 5 3" fill="#77aaf7"/><path d="M953 1152l2-7 7 7-2 7" fill="#5f88c6"/><path d="M1438 1304l-30-21 10 0 29 21" fill="#2b3e5a"/><path d="M954 1146l7-3 6 6-7 4" fill="#77aaf7"/><path d="M1492 1293l-18-29 5-2 20 30" fill="#2e425f"/><path d="M1123 1201l-19-7 1 8 19 7" fill="#5d85c2"/><path d="M1497 1292l-20-30 5 1 21 29" fill="#2d405d"/><path d="M1486 1296l-20-28 9-5 19 30" fill="#2e415f"/><path d="M1107 1180l-17-9-2 10 18 8" fill="#5c84c0"/><path d="M2038 855l-3-7 12-8 4 7" fill="#a8d7ff"/><path d="M2029 873l-4-13 14-8 4 13" fill="#5377ad"/><path d="M1445 1304l-29-21 11-1 27 21" fill="#2c3f5b"/><path d="M1479 1298l-21-26 10-5 20 28" fill="#2d415f"/><path d="M1048 1190l-44-13 16-2 43 14" fill="#2c405d"/><path d="M1678 1244l7-34 6-7-6 36" fill="#2b3d59"/><path d="M1452 1304l-27-22 10-2 26 22" fill="#2c405c"/><path d="M962 1169l-4-13 10 5 4 13" fill="#3e5981"/><path d="M1472 1300l-22-24 10-5 21 26" fill="#2d415e"/><path d="M1501 1292l-21-30 9 3 20 27" fill="#2b3e5a"/><path d="M1978 895l11-17-5-7-11 17" fill="#577cb5"/><path d="M1874 1054l10-15-2-8-9 15" fill="#567cb4"/><path d="M2024 856l-4-4 13-7 5 4" fill="#77aaf7"/><path d="M1459 1303l-26-22 11-3 24 23" fill="#2d405d"/><path d="M1466 1302l-24-24 10-3 22 24" fill="#2d405e"/><path d="M2014 880l-3-14 16-7 3 13" fill="#5579b0"/><path d="M1061 1189l-43-14 18-3 40 15" fill="#2e415f"/><path d="M2026 862l-4-7 15-8 3 7" fill="#a5d5ff"/><path d="M1980 922l13-16-8-8-12 16" fill="#5e88c5"/><path d="M1973 949l14-16-3-8-13 16" fill="#5f88c5"/><path d="M1673 1248l6-33 7-6-6 34" fill="#2b3e59"/><path d="M2009 863l-3-5 15-7 4 5" fill="#77aaf7"/><path d="M2000 885l-4-13 16-6 4 13" fill="#557ab2"/><path d="M1507 1292l-20-27 9 2 20 26" fill="#2b3e5a"/><path d="M1074 1187l-40-14 17-4 39 16" fill="#2e4260"/><path d="M959 1152l6-4 9 5-6 4" fill="#77aaf7"/><path d="M958 1158l2-8 9 5-1 8" fill="#648fd0"/><path d="M1597 1270l-8-32 6-1 8 32" fill="#2d415f"/><path d="M1124 1207l-19-7 3 8 19 6" fill="#5d85c1"/><path d="M1592 1272l-6-32 5-3 8 33" fill="#2d415e"/><path d="M2011 868l-3-7 16-7 3 7" fill="#98c8ff"/><path d="M1090 1166l-17-9 1 9 18 8" fill="#557ab2"/><path d="M1995 868l-3-4 16-7 3 5" fill="#77aaf7"/><path d="M1601 1269l-8-32 10 1 7 31" fill="#2d405d"/><path d="M1667 1251l6-31 8-6-6 33" fill="#2b3e5a"/><path d="M1106 1187l-18-8-1 10 19 8" fill="#5d85c1"/><path d="M1587 1276l-7-31 8-6 6 32" fill="#2c405d"/><path d="M970 1173l-4-13 12 4 4 13" fill="#466593"/><path d="M1514 1293l-20-27 10 2 18 25" fill="#2b3e5a"/><path d="M1991 869l-8 0 11-6 3 5" fill="#77aaf7"/><path d="M1997 874l-3-7 16-7 3 7" fill="#8ebeff"/><path d="M1994 873l-5-5 7-2 3 8" fill="#6896d9"/><path d="M1241 1232l-14-9 5 5 15 8" fill="#4e71a4"/><path d="M1608 1269l-7-31 10 0 6 30" fill="#2d405d"/><path d="M1937 1017l38-38 10-7-39 38" fill="#293b55"/><path d="M1990 873l-2 7-5-8 2-5" fill="#5a81bb"/><path d="M1985 901l12-17-10-7-11 16" fill="#5e86c3"/><path d="M1661 1254l5-30 9-5-6 31" fill="#2c3e5b"/><path d="M1581 1279l-7-29 8-6 6 31" fill="#2c405c"/><path d="M1972 955l15-16-1-8-13 16" fill="#5e87c3"/><path d="M1520 1293l-18-25 10 1 17 24" fill="#2c3f5b"/><path d="M1995 870l-6 4-5-6 7 0" fill="#77aaf7"/><path d="M966 1156l6-4 10 3-4 5" fill="#77aaf7"/><path d="M1615 1268l-6-30 11 0 4 29" fill="#2d405d"/><path d="M1846 1119l30-34 8-8-31 36" fill="#293a55"/><path d="M1655 1257l4-29 9-5-5 30" fill="#2c3f5b"/><path d="M966 1162l1-7 12 3-1 8" fill="#6895d8"/><path d="M1984 928l13-16-6-8-12 16" fill="#5f88c6"/><path d="M1881 1035l9-15 1-8-9 15" fill="#5073a7"/><path d="M1574 1282l-7-28 8-5 8 29" fill="#2c405d"/><path d="M1527 1293l-17-24 10 0 16 23" fill="#2c3f5b"/><path d="M1622 1267l-4-29 10-1 2 28" fill="#2d405d"/><path d="M1649 1260l2-28 10-5-4 30" fill="#2c3f5c"/><path d="M1930 1022l35-37 12-7-38 38" fill="#2a3d58"/><path d="M980 1176l-4-13 14 2 4 13" fill="#4d6ea0"/><path d="M1628 1266l-2-28 11-2 0 28" fill="#2d405d"/><path d="M1642 1262l1-28 10-3-2 28" fill="#2c405c"/><path d="M1568 1284l-9-26 9-5 8 28" fill="#2c405d"/><path d="M1635 1264l0-28 10-2-1 28" fill="#2c405d"/><path d="M1092 1172l-18-8-2 11 18 7" fill="#5c84c0"/><path d="M1534 1292l-16-23 10-1 15 23" fill="#2c3f5c"/><path d="M1106 1195l-19-8 1 9 19 7" fill="#5d86c2"/><path d="M1561 1287l-10-25 10-5 9 27" fill="#2c405d"/><path d="M1840 1124l29-34 9-7-30 35" fill="#2a3c57"/><path d="M1541 1292l-15-24 11-2 13 24" fill="#2c3f5c"/><path d="M1555 1289l-12-25 10-3 10 25" fill="#2c405d"/><path d="M976 1159l4-5 13 2-3 5" fill="#77aaf7"/><path d="M1548 1290l-13-23 10-3 12 24" fill="#2c405c"/><path d="M1921 1027l33-37 13-6-36 37" fill="#2c3e5b"/><path d="M976 1165l1-7 13 1 0 8" fill="#6b99df"/><path d="M1998 879l-2 7-9-7 1-8" fill="#618bca"/><path d="M2004 877l-7 4-10-8 7-4" fill="#77aaf7"/><path d="M992 1178l-4-13 15 0 4 13" fill="#5175a9"/><path d="M1911 1031l31-36 14-5-34 36" fill="#2d405d"/><path d="M1833 1128l28-33 10-6-29 33" fill="#2b3d59"/><path d="M1991 907l13-16-8-8-12 17" fill="#5f88c5"/><path d="M1883 1041l9-15-2-8-9 15" fill="#577cb4"/><path d="M1985 934l14-15-3-9-13 16" fill="#5f88c6"/><path d="M988 1161l3-5 13-1-1 6" fill="#77aaf7"/><path d="M1826 1132l25-33 12-5-28 33" fill="#2b3e5b"/><path d="M1075 1158l-17-9 1 9 17 8" fill="#557bb2"/><path d="M1005 1178l-4-13 17-2 3 13" fill="#5478af"/><path d="M988 1167l0-8 15 0 0 8" fill="#6d9de3"/><path d="M1792 1142l16-33 13-2-19 33" fill="#2e425f"/><path d="M1818 1135l23-33 12-4-25 33" fill="#2c405c"/><path d="M1801 1140l18-33 14-3-22 33" fill="#2d415f"/><path d="M1107 1201l-19-6 3 8 19 6" fill="#5d86c2"/><path d="M1809 1138l22-33 12-4-23 33" fill="#2d405e"/><path d="M1090 1180l-18-7-2 10 19 7" fill="#5d86c2"/><path d="M1001 1161l1-6 16-1-1 5" fill="#77aaf7"/><path d="M1019 1177l-3-14 17-3 4 14" fill="#557ab1"/><path d="M1299 1279l-42-13 11 2 40 13" fill="#293b55"/><path d="M1001 1167l0-8 16-2 1 8" fill="#6f9fe6"/><path d="M2014 888l-5-4-9-9 5 4" fill="#5072a6"/><path d="M1035 1174l-4-13 18-4 3 13" fill="#567bb3"/><path d="M1015 1160l1-6 16-3 0 6" fill="#77aaf7"/><path d="M1883 1047l10-14-1-9-10 15" fill="#577db6"/><path d="M1228 1224l-14-9 5 6 15 8" fill="#4f71a4"/><path d="M1985 941l14-16 0-8-14 15" fill="#5e87c5"/><path d="M1165 1245l-50-11 12 1 49 11" fill="#293b56"/><path d="M2005 886l-2 7-8-8 2-7" fill="#6089c7"/><path d="M2011 884l-7 3-9-8 7-3" fill="#77aaf7"/><path d="M1996 914l13-16-6-8-13 16" fill="#5f89c7"/><path d="M1031 1157l-1-5 17-4 1 6" fill="#77aaf7"/><path d="M1016 1165l-1-7 17-3 2 7" fill="#71a1e9"/><path d="M1306 1281l-40-13 11 0 39 13" fill="#2a3c57"/><path d="M1046 1154l-1-6 12 0-5 4" fill="#77aaf7"/><path d="M1889 1021l9-14 0-8-8 15" fill="#5073a8"/><path d="M1032 1163l-2-8 18-3 1 7" fill="#73a3ec"/><path d="M1109 1207l-19-6 4 7 20 5" fill="#5d85c1"/><path d="M1047 1160l-1-8 7-2-2 7" fill="#6f9de0"/><path d="M1076 1164l-17-8-4 12 18 7" fill="#5c84c0"/><path d="M1055 1147l5 3 0 9-5-5" fill="#587eb8"/><path d="M1314 1281l-39-13 11-1 38 14" fill="#2b3e59"/><path d="M1174 1246l-49-11 13-1 48 12" fill="#2b3d59"/><path d="M1051 1151l5-4 0 8-7 0" fill="#77aaf7"/><path d="M1365 1271l-29-20 5-2 29 21" fill="#2d415f"/><path d="M1089 1188l-18-7 0 10 19 6" fill="#5e86c3"/><path d="M1357 1274l-31-18 12-6 29 20" fill="#2e425f"/><path d="M1322 1281l-38-13 13-2 36 14" fill="#2c3f5b"/><path d="M1348 1277l-33-17 13-5 30 18" fill="#2d415f"/><path d="M1184 1246l-48-12 15-2 45 13" fill="#2c3f5b"/><path d="M1233 1228l-15-8 3 8 16 7" fill="#557ab1"/><path d="M1331 1280l-36-14 12-3 34 15" fill="#2c405c"/><path d="M1983 947l15-16 1-8-14 16" fill="#5d85c1"/><path d="M1339 1279l-34-16 12-4 33 17" fill="#2d405e"/><path d="M1194 1245l-45-12 15-4 43 14" fill="#2d405d"/><path d="M2020 895l-5-4-7-9 5 4" fill="#5276ac"/><path d="M1998 920l14-15-4-9-13 16" fill="#6089c7"/><path d="M1048 1158l3-5-4 11-2 6" fill="#5072a6"/><path d="M1891 1028l10-14-3-9-9 14" fill="#577db5"/><path d="M2010 893l-2 7-6-9 2-7" fill="#5d85c2"/><path d="M2016 891l-7 3-6-8 7-4" fill="#77aaf7"/><path d="M1055 1152l5 5-3 12-5-5" fill="#608ac8"/><path d="M1049 1154l8-1-4 12-7 0" fill="#77aaf7"/><path d="M1074 1173l-18-7-2 11 18 7" fill="#5d86c2"/><path d="M1090 1195l-19-6 2 8 19 6" fill="#5e87c3"/><path d="M1236 1233l-15-7 4 8 15 7" fill="#567bb3"/><path d="M1998 927l14-16-1-8-14 15" fill="#5f88c6"/><path d="M1216 1216l-15-8 6 7 14 7" fill="#4f72a5"/><path d="M1892 1034l11-14-3-8-9 14" fill="#587eb7"/><path d="M2023 903l-5-5-4-9 5 4" fill="#567bb3"/><path d="M1775 1169l21-30 5-8-21 31" fill="#283953"/><path d="M2013 900l-2 6-4-8 2-7" fill="#5980ba"/><path d="M1897 1008l9-14 0-9-9 15" fill="#5174a8"/><path d="M2019 899l-7 2-4-9 7-2" fill="#77aaf7"/><path d="M1045 1168l3-6-2 12-3 6" fill="#5174a9"/><path d="M1092 1201l-20-5 5 7 19 5" fill="#5d86c2"/><path d="M1052 1162l5 5-2 11-5-5" fill="#5e87c4"/><path d="M1072 1182l-18-7 0 10 19 6" fill="#5e87c4"/><path d="M1046 1163l8 0-2 11-8 1" fill="#77aaf7"/><path d="M1382 1277l-31-17 9 5 30 15" fill="#283953"/><path d="M2026 922l-3-13-2-10 4 14" fill="#293b56"/><path d="M1770 1174l20-29 7-7-21 29" fill="#293a55"/><path d="M1996 933l15-15 1-9-14 16" fill="#5d86c2"/><path d="M1220 1221l-14-8 2 9 15 7" fill="#557bb2"/><path d="M1892 1041l11-14-1-8-10 13" fill="#587fb8"/><path d="M2014 907l-3 6-1-9 3-6" fill="#557bb2"/><path d="M1095 1207l-19-6 6 6 19 5" fill="#5c83bf"/><path d="M1900 1015l10-14-4-9-9 14" fill="#577db6"/><path d="M2024 911l-6-5-1-9 5 4" fill="#5a81bb"/><path d="M1388 1280l-30-16 9 4 30 14" fill="#283a54"/><path d="M1764 1178l20-27 8-7-21 28" fill="#293b56"/><path d="M1974 981l30-30 11-8-32 30" fill="#293b56"/><path d="M2020 907l-8 1-1-9 8-2" fill="#77aaf7"/><path d="M1695 1199l7-29 5-1-6 28" fill="#2d415e"/><path d="M1693 1201l8-29 3-3-7 29" fill="#2a3c58"/><path d="M1043 1178l3-6 0 11-3 6" fill="#5478af"/><path d="M1073 1189l-19-6 2 9 19 6" fill="#5e87c4"/><path d="M1699 1198l6-29 12 0-8 28" fill="#2d415e"/><path d="M1993 939l14-15 4-8-14 15" fill="#5b82bd"/><path d="M1050 1171l6 5 0 10-6-4" fill="#5b83bf"/><path d="M1757 1183l19-27 9-6-20 27" fill="#2a3c58"/><path d="M2024 930l-3-13 2-10 3 13" fill="#33496a"/><path d="M1044 1173l8-1 0 10-8 2" fill="#77aaf7"/><path d="M1395 1282l-30-15 10 3 29 14" fill="#293b56"/><path d="M1964 987l29-30 13-7-31 30" fill="#2b3d59"/><path d="M1708 1197l7-27 13-1-10 27" fill="#2d405d"/><path d="M1689 1207l9-28 4-9-8 30" fill="#293a55"/><path d="M1222 1227l-14-7 3 9 16 6" fill="#567cb4"/><path d="M1750 1186l17-26 11-5-19 27" fill="#2b3d59"/><path d="M1475 1266l-17-22 4-2 18 22" fill="#2d415e"/><path d="M2012 913l-2 6 1-8 3-6" fill="#5174a8"/><path d="M1478 1264l-18-22 4 1 19 21" fill="#2b3d59"/><path d="M1716 1196l10-27 13-1-12 26" fill="#2d405d"/><path d="M1203 1209l-14-8 5 7 14 8" fill="#4f72a5"/><path d="M1742 1190l16-26 11-4-18 26" fill="#2b3e5a"/><path d="M1953 992l27-29 15-7-29 30" fill="#2c3f5c"/><path d="M1467 1270l-17-20 10-7 17 22" fill="#2d405d"/><path d="M1725 1194l12-26 13-2-15 26" fill="#2c405c"/><path d="M2022 919l-6-5 2-10 6 5" fill="#5f88c5"/><path d="M1901 1022l11-14-3-9-10 14" fill="#587eb8"/><path d="M1734 1192l14-26 12-3-16 26" fill="#2c3f5c"/><path d="M1402 1283l-29-13 11 1 28 13" fill="#2a3c57"/><path d="M2018 914l-7 0 1-8 8-1" fill="#77aaf7"/><path d="M1905 996l9-15-1-8-8 14" fill="#5174a8"/><path d="M1941 997l25-30 16-5-27 29" fill="#2d415e"/><path d="M1914 1004l21-29 18-4-24 29" fill="#2e4260"/><path d="M1481 1264l-19-21 10 4 18 20" fill="#293b56"/><path d="M1927 1001l24-29 17-5-25 29" fill="#2e425f"/><path d="M1074 1196l-19-6 5 8 19 5" fill="#5e86c3"/><path d="M1684 1212l9-26 6-9-9 28" fill="#293b55"/><path d="M1459 1274l-19-18 11-7 18 20" fill="#2d405d"/><path d="M2020 938l-4-13 5-10 4 13" fill="#3d577e"/><path d="M1410 1284l-28-13 12 0 26 13" fill="#2a3d58"/><path d="M1043 1187l2-6 3 9-2 7" fill="#577db6"/><path d="M1050 1180l5 4 3 9-6-4" fill="#587eb7"/><path d="M1225 1233l-15-6 5 7 16 6" fill="#577db5"/><path d="M1451 1277l-20-16 11-6 19 18" fill="#2c405d"/><path d="M1044 1182l8-2 2 9-7 3" fill="#77aaf7"/><path d="M1418 1284l-26-13 11-1 25 13" fill="#2b3e5a"/><path d="M1590 1240l-6-25 5 0 6 24" fill="#2c3f5c"/><path d="M1587 1242l-4-25 3-3 5 25" fill="#2c3f5b"/><path d="M1443 1280l-22-15 12-5 20 16" fill="#2c3f5c"/><path d="M1426 1283l-25-13 12-3 24 14" fill="#2c3e5b"/><path d="M1207 1214l-14-8 2 10 15 7" fill="#567bb2"/><path d="M1435 1282l-24-14 12-4 22 15" fill="#2c3f5c"/><path d="M1488 1266l-18-20 10 4 18 18" fill="#293c56"/><path d="M2014 922l-7-1 4-8 8-1" fill="#77aaf7"/><path d="M2017 927l-5-6 5-9 5 5" fill="#6691d2"/><path d="M1679 1217l8-24 7-8-9 26" fill="#293b56"/><path d="M1901 1029l11-14-1-9-10 14" fill="#597fb9"/><path d="M1049 1207l-4-14 5 9 4 13" fill="#2c3f5c"/><path d="M1909 1003l9-14-5-10-9 15" fill="#577db6"/><path d="M1593 1239l-6-24 11 2 5 23" fill="#2b3e5b"/><path d="M1078 1202l-20-6 7 6 19 5" fill="#5c84c0"/><path d="M1581 1247l-5-23 8-8 4 25" fill="#2b3e5a"/><path d="M1796 1113l6-13 2-9-6 13" fill="#5073a8"/><path d="M2013 946l-4-14 8-9 4 14" fill="#466491"/><path d="M1868 1091l30-29 10-7-32 30" fill="#293b56"/><path d="M1116 1234l-40-9 13 1 40 9" fill="#2a3c57"/><path d="M1052 1187l5 4 4 8-5-4" fill="#5478af"/><path d="M1496 1268l-18-18 10 3 17 17" fill="#2a3c57"/><path d="M1673 1222l8-23 8-8-9 25" fill="#2a3c57"/><path d="M1601 1240l-5-23 12 2 3 21" fill="#2b3e5b"/><path d="M1045 1195l2-7 5 9-2 7" fill="#5b83be"/><path d="M1574 1252l-5-21 9-8 4 23" fill="#2b3e5a"/><path d="M2007 929l-6-2 7-8 7 1" fill="#77aaf7"/><path d="M1046 1190l7-3 5 8-7 3" fill="#77aaf7"/><path d="M2010 934l-4-6 7-9 5 6" fill="#7ba8eb"/><path d="M1859 1096l29-28 12-7-31 29" fill="#2a3d58"/><path d="M1209 1221l-14-7 3 9 15 6" fill="#577cb4"/><path d="M1900 1035l11-13 1-9-10 14" fill="#5980b9"/><path d="M1127 1235l-40-9 15-1 38 10" fill="#2b3e59"/><path d="M2004 953l-4-14 11-8 3 13" fill="#4d6ea0"/><path d="M1666 1226l7-22 9-6-8 23" fill="#2a3d58"/><path d="M1191 1202l-15-8 5 8 15 7" fill="#4f72a6"/><path d="M1503 1269l-16-17 11 2 15 16" fill="#2a3d58"/><path d="M1609 1240l-3-21 12 0 2 21" fill="#2c3f5b"/><path d="M1052 1214l-3-14 7 7 4 14" fill="#364d70"/><path d="M1913 983l9-14-1-9-9 14" fill="#5174a9"/><path d="M1818 1109l21-29 15-2-23 28" fill="#2d415e"/><path d="M1850 1100l27-28 13-5-29 28" fill="#2b3e5a"/><path d="M1567 1256l-6-20 10-7 5 22" fill="#2b3e5a"/><path d="M1911 1010l10-14-3-9-10 14" fill="#587fb8"/><path d="M1138 1235l-38-10 16-2 37 10" fill="#2c3f5c"/><path d="M1830 1106l22-28 15-3-25 28" fill="#2d405d"/><path d="M1840 1104l25-29 14-4-27 28" fill="#2c3f5c"/><path d="M1177 1226l-33-12 16-6 32 13" fill="#2e4260"/><path d="M1998 936l-5-3 9-7 7 2" fill="#77aaf7"/><path d="M1659 1230l6-21 10-6-7 22" fill="#2b3d59"/><path d="M1618 1240l-2-21 12 0 0 20" fill="#2c3f5b"/><path d="M1055 1193l5 4 7 6-5-4" fill="#4f72a5"/><path d="M1151 1233l-37-10 17-4 34 11" fill="#2d415e"/><path d="M1164 1230l-35-11 17-5 33 12" fill="#2e425f"/><path d="M1511 1270l-15-16 11 0 14 16" fill="#2b3d59"/><path d="M2001 941l-4-7 10-7 4 6" fill="#9dcbff"/><path d="M1993 959l-4-13 13-8 3 13" fill="#5275aa"/><path d="M1345 1240l-11-7 6 6 11 7" fill="#4f71a5"/><path d="M1560 1260l-7-18 10-7 6 20" fill="#2b3e5a"/><path d="M1651 1234l5-21 11-5-6 21" fill="#2b3e5a"/><path d="M1626 1240l0-21 12-1-1 20" fill="#2c3f5b"/><path d="M1049 1202l2-7 7 7-1 7" fill="#6089c8"/><path d="M1050 1197l7-4 6 7-6 3" fill="#77aaf7"/><path d="M1259 1266l-40-8 11 2 39 8" fill="#283a54"/><path d="M1635 1238l1-20 12-2-3 20" fill="#2c3f5b"/><path d="M1643 1236l3-20 12-4-5 21" fill="#2b3e5a"/><path d="M1897 1041l12-12 3-9-11 13" fill="#597fb9"/><path d="M1519 1270l-14-16 12 0 12 15" fill="#2b3e5a"/><path d="M1988 942l-5-4 12-6 5 3" fill="#77aaf7"/><path d="M1552 1263l-8-17 11-5 7 18" fill="#2b3e5b"/><path d="M1980 964l-4-13 15-6 4 13" fill="#5579b0"/><path d="M1212 1228l-15-7 5 8 15 6" fill="#577db6"/><path d="M1932 976l-3-13 4 0 4 14" fill="#4b6c9c"/><path d="M1527 1270l-12-16 12-2 11 16" fill="#2b3e5a"/><path d="M1990 947l-4-7 13-7 3 7" fill="#a8d8ff"/><path d="M1544 1266l-10-16 12-5 8 18" fill="#2b3e5b"/><path d="M1059 1219l-4-13 10 5 4 13" fill="#3f5b84"/><path d="M1536 1268l-11-16 11-3 10 17" fill="#2b3e5a"/><path d="M1195 1207l-15-7 2 10 15 7" fill="#567bb3"/><path d="M1935 977l-4-13 17-4 4 13" fill="#567bb3"/><path d="M1966 969l-4-13 16-6 4 14" fill="#567bb3"/><path d="M1950 973l-3-13 17-5 4 14" fill="#567bb3"/><path d="M1975 948l-3-5 13-6 4 4" fill="#77aaf7"/><path d="M1268 1268l-40-8 13 0 38 9" fill="#293c56"/><path d="M1917 990l10-13-6-10-9 14" fill="#577db6"/><path d="M1926 960l-6-2 11-4 1 6" fill="#77aaf7"/><path d="M1328 1257l-30-14 14-7 28 15" fill="#2d415f"/><path d="M1911 1017l11-13-1-9-11 13" fill="#5980ba"/><path d="M1924 964l-3 6-1-8 2-6" fill="#5377ad"/><path d="M1930 960l0-5 17-4 1 5" fill="#77aaf7"/><path d="M1961 952l-2-5 15-5 3 5" fill="#77aaf7"/><path d="M1977 953l-3-7 14-7 3 7" fill="#97c8ff"/><path d="M1946 956l-1-5 16-4 2 5" fill="#77aaf7"/><path d="M1929 964l-4-5 7-1 2 7" fill="#6693d5"/><path d="M1055 1202l7-4 8 5-5 4" fill="#77aaf7"/><path d="M1932 965l-2-7 17-4 2 8" fill="#74a5ed"/><path d="M1277 1269l-38-9 13-1 36 9" fill="#2a3d59"/><path d="M1963 958l-3-8 16-5 3 7" fill="#84b4fc"/><path d="M1930 962l-8 3-1-8 6 2" fill="#77aaf7"/><path d="M1055 1208l2-7 9 5-1 7" fill="#6490d1"/><path d="M1317 1261l-31-12 14-7 30 14" fill="#2d415e"/><path d="M1947 962l-2-8 17-4 3 7" fill="#78a9f1"/><path d="M1802 1102l6-12 1-10-6 13" fill="#5174a8"/><path d="M1286 1268l-36-9 14-2 34 9" fill="#2b3e5a"/><path d="M1307 1264l-33-11 14-5 31 12" fill="#2d405d"/><path d="M1216 1233l-15-5 6 6 15 5" fill="#587eb7"/><path d="M1296 1267l-34-10 14-4 33 11" fill="#2c3f5c"/><path d="M1067 1224l-4-14 12 3 4 14" fill="#486796"/><path d="M1178 1195l-14-7 4 7 15 8" fill="#5072a6"/><path d="M1196 1215l-14-7 3 10 15 6" fill="#577db5"/><path d="M1063 1207l6-5 10 2-4 6" fill="#77aaf7"/><path d="M1910 1024l11-13 1-9-11 13" fill="#5980ba"/><path d="M1938 974l-5-4-6-10 5 4" fill="#5479af"/><path d="M1063 1212l1-7 12 3-1 7" fill="#6996da"/><path d="M1928 972l-2 6-5-9 2-7" fill="#5b83be"/><path d="M1920 998l11-13-5-10-10 14" fill="#587fb8"/><path d="M1935 970l-8 3-5-10 7-3" fill="#77aaf7"/><path d="M1077 1226l-4-13 14 1 4 13" fill="#4f71a4"/><path d="M1800 1109l7-11 2-10-7 12" fill="#5275aa"/><path d="M1073 1209l4-5 12 1-3 5" fill="#77aaf7"/><path d="M1335 1234l-10-8 6 8 11 6" fill="#4f72a5"/><path d="M1089 1227l-4-13 15-1 3 13" fill="#5377ad"/><path d="M1073 1215l1-8 13 1 0 8" fill="#6c9be1"/><path d="M1160 1211l-4-14 4-3 3 13" fill="#496998"/><path d="M1808 1084l6-12 3-9-6 13" fill="#4b6c9d"/><path d="M1907 1030l12-12 3-9-11 13" fill="#5980ba"/><path d="M1182 1201l-14-7 1 11 15 6" fill="#567bb3"/><path d="M1145 1216l-4-14 17-6 4 13" fill="#557bb2"/><path d="M1084 1210l3-5 13-1-1 5" fill="#77aaf7"/><path d="M1199 1222l-15-6 4 9 16 5" fill="#587eb7"/><path d="M1101 1227l-3-14 16-2 3 13" fill="#557ab1"/><path d="M1155 1193l-3-4 12-3-4 4" fill="#77aaf7"/><path d="M1162 1185l4 4 4 8-5-5" fill="#5275aa"/><path d="M1130 1221l-4-13 17-6 4 13" fill="#567bb3"/><path d="M1115 1224l-3-13 16-4 4 13" fill="#567bb3"/><path d="M1085 1216l0-8 14-1 1 8" fill="#6e9ee5"/><path d="M1140 1199l-2-5 16-6 3 5" fill="#77aaf7"/><path d="M1157 1199l-3-7 7-3-1 7" fill="#75a1e3"/><path d="M1097 1210l1-6 14-2 1 5" fill="#77aaf7"/><path d="M1921 1005l11-12-2-10-11 13" fill="#5980ba"/><path d="M1942 983l-6-5-4-10 5 4" fill="#567bb3"/><path d="M1125 1204l-2-5 17-6 2 5" fill="#77aaf7"/><path d="M1159 1190l4-5 3 7-8 2" fill="#77aaf7"/><path d="M1932 980l-2 6-5-9 3-7" fill="#5a80bb"/><path d="M1111 1208l-1-6 15-4 2 5" fill="#77aaf7"/><path d="M1142 1204l-3-7 17-6 3 7" fill="#8abaff"/><path d="M1098 1215l-1-7 15-3 2 8" fill="#71a1e9"/><path d="M1938 979l-7 2-5-10 8-3" fill="#77aaf7"/><path d="M1127 1209l-2-7 16-6 3 8" fill="#81b2fa"/><path d="M1112 1213l-2-7 16-5 3 8" fill="#77a7ef"/><path d="M1341 1239l-11-7 7 7 11 6" fill="#5073a7"/><path d="M1807 1092l7-12 0-10-6 12" fill="#5174a8"/><path d="M1203 1228l-16-5 6 7 16 5" fill="#587eb8"/><path d="M1946 1003l-4-13-2-11 4 14" fill="#263750"/><path d="M1702 1171l8-24 4 1-8 23" fill="#2c405d"/><path d="M1157 1198l3-7 1 11-2 7" fill="#567bb2"/><path d="M1184 1209l-15-6 2 10 16 6" fill="#577db5"/><path d="M1164 1190l6 5 1 11-6-5" fill="#5a81bb"/><path d="M1158 1192l8-1 1 11-7 1" fill="#77aaf7"/><path d="M1920 1013l12-13 0-9-11 12" fill="#5a81bb"/><path d="M1704 1171l8-23 14 1-9 22" fill="#2c405d"/><path d="M1782 1152l22-22 9-8-23 23" fill="#293a55"/><path d="M1933 988l-2 6-2-9 2-7" fill="#577cb5"/><path d="M1943 991l-5-4-2-10 5 4" fill="#597fb8"/><path d="M1697 1181l10-23 4-10-9 24" fill="#283952"/><path d="M1940 987l-8 2-2-10 8-2" fill="#77aaf7"/><path d="M1459 1246l-15-17 2-3 17 17" fill="#2c3f5c"/><path d="M1462 1243l-17-17 2 3 19 16" fill="#273952"/><path d="M1806 1099l7-11 1-10-6 12" fill="#5276ab"/><path d="M1207 1234l-15-5 8 5 15 5" fill="#587eb7"/><path d="M1715 1171l9-22 15 0-11 22" fill="#2c405c"/><path d="M1775 1158l20-22 10-7-21 22" fill="#293c56"/><path d="M1367 1268l-29-9 11 3 28 9" fill="#283a54"/><path d="M1326 1227l-11-7 7 8 11 7" fill="#4f72a5"/><path d="M1451 1251l-17-15 11-8 16 17" fill="#2c3f5c"/><path d="M1813 1074l6-13 3-8-6 12" fill="#4b6c9d"/><path d="M1946 1012l-4-14 0-10 4 13" fill="#2e415f"/><path d="M1918 1019l11-12 3-9-11 13" fill="#5a81bb"/><path d="M1726 1171l11-22 15-1-14 22" fill="#2c3f5c"/><path d="M1186 1217l-15-6 4 9 15 5" fill="#587eb7"/><path d="M1464 1244l-18-16 10 6 17 14" fill="#283a54"/><path d="M1766 1162l19-21 12-6-21 22" fill="#2a3d58"/><path d="M1158 1207l3-7 2 11-2 7" fill="#577db6"/><path d="M1165 1199l6 5 2 10-5-4" fill="#587eb7"/><path d="M1736 1170l14-21 14-2-15 21" fill="#2c3f5b"/><path d="M1897 1064l25-24 10-8-25 24" fill="#293b56"/><path d="M1692 1188l10-21 6-11-10 23" fill="#283953"/><path d="M1757 1165l17-21 13-4-19 21" fill="#2b3e59"/><path d="M1159 1201l8-1 2 10-7 2" fill="#77aaf7"/><path d="M1747 1168l15-21 14-3-18 21" fill="#2b3e5b"/><path d="M1442 1257l-18-13 12-9 17 15" fill="#2c3f5c"/><path d="M1933 996l-2 6 0-10 2-6" fill="#5378ae"/><path d="M1375 1271l-28-9 12 2 27 8" fill="#293b55"/><path d="M1824 1083l15-24 17-1-17 23" fill="#2e425f"/><path d="M1803 1106l8-10 2-10-7 11" fill="#5377ad"/><path d="M1943 1000l-6-5 1-10 5 5" fill="#5c84c0"/><path d="M1585 1217l-4-21 3 2 5 19" fill="#2a3d58"/><path d="M1583 1219l-2-20 1-3 4 20" fill="#2a3c57"/><path d="M1939 996l-7 1 0-10 8-2" fill="#77aaf7"/><path d="M1887 1069l24-23 12-7-24 24" fill="#2a3d58"/><path d="M1914 1025l11-12 5-8-12 12" fill="#587fb8"/><path d="M1837 1081l17-23 18-2-19 23" fill="#2d415f"/><path d="M1432 1262l-19-12 12-7 19 13" fill="#2c3f5b"/><path d="M1813 1082l7-12 0-10-7 12" fill="#5174a9"/><path d="M1331 1233l-10-6 7 7 11 6" fill="#5174a8"/><path d="M1384 1272l-27-9 13 1 25 8" fill="#2a3c57"/><path d="M1471 1248l-17-15 11 5 16 14" fill="#283a54"/><path d="M1876 1073l22-23 14-5-23 23" fill="#2b3e5b"/><path d="M1851 1080l19-23 16-3-20 22" fill="#2d415e"/><path d="M1587 1217l-5-20 13 4 4 18" fill="#2b3d59"/><path d="M1943 1020l-4-13 3-11 4 14" fill="#364d70"/><path d="M1577 1226l-3-19 8-9 2 20" fill="#2a3c58"/><path d="M1189 1224l-15-5 6 7 15 5" fill="#587fb8"/><path d="M1864 1077l20-23 16-4-22 23" fill="#2c405c"/><path d="M1423 1266l-21-10 13-7 19 12" fill="#2c3f5b"/><path d="M1687 1195l10-20 6-10-10 22" fill="#283a54"/><path d="M1393 1272l-25-8 13-2 24 9" fill="#2a3d58"/><path d="M1413 1269l-22-9 13-5 21 10" fill="#2b3e5a"/><path d="M1403 1271l-24-9 14-3 22 9" fill="#2b3e5a"/><path d="M1931 1003l-3 6 3-9 2-6" fill="#4f72a5"/><path d="M1167 1208l5 4 5 9-6-4" fill="#557ab2"/><path d="M1160 1216l3-7 4 10-2 7" fill="#5a81bc"/><path d="M1161 1211l8-3 4 9-7 3" fill="#77aaf7"/><path d="M1940 1008l-5-5 3-10 5 5" fill="#608ac8"/><path d="M1937 1004l-8 0 3-9 8-1" fill="#77aaf7"/><path d="M1597 1219l-4-18 13 3 2 17" fill="#2b3d59"/><path d="M1479 1251l-16-14 11 5 16 12" fill="#293b55"/><path d="M1337 1239l-11-6 8 6 11 5" fill="#5275aa"/><path d="M1570 1232l-4-16 9-10 3 18" fill="#2a3d58"/><path d="M1680 1201l10-19 8-9-10 20" fill="#293b55"/><path d="M1300 1244l-24-12 15-8 23 13" fill="#2d415f"/><path d="M1812 1090l7-11 1-11-7 12" fill="#5276ab"/><path d="M1194 1229l-15-4 7 5 15 5" fill="#587fb8"/><path d="M1938 1028l-4-13 6-10 4 13" fill="#3f5a82"/><path d="M1168 1235l-4-13 7 8 3 14" fill="#314665"/><path d="M1164 1227l-4-13 5 10 4 13" fill="#2a3c57"/><path d="M1818 1063l7-12 2-9-6 12" fill="#4b6c9d"/><path d="M1230 1260l-32-7 14 1 31 7" fill="#2a3c57"/><path d="M1317 1221l-11-7 7 9 11 6" fill="#4f72a5"/><path d="M1288 1249l-25-9 15-8 24 11" fill="#2d415e"/><path d="M1606 1221l-2-18 14 2 0 16" fill="#2b3e59"/><path d="M1170 1215l6 5 6 7-5-4" fill="#5275aa"/><path d="M1488 1254l-15-13 12 3 14 11" fill="#293b56"/><path d="M1562 1238l-5-15 10-9 4 17" fill="#2a3d58"/><path d="M1673 1206l9-17 9-8-9 18" fill="#2a3c57"/><path d="M1932 1011l-7-1 5-8 7 0" fill="#77aaf7"/><path d="M1935 1016l-5-6 6-9 5 6" fill="#6994d5"/><path d="M1241 1261l-31-7 14-2 30 8" fill="#2b3d59"/><path d="M1164 1224l2-7 7 8-2 7" fill="#5d86c3"/><path d="M1276 1254l-27-9 15-6 26 10" fill="#2d405d"/><path d="M1165 1219l7-3 6 7-6 4" fill="#77aaf7"/><path d="M1252 1260l-30-7 15-4 29 8" fill="#2c3e5b"/><path d="M1264 1258l-29-8 16-5 27 8" fill="#2c405c"/><path d="M1616 1221l0-16 14 0-2 16" fill="#2b3e5a"/><path d="M1931 1035l-4-13 8-9 4 13" fill="#476694"/><path d="M1664 1211l8-16 11-7-9 17" fill="#2a3c58"/><path d="M1809 1097l8-10 3-10-8 11" fill="#5378ae"/><path d="M1497 1255l-14-11 12 1 13 11" fill="#2a3c57"/><path d="M1554 1244l-6-14 11-8 4 15" fill="#2b3d59"/><path d="M1173 1242l-4-13 9 7 4 13" fill="#395176"/><path d="M1819 1072l7-12-1-11-6 12" fill="#5174a9"/><path d="M1626 1221l2-16 13-1-3 16" fill="#2b3e5a"/><path d="M1836 1060l-3-14 4 2 3 13" fill="#425e89"/><path d="M1925 1019l-6-3 7-7 7 1" fill="#77aaf7"/><path d="M1655 1215l7-16 12-5-8 16" fill="#2a3d58"/><path d="M1322 1228l-11-7 7 8 11 6" fill="#5174a8"/><path d="M1928 1024l-5-7 8-8 5 6" fill="#80adf1"/><path d="M1175 1222l5 4 8 5-5-3" fill="#4e70a2"/><path d="M1636 1220l3-15 14-3-5 16" fill="#2b3e59"/><path d="M1826 1047l-2 6 3-9 1-5" fill="#4d6ea0"/><path d="M1506 1256l-13-11 13-1 12 11" fill="#2a3d58"/><path d="M1646 1218l5-15 13-5-7 16" fill="#2b3d59"/><path d="M1545 1248l-7-13 12-6 5 14" fill="#2b3d59"/><path d="M1302 1211l-11-8 8 6 10 7" fill="#4a6a9a"/><path d="M1831 1043l-6-2 13-3-2 6" fill="#77aaf7"/><path d="M1921 1042l-4-13 11-8 4 13" fill="#4e70a3"/><path d="M1839 1061l-4-13 17-1 4 13" fill="#5377ad"/><path d="M1169 1231l2-7 9 6-2 8" fill="#618bcb"/><path d="M1170 1225l7-3 8 6-6 4" fill="#77aaf7"/><path d="M1516 1255l-12-10 14-3 10 12" fill="#2b3d59"/><path d="M1535 1251l-8-11 13-6 7 13" fill="#2b3d59"/><path d="M1834 1048l-5-6 7 0 1 8" fill="#638ece"/><path d="M1833 1046l-8 2 2-9 5 3" fill="#77aaf7"/><path d="M1837 1050l-6-4-1-5 4 7" fill="#4a6a99"/><path d="M1526 1254l-10-11 13-4 8 12" fill="#2b3d59"/><path d="M1834 1044l2-6 17-1-2 6" fill="#77aaf7"/><path d="M1916 1025l-5-3 9-7 6 2" fill="#77aaf7"/><path d="M1806 1104l7-10 5-9-8 10" fill="#5479af"/><path d="M1854 1060l-4-13 17-2 4 13" fill="#5479af"/><path d="M1840 1071l-4-13-1-11 4 13" fill="#2a3c58"/><path d="M1910 1047l-4-13 13-6 4 13" fill="#5377ad"/><path d="M1918 1030l-3-6 10-8 4 6" fill="#a2d1ff"/><path d="M1835 1050l-1-8 17-1 1 8" fill="#6e9ee5"/><path d="M1180 1248l-4-13 11 4 4 14" fill="#415d88"/><path d="M1849 1043l2-6 16-1 0 5" fill="#77aaf7"/><path d="M1869 1058l-4-13 17-3 4 13" fill="#557bb2"/><path d="M1898 1052l-4-13 14-6 4 14" fill="#557bb2"/><path d="M1905 1031l-3-5 11-5 5 3" fill="#77aaf7"/><path d="M1328 1234l-11-6 8 7 11 5" fill="#5276ab"/><path d="M1884 1056l-4-13 16-5 4 14" fill="#567bb3"/><path d="M1818 1080l7-11 1-11-7 12" fill="#5276ab"/><path d="M1850 1049l-1-8 18-2 1 8" fill="#6f9fe7"/><path d="M1907 1036l-3-7 12-6 4 6" fill="#a4d4ff"/><path d="M1827 1056l-2 6-1-11 2-6" fill="#557ab1"/><path d="M1865 1041l0-5 16-3 0 5" fill="#77aaf7"/><path d="M1893 1035l-2-5 12-4 4 4" fill="#77aaf7"/><path d="M1177 1231l6-4 9 4-5 4" fill="#77aaf7"/><path d="M1308 1215l-11-7 7 10 10 6" fill="#4f72a6"/><path d="M1837 1060l-5-5-1-11 5 4" fill="#5a82bc"/><path d="M1176 1237l2-8 10 5-1 7" fill="#6591d3"/><path d="M1879 1039l0-5 14-4 2 5" fill="#77aaf7"/><path d="M1834 1056l-8 1-1-11 8-2" fill="#77aaf7"/><path d="M1866 1047l-1-8 16-3 2 8" fill="#71a2ea"/><path d="M1291 1227l-4-13 2-4 4 13" fill="#3f5b84"/><path d="M1895 1041l-3-8 14-5 3 7" fill="#8bbbff"/><path d="M1881 1044l-2-7 15-4 2 7" fill="#78a9f1"/><path d="M1189 1252l-4-13 13 2 3 14" fill="#496998"/><path d="M1285 1210l-5-4 12-5-3 5" fill="#77aaf7"/><path d="M1709 1149l7-21 3 3-6 19" fill="#2c3f5b"/><path d="M1277 1234l-3-13 14-9 4 13" fill="#5276ab"/><path d="M1288 1215l-4-7 6-4 0 8" fill="#6a95d4"/><path d="M1288 1206l2-5 7 6-8 3" fill="#77aaf7"/><path d="M1289 1212l-1-8 2 5-2 7" fill="#4b6c9d"/><path d="M1185 1235l5-5 11 2-4 6" fill="#77aaf7"/><path d="M1840 1081l-4-13 0-12 4 13" fill="#2e415f"/><path d="M1272 1217l-4-4 14-8 5 4" fill="#77aaf7"/><path d="M1185 1241l1-8 12 3 0 7" fill="#6997db"/><path d="M1816 1088l7-10 3-11-8 11" fill="#5478ae"/><path d="M1291 1225l-4-13 7 9 3 14" fill="#2d415e"/><path d="M1199 1254l-3-13 13 1 4 13" fill="#5072a6"/><path d="M1711 1150l6-20 16 2-8 19" fill="#2c405c"/><path d="M1274 1222l-3-6 15-9 3 7" fill="#a9d8ff"/><path d="M1264 1241l-4-13 16-8 3 13" fill="#5377ad"/><path d="M1827 1065l-2 6 0-11 2-6" fill="#5378ae"/><path d="M1313 1222l-11-6 7 9 11 5" fill="#5174a8"/><path d="M1195 1237l4-5 12 0-2 6" fill="#77aaf7"/><path d="M1445 1231l-12-14 1-4 14 14" fill="#2a3c57"/><path d="M1259 1224l-4-4 14-8 5 4" fill="#77aaf7"/><path d="M1837 1069l-6-4 1-12 5 5" fill="#5c84c0"/><path d="M1211 1255l-4-13 15-2 3 14" fill="#5478af"/><path d="M1294 1205l5 4 6 10-5-4" fill="#5478ae"/><path d="M1250 1247l-4-14 16-6 4 13" fill="#557ab1"/><path d="M1833 1065l-7 1 0-11 8-1" fill="#77aaf7"/><path d="M1196 1243l0-8 13 1 1 8" fill="#6c9be2"/><path d="M1803 1131l17-18 9-9-18 19" fill="#283a54"/><path d="M1261 1230l-3-8 15-7 3 7" fill="#a3d3ff"/><path d="M1287 1214l3-7 6 9-2 7" fill="#5c84bf"/><path d="M1224 1254l-4-13 15-4 4 14" fill="#567bb3"/><path d="M1237 1251l-4-13 15-5 4 13" fill="#567bb3"/><path d="M1288 1208l7-3 7 10-8 3" fill="#77aaf7"/><path d="M1723 1150l8-18 17 1-10 18" fill="#2c405c"/><path d="M1207 1238l2-5 12-2 0 6" fill="#77aaf7"/><path d="M1245 1230l-3-5 15-6 3 4" fill="#77aaf7"/><path d="M1436 1238l-14-12 12-11 13 14" fill="#2c3f5b"/><path d="M1219 1237l0-6 13-2 2 5" fill="#77aaf7"/><path d="M1232 1234l-2-5 14-4 3 4" fill="#77aaf7"/><path d="M1208 1244l-1-8 14-1 1 7" fill="#6f9fe6"/><path d="M1247 1235l-3-7 15-6 3 7" fill="#94c5ff"/><path d="M1812 1095l8-10 4-9-7 10" fill="#5479b0"/><path d="M1447 1229l-14-14 10 8 14 12" fill="#283953"/><path d="M1837 1090l-3-13 2-11 4 13" fill="#33496b"/><path d="M1220 1243l-1-8 14-3 2 7" fill="#74a4ec"/><path d="M1233 1240l-2-8 15-5 3 8" fill="#81b1fa"/><path d="M1794 1137l16-18 12-7-18 18" fill="#293b56"/><path d="M1736 1151l10-18 16 0-11 17" fill="#2c3f5c"/><path d="M1296 1233l-4-13 8 9 4 13" fill="#314665"/><path d="M1319 1229l-11-6 8 7 11 5" fill="#5276ab"/><path d="M1825 1074l-2 6 2-11 2-6" fill="#5174a8"/><path d="M1702 1169l8-18 5-12-8 19" fill="#273852"/><path d="M1425 1245l-14-11 13-10 13 13" fill="#2c3f5b"/><path d="M1581 1198l-3-17 2 4 4 15" fill="#273852"/><path d="M1581 1201l-2-16 0-4 3 17" fill="#263750"/><path d="M1784 1142l15-17 13-7-17 18" fill="#2a3d58"/><path d="M1749 1150l11-17 16-2-13 17" fill="#2c3f5c"/><path d="M1835 1079l-6-5 3-11 5 4" fill="#5f88c5"/><path d="M1831 1074l-7 1 2-11 7-1" fill="#77aaf7"/><path d="M1299 1213l5 4 7 9-5-4" fill="#5276ab"/><path d="M1773 1146l14-17 14-5-15 17" fill="#2b3e5a"/><path d="M1761 1149l13-18 15-3-14 17" fill="#2c3f5b"/><path d="M1349 1262l-23-7 13 3 22 6" fill="#293b55"/><path d="M1292 1222l3-7 7 9-2 7" fill="#5d86c3"/><path d="M1293 1216l7-3 8 9-7 3" fill="#77aaf7"/><path d="M1455 1234l-14-12 12 7 13 11" fill="#283953"/><path d="M1583 1199l-4-16 13 5 3 15" fill="#2a3d58"/><path d="M1415 1251l-16-9 13-9 15 11" fill="#2c3f5b"/><path d="M1574 1209l-2-15 8-11 2 17" fill="#2a3c57"/><path d="M1833 1099l-3-13 4-11 4 13" fill="#3a5379"/><path d="M1359 1264l-22-7 14 1 21 6" fill="#2a3c57"/><path d="M1696 1177l8-16 7-12-8 18" fill="#283953"/><path d="M1302 1241l-3-13 8 7 4 14" fill="#364e71"/><path d="M1404 1256l-17-8 14-7 15 9" fill="#2c3f5b"/><path d="M1827 1083l-7-1 4-9 8-1" fill="#77aaf7"/><path d="M1831 1087l-6-5 5-10 5 5" fill="#638ecd"/><path d="M1370 1264l-21-6 15-2 19 7" fill="#2a3d58"/><path d="M1304 1220l6 4 8 7-5-3" fill="#4f72a5"/><path d="M1392 1260l-18-7 14-6 18 9" fill="#2b3e5b"/><path d="M1716 1130l-4-13 3 3 4 13" fill="#364e71"/><path d="M1381 1263l-19-7 14-4 18 8" fill="#2b3e5a"/><path d="M1593 1203l-3-15 15 3 2 15" fill="#2a3d58"/><path d="M1299 1230l1-7 9 7-2 7" fill="#608ac8"/><path d="M1299 1224l7-3 8 7-6 4" fill="#77aaf7"/><path d="M1566 1218l-3-14 10-11 2 15" fill="#2a3c57"/><path d="M1464 1239l-13-11 12 5 13 10" fill="#293a55"/><path d="M1711 1114l-4-4 12 0-4 5" fill="#77aaf7"/><path d="M1827 1107l-3-13 7-10 3 13" fill="#415e88"/><path d="M1711 1117l-8 0 5-8 4 4" fill="#77aaf7"/><path d="M1713 1119l-4-7 7 1-1 9" fill="#5e87c4"/><path d="M1717 1132l-4-13 16 2 4 13" fill="#4d6fa1"/><path d="M1716 1122l-6-5 1-5 2 7" fill="#5073a7"/><path d="M1689 1184l8-15 8-10-8 16" fill="#293a55"/><path d="M1714 1143l-4-13 4-12 4 13" fill="#374e72"/><path d="M1434 1219l-4-14 1-3 4 13" fill="#334a6b"/><path d="M1310 1248l-4-14 10 6 4 14" fill="#3d577e"/><path d="M1821 1091l-6-2 6-8 7 0" fill="#77aaf7"/><path d="M1713 1115l4-5 15 2-3 5" fill="#77aaf7"/><path d="M1825 1096l-5-6 6-10 6 6" fill="#6e9adc"/><path d="M1714 1121l0-8 16 2 0 8" fill="#6b9adf"/><path d="M1605 1205l-2-14 15 3 0 13" fill="#2b3d59"/><path d="M1702 1126l-3 6 4-11 3-6" fill="#4f71a5"/><path d="M1428 1202l-6-3 10-6-1 5" fill="#77aaf7"/><path d="M1558 1225l-4-12 11-10 3 13" fill="#2a3d58"/><path d="M1474 1242l-13-10 13 4 12 9" fill="#293b56"/><path d="M1429 1198l1-5 9 4-7 4" fill="#77aaf7"/><path d="M1820 1115l-4-14 9-9 4 14" fill="#496897"/><path d="M1731 1134l-4-14 17 2 4 13" fill="#4f71a5"/><path d="M1431 1207l-5-6 5-5 0 8" fill="#5e87c3"/><path d="M1431 1204l-2-8 4 4-2 7" fill="#5276ab"/><path d="M1711 1132l-5-6 4-11 5 5" fill="#618bc9"/><path d="M1681 1191l7-15 10-8-8 15" fill="#293b56"/><path d="M1306 1230l7-3 9 5-5 4" fill="#77aaf7"/><path d="M1708 1127l-8 0 4-11 8-1" fill="#77aaf7"/><path d="M1423 1227l-4-13 12-10 4 13" fill="#4b6c9d"/><path d="M1306 1236l2-7 9 6-1 7" fill="#638ecf"/><path d="M1434 1217l-4-13 10 7 4 13" fill="#3a5378"/><path d="M1727 1117l3-6 16 1-3 6" fill="#77aaf7"/><path d="M1814 1098l-6-2 8-8 7 1" fill="#77aaf7"/><path d="M1616 1207l0-14 15 1-2 13" fill="#2b3e59"/><path d="M1417 1211l-6-3 12-10 6 2" fill="#77aaf7"/><path d="M1817 1103l-5-6 9-9 5 6" fill="#87b5f9"/><path d="M1728 1122l0-7 16 1 0 7" fill="#6c9be1"/><path d="M1318 1253l-4-14 12 5 4 13" fill="#44618d"/><path d="M1420 1216l-4-7 12-10 4 7" fill="#95c3ff"/><path d="M1549 1232l-5-12 12-9 3 13" fill="#2b3d59"/><path d="M1746 1135l-4-14 16 0 4 13" fill="#5275aa"/><path d="M1810 1121l-4-13 11-8 4 13" fill="#4f71a5"/><path d="M1484 1245l-12-10 14 2 11 9" fill="#2a3c57"/><path d="M1671 1196l7-13 12-8-8 15" fill="#2a3c57"/><path d="M1710 1153l-4-13 5-12 4 13" fill="#3a5378"/><path d="M1579 1183l-4-13 2 3 3 14" fill="#2a3c57"/><path d="M1580 1187l-4-13-1-4 4 13" fill="#273851"/><path d="M1431 1200l6-4 10 7-6 4" fill="#77aaf7"/><path d="M1430 1206l2-7 10 7-2 7" fill="#628ccc"/><path d="M1627 1207l2-13 15-1-3 13" fill="#2b3e5a"/><path d="M1412 1236l-4-13 13-10 4 13" fill="#4d6fa1"/><path d="M1741 1118l3-6 15 0-1 5" fill="#77aaf7"/><path d="M1805 1104l-5-3 10-7 5 3" fill="#77aaf7"/><path d="M1315 1236l5-5 11 4-5 5" fill="#77aaf7"/><path d="M1661 1201l6-13 13-6-7 13" fill="#2a3d58"/><path d="M1760 1135l-4-14 16-1 4 13" fill="#5479af"/><path d="M1314 1241l2-7 11 4-1 8" fill="#6693d6"/><path d="M1799 1126l-4-13 13-6 4 13" fill="#5478ae"/><path d="M1742 1123l0-7 16-1 0 8" fill="#6d9de4"/><path d="M1807 1110l-4-7 11-8 4 7" fill="#a5d4ff"/><path d="M1539 1237l-6-10 13-8 4 12" fill="#2b3d59"/><path d="M1639 1207l3-13 14-3-4 13" fill="#2b3e59"/><path d="M1574 1167l-2-5 11 2-6 5" fill="#77aaf7"/><path d="M1573 1170l-7-1 7-8 2 5" fill="#77aaf7"/><path d="M1495 1246l-11-9 14 0 10 9" fill="#2a3d58"/><path d="M1650 1204l4-12 15-5-6 13" fill="#2b3d59"/><path d="M1406 1219l-5-3 12-9 6 2" fill="#77aaf7"/><path d="M1774 1133l-4-13 15-3 4 13" fill="#567bb3"/><path d="M1787 1130l-4-13 14-5 4 14" fill="#567bb3"/><path d="M1704 1137l-8 0 5-12 8 0" fill="#77aaf7"/><path d="M1707 1142l-5-6 5-12 5 6" fill="#638ecd"/><path d="M1576 1172l-3-7 5 2-1 8" fill="#587fb8"/><path d="M1577 1175l-6-6 3-5 2 8" fill="#577db5"/><path d="M1756 1118l1-6 14-2 0 6" fill="#77aaf7"/><path d="M1328 1256l-4-13 13 3 4 13" fill="#4b6b9b"/><path d="M1794 1110l-3-5 11-5 4 3" fill="#77aaf7"/><path d="M1409 1224l-4-6 12-10 5 7" fill="#9fceff"/><path d="M1579 1185l-4-13 14 5 4 13" fill="#44628e"/><path d="M1528 1241l-7-9 14-6 6 10" fill="#2b3d59"/><path d="M1572 1196l-4-13 8-11 4 13" fill="#425f89"/><path d="M1506 1246l-10-9 15-2 8 9" fill="#2b3d59"/><path d="M1442 1223l-3-13 11 7 4 13" fill="#3d577e"/><path d="M1756 1123l0-7 15-2 1 8" fill="#6f9fe7"/><path d="M1769 1116l0-5 13-3 2 5" fill="#77aaf7"/><path d="M1782 1114l-1-6 12-4 3 5" fill="#77aaf7"/><path d="M1796 1115l-3-7 12-6 4 7" fill="#9fcfff"/><path d="M1400 1243l-4-13 14-9 3 14" fill="#5073a7"/><path d="M1517 1244l-8-9 14-4 7 10" fill="#2b3d59"/><path d="M1324 1239l5-5 11 2-3 6" fill="#77aaf7"/><path d="M1770 1122l-1-8 14-3 2 8" fill="#73a4ec"/><path d="M1783 1119l-2-7 14-5 3 7" fill="#82b3fb"/><path d="M1324 1245l1-7 12 2 0 7" fill="#6a98dc"/><path d="M1576 1168l5-4 13 4-5 5" fill="#77aaf7"/><path d="M1395 1227l-5-4 12-8 6 3" fill="#77aaf7"/><path d="M1704 1162l-4-13 7-11 4 13" fill="#3f5a83"/><path d="M1566 1180l-7-1 8-11 7 1" fill="#77aaf7"/><path d="M1339 1259l-4-14 14 1 3 13" fill="#5174a8"/><path d="M1576 1174l0-7 14 4-1 8" fill="#6794d6"/><path d="M1569 1185l-5-6 8-11 5 6" fill="#709cde"/><path d="M1439 1206l7-4 10 7-5 4" fill="#77aaf7"/><path d="M1439 1212l1-7 12 6-2 8" fill="#638ecf"/><path d="M1397 1232l-4-7 13-8 4 6" fill="#a9d8ff"/><path d="M1388 1250l-4-14 14-7 4 13" fill="#5377ad"/><path d="M1335 1241l3-5 12 0-2 6" fill="#77aaf7"/><path d="M1350 1259l-3-13 14-2 4 13" fill="#5479b0"/><path d="M1383 1233l-4-5 13-6 4 4" fill="#77aaf7"/><path d="M1375 1254l-3-13 14-6 4 14" fill="#557ab2"/><path d="M1698 1146l-7-1 6-10 7 0" fill="#77aaf7"/><path d="M1335 1247l0-7 13 0 1 8" fill="#6d9ce2"/><path d="M1701 1151l-5-6 7-11 5 6" fill="#6a95d6"/><path d="M1591 1189l-4-13 15 4 3 13" fill="#476694"/><path d="M1363 1257l-4-13 15-4 3 14" fill="#567bb3"/><path d="M1564 1206l-4-13 9-12 4 14" fill="#45638f"/><path d="M1385 1238l-3-7 13-7 4 7" fill="#a3d3ff"/><path d="M1346 1242l2-6 12-1 0 5" fill="#77aaf7"/><path d="M1452 1229l-4-13 13 5 3 13" fill="#415e88"/><path d="M1371 1237l-3-5 13-4 4 4" fill="#77aaf7"/><path d="M1358 1241l0-6 12-3 2 5" fill="#77aaf7"/><path d="M1347 1248l-1-8 14-2 1 8" fill="#6f9fe7"/><path d="M1372 1243l-2-7 13-6 4 7" fill="#8cbdff"/><path d="M1587 1172l5-4 14 3-4 5" fill="#77aaf7"/><path d="M1697 1171l-4-13 8-10 4 13" fill="#45638f"/><path d="M1360 1246l-2-7 14-4 2 7" fill="#77a8f0"/><path d="M1587 1178l1-7 14 4 0 7" fill="#6895d9"/><path d="M1558 1189l-7-1 9-11 7 1" fill="#77aaf7"/><path d="M1561 1194l-5-6 10-11 4 6" fill="#78a4e7"/><path d="M1449 1212l6-4 11 5-5 4" fill="#77aaf7"/><path d="M1448 1218l2-7 12 5-1 7" fill="#6692d4"/><path d="M1691 1154l-7-1 8-10 7 1" fill="#77aaf7"/><path d="M1603 1193l-3-13 14 2 4 14" fill="#4b6b9c"/><path d="M1694 1159l-5-6 8-10 5 6" fill="#78a4e7"/><path d="M1555 1215l-4-14 10-10 4 13" fill="#496998"/><path d="M1462 1234l-3-13 13 3 3 13" fill="#476694"/><path d="M1600 1176l4-5 14 2-4 5" fill="#77aaf7"/><path d="M1688 1178l-4-13 10-9 4 13" fill="#4b6b9b"/><path d="M1600 1182l0-8 15 3 0 7" fill="#6a98dd"/><path d="M1549 1198l-6-2 10-10 6 2" fill="#77aaf7"/><path d="M1459 1217l5-5 12 3-4 5" fill="#77aaf7"/><path d="M1552 1203l-5-6 11-10 4 6" fill="#89b7fb"/><path d="M1616 1195l-4-13 15 1 4 13" fill="#4f71a5"/><path d="M1459 1223l1-8 12 3 0 8" fill="#6895d9"/><path d="M1682 1162l-5-3 9-8 6 2" fill="#77aaf7"/><path d="M1685 1167l-4-7 10-8 4 6" fill="#91bfff"/><path d="M1545 1222l-4-13 11-9 4 13" fill="#4d6fa1"/><path d="M1473 1237l-3-13 13 1 4 14" fill="#4d6e9f"/><path d="M1678 1185l-4-14 12-7 4 13" fill="#5073a7"/><path d="M1612 1178l4-5 13 1-2 5" fill="#77aaf7"/><path d="M1613 1184l0-8 14 1 0 8" fill="#6c9be1"/><path d="M1629 1196l-4-13 15-1 4 13" fill="#5377ac"/><path d="M1539 1205l-5-3 10-8 6 3" fill="#77aaf7"/><path d="M1673 1168l-5-4 10-6 6 2" fill="#77aaf7"/><path d="M1470 1220l4-5 12 1-3 6" fill="#77aaf7"/><path d="M1542 1211l-4-7 11-9 4 7" fill="#9fceff"/><path d="M1667 1190l-4-13 13-6 4 13" fill="#5479af"/><path d="M1470 1226l0-8 14 2 0 7" fill="#6b99de"/><path d="M1675 1173l-4-7 11-7 5 7" fill="#a8d7ff"/><path d="M1534 1228l-4-13 13-7 3 13" fill="#5275aa"/><path d="M1625 1179l2-5 13-1-1 5" fill="#77aaf7"/><path d="M1642 1196l-4-14 15-2 3 13" fill="#557ab2"/><path d="M1485 1239l-4-14 15 0 3 13" fill="#5175aa"/><path d="M1654 1194l-3-14 14-4 3 13" fill="#567bb3"/><path d="M1662 1173l-3-5 11-5 4 4" fill="#77aaf7"/><path d="M1625 1185l0-8 14-1 1 8" fill="#6e9ee5"/><path d="M1637 1179l1-6 13-2 1 5" fill="#77aaf7"/><path d="M1529 1212l-5-4 12-7 5 3" fill="#77aaf7"/><path d="M1481 1221l3-5 12 0-1 5" fill="#77aaf7"/><path d="M1650 1177l-1-6 12-3 2 4" fill="#77aaf7"/><path d="M1522 1233l-4-13 14-6 4 14" fill="#557ab0"/><path d="M1497 1239l-3-14 14-2 4 13" fill="#557ab1"/><path d="M1663 1179l-2-8 12-6 4 7" fill="#9bcbff"/><path d="M1531 1217l-4-7 12-7 4 7" fill="#a9d8ff"/><path d="M1510 1237l-4-13 14-4 4 13" fill="#567bb3"/><path d="M1638 1184l-1-7 14-3 2 8" fill="#71a1e9"/><path d="M1482 1227l0-7 13-1 1 8" fill="#6d9de3"/><path d="M1651 1182l-2-7 14-4 2 7" fill="#7eaef6"/><path d="M1517 1217l-2-5 11-5 4 4" fill="#77aaf7"/><path d="M1493 1222l1-6 13-2 0 6" fill="#77aaf7"/><path d="M1505 1220l0-5 11-4 3 5" fill="#77aaf7"/><path d="M1519 1222l-3-7 13-6 3 7" fill="#95c5ff"/><path d="M1494 1227l-1-7 14-2 1 7" fill="#70a0e8"/><path d="M1507 1226l-2-8 13-4 3 7" fill="#7babf3"/></g></g></svg><!--/BOWL-->
<!-- RIGHT STRIP -->
<div class="a" style="left:1332px;top:150px;width:34px;height:559px;background:#f7f7f7;border-left:1px solid #e0e0e0"></div>

<!-- BOTTOM TABS -->
<div class="a" style="left:0;top:694px;width:1332px;height:15px;background:#f7f7f7;border-top:1px solid #8c8c8c"></div>

<!-- STATUS BAR -->
<div class="a" style="left:0;top:709px;width:1366px;height:19px;background:#e5e5e5;border-top:1px solid #9c9c9c"></div>
<div class="t" style="left:1px;top:712px;transform:scaleX(0.92);transform-origin:0 0">SOLIDWORKS Premium 2022 SP1.0</div>
<div class="t" style="left:1034px;top:712px">Edition: Pièce</div>
<div class="t" style="left:1242px;top:712px">MMGS</div>

<!-- TASKBAR -->
<div class="a" style="left:0;top:728px;width:1366px;height:40px;background:linear-gradient(90deg,#22363f,#1f2f3d 50%,#1b2643)"></div>


<!-- HEADSUP TOOLBAR -->
<svg class="a" style="left:0;top:172px" width="1366" height="30" viewBox="0 172 1366 30">
 <defs>
  <linearGradient id="hg" x1="0" y1="0" x2="1" y2="1"><stop offset="0" stop-color="#f4f4f4"/><stop offset="1" stop-color="#9a9a9a"/></linearGradient>
  <linearGradient id="hb" x1="0" y1="0" x2="1" y2="0"><stop offset="0" stop-color="#bfe3f7"/><stop offset="1" stop-color="#4d9ad0"/></linearGradient>
 </defs>
 <!-- zoom fit -->
 <path d="M612 189.5 L607 194.5" stroke="#2a5a7a" stroke-width="3.4" stroke-linecap="round"/>
 <path d="M612 189.5 L607 194.5" stroke="#7ab8de" stroke-width="1.8" stroke-linecap="round"/>
 <circle cx="617.3" cy="184.3" r="6.3" fill="#eef3f6" stroke="#555" stroke-width="1.2"/>
 <path d="M617.3 179.8 l-1.5 1.8 h3z M617.3 188.8 l-1.5 -1.8 h3z M612.8 184.3 l1.8 -1.5 v3z M621.8 184.3 l-1.8 -1.5 v3z" fill="#444"/>
 <!-- zoom area -->
 <rect x="636.5" y="177.5" width="13" height="12" fill="none" stroke="#777" stroke-dasharray="2 1.5"/>
 <circle cx="641" cy="185" r="5.2" fill="#eef6fb" stroke="#555" stroke-width="1.1"/>
 <path d="M637 189 L632 195" stroke="#3a8ac0" stroke-width="2.6" stroke-linecap="round"/>
 <!-- previous view -->
 <path d="M660 188 l10 -9 l5 4.5 l-10 9z" fill="url(#hg)" stroke="#555" stroke-width="0.9"/>
 <path d="M665 192 h11 M668.5 189 l-3.5 3 l3.5 3" fill="none" stroke="#2f7fc0" stroke-width="2"/>
 <!-- section view -->
 <path d="M685 182 a8 3 0 0 1 17 0 v10 a8 3 0 0 1 -17 0z" fill="#dcdcdc" stroke="#444" stroke-width="0.9"/>
 <path d="M687 183 v9 l4 2 v-9z M698 183 v9 l3 -1.5 v-9z" fill="#5aa0d0" stroke="#2a5a80" stroke-width="0.7"/>
 <!-- dynamic annotation -->
 <path d="M710 189 l10 -9 l5 4.5 l-10 9z" fill="url(#hg)" stroke="#555" stroke-width="0.9"/>
 <path d="M714 178 l4 4 l-3 1 l4 3" fill="none" stroke="#f0a020" stroke-width="1.5"/>
 <text x="718" y="197" font-family="Liberation Serif" font-size="10" fill="#2a6fb0">A</text>
 <!-- view orientation -->
 <path d="M736.5 182.5 h12 v13 h-12z" fill="#9cccec" stroke="#333" stroke-width="0.9"/>
 <path d="M736.5 182.5 l4.5 -4.5 h12 l-4.5 4.5z" fill="#f4f4f4" stroke="#333" stroke-width="0.9"/>
 <path d="M748.5 182.5 l4.5 -4.5 v13 l-4.5 4.5z" fill="#fafafa" stroke="#333" stroke-width="0.9"/>
 <path d="M744.5 179 v3 M750.5 186 v4" stroke="#333" stroke-width="0.8"/>
 <!-- display style -->
 <path d="M777 182 l6 -3 l11 2 v12 l-6 3 l-11 -2z" fill="url(#hb)" stroke="#555" stroke-width="0.9"/>
 <path d="M783 179 v12 l11 2 M777 194 l6 -3" fill="none" stroke="#fff" stroke-width="0.8"/>
 <!-- hide/show -->
 <path d="M816 187 q9 -8 19 0 q-9 8 -19 0z" fill="#ddd" stroke="#777" stroke-width="0.9"/>
 <circle cx="825.5" cy="187" r="3.5" fill="#555"/>
 <path d="M825.5 180 v14" stroke="#888" stroke-width="1"/>
 <!-- edit appearance -->
 <circle cx="864" cy="186" r="8" fill="#e8c020"/>
 <path d="M864 186 L856 186 A8 8 0 0 1 864 178 Z" fill="#2a6fd0"/>
 <path d="M864 186 L864 178 A8 8 0 0 1 872 186 Z" fill="#d8262a"/>
 <path d="M864 186 L856 186 A8 8 0 0 0 864 194 Z" fill="#2ea040"/>
 <path d="M866 196 l1 -4 l7 -7 l3 3 l-7 7z" fill="#f2c33a" stroke="#333" stroke-width="0.8"/>
 <!-- apply scene -->
 <circle cx="890" cy="184" r="7.5" fill="#e8c020"/>
 <path d="M890 184 L882.5 184 A7.5 7.5 0 0 1 890 176.5 Z" fill="#2a6fd0"/>
 <path d="M890 184 L890 176.5 A7.5 7.5 0 0 1 897.5 184 Z" fill="#d8262a"/>
 <path d="M890 184 L882.5 184 A7.5 7.5 0 0 0 890 191.5 Z" fill="#2ea040"/>
 <rect x="881" y="189" width="19" height="7" fill="#fff" stroke="#444" stroke-width="0.6"/>
 <path d="M882 190 h3 v2 h-3z M888 190 h3 v2 h-3z M894 190 h3 v2 h-3z M885 192 h3 v2 h-3z M891 192 h3 v2 h-3z M897 192 h3 v2 h-3z" fill="#333"/>
 <!-- monitor -->
 <rect x="922.5" y="178.5" width="17" height="12" fill="#e8e8e8" stroke="#666"/>
 <path d="M931 191 v3 M926 195 h10" stroke="#444" stroke-width="1.3"/>
 <g fill="#777"><path d="M762 185 h5 l-2.5 3z"/><path d="M802 185 h5 l-2.5 3z"/><path d="M842 185 h5 l-2.5 3z"/><path d="M908 185 h5 l-2.5 3z"/><path d="M948 185 h5 l-2.5 3z"/></g>
</svg>

<!-- TRIAD -->
<svg class="a" style="left:230px;top:590px" width="90" height="80" viewBox="230 590 90 80">
 <path d="M271.7 635.8 L265.5 617" stroke="#0b6a0b" stroke-width="2.6"/>
 <path d="M264.2 611.5 l-3 8.5 l6 -0.5z" fill="#0b6a0b"/>
 <path d="M271.7 635.8 L287 640.5" stroke="#b00000" stroke-width="2.6"/>
 <path d="M292.5 642.5 l-7.5 -4.5 l-1 5.5z" fill="#b00000"/>
 <path d="M271.7 635.8 L258 648" stroke="#0000b8" stroke-width="3"/>
 <circle cx="257" cy="648.5" r="2.8" fill="#0000b8"/>
 <text x="259.5" y="608" font-family="Liberation Sans" font-size="8" fill="#129012">Y</text>
 <text x="294.5" y="645" font-family="Liberation Sans" font-size="8" fill="#ff3030">X</text>
 <text x="246" y="656" font-family="Liberation Sans" font-size="8" fill="#3030ff">Z</text>
</svg>

<!-- TASK PANE -->
<div class="a" style="left:1307px;top:201px;width:26px;height:169px;background:#d5d5d5;border:1px solid #8c8c8c;border-right:none"></div>
<svg class="a" style="left:1300px;top:150px" width="66" height="560" viewBox="1300 150 66 560">
 <g stroke="#9a9a9a" stroke-width="1"><path d="M1308 225.5 h25 M1308 249.5 h25 M1308 273.5 h25 M1308 297.5 h25 M1308 321.5 h25 M1308 345.5 h25"/></g>
 <rect x="1308" y="322" width="25" height="23" fill="#f7f7f7"/>
 <!-- swr resources -->
 <circle cx="1320" cy="213" r="9" fill="#1d5680"/>
 <circle cx="1320" cy="211" r="6" fill="#3f8fc0" opacity="0.6"/>
 <path d="M1318 209 v7 l5 -3.5z" fill="none" stroke="#cfe8f8" stroke-width="1"/>
 <!-- home -->
 <path d="M1311.5 238 l8.5 -8 l8.5 8" fill="none" stroke="#1e5275" stroke-width="2.4"/>
 <path d="M1313.5 237 v9.5 h13 v-9.5" fill="#fff" stroke="#222" stroke-width="1.2"/>
 <rect x="1318" y="240" width="4.5" height="6.5" fill="none" stroke="#222"/>
 <!-- library -->
 <path d="M1313 254 l3 -2 l3 2 v15 h-6z M1319 254 l3 -2 l3 2 v15 h-6z M1325 256 l2 -1.5 l2 1.5 v13 h-4z" fill="#f4f4f4" stroke="#222" stroke-width="1"/>
 <!-- folder -->
 <path d="M1311.5 277.5 h6 l2 2 h8 v14 h-16z" fill="#eee" stroke="#222" stroke-width="1"/>
 <path d="M1313 284 h17 l-3 9.5 h-15.5z" fill="#f8f8f8" stroke="#222" stroke-width="1"/>
 <!-- view palette -->
 <rect x="1311.5" y="301.5" width="17" height="16" fill="#f4f4f4" stroke="#222" stroke-width="1"/>
 <path d="M1313.5 304 h9 v3 h-3 v4 h4 v4 h-10 v-4 h3 v-4 h-3z" fill="#f0b820" stroke="#6a5000" stroke-width="0.6"/>
 <rect x="1324.5" y="310" width="3" height="5" fill="#333"/>
 <!-- appearances ball -->
 <circle cx="1320" cy="333.5" r="8" fill="#e8c020"/>
 <path d="M1320 333.5 L1312 333.5 A8 8 0 0 1 1320 325.5 Z" fill="#2a6fd0"/>
 <path d="M1320 333.5 L1320 325.5 A8 8 0 0 1 1328 333.5 Z" fill="#d8262a"/>
 <path d="M1320 333.5 L1312 333.5 A8 8 0 0 0 1320 341.5 Z" fill="#2ea040"/>
 <circle cx="1317" cy="330" r="3" fill="#fff" opacity="0.35"/>
 <!-- custom props -->
 <rect x="1311.5" y="349.5" width="17" height="16" fill="#f4f4f4" stroke="#1d3a55" stroke-width="1.1"/>
 <rect x="1312" y="350" width="16" height="2.5" fill="#3f8cc0"/>
 <g fill="#2a6da0"><rect x="1314" y="354.5" width="3" height="2"/><rect x="1314" y="358" width="3" height="2"/><rect x="1314" y="361.5" width="3" height="2"/></g>
 <path d="M1318.5 355.5 h8 M1318.5 359 h8 M1318.5 362.5 h8" stroke="#333" stroke-width="0.9"/>
 <!-- right strip -->
 <path d="M1332.5 150 v22" stroke="#555" stroke-width="1"/>
 <g fill="#777"><circle cx="1340" cy="153.5" r="0.9"/><circle cx="1344" cy="153.5" r="0.9"/><circle cx="1348" cy="153.5" r="0.9"/><circle cx="1352" cy="153.5" r="0.9"/><circle cx="1356" cy="153.5" r="0.9"/><circle cx="1360" cy="153.5" r="0.9"/><circle cx="1364" cy="153.5" r="0.9"/></g>
 <g fill="none" stroke="#c6c6c6" stroke-width="1.8" stroke-linecap="round">
  <path d="M1346.5 184 C1348 178 1353 172.5 1360 171"/>
  <path d="M1344 178 L1353.5 173.5" stroke-width="1.3"/><path d="M1343.5 180.5 L1346 175.5 M1343.5 180.5 L1348.5 180.5" stroke-width="1.3"/>
  <path d="M1346.5 209.5 C1347.5 202 1352 197 1359 196.5 C1362 201 1361 207 1355 208 C1351 208.5 1349.5 204 1352 201"/>
  <path d="M1345.5 236 C1346.5 229 1351 222.5 1360 220.5"/>
  <path d="M1343.5 257.5 L1349 253 L1354 254 L1360 248 M1344 262 L1349 258.5 L1354 259.5 L1360 254.5"/>
  <path d="M1352 251.5 v5 M1350 254.5 l2 2.5 l2 -2.5" stroke-width="1.2"/>
  <path d="M1344.5 271 V287 H1360" stroke-width="2.2"/>
  <path d="M1346 272 V280 C1346 284 1350 286 1360 286" stroke-width="1.2"/>
  <path d="M1345 321 C1346 313 1350 307.5 1359 306 C1361 311 1360 318 1354 318.5 C1350 319 1348.5 315 1351 312"/>
  <path d="M1343.5 311 L1351 305" stroke-width="1.2"/>
  <path d="M1343 328 C1349 332 1356 338 1359 348"/>
  <path d="M1354 332 l-3 4.5 l4 1.5z M1347 340 l3 4.5 l-4 1z" fill="#c6c6c6" stroke-width="0.8"/>
  <path d="M1344.5 374.5 C1344.5 365 1347 357.5 1351.5 357.5 C1356 357.5 1358.5 365 1358.5 374.5"/>
  <circle cx="1351.5" cy="362" r="1.6" fill="#c6c6c6" stroke="none"/>
  <path d="M1343.5 400.5 C1344.5 393 1350 390 1354 385 L1358.5 383 L1355 400.5 Z" stroke-width="1.4"/>
  <path d="M1349 394 L1356.5 394.5 M1351.5 390 L1357.5 390 M1346 398 L1355.5 398" stroke-width="1"/>
 </g>
 <g stroke="#d0d0d0" stroke-width="0.9" fill="none"><path d="M1343.5 167 v6 M1340.5 170 h6 M1341.4 167.9 l4.2 4.2 M1345.6 167.9 l-4.2 4.2"/><path d="M1343.5 193 v6 M1340.5 196 h6 M1341.4 193.9 l4.2 4.2 M1345.6 193.9 l-4.2 4.2"/></g>
 <rect x="1346" y="222.5" width="3" height="3" fill="#f7f7f7" stroke="#c6c6c6" stroke-width="1"/>
 <path d="M1340 295.5 h25 M1335 412.5 h31" stroke="#8a8a8a" stroke-width="1"/>
</svg>

<!-- BOTTOM TABS -->
<div class="a" style="left:2px;top:695px;width:64px;height:14px;background:#b2b2b2;border-top:1px solid #5a5a5a"></div>
<svg class="a" style="left:0;top:694px" width="70" height="16" viewBox="0 694 70 16">
 <g stroke="#999" stroke-width="0.8"><path d="M18 696 v12 M34 696 v12 M50 696 v12"/></g>
 <g fill="#8e8e8e"><path d="M7 698 v8 h1.3 v-8z M13 698 v8 l-4.5 -4z"/><path d="M29 698 v8 l-5 -4z"/><path d="M39 698 v8 l5 -4z"/><path d="M55 698 v8 l4.5 -4z M60 698 v8 h1.3 v-8z"/></g>
</svg>
<div class="a" style="left:66px;top:695px;width:65px;height:14px;background:#fafafa;border-right:1px solid #8c8c8c;text-align:center;line-height:14px;font-weight:bold;color:#111">Modèle</div>
<div class="a" style="left:131px;top:695px;width:62px;height:14px;background:#d5d5d5;border-right:1px solid #8c8c8c;text-align:center;line-height:14px;white-space:nowrap"><span style="display:inline-block;transform:scaleX(0.93)">Vues 3D</span></div>
<div class="a" style="left:193px;top:695px;width:154px;height:14px;background:#d5d5d5;border-right:1px solid #8c8c8c;text-align:center;line-height:14px;white-space:nowrap">Etude de mouvement 1</div>

<!-- STATUS ICONS -->
<svg class="a" style="left:1300px;top:709px" width="66" height="19" viewBox="1300 709 66 19">
 <path d="M1314 721 h6 l-3 -4z" fill="#333"/>
 <path d="M1348 717 l6 -5 l9 5 v3 l-6 5 l-9 -5z" fill="#f4f4f4" stroke="#333" stroke-width="1"/>
 <path d="M1348 717 l9 5 l6 -5 M1357 722 v3" fill="none" stroke="#333" stroke-width="0.9"/>
 <circle cx="1354.5" cy="715.5" r="1.8" fill="none" stroke="#333" stroke-width="0.9"/>
</svg>

<!-- TASKBAR CONTENT -->
<svg class="a" style="left:0;top:728px" width="1366" height="40" viewBox="0 728 1366 40">
 <!-- windows -->
 <path d="M15.5 741 l7.5 -1.1 v7.2 h-7.5z M24 739.8 l8.5 -1.2 v8.5 h-8.5z M15.5 748 h7.5 v7.2 l-7.5 -1.1z M24 748 h8.5 v8.5 l-8.5 -1.2z" fill="#fff"/>
 <!-- task view -->
 <path d="M63.5 741.5 h12 M63.5 754.5 h12 M65.5 744.5 h8 v7 h-8z M78.5 740 v2.5 M78.5 744 v11" fill="none" stroke="#fff" stroke-width="1.2"/>
 <!-- explorer -->
 <path d="M112 741 h7 l2 2 h12.5 v14 h-21.5z" fill="#f0b020"/>
 <rect x="112" y="744.5" width="21.5" height="12.5" fill="#ffd35a"/>
 <path d="M116.5 757.5 v-6 h12.5 v6 h-3 v-3 h-6.5 v3z" fill="#2e86d8"/>
 <!-- yandex -->
 <circle cx="172" cy="748" r="11.8" fill="#fff"/>
 <path d="M166 741 l6 8 l6 -8 M172 749 v7.5" fill="none" stroke="#fc3f1d" stroke-width="3" stroke-linejoin="round"/>
 <!-- SW 2022 -->
 <path d="M208.5 742 l12.5 -4 l12 4 v12 l-12 4 l-12.5 -4z" fill="#c8231a"/>
 <path d="M221 738 v20 M208.5 742 l12.5 4 l12 -4" fill="none" stroke="#8a120c" stroke-width="0.8"/>
 <text x="210.5" y="751" font-family="Liberation Sans" font-weight="bold" font-size="9.5" fill="#fff">S</text>
 <text x="221.5" y="751" font-family="Liberation Sans" font-weight="bold" font-size="9.5" fill="#fff">W</text>
 <rect x="208" y="752.5" width="26" height="7" fill="#1c1c1c" opacity="0.85"/>
 <text x="211" y="759.3" font-family="Liberation Sans" font-weight="bold" font-size="7.5" fill="#fff">2022</text>
 <!-- Ai -->
 <rect x="259" y="737" width="22" height="21.5" rx="3" fill="#330000"/>
 <text x="262.5" y="753" font-family="Liberation Sans" font-weight="bold" font-size="12" fill="#ff9a00">Ai</text>
 <!-- underline -->
 <g fill="#76b9ed"><rect x="103" y="766" width="40" height="2"/><rect x="152" y="766" width="40" height="2"/><rect x="201" y="766" width="40" height="2"/><rect x="250" y="766" width="40" height="2"/></g>
 <!-- weather -->
 <circle cx="943.5" cy="743" r="5" fill="#f7a325"/>
 <path d="M928 755 a4.5 4.5 0 0 1 2 -8.5 a6.5 6.5 0 0 1 12 -1 a4.5 4.5 0 0 1 7 4.5 a4 4 0 0 1 -1 5z" fill="#c9ddf5"/>
 <path d="M928 755 h20" stroke="#9ec0ea" stroke-width="1"/>
 <!-- tray -->
 <path d="M1094 752 l6 -6 l6 6" fill="none" stroke="#fff" stroke-width="1.3"/>
 <path d="M1119 742 h9 v12 h-9z M1128 746 l3 -2 v8 l-3 -2" fill="none" stroke="#fff" stroke-width="1.1"/>
 <path d="M1142 744 h12 v9 h-12z M1154 747 h1.5 v3 h-1.5 M1140 748.5 h2 M1145 741 v3" fill="none" stroke="#fff" stroke-width="1.1"/>
 <path d="M1166 755 a13 13 0 0 1 13 -13 M1169.5 755 a9.5 9.5 0 0 1 9.5 -9.5 M1173 755 a6 6 0 0 1 6 -6" fill="none" stroke="#fff" stroke-width="1.1"/>
 <circle cx="1177.5" cy="753.5" r="1.5" fill="#fff"/>
 <path d="M1187.5 745 h3 l4 -4 v14 l-4 -4 h-3z M1197 745 q2 3 0 6 M1199.5 743 q3.5 5 0 10 M1202 741 q5 7 0 14" fill="none" stroke="#fff" stroke-width="1.1"/>
 <text x="1221" y="753.5" font-family="Liberation Sans" font-size="14" fill="#fff">ε</text>
 <rect x="1361.5" y="728" width="1" height="40" fill="#6a7385"/>
 <!-- notif -->
 <path d="M1326.5 737.5 h17 v12 h-11 l-6 5z" fill="#fff"/>
 <path d="M1329 741 h12 M1329 744 h12 M1329 747 h9" stroke="#1b2644" stroke-width="1.1"/>
 <circle cx="1341.5" cy="755" r="7" fill="#2a2a2a" stroke="#9a9a9a" stroke-width="1"/>
 <text x="1338.2" y="759.2" font-family="Liberation Sans" font-weight="bold" font-size="10" fill="#fff">4</text>
</svg>
<div class="t" style="left:958px;top:741px;color:#fff;font-size:13px">17°C</div>
<div class="t" style="left:996px;top:741px;color:#fff;font-size:13px;transform:scaleX(1.04);transform-origin:0 0">Ciel couvert</div>
<div class="t" style="left:1264px;top:731px;color:#fff;font-size:12px">18:57</div>
<div class="t" style="left:1249px;top:749px;color:#fff;font-size:12px;transform:scaleX(0.96);transform-origin:0 0">02/05/2024</div>

</body></html>
